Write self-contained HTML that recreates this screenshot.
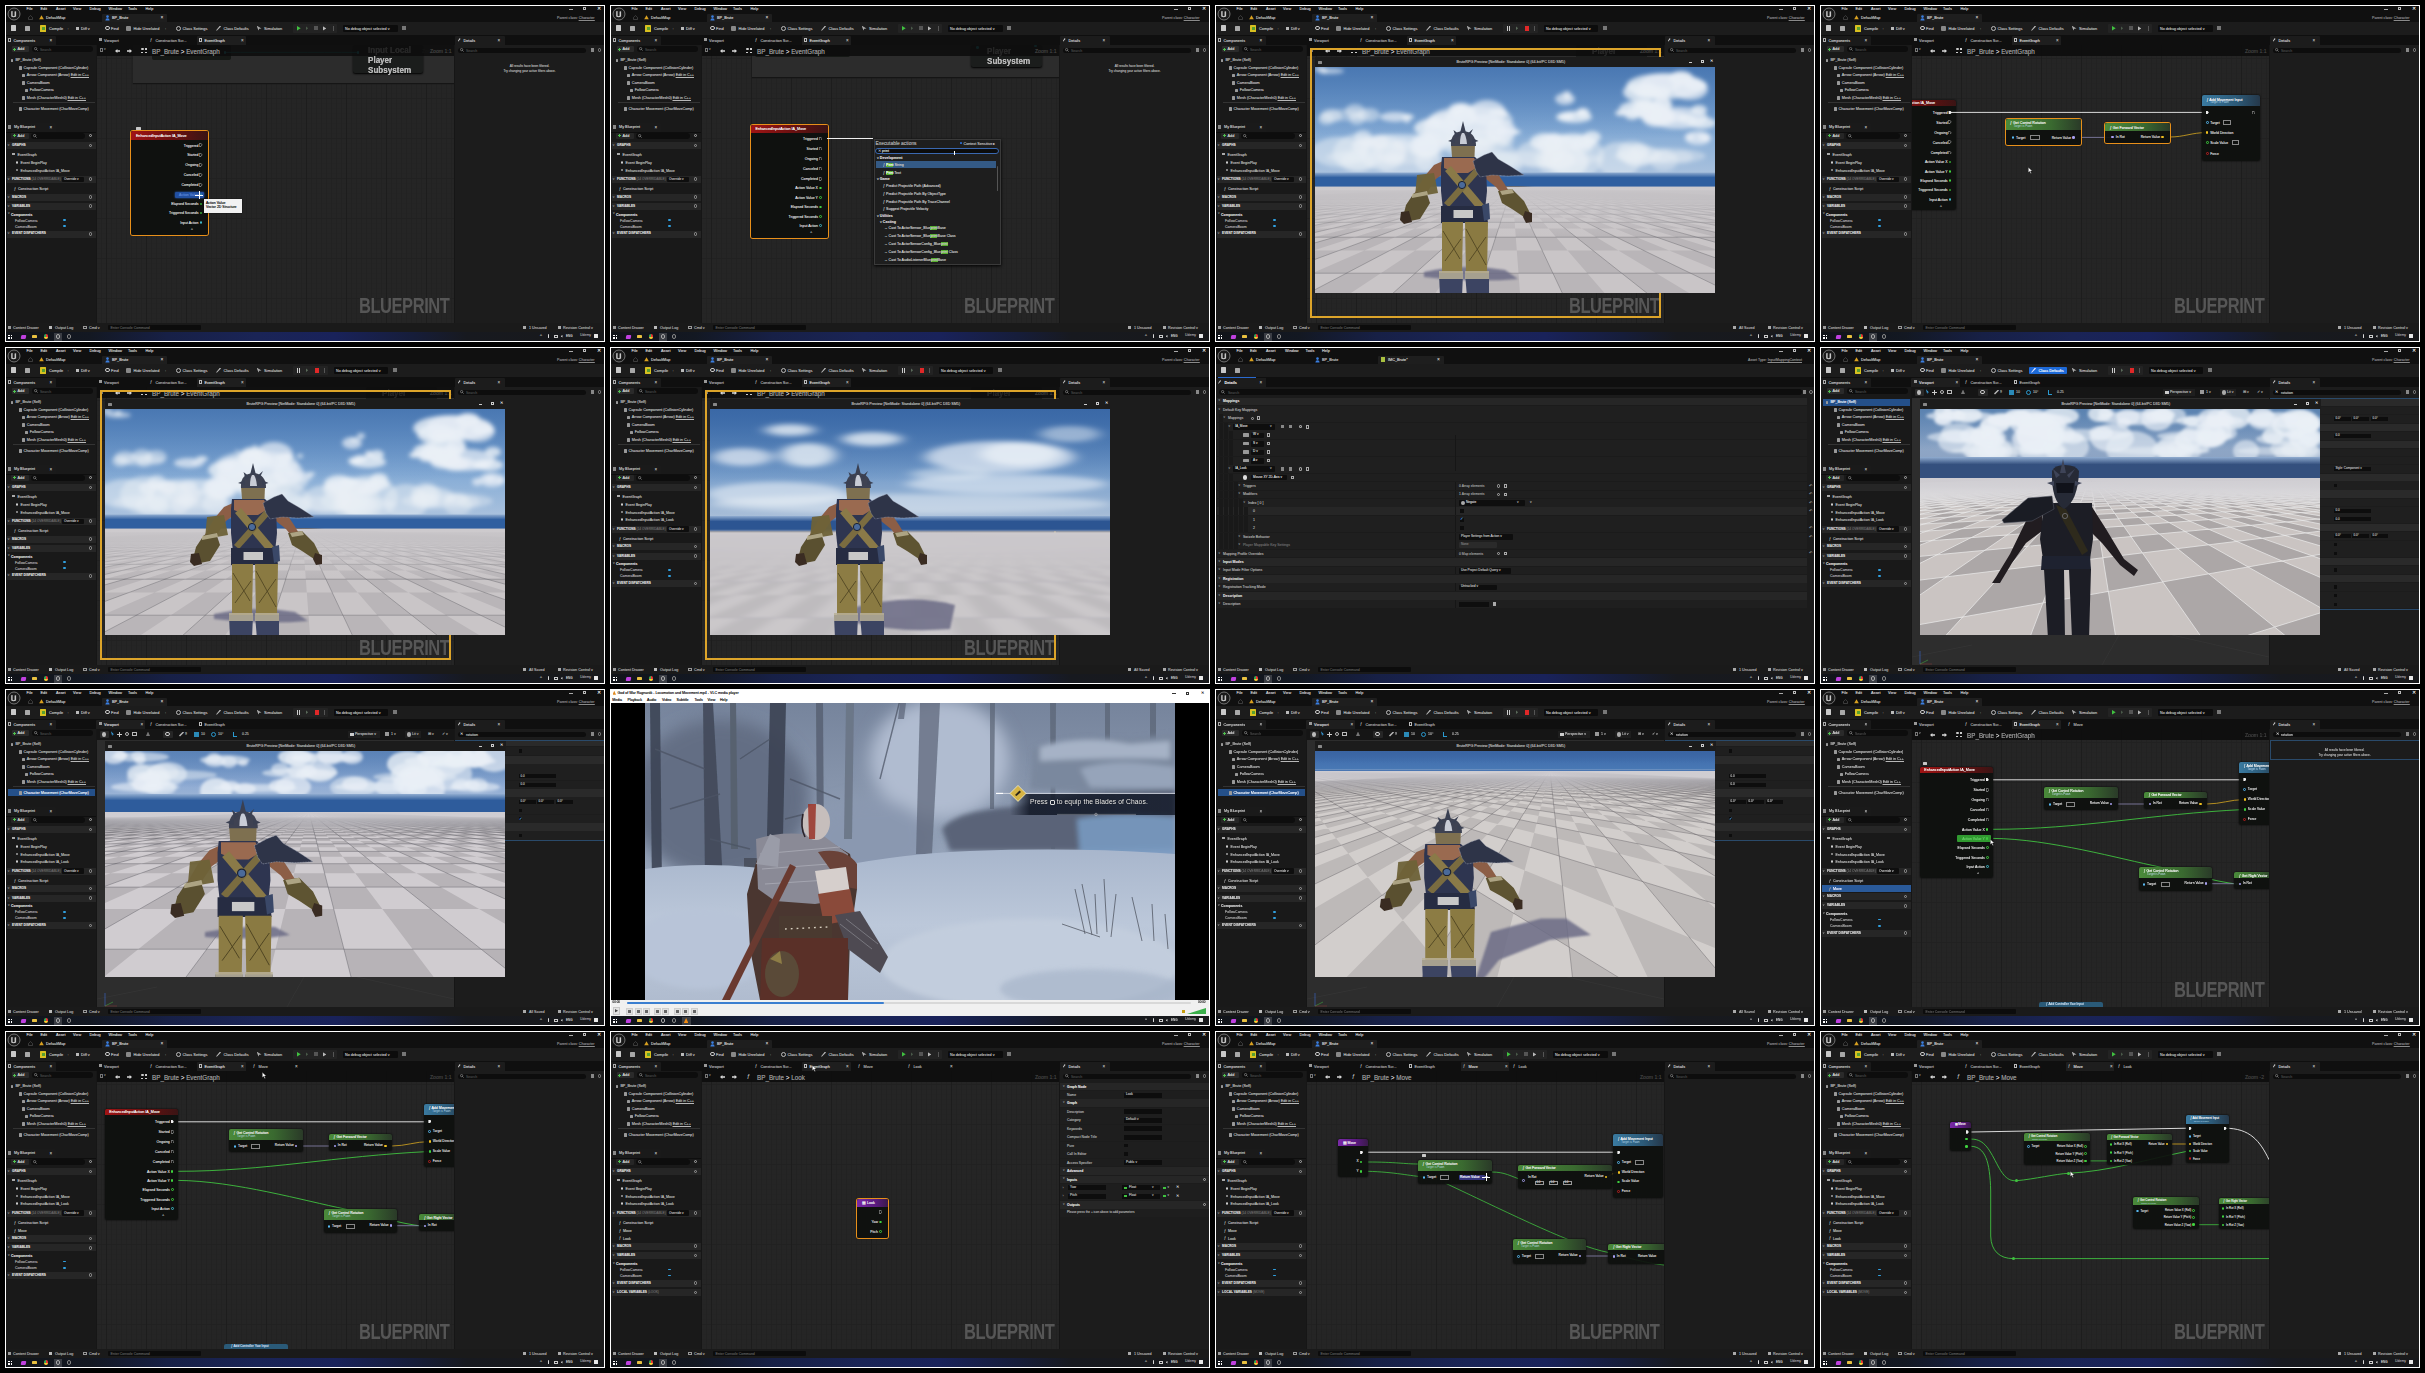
<!DOCTYPE html><html><head><meta charset="utf-8"><style>
*{margin:0;padding:0;box-sizing:border-box}
html,body{width:2425px;height:1373px;background:#000;overflow:hidden;font-family:"Liberation Sans",sans-serif}
.cell{position:absolute;width:600px;height:337px;overflow:hidden;background:#161616}
.bd{position:absolute;left:0;top:0;width:600px;height:337px;border:1px solid #fff;z-index:50}
.a{position:absolute}
.t{position:absolute;white-space:nowrap;color:#bdbdbd;font-size:3.4px;line-height:1.18;text-shadow:0 0 .35px currentColor;font-style:normal;font-weight:normal}
b{position:absolute;display:block;font-weight:normal}
i{position:absolute;white-space:nowrap;color:#bbb;line-height:1.18;text-shadow:0 0 .35px currentColor;font-style:normal;font-weight:normal}
.menu{left:1px;top:1px;width:598px;height:8px;background:#101010}
.tabs{left:1px;top:8px;width:598px;height:9px;background:#101010}
.tb{left:1px;top:17px;width:598px;height:13px;background:#1c1c1c}
.ptab{left:1px;top:30px;width:598px;height:10px;background:#0f0f0f}
.lp{left:1px;top:40px;width:90px;height:278px;background:#191919}
.dp{left:450px;top:40px;width:149px;height:278px;background:#1c1c1c}
.sb{left:1px;top:318px;width:598px;height:9px;background:#1a1a1a}
.task{left:1px;top:327px;width:598px;height:9px;background:linear-gradient(90deg,#111419 0%,#131822 14%,#172046 27%,#1a2456 42%,#19225a 55%,#161d3a 68%,#17191f 77%,#18191b 100%)}
.graph{left:92px;top:40px;width:357px;height:278px;background-color:#252525;
 background-image:linear-gradient(90deg,#1d1d1d 1px,transparent 1px),linear-gradient(0deg,#212121 1px,transparent 1px),linear-gradient(90deg,#222 1px,transparent 1px),linear-gradient(0deg,#242424 1px,transparent 1px);
 background-size:40px 40px,40px 40px,5px 5px,5px 5px;background-position:9px 0,0 14px,9px 0,0 14px}
.gbar{left:92px;top:40px;width:357px;height:11px;background:rgba(12,12,12,.85)}
.wm{position:absolute;left:354px;top:290px;font-weight:bold;font-size:22px;line-height:22px;color:#565656;transform-origin:0 0;transform:scale(.75,1.02);letter-spacing:-.6px}
.hdr{position:absolute;left:2px;width:89px;height:7px;background:#262626}
.srch{position:absolute;background:#0d0d0d;border-radius:3px}
.node{position:absolute;background:rgba(14,16,14,.93);border-radius:2px;box-shadow:0 0 2px #000}
.nh{position:absolute;left:0;top:0;right:0;border-radius:2px 2px 0 0}
.sel{outline:1px solid #f0a020;outline-offset:0px}
.pin{position:absolute;width:2.6px;height:2.6px;border-radius:50%;border:.6px solid #2fcf2f}
.ex{position:absolute;width:0;height:0;border-top:1.6px solid transparent;border-bottom:1.6px solid transparent;border-left:2.6px solid #ddd}
.ic{position:absolute;background:#9a9a9a}
</style></head><body><div class="cell" style="left:5px;top:5px"><div class="a menu"></div><div class="a tabs"></div><div class="a tb"></div><div class="a ptab"></div><svg class="a" style="left:2px;top:2px" width="14" height="14" viewBox="0 0 14 14"><circle cx="7" cy="7" r="6" fill="#1a1a1a" stroke="#9a9a9a" stroke-width=".7"/><path d="M4.2 4.3 L5.6 4 L5.6 8.8 Q6.6 9.6 7.6 8.8 L7.6 4.6 L9.1 4.2 L9.1 9.6 Q6.6 11 4.2 9.6Z" fill="#c8c8c8"/></svg><i style="left:21.5px;top:1.8px;font-size:3.8px;color:#c8c8c8;">File</i><i style="left:35.5px;top:1.8px;font-size:3.8px;color:#c8c8c8;">Edit</i><i style="left:51px;top:1.8px;font-size:3.8px;color:#c8c8c8;">Asset</i><i style="left:68px;top:1.8px;font-size:3.8px;color:#c8c8c8;">View</i><i style="left:84.5px;top:1.8px;font-size:3.8px;color:#c8c8c8;">Debug</i><i style="left:103.5px;top:1.8px;font-size:3.8px;color:#c8c8c8;">Window</i><i style="left:123px;top:1.8px;font-size:3.8px;color:#c8c8c8;">Tools</i><i style="left:140.5px;top:1.8px;font-size:3.8px;color:#c8c8c8;">Help</i><b style="left:564px;top:4px;width:4px;height:.6px;background:#aaa;"></b><div class="a" style="left:578px;top:2.2px;width:3.4px;height:3.2px;border:.6px solid #bbb"></div><i style="left:591.5px;top:1.3px;font-size:4.6px;color:#ddd;">✕</i><svg class="a" style="left:22.5px;top:10px" width="5" height="5" viewBox="0 0 5 5"><path d="M.5 2.5 L2.5 .6 L4.5 2.5 V4.5 H.5Z" fill="none" stroke="#666" stroke-width=".5"/></svg><svg class="a" style="left:33.5px;top:10.3px" width="5" height="4.5" viewBox="0 0 5 4.5"><path d="M2.5 .2 L4.8 4.3 H.2Z" fill="#d8a020"/></svg><i style="left:41px;top:10.8px;font-size:3.8px;color:#c0c0c0;">DefaultMap</i><b style="left:97px;top:8.5px;width:65px;height:8.5px;background:#1e1e1e;border-radius:1px 1px 0 0"></b><svg class="a" style="left:100px;top:9.5px" width="5" height="6" viewBox="0 0 5 6"><circle cx="2.5" cy="1.6" r="1.3" fill="#3a7ee0"/><path d="M.4 5.6 Q.4 3.2 2.5 3.2 Q4.6 3.2 4.6 5.6Z" fill="#3a7ee0"/></svg><i style="left:107px;top:10.8px;font-size:3.8px;color:#d0d0d0;">BP_Brute</i><i style="left:155.5px;top:10.3px;font-size:4.9px;">×</i><i style="left:552px;top:10.8px;font-size:3.6px;color:#8a8a8a;">Parent class: <u>Character</u></i><b style="left:5.5px;top:20px;width:5px;height:6px;background:#c8c8c8;border-radius:.5px"></b><b style="left:19.5px;top:20.5px;width:5px;height:5.5px;background:#a8a8a8;border-radius:.5px"></b><b style="left:35px;top:19.5px;width:6px;height:7px;background:#d8c020;border-radius:.5px"></b><b style="left:36.5px;top:21.5px;width:3px;height:3px;background:#58a030;"></b><i style="left:44px;top:22px;font-size:3.9px;">Compile</i><i style="left:62.5px;top:21.8px;font-size:4.2px;color:#888;">:</i><b style="left:71px;top:21.5px;width:3px;height:3.5px;background:#bbb;"></b><i style="left:76px;top:22px;font-size:3.9px;">Diff v</i><b style="left:100px;top:20.5px;width:4.5px;height:4.5px;border:.6px solid #ccc;border-radius:50%"></b><i style="left:106px;top:22px;font-size:3.9px;">Find</i><b style="left:121px;top:20.5px;width:5px;height:5px;background:#888;border-radius:1px"></b><i style="left:128.5px;top:22px;font-size:3.9px;">Hide Unrelated</i><i style="left:160px;top:21.8px;font-size:4.2px;color:#888;">:</i><b style="left:170.5px;top:20.5px;width:5px;height:5px;border:.7px solid #bbb;border-radius:50%"></b><i style="left:177.5px;top:22px;font-size:3.9px;">Class Settings</i><b style="left:211px;top:20.5px;width:5px;height:5px;background:#bbb;clip-path:polygon(0 100%,20% 100%,100% 20%,80% 0)"></b><i style="left:218.5px;top:22px;font-size:3.9px;">Class Defaults</i><b style="left:251.5px;top:20.5px;width:5px;height:5px;background:#aaa;clip-path:polygon(0 0,100% 60%,55% 65%,40% 100%)"></b><i style="left:259px;top:22px;font-size:3.9px;">Simulation</i><b style="left:288px;top:18.8px;width:44px;height:9.5px;background:#232323;border-radius:1px"></b><b style="left:291.7px;top:20.8px;width:4px;height:5px;background:#40c040;clip-path:polygon(0 0,100% 50%,0 100%)"></b><b style="left:300.5px;top:21px;width:2.6px;height:4.6px;background:#4a5a4a;clip-path:polygon(0 0,100% 50%,0 100%)"></b><b style="left:309px;top:21.2px;width:4px;height:4.2px;background:#555;"></b><b style="left:317.5px;top:21px;width:3.8px;height:4.8px;background:#bbb;clip-path:polygon(0 0,100% 50%,0 100%)"></b><b style="left:328px;top:21px;width:.6px;height:5px;background:#555;"></b><b style="left:338px;top:19.5px;width:55px;height:7px;background:#0c0c0c;border-radius:1px"></b><i style="left:340px;top:22px;font-size:3.7px;">No debug object selected v</i><b style="left:397px;top:21px;width:3.5px;height:4px;background:#777;"></b><div class="a sb"></div><b style="left:3px;top:320.5px;width:3px;height:3.5px;background:#999;"></b><i style="left:8px;top:320.7px;font-size:3.7px;color:#aaa;">Content Drawer</i><b style="left:44px;top:320.5px;width:3px;height:3.5px;background:#bbb;"></b><i style="left:50px;top:320.7px;font-size:3.7px;color:#aaa;">Output Log</i><b style="left:78px;top:320.7px;width:4px;height:3.2px;border:.5px solid #999"></b><i style="left:84px;top:320.7px;font-size:3.7px;color:#aaa;">Cmd v</i><b style="left:103px;top:319.5px;width:93px;height:5.5px;background:#0c0c0c;border-radius:1px"></b><i style="left:105.5px;top:320.6px;font-size:3.5px;color:#555;">Enter Console Command</i><b style="left:518px;top:320.5px;width:3px;height:3.6px;background:#aaa;"></b><i style="left:524px;top:320.7px;font-size:3.7px;color:#aaa;">1 Unsaved</i><b style="left:553px;top:320.5px;width:2.5px;height:3.8px;background:#aaa;"></b><i style="left:558px;top:320.7px;font-size:3.7px;color:#aaa;">Revision Control v</i><div class="a task"></div><b style="left:3.3px;top:329.5px;width:1.9px;height:1.9px;background:#fff;"></b><b style="left:5.6px;top:329.5px;width:1.9px;height:1.9px;background:#fff;"></b><b style="left:3.3px;top:331.8px;width:1.9px;height:1.9px;background:#fff;"></b><b style="left:5.6px;top:331.8px;width:1.9px;height:1.9px;background:#fff;"></b><b style="left:15.5px;top:329.5px;width:4.5px;height:4px;background:#c040e0;border-radius:1px;transform:skewX(-10deg)"></b><b style="left:27px;top:329.8px;width:4.8px;height:3.6px;background:#e8c040;border-radius:.4px"></b><div class="a" style="left:38.6px;top:329.2px;width:4.4px;height:4.4px;border-radius:50%;background:conic-gradient(#e33 0 33%,#fc3 0 66%,#3a5 0)"></div><b style="left:48.5px;top:327.5px;width:8.5px;height:8.5px;background:#3a3d44;"></b><b style="left:50.5px;top:329.3px;width:4.5px;height:4.5px;border:.6px solid #aaa;border-radius:50%"></b><b style="left:61.5px;top:329.4px;width:4.2px;height:4.2px;border:.6px solid #888;border-radius:50%"></b><i style="left:535px;top:329.4px;font-size:4.1px;">^</i><b style="left:542.5px;top:329.2px;width:1.6px;height:4.2px;background:#ddd;border-radius:1px"></b><b style="left:549px;top:329.6px;width:3.8px;height:3px;border:.5px solid #ccc"></b><b style="left:555.5px;top:330px;width:2px;height:2.5px;background:#ccc;clip-path:polygon(0 30%,40% 30%,100% 0,100% 100%,40% 70%,0 70%)"></b><i style="left:561px;top:329.9px;font-size:3px;color:#ccc;">ENG</i><i style="left:575px;top:328px;font-size:3.5px;color:rgba(230,230,230,.55);">Udemy</i><b style="left:588.5px;top:329.4px;width:4.5px;height:3.6px;background:#e8e8e8;border-radius:.3px"></b><div class="a lp"></div><b style="left:1px;top:31px;width:50px;height:9px;background:#1a1a1a;border-radius:1px 1px 0 0"></b><b style="left:3px;top:33px;width:3px;height:3.5px;border:.5px solid #aaa"></b><i style="left:8.5px;top:33.6px;font-size:3.8px;color:#c0c0c0;">Components</i><i style="left:44.5px;top:32.9px;font-size:4.6px;color:#aaa;">×</i><b style="left:7px;top:41px;width:17px;height:6px;background:#2a2a2a;border-radius:1px"></b><b style="left:9px;top:42.5px;width:1px;height:3px;background:#50c050;"></b><b style="left:8px;top:43.5px;width:3px;height:1px;background:#50c050;"></b><i style="left:12.5px;top:42.4px;font-size:3.8px;color:#ccc;">Add</i><div class="srch" style="left:27px;top:41px;width:61px;height:6px"></div><svg class="a" style="left:29px;top:42px" width="4" height="4" viewBox="0 0 4 4"><circle cx="1.6" cy="1.6" r="1.15" fill="none" stroke="#aaa" stroke-width=".55"/><path d="M2.4 2.4L3.6 3.6" stroke="#aaa" stroke-width=".6"/></svg><i style="left:35px;top:42.6px;font-size:3.5px;color:#444;">Search</i><b style="left:5.9px;top:53.6px;width:2.6px;height:3.6px;background:#999;border-radius:.6px"></b><i style="left:10.4px;top:53.2px;font-size:3.8px;color:#b8b8b8;letter-spacing:-.05px">BP_Brute (Self)</i><b style="left:14.1px;top:61.1px;width:2.6px;height:3.6px;background:#999;border-radius:.6px"></b><i style="left:18.6px;top:60.7px;font-size:3.8px;color:#b8b8b8;letter-spacing:-.05px">Capsule Component (CollisionCylinder)</i><b style="left:17.3px;top:68.7px;width:2.6px;height:3.6px;background:#999;border-radius:.6px"></b><i style="left:21.8px;top:68.3px;font-size:3.8px;color:#b8b8b8;letter-spacing:-.05px">Arrow Component (Arrow) <u>Edit in C++</u></i><b style="left:17.3px;top:76.2px;width:2.6px;height:3.6px;background:#999;border-radius:.6px"></b><i style="left:21.8px;top:75.8px;font-size:3.8px;color:#b8b8b8;letter-spacing:-.05px">CameraBoom</i><b style="left:20.3px;top:83.8px;width:2.6px;height:3.6px;background:#999;border-radius:.6px"></b><i style="left:24.8px;top:83.4px;font-size:3.8px;color:#b8b8b8;letter-spacing:-.05px">FollowCamera</i><b style="left:17.3px;top:91.3px;width:2.6px;height:3.6px;background:#999;border-radius:.6px"></b><i style="left:21.8px;top:90.9px;font-size:3.8px;color:#b8b8b8;letter-spacing:-.05px">Mesh (CharacterMesh0)  <u>Edit in C++</u></i><b style="left:14.1px;top:102.2px;width:2.6px;height:3.6px;background:#999;border-radius:.6px"></b><i style="left:18.6px;top:101.8px;font-size:3.8px;color:#b8b8b8;letter-spacing:-.05px">Character Movement (CharMoveComp)</i><b style="left:8px;top:97.3px;width:82px;height:.5px;background:#333;"></b><b style="left:1px;top:118px;width:50px;height:8.5px;background:#1a1a1a;border-radius:1px 1px 0 0"></b><b style="left:3px;top:120px;width:3px;height:3.5px;background:#888;"></b><i style="left:9px;top:120.4px;font-size:3.8px;color:#c0c0c0;">My Blueprint</i><i style="left:44.5px;top:119.6px;font-size:4.6px;color:#aaa;">×</i><b style="left:1px;top:126.5px;width:90px;height:.5px;background:#0e0e0e;"></b><b style="left:6px;top:128px;width:18px;height:5.5px;background:#262626;border-radius:1px"></b><b style="left:9px;top:129.3px;width:1px;height:3px;background:#50c050;"></b><b style="left:8px;top:130.3px;width:3px;height:1px;background:#50c050;"></b><i style="left:12.5px;top:129.4px;font-size:3.8px;color:#ccc;">Add</i><div class="srch" style="left:26px;top:128px;width:54px;height:5.5px"></div><svg class="a" style="left:28px;top:128.8px" width="4" height="4" viewBox="0 0 4 4"><circle cx="1.6" cy="1.6" r="1.15" fill="none" stroke="#aaa" stroke-width=".55"/><path d="M2.4 2.4L3.6 3.6" stroke="#aaa" stroke-width=".6"/></svg><b style="left:83.6px;top:128.6px;width:3.6px;height:3.6px;border:.6px solid #aaa;border-radius:50%"></b><div class="hdr" style="top:137.29999999999998px"></div><i style="left:7px;top:139.2px;font-size:3.2px;color:#c8c8c8;font-weight:bold;">GRAPHS</i><i style="left:2.8px;top:139.2px;font-size:3.2px;color:#888;">v</i><b style="left:83.6px;top:138.7px;width:3.8px;height:3.8px;border:.6px solid #999;border-radius:50%"></b><b style="left:7px;top:147.8px;width:3px;height:2.6px;background:#aaa;"></b><i style="left:12.5px;top:147.9px;font-size:3.6px;">EventGraph</i><b style="left:10.5px;top:155.8px;width:2.8px;height:2.8px;border:.6px solid #ccc;border-radius:50%"></b><i style="left:15.5px;top:156px;font-size:3.6px;color:#b8b8b8;">Event BeginPlay</i><b style="left:10.5px;top:163.5px;width:2.8px;height:2.8px;border:.6px solid #ccc;border-radius:50%"></b><i style="left:15.5px;top:163.7px;font-size:3.6px;color:#b8b8b8;">EnhancedInputAction IA_Move</i><div class="hdr" style="top:170.99999999999997px"></div><i style="left:7px;top:172.9px;font-size:3.2px;color:#c8c8c8;font-weight:bold;">FUNCTIONS <span style='color:#666;font-weight:normal'>(14 OVERRIDABLE)</span></i><i style="left:2.8px;top:172.9px;font-size:3.2px;color:#888;">v</i><b style="left:57px;top:171.7px;width:22px;height:5.2px;background:#0e0e0e;border-radius:1px"></b><i style="left:59px;top:173.1px;font-size:3.2px;">Override v</i><b style="left:83.6px;top:172.4px;width:3.8px;height:3.8px;border:.6px solid #999;border-radius:50%"></b><i style="left:9px;top:182px;font-size:3.7px;color:#aaa;">ƒ</i><i style="left:13px;top:182.2px;font-size:3.6px;">Construction Script</i><div class="hdr" style="top:188.6px"></div><i style="left:7px;top:190.5px;font-size:3.2px;color:#c8c8c8;font-weight:bold;">MACROS</i><i style="left:2.8px;top:190.5px;font-size:3.2px;color:#888;">v</i><b style="left:83.6px;top:190px;width:3.8px;height:3.8px;border:.6px solid #999;border-radius:50%"></b><div class="hdr" style="top:197.9px"></div><i style="left:7px;top:199.8px;font-size:3.2px;color:#c8c8c8;font-weight:bold;">VARIABLES</i><i style="left:2.8px;top:199.8px;font-size:3.2px;color:#888;">v</i><b style="left:83.6px;top:199.3px;width:3.8px;height:3.8px;border:.6px solid #999;border-radius:50%"></b><i style="left:3px;top:207.4px;font-size:3.2px;color:#888;">v</i><i style="left:6px;top:207.5px;font-size:3.5px;color:#c8c8c8;font-weight:bold;">Components</i><i style="left:10px;top:213.5px;font-size:3.5px;color:#a8a8a8;">FollowCamera</i><b style="left:58px;top:214.2px;width:3.4px;height:1.8px;background:#30a0e0;border-radius:1px"></b><i style="left:10px;top:219.7px;font-size:3.5px;color:#a8a8a8;">CameraBoom</i><b style="left:58px;top:220.4px;width:3.4px;height:1.8px;background:#30a0e0;border-radius:1px"></b><div class="hdr" style="top:225.49999999999997px"></div><i style="left:7px;top:227.4px;font-size:3.2px;color:#c8c8c8;font-weight:bold;">EVENT DISPATCHERS</i><i style="left:2.8px;top:227.4px;font-size:3.2px;color:#888;">v</i><b style="left:83.6px;top:226.9px;width:3.8px;height:3.8px;border:.6px solid #999;border-radius:50%"></b><b style="left:93.5px;top:33.2px;width:3.5px;height:3px;background:#999;"></b><i style="left:99px;top:33.6px;font-size:3.8px;color:#a8a8a8;">Viewport</i><i style="left:145px;top:33.2px;font-size:3.9px;color:#aaa;">ƒ</i><i style="left:150.5px;top:33.6px;font-size:3.8px;color:#a8a8a8;">Construction Scr...</i><b style="left:191.5px;top:31px;width:49px;height:9px;background:#1e1e1e;border-radius:1px 1px 0 0"></b><b style="left:194px;top:33.2px;width:3.4px;height:3.4px;border:.5px dashed #bbb"></b><i style="left:199.5px;top:33.6px;font-size:3.8px;color:#d0d0d0;">EventGraph</i><i style="left:236px;top:32.9px;font-size:4.6px;color:#aaa;">×</i><b style="left:450px;top:31px;width:50px;height:9px;background:#1c1c1c;border-radius:1px 1px 0 0"></b><b style="left:452.5px;top:33px;width:3px;height:3.6px;background:#ccc;clip-path:polygon(0 100%,25% 100%,100% 25%,75% 0)"></b><i style="left:458.5px;top:33.6px;font-size:3.8px;color:#c8c8c8;">Details</i><i style="left:492.5px;top:32.9px;font-size:4.6px;color:#aaa;">×</i><div class="a graph"></div><div class="a" style="left:92px;top:40px;width:357px;height:278px;overflow:hidden"><div class="a" style="left:-92px;top:-40px;width:600px;height:337px"><b style="left:128px;top:40px;width:321px;height:38px;background:#2c2c2c;box-shadow:0 1px 1px #151515"></b><b style="left:147px;top:40px;width:79px;height:15px;background:#151815;border-radius:2px"></b><i style="left:160px;top:46.2px;font-size:3.7px;color:#777;">Enhanced Input Local...</i><b style="left:348px;top:40px;width:70px;height:28px;background:#1b1d1c;border-radius:2px;box-shadow:0 1px 2px #000"></b><i style="left:363px;top:40.2px;font-size:9.5px;color:#b8b8b8;font-weight:bold;line-height:10px;transform:scaleX(.85);transform-origin:0 0">Input Local<br>Player<br>Subsystem</i><svg class="a" style="left:0;top:0" width="600" height="337" viewBox="0 0 600 337"><path d="M220 47.4 C260 47.4 310 47.4 353 47.4" fill="none" stroke="#1a6a70" stroke-width="0.9"/></svg><b style="left:218.5px;top:46px;width:2.8px;height:2.8px;background:#1f8f9a;border-radius:50%"></b><b style="left:351.5px;top:46px;width:2.8px;height:2.8px;background:#1f8f9a;border-radius:50%"></b><i style="left:417px;top:43.1px;font-size:5.1px;color:#3e3e3e;">Zoom 1:1</i><div class="node" style="left:126.4px;top:126px;width:77px;height:103.5px;box-shadow:0 0 0 1px #e8901a,0 0 2px #000;"><div class="nh" style="height:9px;background:linear-gradient(90deg,#a01414,#6a1010 55%,#3a1414)"></div></div><i style="left:130.9px;top:128.8px;font-size:3.7px;color:#f4f4f4;">EnhancedInputAction IA_Move</i><svg class="a" style="left:194.3px;top:138.4px" width="3.4" height="3.8" viewBox="0 0 3.4 3.8"><path d="M.3 .3H2L3.1 1.9L2 3.5H.3Z" fill="none" stroke="#d8d8d8" stroke-width=".5"/></svg><i style="left:193.5px;top:138.6px;font-size:3.5px;color:#d8d8d8;transform:translateX(-100%)">Triggered</i><svg class="a" style="left:194.3px;top:148.1px" width="3.4" height="3.8" viewBox="0 0 3.4 3.8"><path d="M.3 .3H2L3.1 1.9L2 3.5H.3Z" fill="none" stroke="#d8d8d8" stroke-width=".5"/></svg><i style="left:193.5px;top:148.3px;font-size:3.5px;color:#d8d8d8;transform:translateX(-100%)">Started</i><svg class="a" style="left:194.3px;top:158.1px" width="3.4" height="3.8" viewBox="0 0 3.4 3.8"><path d="M.3 .3H2L3.1 1.9L2 3.5H.3Z" fill="none" stroke="#d8d8d8" stroke-width=".5"/></svg><i style="left:193.5px;top:158.3px;font-size:3.5px;color:#d8d8d8;transform:translateX(-100%)">Ongoing</i><svg class="a" style="left:194.3px;top:168.1px" width="3.4" height="3.8" viewBox="0 0 3.4 3.8"><path d="M.3 .3H2L3.1 1.9L2 3.5H.3Z" fill="none" stroke="#d8d8d8" stroke-width=".5"/></svg><i style="left:193.5px;top:168.3px;font-size:3.5px;color:#d8d8d8;transform:translateX(-100%)">Canceled</i><svg class="a" style="left:194.3px;top:178.2px" width="3.4" height="3.8" viewBox="0 0 3.4 3.8"><path d="M.3 .3H2L3.1 1.9L2 3.5H.3Z" fill="none" stroke="#d8d8d8" stroke-width=".5"/></svg><i style="left:193.5px;top:178.4px;font-size:3.5px;color:#d8d8d8;transform:translateX(-100%)">Completed</i><div class="a" style="left:194.5px;top:188.29999999999998px;width:2.8px;height:2.8px;border-radius:50%;border:.55px solid #3fd23f"></div><i style="left:193.5px;top:188px;font-size:3.5px;color:#d8d8d8;transform:translateX(-100%)">Action Value</i><div class="a" style="left:194.5px;top:197.5px;width:2.8px;height:2.8px;border-radius:50%;border:.55px solid #3fd23f"></div><i style="left:193.5px;top:197.2px;font-size:3.5px;color:#d8d8d8;transform:translateX(-100%)">Elapsed Seconds</i><div class="a" style="left:194.5px;top:206.7px;width:2.8px;height:2.8px;border-radius:50%;border:.55px solid #3fd23f"></div><i style="left:193.5px;top:206.4px;font-size:3.5px;color:#d8d8d8;transform:translateX(-100%)">Triggered Seconds</i><div class="a" style="left:194.5px;top:216.29999999999998px;width:2.8px;height:2.8px;border-radius:50%;border:.55px solid #40b8c8"></div><i style="left:193.5px;top:216px;font-size:3.5px;color:#d8d8d8;transform:translateX(-100%)">Input Action</i><b style="left:169.6px;top:186.7px;width:29px;height:6.1px;background:rgba(40,100,210,.75);border-radius:1px;box-shadow:0 0 2px #2a6ad0"></b><i style="left:185.9px;top:223.4px;font-size:3.9px;">^</i><b style="left:130.7px;top:122px;width:5.3px;height:3.2px;background:#c8c8c8;border-radius:.5px"></b><b style="left:193.5px;top:186px;width:.7px;height:8px;background:#fff;"></b><b style="left:190px;top:189.5px;width:8px;height:.7px;background:#fff;"></b><b style="left:198.9px;top:193.7px;width:38.5px;height:14px;background:#f2f2f2;box-shadow:0 0 1px #000"></b><i style="left:201px;top:195.7px;font-size:3.5px;color:#222;line-height:4.2px">Action Value<br>Vector 2D Structure</i></div></div><div class="a gbar"></div><b style="left:95px;top:43px;width:2.6px;height:3.6px;border:.5px solid #777"></b><i style="left:99px;top:43.4px;font-size:3.2px;color:#888;">v</i><svg class="a" style="left:109.5px;top:43.5px" width="5" height="4" viewBox="0 0 5 4"><path d="M0 2L2.4 0V1.2H5V2.8H2.4V4Z" fill="#d8d8d8"/></svg><svg class="a" style="left:121.5px;top:43.5px" width="5" height="4" viewBox="0 0 5 4"><path d="M5 2L2.6 0V1.2H0V2.8H2.6V4Z" fill="#d8d8d8"/></svg><b style="left:136px;top:42.5px;width:2.6px;height:2.6px;background:#ccc;border-radius:50%"></b><b style="left:140px;top:43.2px;width:2px;height:1.8px;background:#ccc;"></b><b style="left:136px;top:46.5px;width:2px;height:1.8px;background:#ccc;"></b><b style="left:140px;top:46.5px;width:2px;height:1.8px;background:#ccc;"></b><i style="left:147px;top:42.5px;font-size:6.3px;color:#8e8e8e;">BP_Brute <span style='color:#ccc'>&gt;</span> EventGraph</i><i style="left:425px;top:42.9px;font-size:5.1px;color:#3e3e3e;">Zoom 1:1</i><div class="wm">BLUEPRINT</div><div class="a dp"></div><div class="srch" style="left:453px;top:42.5px;width:128px;height:5.5px"></div><svg class="a" style="left:455px;top:43.2px" width="4" height="4" viewBox="0 0 4 4"><circle cx="1.6" cy="1.6" r="1.15" fill="none" stroke="#aaa" stroke-width=".55"/><path d="M2.4 2.4L3.6 3.6" stroke="#aaa" stroke-width=".6"/></svg><i style="left:461px;top:43.6px;font-size:3.5px;color:#444;">Search</i><b style="left:585.5px;top:43px;width:3.4px;height:3.6px;background:#888;"></b><b style="left:592.5px;top:43px;width:3.8px;height:3.8px;border:.6px solid #888;border-radius:50%"></b><div class="t" style="left:450px;width:149px;top:59px;text-align:center;font-size:3.1px;line-height:5px;color:#b0b0b0">All results have been filtered.<br>Try changing your active filters above.</div><div class="bd"></div></div><div class="cell" style="left:610px;top:5px"><div class="a menu"></div><div class="a tabs"></div><div class="a tb"></div><div class="a ptab"></div><svg class="a" style="left:2px;top:2px" width="14" height="14" viewBox="0 0 14 14"><circle cx="7" cy="7" r="6" fill="#1a1a1a" stroke="#9a9a9a" stroke-width=".7"/><path d="M4.2 4.3 L5.6 4 L5.6 8.8 Q6.6 9.6 7.6 8.8 L7.6 4.6 L9.1 4.2 L9.1 9.6 Q6.6 11 4.2 9.6Z" fill="#c8c8c8"/></svg><i style="left:21.5px;top:1.8px;font-size:3.8px;color:#c8c8c8;">File</i><i style="left:35.5px;top:1.8px;font-size:3.8px;color:#c8c8c8;">Edit</i><i style="left:51px;top:1.8px;font-size:3.8px;color:#c8c8c8;">Asset</i><i style="left:68px;top:1.8px;font-size:3.8px;color:#c8c8c8;">View</i><i style="left:84.5px;top:1.8px;font-size:3.8px;color:#c8c8c8;">Debug</i><i style="left:103.5px;top:1.8px;font-size:3.8px;color:#c8c8c8;">Window</i><i style="left:123px;top:1.8px;font-size:3.8px;color:#c8c8c8;">Tools</i><i style="left:140.5px;top:1.8px;font-size:3.8px;color:#c8c8c8;">Help</i><b style="left:564px;top:4px;width:4px;height:.6px;background:#aaa;"></b><div class="a" style="left:578px;top:2.2px;width:3.4px;height:3.2px;border:.6px solid #bbb"></div><i style="left:591.5px;top:1.3px;font-size:4.6px;color:#ddd;">✕</i><svg class="a" style="left:22.5px;top:10px" width="5" height="5" viewBox="0 0 5 5"><path d="M.5 2.5 L2.5 .6 L4.5 2.5 V4.5 H.5Z" fill="none" stroke="#666" stroke-width=".5"/></svg><svg class="a" style="left:33.5px;top:10.3px" width="5" height="4.5" viewBox="0 0 5 4.5"><path d="M2.5 .2 L4.8 4.3 H.2Z" fill="#d8a020"/></svg><i style="left:41px;top:10.8px;font-size:3.8px;color:#c0c0c0;">DefaultMap</i><b style="left:97px;top:8.5px;width:65px;height:8.5px;background:#1e1e1e;border-radius:1px 1px 0 0"></b><svg class="a" style="left:100px;top:9.5px" width="5" height="6" viewBox="0 0 5 6"><circle cx="2.5" cy="1.6" r="1.3" fill="#3a7ee0"/><path d="M.4 5.6 Q.4 3.2 2.5 3.2 Q4.6 3.2 4.6 5.6Z" fill="#3a7ee0"/></svg><i style="left:107px;top:10.8px;font-size:3.8px;color:#d0d0d0;">BP_Brute</i><i style="left:155.5px;top:10.3px;font-size:4.9px;">×</i><i style="left:552px;top:10.8px;font-size:3.6px;color:#8a8a8a;">Parent class: <u>Character</u></i><b style="left:5.5px;top:20px;width:5px;height:6px;background:#c8c8c8;border-radius:.5px"></b><b style="left:19.5px;top:20.5px;width:5px;height:5.5px;background:#a8a8a8;border-radius:.5px"></b><b style="left:35px;top:19.5px;width:6px;height:7px;background:#d8c020;border-radius:.5px"></b><b style="left:36.5px;top:21.5px;width:3px;height:3px;background:#58a030;"></b><i style="left:44px;top:22px;font-size:3.9px;">Compile</i><i style="left:62.5px;top:21.8px;font-size:4.2px;color:#888;">:</i><b style="left:71px;top:21.5px;width:3px;height:3.5px;background:#bbb;"></b><i style="left:76px;top:22px;font-size:3.9px;">Diff v</i><b style="left:100px;top:20.5px;width:4.5px;height:4.5px;border:.6px solid #ccc;border-radius:50%"></b><i style="left:106px;top:22px;font-size:3.9px;">Find</i><b style="left:121px;top:20.5px;width:5px;height:5px;background:#888;border-radius:1px"></b><i style="left:128.5px;top:22px;font-size:3.9px;">Hide Unrelated</i><i style="left:160px;top:21.8px;font-size:4.2px;color:#888;">:</i><b style="left:170.5px;top:20.5px;width:5px;height:5px;border:.7px solid #bbb;border-radius:50%"></b><i style="left:177.5px;top:22px;font-size:3.9px;">Class Settings</i><b style="left:211px;top:20.5px;width:5px;height:5px;background:#bbb;clip-path:polygon(0 100%,20% 100%,100% 20%,80% 0)"></b><i style="left:218.5px;top:22px;font-size:3.9px;">Class Defaults</i><b style="left:251.5px;top:20.5px;width:5px;height:5px;background:#aaa;clip-path:polygon(0 0,100% 60%,55% 65%,40% 100%)"></b><i style="left:259px;top:22px;font-size:3.9px;">Simulation</i><b style="left:288px;top:18.8px;width:44px;height:9.5px;background:#232323;border-radius:1px"></b><b style="left:291.7px;top:20.8px;width:4px;height:5px;background:#40c040;clip-path:polygon(0 0,100% 50%,0 100%)"></b><b style="left:300.5px;top:21px;width:2.6px;height:4.6px;background:#4a5a4a;clip-path:polygon(0 0,100% 50%,0 100%)"></b><b style="left:309px;top:21.2px;width:4px;height:4.2px;background:#555;"></b><b style="left:317.5px;top:21px;width:3.8px;height:4.8px;background:#bbb;clip-path:polygon(0 0,100% 50%,0 100%)"></b><b style="left:328px;top:21px;width:.6px;height:5px;background:#555;"></b><b style="left:338px;top:19.5px;width:55px;height:7px;background:#0c0c0c;border-radius:1px"></b><i style="left:340px;top:22px;font-size:3.7px;">No debug object selected v</i><b style="left:397px;top:21px;width:3.5px;height:4px;background:#777;"></b><div class="a sb"></div><b style="left:3px;top:320.5px;width:3px;height:3.5px;background:#999;"></b><i style="left:8px;top:320.7px;font-size:3.7px;color:#aaa;">Content Drawer</i><b style="left:44px;top:320.5px;width:3px;height:3.5px;background:#bbb;"></b><i style="left:50px;top:320.7px;font-size:3.7px;color:#aaa;">Output Log</i><b style="left:78px;top:320.7px;width:4px;height:3.2px;border:.5px solid #999"></b><i style="left:84px;top:320.7px;font-size:3.7px;color:#aaa;">Cmd v</i><b style="left:103px;top:319.5px;width:93px;height:5.5px;background:#0c0c0c;border-radius:1px"></b><i style="left:105.5px;top:320.6px;font-size:3.5px;color:#555;">Enter Console Command</i><b style="left:518px;top:320.5px;width:3px;height:3.6px;background:#aaa;"></b><i style="left:524px;top:320.7px;font-size:3.7px;color:#aaa;">1 Unsaved</i><b style="left:553px;top:320.5px;width:2.5px;height:3.8px;background:#aaa;"></b><i style="left:558px;top:320.7px;font-size:3.7px;color:#aaa;">Revision Control v</i><div class="a task"></div><b style="left:3.3px;top:329.5px;width:1.9px;height:1.9px;background:#fff;"></b><b style="left:5.6px;top:329.5px;width:1.9px;height:1.9px;background:#fff;"></b><b style="left:3.3px;top:331.8px;width:1.9px;height:1.9px;background:#fff;"></b><b style="left:5.6px;top:331.8px;width:1.9px;height:1.9px;background:#fff;"></b><b style="left:15.5px;top:329.5px;width:4.5px;height:4px;background:#c040e0;border-radius:1px;transform:skewX(-10deg)"></b><b style="left:27px;top:329.8px;width:4.8px;height:3.6px;background:#e8c040;border-radius:.4px"></b><div class="a" style="left:38.6px;top:329.2px;width:4.4px;height:4.4px;border-radius:50%;background:conic-gradient(#e33 0 33%,#fc3 0 66%,#3a5 0)"></div><b style="left:48.5px;top:327.5px;width:8.5px;height:8.5px;background:#3a3d44;"></b><b style="left:50.5px;top:329.3px;width:4.5px;height:4.5px;border:.6px solid #aaa;border-radius:50%"></b><b style="left:61.5px;top:329.4px;width:4.2px;height:4.2px;border:.6px solid #888;border-radius:50%"></b><i style="left:535px;top:329.4px;font-size:4.1px;">^</i><b style="left:542.5px;top:329.2px;width:1.6px;height:4.2px;background:#ddd;border-radius:1px"></b><b style="left:549px;top:329.6px;width:3.8px;height:3px;border:.5px solid #ccc"></b><b style="left:555.5px;top:330px;width:2px;height:2.5px;background:#ccc;clip-path:polygon(0 30%,40% 30%,100% 0,100% 100%,40% 70%,0 70%)"></b><i style="left:561px;top:329.9px;font-size:3px;color:#ccc;">ENG</i><i style="left:575px;top:328px;font-size:3.5px;color:rgba(230,230,230,.55);">Udemy</i><b style="left:588.5px;top:329.4px;width:4.5px;height:3.6px;background:#e8e8e8;border-radius:.3px"></b><div class="a lp"></div><b style="left:1px;top:31px;width:50px;height:9px;background:#1a1a1a;border-radius:1px 1px 0 0"></b><b style="left:3px;top:33px;width:3px;height:3.5px;border:.5px solid #aaa"></b><i style="left:8.5px;top:33.6px;font-size:3.8px;color:#c0c0c0;">Components</i><i style="left:44.5px;top:32.9px;font-size:4.6px;color:#aaa;">×</i><b style="left:7px;top:41px;width:17px;height:6px;background:#2a2a2a;border-radius:1px"></b><b style="left:9px;top:42.5px;width:1px;height:3px;background:#50c050;"></b><b style="left:8px;top:43.5px;width:3px;height:1px;background:#50c050;"></b><i style="left:12.5px;top:42.4px;font-size:3.8px;color:#ccc;">Add</i><div class="srch" style="left:27px;top:41px;width:61px;height:6px"></div><svg class="a" style="left:29px;top:42px" width="4" height="4" viewBox="0 0 4 4"><circle cx="1.6" cy="1.6" r="1.15" fill="none" stroke="#aaa" stroke-width=".55"/><path d="M2.4 2.4L3.6 3.6" stroke="#aaa" stroke-width=".6"/></svg><i style="left:35px;top:42.6px;font-size:3.5px;color:#444;">Search</i><b style="left:5.9px;top:53.6px;width:2.6px;height:3.6px;background:#999;border-radius:.6px"></b><i style="left:10.4px;top:53.2px;font-size:3.8px;color:#b8b8b8;letter-spacing:-.05px">BP_Brute (Self)</i><b style="left:14.1px;top:61.1px;width:2.6px;height:3.6px;background:#999;border-radius:.6px"></b><i style="left:18.6px;top:60.7px;font-size:3.8px;color:#b8b8b8;letter-spacing:-.05px">Capsule Component (CollisionCylinder)</i><b style="left:17.3px;top:68.7px;width:2.6px;height:3.6px;background:#999;border-radius:.6px"></b><i style="left:21.8px;top:68.3px;font-size:3.8px;color:#b8b8b8;letter-spacing:-.05px">Arrow Component (Arrow) <u>Edit in C++</u></i><b style="left:17.3px;top:76.2px;width:2.6px;height:3.6px;background:#999;border-radius:.6px"></b><i style="left:21.8px;top:75.8px;font-size:3.8px;color:#b8b8b8;letter-spacing:-.05px">CameraBoom</i><b style="left:20.3px;top:83.8px;width:2.6px;height:3.6px;background:#999;border-radius:.6px"></b><i style="left:24.8px;top:83.4px;font-size:3.8px;color:#b8b8b8;letter-spacing:-.05px">FollowCamera</i><b style="left:17.3px;top:91.3px;width:2.6px;height:3.6px;background:#999;border-radius:.6px"></b><i style="left:21.8px;top:90.9px;font-size:3.8px;color:#b8b8b8;letter-spacing:-.05px">Mesh (CharacterMesh0)  <u>Edit in C++</u></i><b style="left:14.1px;top:102.2px;width:2.6px;height:3.6px;background:#999;border-radius:.6px"></b><i style="left:18.6px;top:101.8px;font-size:3.8px;color:#b8b8b8;letter-spacing:-.05px">Character Movement (CharMoveComp)</i><b style="left:8px;top:97.3px;width:82px;height:.5px;background:#333;"></b><b style="left:1px;top:118px;width:50px;height:8.5px;background:#1a1a1a;border-radius:1px 1px 0 0"></b><b style="left:3px;top:120px;width:3px;height:3.5px;background:#888;"></b><i style="left:9px;top:120.4px;font-size:3.8px;color:#c0c0c0;">My Blueprint</i><i style="left:44.5px;top:119.6px;font-size:4.6px;color:#aaa;">×</i><b style="left:1px;top:126.5px;width:90px;height:.5px;background:#0e0e0e;"></b><b style="left:6px;top:128px;width:18px;height:5.5px;background:#262626;border-radius:1px"></b><b style="left:9px;top:129.3px;width:1px;height:3px;background:#50c050;"></b><b style="left:8px;top:130.3px;width:3px;height:1px;background:#50c050;"></b><i style="left:12.5px;top:129.4px;font-size:3.8px;color:#ccc;">Add</i><div class="srch" style="left:26px;top:128px;width:54px;height:5.5px"></div><svg class="a" style="left:28px;top:128.8px" width="4" height="4" viewBox="0 0 4 4"><circle cx="1.6" cy="1.6" r="1.15" fill="none" stroke="#aaa" stroke-width=".55"/><path d="M2.4 2.4L3.6 3.6" stroke="#aaa" stroke-width=".6"/></svg><b style="left:83.6px;top:128.6px;width:3.6px;height:3.6px;border:.6px solid #aaa;border-radius:50%"></b><div class="hdr" style="top:137.29999999999998px"></div><i style="left:7px;top:139.2px;font-size:3.2px;color:#c8c8c8;font-weight:bold;">GRAPHS</i><i style="left:2.8px;top:139.2px;font-size:3.2px;color:#888;">v</i><b style="left:83.6px;top:138.7px;width:3.8px;height:3.8px;border:.6px solid #999;border-radius:50%"></b><b style="left:7px;top:147.8px;width:3px;height:2.6px;background:#aaa;"></b><i style="left:12.5px;top:147.9px;font-size:3.6px;">EventGraph</i><b style="left:10.5px;top:155.8px;width:2.8px;height:2.8px;border:.6px solid #ccc;border-radius:50%"></b><i style="left:15.5px;top:156px;font-size:3.6px;color:#b8b8b8;">Event BeginPlay</i><b style="left:10.5px;top:163.5px;width:2.8px;height:2.8px;border:.6px solid #ccc;border-radius:50%"></b><i style="left:15.5px;top:163.7px;font-size:3.6px;color:#b8b8b8;">EnhancedInputAction IA_Move</i><div class="hdr" style="top:170.99999999999997px"></div><i style="left:7px;top:172.9px;font-size:3.2px;color:#c8c8c8;font-weight:bold;">FUNCTIONS <span style='color:#666;font-weight:normal'>(14 OVERRIDABLE)</span></i><i style="left:2.8px;top:172.9px;font-size:3.2px;color:#888;">v</i><b style="left:57px;top:171.7px;width:22px;height:5.2px;background:#0e0e0e;border-radius:1px"></b><i style="left:59px;top:173.1px;font-size:3.2px;">Override v</i><b style="left:83.6px;top:172.4px;width:3.8px;height:3.8px;border:.6px solid #999;border-radius:50%"></b><i style="left:9px;top:182px;font-size:3.7px;color:#aaa;">ƒ</i><i style="left:13px;top:182.2px;font-size:3.6px;">Construction Script</i><div class="hdr" style="top:188.6px"></div><i style="left:7px;top:190.5px;font-size:3.2px;color:#c8c8c8;font-weight:bold;">MACROS</i><i style="left:2.8px;top:190.5px;font-size:3.2px;color:#888;">v</i><b style="left:83.6px;top:190px;width:3.8px;height:3.8px;border:.6px solid #999;border-radius:50%"></b><div class="hdr" style="top:197.9px"></div><i style="left:7px;top:199.8px;font-size:3.2px;color:#c8c8c8;font-weight:bold;">VARIABLES</i><i style="left:2.8px;top:199.8px;font-size:3.2px;color:#888;">v</i><b style="left:83.6px;top:199.3px;width:3.8px;height:3.8px;border:.6px solid #999;border-radius:50%"></b><i style="left:3px;top:207.4px;font-size:3.2px;color:#888;">v</i><i style="left:6px;top:207.5px;font-size:3.5px;color:#c8c8c8;font-weight:bold;">Components</i><i style="left:10px;top:213.5px;font-size:3.5px;color:#a8a8a8;">FollowCamera</i><b style="left:58px;top:214.2px;width:3.4px;height:1.8px;background:#30a0e0;border-radius:1px"></b><i style="left:10px;top:219.7px;font-size:3.5px;color:#a8a8a8;">CameraBoom</i><b style="left:58px;top:220.4px;width:3.4px;height:1.8px;background:#30a0e0;border-radius:1px"></b><div class="hdr" style="top:225.49999999999997px"></div><i style="left:7px;top:227.4px;font-size:3.2px;color:#c8c8c8;font-weight:bold;">EVENT DISPATCHERS</i><i style="left:2.8px;top:227.4px;font-size:3.2px;color:#888;">v</i><b style="left:83.6px;top:226.9px;width:3.8px;height:3.8px;border:.6px solid #999;border-radius:50%"></b><b style="left:93.5px;top:33.2px;width:3.5px;height:3px;background:#999;"></b><i style="left:99px;top:33.6px;font-size:3.8px;color:#a8a8a8;">Viewport</i><i style="left:145px;top:33.2px;font-size:3.9px;color:#aaa;">ƒ</i><i style="left:150.5px;top:33.6px;font-size:3.8px;color:#a8a8a8;">Construction Scr...</i><b style="left:191.5px;top:31px;width:49px;height:9px;background:#1e1e1e;border-radius:1px 1px 0 0"></b><b style="left:194px;top:33.2px;width:3.4px;height:3.4px;border:.5px dashed #bbb"></b><i style="left:199.5px;top:33.6px;font-size:3.8px;color:#d0d0d0;">EventGraph</i><i style="left:236px;top:32.9px;font-size:4.6px;color:#aaa;">×</i><b style="left:450px;top:31px;width:50px;height:9px;background:#1c1c1c;border-radius:1px 1px 0 0"></b><b style="left:452.5px;top:33px;width:3px;height:3.6px;background:#ccc;clip-path:polygon(0 100%,25% 100%,100% 25%,75% 0)"></b><i style="left:458.5px;top:33.6px;font-size:3.8px;color:#c8c8c8;">Details</i><i style="left:492.5px;top:32.9px;font-size:4.6px;color:#aaa;">×</i><div class="a graph"></div><div class="a" style="left:92px;top:40px;width:357px;height:278px;overflow:hidden"><div class="a" style="left:-92px;top:-40px;width:600px;height:337px"><b style="left:142px;top:40px;width:307px;height:32px;background:#2c2c2c;box-shadow:0 1px 1px #151515"></b><b style="left:145px;top:40px;width:95px;height:12px;background:#151815;border-radius:2px"></b><b style="left:361px;top:40px;width:71px;height:22px;background:#1b1d1c;border-radius:2px;box-shadow:0 1px 2px #000"></b><i style="left:377px;top:40.7px;font-size:9.5px;color:#b8b8b8;font-weight:bold;line-height:10px;transform:scaleX(.85);transform-origin:0 0">Player<br>Subsystem</i><b style="left:366px;top:41px;width:2.6px;height:2.6px;background:#1f8f9a;border-radius:50%"></b><b style="left:424px;top:39.5px;width:2.6px;height:2.6px;background:#1f8f9a;border-radius:50%"></b><div class="node" style="left:141px;top:120px;width:76.7px;height:113px;box-shadow:0 0 0 1px #e8901a,0 0 2px #000;"><div class="nh" style="height:7.5px;background:linear-gradient(90deg,#a01414,#6a1010 55%,#3a1414)"></div></div><i style="left:145.5px;top:122px;font-size:3.7px;color:#f4f4f4;">EnhancedInputAction IA_Move</i><svg class="a" style="left:208.70000000000002px;top:131.7px" width="3.4" height="3.8" viewBox="0 0 3.4 3.8"><path d="M.3 .3H2L3.1 1.9L2 3.5H.3Z" fill="none" stroke="#d8d8d8" stroke-width=".5"/></svg><i style="left:207.9px;top:131.9px;font-size:3.5px;color:#d8d8d8;transform:translateX(-100%)">Triggered</i><svg class="a" style="left:208.70000000000002px;top:141.6px" width="3.4" height="3.8" viewBox="0 0 3.4 3.8"><path d="M.3 .3H2L3.1 1.9L2 3.5H.3Z" fill="none" stroke="#d8d8d8" stroke-width=".5"/></svg><i style="left:207.9px;top:141.8px;font-size:3.5px;color:#d8d8d8;transform:translateX(-100%)">Started</i><svg class="a" style="left:208.70000000000002px;top:151.7px" width="3.4" height="3.8" viewBox="0 0 3.4 3.8"><path d="M.3 .3H2L3.1 1.9L2 3.5H.3Z" fill="none" stroke="#d8d8d8" stroke-width=".5"/></svg><i style="left:207.9px;top:151.9px;font-size:3.5px;color:#d8d8d8;transform:translateX(-100%)">Ongoing</i><svg class="a" style="left:208.70000000000002px;top:161.6px" width="3.4" height="3.8" viewBox="0 0 3.4 3.8"><path d="M.3 .3H2L3.1 1.9L2 3.5H.3Z" fill="none" stroke="#d8d8d8" stroke-width=".5"/></svg><i style="left:207.9px;top:161.8px;font-size:3.5px;color:#d8d8d8;transform:translateX(-100%)">Canceled</i><svg class="a" style="left:208.70000000000002px;top:171.79999999999998px" width="3.4" height="3.8" viewBox="0 0 3.4 3.8"><path d="M.3 .3H2L3.1 1.9L2 3.5H.3Z" fill="none" stroke="#d8d8d8" stroke-width=".5"/></svg><i style="left:207.9px;top:172px;font-size:3.5px;color:#d8d8d8;transform:translateX(-100%)">Completed</i><div class="a" style="left:208.9px;top:181.6px;width:2.8px;height:2.8px;border-radius:50%;border:.55px solid #3fd23f"></div><i style="left:207.9px;top:181.3px;font-size:3.5px;color:#d8d8d8;transform:translateX(-100%)">Action Value X</i><div class="a" style="left:208.9px;top:191.1px;width:2.8px;height:2.8px;border-radius:50%;border:.55px solid #3fd23f"></div><i style="left:207.9px;top:190.8px;font-size:3.5px;color:#d8d8d8;transform:translateX(-100%)">Action Value Y</i><div class="a" style="left:208.9px;top:200.5px;width:2.8px;height:2.8px;border-radius:50%;border:.55px solid #3fd23f"></div><i style="left:207.9px;top:200.2px;font-size:3.5px;color:#d8d8d8;transform:translateX(-100%)">Elapsed Seconds</i><div class="a" style="left:208.9px;top:209.9px;width:2.8px;height:2.8px;border-radius:50%;border:.55px solid #3fd23f"></div><i style="left:207.9px;top:209.6px;font-size:3.5px;color:#d8d8d8;transform:translateX(-100%)">Triggered Seconds</i><div class="a" style="left:208.9px;top:219.0px;width:2.8px;height:2.8px;border-radius:50%;border:.55px solid #40b8c8"></div><i style="left:207.9px;top:218.7px;font-size:3.5px;color:#d8d8d8;transform:translateX(-100%)">Input Action</i><i style="left:200.3px;top:226.1px;font-size:3.9px;">^</i><b style="left:217px;top:132.6px;width:46px;height:.9px;background:#f0f0f0;"></b><b style="left:263.5px;top:133.6px;width:127px;height:126.2px;background:#1e1e1e;border:.6px solid #3a3a3a;box-shadow:0 1px 3px #000"></b><i style="left:265.5px;top:135.8px;font-size:4.9px;color:#a8a8a8;">Executable actions</i><b style="left:349.5px;top:136.5px;width:2.8px;height:2.8px;background:#2a6ad0;border-radius:.4px"></b><i style="left:353.5px;top:136.5px;font-size:3.7px;">Context Sensitive ▸</i><b style="left:265.2px;top:143px;width:124px;height:6px;background:#0c0c0c;border:.5px solid #3a68b0;border-radius:3px"></b><i style="left:267.5px;top:144px;font-size:3.5px;color:#aaa;">✕</i><i style="left:272px;top:144.2px;font-size:3.6px;color:#ddd;">print</i><b style="left:265.5px;top:155.9px;width:120.5px;height:7.4px;background:#345a85;"></b><i style="left:267px;top:151px;font-size:3.6px;color:#c8c8c8;">v <strong>Development</strong></i><i style="left:273px;top:158px;font-size:3.6px;color:#c8c8c8;">ƒ <span style='background:#58b030;color:#fff'>Print</span> String</i><i style="left:273px;top:165.9px;font-size:3.6px;color:#c8c8c8;">ƒ <span style='background:#58b030;color:#fff'>Print</span> Text</i><i style="left:267px;top:172.4px;font-size:3.6px;color:#c8c8c8;">v <strong>Game</strong></i><i style="left:273px;top:179px;font-size:3.6px;color:#c8c8c8;">ƒ Predict Projectile Path (Advanced)</i><i style="left:273px;top:186.9px;font-size:3.6px;color:#c8c8c8;">ƒ Predict Projectile Path By ObjectType</i><i style="left:273px;top:194.8px;font-size:3.6px;color:#c8c8c8;">ƒ Predict Projectile Path By TraceChannel</i><i style="left:273px;top:202.4px;font-size:3.6px;color:#c8c8c8;">ƒ Suggest Projectile Velocity</i><i style="left:267px;top:208.9px;font-size:3.6px;color:#c8c8c8;">v <strong>Utilities</strong></i><i style="left:270px;top:214.9px;font-size:3.6px;color:#c8c8c8;">v <strong>Casting</strong></i><i style="left:274px;top:221.4px;font-size:3.6px;color:#c8c8c8;">→ Cast To ActorSensor_Blue<span style='background:#58b030'>print</span>Base</i><i style="left:274px;top:229.4px;font-size:3.6px;color:#c8c8c8;">→ Cast To ActorSensor_Blue<span style='background:#58b030'>print</span>Base Class</i><i style="left:274px;top:237.1px;font-size:3.6px;color:#c8c8c8;">→ Cast To ActorSensorConfig_Blue<span style='background:#58b030'>print</span></i><i style="left:274px;top:245px;font-size:3.6px;color:#c8c8c8;">→ Cast To ActorSensorConfig_Blue<span style='background:#58b030'>print</span> Class</i><i style="left:274px;top:252.7px;font-size:3.6px;color:#c8c8c8;">→ Cast To AudioListenerBlue<span style='background:#58b030'>print</span>Base</i><b style="left:386.5px;top:161px;width:1.4px;height:25px;background:#555;border-radius:1px"></b><b style="left:343.8px;top:145.5px;width:.6px;height:4px;background:#fff;"></b></div></div><div class="a gbar"></div><b style="left:95px;top:43px;width:2.6px;height:3.6px;border:.5px solid #777"></b><i style="left:99px;top:43.4px;font-size:3.2px;color:#888;">v</i><svg class="a" style="left:109.5px;top:43.5px" width="5" height="4" viewBox="0 0 5 4"><path d="M0 2L2.4 0V1.2H5V2.8H2.4V4Z" fill="#d8d8d8"/></svg><svg class="a" style="left:121.5px;top:43.5px" width="5" height="4" viewBox="0 0 5 4"><path d="M5 2L2.6 0V1.2H0V2.8H2.6V4Z" fill="#d8d8d8"/></svg><b style="left:136px;top:42.5px;width:2.6px;height:2.6px;background:#ccc;border-radius:50%"></b><b style="left:140px;top:43.2px;width:2px;height:1.8px;background:#ccc;"></b><b style="left:136px;top:46.5px;width:2px;height:1.8px;background:#ccc;"></b><b style="left:140px;top:46.5px;width:2px;height:1.8px;background:#ccc;"></b><i style="left:147px;top:42.5px;font-size:6.3px;color:#8e8e8e;">BP_Brute <span style='color:#ccc'>&gt;</span> EventGraph</i><i style="left:425px;top:42.9px;font-size:5.1px;color:#3e3e3e;">Zoom 1:1</i><div class="wm">BLUEPRINT</div><div class="a dp"></div><div class="srch" style="left:453px;top:42.5px;width:128px;height:5.5px"></div><svg class="a" style="left:455px;top:43.2px" width="4" height="4" viewBox="0 0 4 4"><circle cx="1.6" cy="1.6" r="1.15" fill="none" stroke="#aaa" stroke-width=".55"/><path d="M2.4 2.4L3.6 3.6" stroke="#aaa" stroke-width=".6"/></svg><i style="left:461px;top:43.6px;font-size:3.5px;color:#444;">Search</i><b style="left:585.5px;top:43px;width:3.4px;height:3.6px;background:#888;"></b><b style="left:592.5px;top:43px;width:3.8px;height:3.8px;border:.6px solid #888;border-radius:50%"></b><div class="t" style="left:450px;width:149px;top:59px;text-align:center;font-size:3.1px;line-height:5px;color:#b0b0b0">All results have been filtered.<br>Try changing your active filters above.</div><div class="bd"></div></div><div class="cell" style="left:1215px;top:5px"><div class="a menu"></div><div class="a tabs"></div><div class="a tb"></div><div class="a ptab"></div><svg class="a" style="left:2px;top:2px" width="14" height="14" viewBox="0 0 14 14"><circle cx="7" cy="7" r="6" fill="#1a1a1a" stroke="#9a9a9a" stroke-width=".7"/><path d="M4.2 4.3 L5.6 4 L5.6 8.8 Q6.6 9.6 7.6 8.8 L7.6 4.6 L9.1 4.2 L9.1 9.6 Q6.6 11 4.2 9.6Z" fill="#c8c8c8"/></svg><i style="left:21.5px;top:1.8px;font-size:3.8px;color:#c8c8c8;">File</i><i style="left:35.5px;top:1.8px;font-size:3.8px;color:#c8c8c8;">Edit</i><i style="left:51px;top:1.8px;font-size:3.8px;color:#c8c8c8;">Asset</i><i style="left:68px;top:1.8px;font-size:3.8px;color:#c8c8c8;">View</i><i style="left:84.5px;top:1.8px;font-size:3.8px;color:#c8c8c8;">Debug</i><i style="left:103.5px;top:1.8px;font-size:3.8px;color:#c8c8c8;">Window</i><i style="left:123px;top:1.8px;font-size:3.8px;color:#c8c8c8;">Tools</i><i style="left:140.5px;top:1.8px;font-size:3.8px;color:#c8c8c8;">Help</i><b style="left:564px;top:4px;width:4px;height:.6px;background:#aaa;"></b><div class="a" style="left:578px;top:2.2px;width:3.4px;height:3.2px;border:.6px solid #bbb"></div><i style="left:591.5px;top:1.3px;font-size:4.6px;color:#ddd;">✕</i><svg class="a" style="left:22.5px;top:10px" width="5" height="5" viewBox="0 0 5 5"><path d="M.5 2.5 L2.5 .6 L4.5 2.5 V4.5 H.5Z" fill="none" stroke="#666" stroke-width=".5"/></svg><svg class="a" style="left:33.5px;top:10.3px" width="5" height="4.5" viewBox="0 0 5 4.5"><path d="M2.5 .2 L4.8 4.3 H.2Z" fill="#d8a020"/></svg><i style="left:41px;top:10.8px;font-size:3.8px;color:#c0c0c0;">DefaultMap</i><b style="left:97px;top:8.5px;width:65px;height:8.5px;background:#1e1e1e;border-radius:1px 1px 0 0"></b><svg class="a" style="left:100px;top:9.5px" width="5" height="6" viewBox="0 0 5 6"><circle cx="2.5" cy="1.6" r="1.3" fill="#3a7ee0"/><path d="M.4 5.6 Q.4 3.2 2.5 3.2 Q4.6 3.2 4.6 5.6Z" fill="#3a7ee0"/></svg><i style="left:107px;top:10.8px;font-size:3.8px;color:#d0d0d0;">BP_Brute</i><i style="left:155.5px;top:10.3px;font-size:4.9px;">×</i><i style="left:552px;top:10.8px;font-size:3.6px;color:#8a8a8a;">Parent class: <u>Character</u></i><b style="left:5.5px;top:20px;width:5px;height:6px;background:#c8c8c8;border-radius:.5px"></b><b style="left:19.5px;top:20.5px;width:5px;height:5.5px;background:#a8a8a8;border-radius:.5px"></b><b style="left:35px;top:19.5px;width:6px;height:7px;background:#d8c020;border-radius:.5px"></b><b style="left:36.5px;top:21.5px;width:3px;height:3px;background:#58a030;"></b><i style="left:44px;top:22px;font-size:3.9px;">Compile</i><i style="left:62.5px;top:21.8px;font-size:4.2px;color:#888;">:</i><b style="left:71px;top:21.5px;width:3px;height:3.5px;background:#bbb;"></b><i style="left:76px;top:22px;font-size:3.9px;">Diff v</i><b style="left:100px;top:20.5px;width:4.5px;height:4.5px;border:.6px solid #ccc;border-radius:50%"></b><i style="left:106px;top:22px;font-size:3.9px;">Find</i><b style="left:121px;top:20.5px;width:5px;height:5px;background:#888;border-radius:1px"></b><i style="left:128.5px;top:22px;font-size:3.9px;">Hide Unrelated</i><i style="left:160px;top:21.8px;font-size:4.2px;color:#888;">:</i><b style="left:170.5px;top:20.5px;width:5px;height:5px;border:.7px solid #bbb;border-radius:50%"></b><i style="left:177.5px;top:22px;font-size:3.9px;">Class Settings</i><b style="left:211px;top:20.5px;width:5px;height:5px;background:#bbb;clip-path:polygon(0 100%,20% 100%,100% 20%,80% 0)"></b><i style="left:218.5px;top:22px;font-size:3.9px;">Class Defaults</i><b style="left:251.5px;top:20.5px;width:5px;height:5px;background:#aaa;clip-path:polygon(0 0,100% 60%,55% 65%,40% 100%)"></b><i style="left:259px;top:22px;font-size:3.9px;">Simulation</i><b style="left:288px;top:18.8px;width:35px;height:9.5px;background:#232323;border-radius:1px"></b><b style="left:292.3px;top:21px;width:.9px;height:5px;background:#ccc;"></b><b style="left:294.3px;top:21px;width:.9px;height:5px;background:#ccc;"></b><b style="left:300.5px;top:21px;width:2.6px;height:4.6px;background:#5a6a5a;clip-path:polygon(0 0,100% 50%,0 100%)"></b><b style="left:309.5px;top:21px;width:4.4px;height:4.6px;background:#e02828;"></b><b style="left:318.5px;top:21px;width:.6px;height:5px;background:#555;"></b><b style="left:329px;top:19.5px;width:54px;height:7px;background:#0c0c0c;border-radius:1px"></b><i style="left:331px;top:22px;font-size:3.7px;">No debug object selected v</i><b style="left:388px;top:21px;width:3.5px;height:4px;background:#777;"></b><div class="a sb"></div><b style="left:3px;top:320.5px;width:3px;height:3.5px;background:#999;"></b><i style="left:8px;top:320.7px;font-size:3.7px;color:#aaa;">Content Drawer</i><b style="left:44px;top:320.5px;width:3px;height:3.5px;background:#bbb;"></b><i style="left:50px;top:320.7px;font-size:3.7px;color:#aaa;">Output Log</i><b style="left:78px;top:320.7px;width:4px;height:3.2px;border:.5px solid #999"></b><i style="left:84px;top:320.7px;font-size:3.7px;color:#aaa;">Cmd v</i><b style="left:103px;top:319.5px;width:93px;height:5.5px;background:#0c0c0c;border-radius:1px"></b><i style="left:105.5px;top:320.6px;font-size:3.5px;color:#555;">Enter Console Command</i><b style="left:518px;top:320.5px;width:3px;height:3.6px;background:#aaa;"></b><i style="left:524px;top:320.7px;font-size:3.7px;color:#aaa;">All Saved</i><b style="left:553px;top:320.5px;width:2.5px;height:3.8px;background:#aaa;"></b><i style="left:558px;top:320.7px;font-size:3.7px;color:#aaa;">Revision Control v</i><div class="a task"></div><b style="left:3.3px;top:329.5px;width:1.9px;height:1.9px;background:#fff;"></b><b style="left:5.6px;top:329.5px;width:1.9px;height:1.9px;background:#fff;"></b><b style="left:3.3px;top:331.8px;width:1.9px;height:1.9px;background:#fff;"></b><b style="left:5.6px;top:331.8px;width:1.9px;height:1.9px;background:#fff;"></b><b style="left:15.5px;top:329.5px;width:4.5px;height:4px;background:#c040e0;border-radius:1px;transform:skewX(-10deg)"></b><b style="left:27px;top:329.8px;width:4.8px;height:3.6px;background:#e8c040;border-radius:.4px"></b><div class="a" style="left:38.6px;top:329.2px;width:4.4px;height:4.4px;border-radius:50%;background:conic-gradient(#e33 0 33%,#fc3 0 66%,#3a5 0)"></div><b style="left:48.5px;top:327.5px;width:8.5px;height:8.5px;background:#3a3d44;"></b><b style="left:50.5px;top:329.3px;width:4.5px;height:4.5px;border:.6px solid #aaa;border-radius:50%"></b><b style="left:61.5px;top:329.4px;width:4.2px;height:4.2px;border:.6px solid #888;border-radius:50%"></b><i style="left:535px;top:329.4px;font-size:4.1px;">^</i><b style="left:542.5px;top:329.2px;width:1.6px;height:4.2px;background:#ddd;border-radius:1px"></b><b style="left:549px;top:329.6px;width:3.8px;height:3px;border:.5px solid #ccc"></b><b style="left:555.5px;top:330px;width:2px;height:2.5px;background:#ccc;clip-path:polygon(0 30%,40% 30%,100% 0,100% 100%,40% 70%,0 70%)"></b><i style="left:561px;top:329.9px;font-size:3px;color:#ccc;">ENG</i><i style="left:575px;top:328px;font-size:3.5px;color:rgba(230,230,230,.55);">Udemy</i><b style="left:588.5px;top:329.4px;width:4.5px;height:3.6px;background:#e8e8e8;border-radius:.3px"></b><div class="a lp"></div><b style="left:1px;top:31px;width:50px;height:9px;background:#1a1a1a;border-radius:1px 1px 0 0"></b><b style="left:3px;top:33px;width:3px;height:3.5px;border:.5px solid #aaa"></b><i style="left:8.5px;top:33.6px;font-size:3.8px;color:#c0c0c0;">Components</i><i style="left:44.5px;top:32.9px;font-size:4.6px;color:#aaa;">×</i><b style="left:7px;top:41px;width:17px;height:6px;background:#2a2a2a;border-radius:1px"></b><b style="left:9px;top:42.5px;width:1px;height:3px;background:#50c050;"></b><b style="left:8px;top:43.5px;width:3px;height:1px;background:#50c050;"></b><i style="left:12.5px;top:42.4px;font-size:3.8px;color:#ccc;">Add</i><div class="srch" style="left:27px;top:41px;width:61px;height:6px"></div><svg class="a" style="left:29px;top:42px" width="4" height="4" viewBox="0 0 4 4"><circle cx="1.6" cy="1.6" r="1.15" fill="none" stroke="#aaa" stroke-width=".55"/><path d="M2.4 2.4L3.6 3.6" stroke="#aaa" stroke-width=".6"/></svg><i style="left:35px;top:42.6px;font-size:3.5px;color:#444;">Search</i><b style="left:5.9px;top:53.6px;width:2.6px;height:3.6px;background:#999;border-radius:.6px"></b><i style="left:10.4px;top:53.2px;font-size:3.8px;color:#b8b8b8;letter-spacing:-.05px">BP_Brute (Self)</i><b style="left:14.1px;top:61.1px;width:2.6px;height:3.6px;background:#999;border-radius:.6px"></b><i style="left:18.6px;top:60.7px;font-size:3.8px;color:#b8b8b8;letter-spacing:-.05px">Capsule Component (CollisionCylinder)</i><b style="left:17.3px;top:68.7px;width:2.6px;height:3.6px;background:#999;border-radius:.6px"></b><i style="left:21.8px;top:68.3px;font-size:3.8px;color:#b8b8b8;letter-spacing:-.05px">Arrow Component (Arrow) <u>Edit in C++</u></i><b style="left:17.3px;top:76.2px;width:2.6px;height:3.6px;background:#999;border-radius:.6px"></b><i style="left:21.8px;top:75.8px;font-size:3.8px;color:#b8b8b8;letter-spacing:-.05px">CameraBoom</i><b style="left:20.3px;top:83.8px;width:2.6px;height:3.6px;background:#999;border-radius:.6px"></b><i style="left:24.8px;top:83.4px;font-size:3.8px;color:#b8b8b8;letter-spacing:-.05px">FollowCamera</i><b style="left:17.3px;top:91.3px;width:2.6px;height:3.6px;background:#999;border-radius:.6px"></b><i style="left:21.8px;top:90.9px;font-size:3.8px;color:#b8b8b8;letter-spacing:-.05px">Mesh (CharacterMesh0)  <u>Edit in C++</u></i><b style="left:14.1px;top:102.2px;width:2.6px;height:3.6px;background:#999;border-radius:.6px"></b><i style="left:18.6px;top:101.8px;font-size:3.8px;color:#b8b8b8;letter-spacing:-.05px">Character Movement (CharMoveComp)</i><b style="left:8px;top:97.3px;width:82px;height:.5px;background:#333;"></b><b style="left:1px;top:118px;width:50px;height:8.5px;background:#1a1a1a;border-radius:1px 1px 0 0"></b><b style="left:3px;top:120px;width:3px;height:3.5px;background:#888;"></b><i style="left:9px;top:120.4px;font-size:3.8px;color:#c0c0c0;">My Blueprint</i><i style="left:44.5px;top:119.6px;font-size:4.6px;color:#aaa;">×</i><b style="left:1px;top:126.5px;width:90px;height:.5px;background:#0e0e0e;"></b><b style="left:6px;top:128px;width:18px;height:5.5px;background:#262626;border-radius:1px"></b><b style="left:9px;top:129.3px;width:1px;height:3px;background:#50c050;"></b><b style="left:8px;top:130.3px;width:3px;height:1px;background:#50c050;"></b><i style="left:12.5px;top:129.4px;font-size:3.8px;color:#ccc;">Add</i><div class="srch" style="left:26px;top:128px;width:54px;height:5.5px"></div><svg class="a" style="left:28px;top:128.8px" width="4" height="4" viewBox="0 0 4 4"><circle cx="1.6" cy="1.6" r="1.15" fill="none" stroke="#aaa" stroke-width=".55"/><path d="M2.4 2.4L3.6 3.6" stroke="#aaa" stroke-width=".6"/></svg><b style="left:83.6px;top:128.6px;width:3.6px;height:3.6px;border:.6px solid #aaa;border-radius:50%"></b><div class="hdr" style="top:137.29999999999998px"></div><i style="left:7px;top:139.2px;font-size:3.2px;color:#c8c8c8;font-weight:bold;">GRAPHS</i><i style="left:2.8px;top:139.2px;font-size:3.2px;color:#888;">v</i><b style="left:83.6px;top:138.7px;width:3.8px;height:3.8px;border:.6px solid #999;border-radius:50%"></b><b style="left:7px;top:147.8px;width:3px;height:2.6px;background:#aaa;"></b><i style="left:12.5px;top:147.9px;font-size:3.6px;">EventGraph</i><b style="left:10.5px;top:155.8px;width:2.8px;height:2.8px;border:.6px solid #ccc;border-radius:50%"></b><i style="left:15.5px;top:156px;font-size:3.6px;color:#b8b8b8;">Event BeginPlay</i><b style="left:10.5px;top:163.5px;width:2.8px;height:2.8px;border:.6px solid #ccc;border-radius:50%"></b><i style="left:15.5px;top:163.7px;font-size:3.6px;color:#b8b8b8;">EnhancedInputAction IA_Move</i><div class="hdr" style="top:170.99999999999997px"></div><i style="left:7px;top:172.9px;font-size:3.2px;color:#c8c8c8;font-weight:bold;">FUNCTIONS <span style='color:#666;font-weight:normal'>(14 OVERRIDABLE)</span></i><i style="left:2.8px;top:172.9px;font-size:3.2px;color:#888;">v</i><b style="left:57px;top:171.7px;width:22px;height:5.2px;background:#0e0e0e;border-radius:1px"></b><i style="left:59px;top:173.1px;font-size:3.2px;">Override v</i><b style="left:83.6px;top:172.4px;width:3.8px;height:3.8px;border:.6px solid #999;border-radius:50%"></b><i style="left:9px;top:182px;font-size:3.7px;color:#aaa;">ƒ</i><i style="left:13px;top:182.2px;font-size:3.6px;">Construction Script</i><div class="hdr" style="top:188.6px"></div><i style="left:7px;top:190.5px;font-size:3.2px;color:#c8c8c8;font-weight:bold;">MACROS</i><i style="left:2.8px;top:190.5px;font-size:3.2px;color:#888;">v</i><b style="left:83.6px;top:190px;width:3.8px;height:3.8px;border:.6px solid #999;border-radius:50%"></b><div class="hdr" style="top:197.9px"></div><i style="left:7px;top:199.8px;font-size:3.2px;color:#c8c8c8;font-weight:bold;">VARIABLES</i><i style="left:2.8px;top:199.8px;font-size:3.2px;color:#888;">v</i><b style="left:83.6px;top:199.3px;width:3.8px;height:3.8px;border:.6px solid #999;border-radius:50%"></b><i style="left:3px;top:207.4px;font-size:3.2px;color:#888;">v</i><i style="left:6px;top:207.5px;font-size:3.5px;color:#c8c8c8;font-weight:bold;">Components</i><i style="left:10px;top:213.5px;font-size:3.5px;color:#a8a8a8;">FollowCamera</i><b style="left:58px;top:214.2px;width:3.4px;height:1.8px;background:#30a0e0;border-radius:1px"></b><i style="left:10px;top:219.7px;font-size:3.5px;color:#a8a8a8;">CameraBoom</i><b style="left:58px;top:220.4px;width:3.4px;height:1.8px;background:#30a0e0;border-radius:1px"></b><div class="hdr" style="top:225.49999999999997px"></div><i style="left:7px;top:227.4px;font-size:3.2px;color:#c8c8c8;font-weight:bold;">EVENT DISPATCHERS</i><i style="left:2.8px;top:227.4px;font-size:3.2px;color:#888;">v</i><b style="left:83.6px;top:226.9px;width:3.8px;height:3.8px;border:.6px solid #999;border-radius:50%"></b><b style="left:93.5px;top:33.2px;width:3.5px;height:3px;background:#999;"></b><i style="left:99px;top:33.6px;font-size:3.8px;color:#a8a8a8;">Viewport</i><i style="left:145px;top:33.2px;font-size:3.9px;color:#aaa;">ƒ</i><i style="left:150.5px;top:33.6px;font-size:3.8px;color:#a8a8a8;">Construction Scr...</i><b style="left:191.5px;top:31px;width:49px;height:9px;background:#1e1e1e;border-radius:1px 1px 0 0"></b><b style="left:194px;top:33.2px;width:3.4px;height:3.4px;border:.5px dashed #bbb"></b><i style="left:199.5px;top:33.6px;font-size:3.8px;color:#d0d0d0;">EventGraph</i><i style="left:236px;top:32.9px;font-size:4.6px;color:#aaa;">×</i><b style="left:450px;top:31px;width:50px;height:9px;background:#1c1c1c;border-radius:1px 1px 0 0"></b><b style="left:452.5px;top:33px;width:3px;height:3.6px;background:#ccc;clip-path:polygon(0 100%,25% 100%,100% 25%,75% 0)"></b><i style="left:458.5px;top:33.6px;font-size:3.8px;color:#c8c8c8;">Details</i><i style="left:492.5px;top:32.9px;font-size:4.6px;color:#aaa;">×</i><div class="a graph"></div><div class="a" style="left:92px;top:40px;width:357px;height:278px;overflow:hidden"><div class="a" style="left:-92px;top:-40px;width:600px;height:337px"><b style="left:142px;top:40px;width:307px;height:32px;background:#2c2c2c;"></b><b style="left:361px;top:40px;width:71px;height:22px;background:#1b1d1c;border-radius:2px"></b><i style="left:377px;top:40.7px;font-size:9.5px;color:#b8b8b8;font-weight:bold;line-height:10px;transform:scaleX(.85);transform-origin:0 0">Player<br>Subsystem</i><b style="left:94.5px;top:42.8px;width:351.5px;height:270.5px;border:2px solid #dca42a;z-index:3"></b></div></div><div class="a gbar"></div><b style="left:95px;top:43px;width:2.6px;height:3.6px;border:.5px solid #777"></b><i style="left:99px;top:43.4px;font-size:3.2px;color:#888;">v</i><svg class="a" style="left:109.5px;top:43.5px" width="5" height="4" viewBox="0 0 5 4"><path d="M0 2L2.4 0V1.2H5V2.8H2.4V4Z" fill="#d8d8d8"/></svg><svg class="a" style="left:121.5px;top:43.5px" width="5" height="4" viewBox="0 0 5 4"><path d="M5 2L2.6 0V1.2H0V2.8H2.6V4Z" fill="#d8d8d8"/></svg><b style="left:136px;top:42.5px;width:2.6px;height:2.6px;background:#ccc;border-radius:50%"></b><b style="left:140px;top:43.2px;width:2px;height:1.8px;background:#ccc;"></b><b style="left:136px;top:46.5px;width:2px;height:1.8px;background:#ccc;"></b><b style="left:140px;top:46.5px;width:2px;height:1.8px;background:#ccc;"></b><i style="left:147px;top:42.5px;font-size:6.3px;color:#8e8e8e;">BP_Brute <span style='color:#ccc'>&gt;</span> EventGraph</i><i style="left:425px;top:42.9px;font-size:5.1px;color:#3e3e3e;">Zoom 1:1</i><div class="wm">BLUEPRINT</div><div class="a dp"></div><div class="srch" style="left:453px;top:42.5px;width:128px;height:5.5px"></div><svg class="a" style="left:455px;top:43.2px" width="4" height="4" viewBox="0 0 4 4"><circle cx="1.6" cy="1.6" r="1.15" fill="none" stroke="#aaa" stroke-width=".55"/><path d="M2.4 2.4L3.6 3.6" stroke="#aaa" stroke-width=".6"/></svg><i style="left:461px;top:43.6px;font-size:3.5px;color:#444;">Search</i><b style="left:585.5px;top:43px;width:3.4px;height:3.6px;background:#888;"></b><b style="left:592.5px;top:43px;width:3.8px;height:3.8px;border:.6px solid #888;border-radius:50%"></b><div class="a" style="left:0;top:0;width:600px;height:337px;z-index:4"><b style="left:100px;top:52px;width:401px;height:10px;background:#1c1c1c;"></b><i style="left:241.5px;top:54.6px;font-size:3.7px;color:#b8b8b8;">BruteRPG Preview [NetMode: Standalone 0]  (64-bit/PC D3D SM5)</i><b style="left:103px;top:55.5px;width:3.5px;height:3.5px;background:#888;border-radius:.5px"></b><b style="left:473.5px;top:57px;width:3px;height:.5px;background:#ccc;"></b><b style="left:486px;top:55.3px;width:2.8px;height:2.8px;border:.5px solid #ccc"></b><i style="left:494.5px;top:54.4px;font-size:3.9px;color:#ddd;">✕</i><div class="a" style="left:100px;top:62px;width:401px;height:226px;overflow:hidden"><svg class="a" width="400" height="226" viewBox="0 0 400 226" style="left:0;top:0;overflow:hidden"><defs><filter id="cbc3" x="-50%" y="-50%" width="200%" height="200%"><feGaussianBlur stdDeviation="2.2"/></filter>
<linearGradient id="skc3" x1="0" y1="0" x2="0" y2="1"><stop offset="0" stop-color="#4a78b2"/><stop offset=".6" stop-color="#4a78b2" stop-opacity=".0"/></linearGradient>
<linearGradient id="sbc3" x1="0" y1="0" x2="0" y2="1"><stop offset="0" stop-color="#6c9ace"/><stop offset=".55" stop-color="#86acd6"/><stop offset="1" stop-color="#b4c8e0"/></linearGradient>
<linearGradient id="sec3" x1="0" y1="0" x2="0" y2="1"><stop offset="0" stop-color="#90acd0"/><stop offset=".35" stop-color="#2f5fa0"/><stop offset="1" stop-color="#2f5fa0"/></linearGradient>
<filter id="shc3"><feGaussianBlur stdDeviation=".8"/></filter></defs><rect width="400" height="119.5" fill="url(#sbc3)"/><rect width="400" height="119.5" fill="url(#skc3)"/><g filter="url(#cbc3)" fill="#eaf0f6"><ellipse cx="16" cy="4" rx="13" ry="3" opacity=".6"/><ellipse cx="9" cy="4" rx="4" ry="3" opacity=".6"/><ellipse cx="5" cy="2" rx="6" ry="3" opacity=".6"/><ellipse cx="32" cy="48" rx="24" ry="6" opacity=".4"/><ellipse cx="54" cy="48" rx="11" ry="7" opacity=".5"/><ellipse cx="16" cy="49" rx="11" ry="7" opacity=".5"/><ellipse cx="40" cy="44" rx="10" ry="7" opacity=".5"/><ellipse cx="11" cy="52" rx="8" ry="6" opacity=".5"/><ellipse cx="42" cy="52" rx="8" ry="6" opacity=".5"/><ellipse cx="80" cy="50" rx="15" ry="5" opacity=".7"/><ellipse cx="92" cy="54" rx="3" ry="2" opacity=".7"/><ellipse cx="93" cy="50" rx="6" ry="3" opacity=".8"/><ellipse cx="156" cy="53" rx="42" ry="14" opacity=".6"/><ellipse cx="146" cy="50" rx="16" ry="10" opacity=".8"/><ellipse cx="170" cy="63" rx="20" ry="16" opacity=".7"/><ellipse cx="129" cy="61" rx="21" ry="16" opacity=".7"/><ellipse cx="172" cy="46" rx="19" ry="13" opacity=".7"/><ellipse cx="121" cy="61" rx="22" ry="10" opacity=".8"/><ellipse cx="148" cy="45" rx="12" ry="9" opacity=".8"/><ellipse cx="119" cy="56" rx="8" ry="6" opacity=".7"/><ellipse cx="186" cy="64" rx="15" ry="12" opacity=".7"/><ellipse cx="144" cy="42" rx="10" ry="6" opacity=".8"/><ellipse cx="135" cy="42" rx="2" ry="1" opacity=".8"/><ellipse cx="146" cy="38" rx="2" ry="2" opacity=".8"/><ellipse cx="183" cy="45" rx="9" ry="4" opacity=".8"/><ellipse cx="191" cy="47" rx="3" ry="2" opacity=".8"/><ellipse cx="186" cy="46" rx="4" ry="2" opacity=".9"/><ellipse cx="191" cy="65" rx="12" ry="5" opacity=".7"/><ellipse cx="191" cy="64" rx="5" ry="3" opacity=".7"/><ellipse cx="202" cy="65" rx="4" ry="2" opacity=".8"/><ellipse cx="250" cy="32" rx="10" ry="6" opacity=".7"/><ellipse cx="252" cy="27" rx="4" ry="3" opacity=".7"/><ellipse cx="252" cy="31" rx="4" ry="2" opacity=".8"/><ellipse cx="259" cy="50" rx="18" ry="6" opacity=".8"/><ellipse cx="267" cy="45" rx="4" ry="3" opacity=".9"/><ellipse cx="251" cy="50" rx="7" ry="4" opacity=".8"/><ellipse cx="253" cy="49" rx="7" ry="4" opacity=".8"/><ellipse cx="268" cy="46" rx="7" ry="5" opacity=".8"/><ellipse cx="351" cy="19" rx="40" ry="13" opacity=".8"/><ellipse cx="330" cy="25" rx="11" ry="6" opacity=".8"/><ellipse cx="366" cy="11" rx="12" ry="7" opacity=".9"/><ellipse cx="346" cy="26" rx="10" ry="6" opacity=".9"/><ellipse cx="381" cy="18" rx="11" ry="5" opacity=".8"/><ellipse cx="327" cy="25" rx="19" ry="10" opacity=".8"/><ellipse cx="375" cy="22" rx="18" ry="11" opacity=".7"/><ellipse cx="335" cy="25" rx="11" ry="6" opacity=".8"/><ellipse cx="345" cy="17" rx="20" ry="10" opacity=".7"/><ellipse cx="328" cy="42" rx="24" ry="9" opacity=".8"/><ellipse cx="348" cy="48" rx="12" ry="7" opacity=".9"/><ellipse cx="347" cy="38" rx="10" ry="8" opacity=".9"/><ellipse cx="329" cy="39" rx="7" ry="4" opacity=".7"/><ellipse cx="332" cy="39" rx="11" ry="5" opacity=".9"/><ellipse cx="337" cy="48" rx="12" ry="9" opacity=".8"/><ellipse cx="306" cy="46" rx="6" ry="3" opacity=".9"/><ellipse cx="329" cy="41" rx="12" ry="8" opacity=".8"/><ellipse cx="317" cy="47" rx="8" ry="6" opacity=".8"/><ellipse cx="363" cy="51" rx="30" ry="11" opacity=".7"/><ellipse cx="346" cy="52" rx="14" ry="7" opacity=".8"/><ellipse cx="387" cy="56" rx="14" ry="6" opacity=".8"/><ellipse cx="384" cy="43" rx="8" ry="5" opacity=".8"/><ellipse cx="359" cy="50" rx="14" ry="6" opacity=".7"/><ellipse cx="342" cy="45" rx="6" ry="5" opacity=".9"/><ellipse cx="339" cy="51" rx="9" ry="5" opacity=".8"/><ellipse cx="372" cy="52" rx="9" ry="5" opacity=".8"/><ellipse cx="341" cy="52" rx="13" ry="8" opacity=".7"/><ellipse cx="383" cy="71" rx="13" ry="7" opacity=".7"/><ellipse cx="375" cy="70" rx="5" ry="4" opacity=".7"/><ellipse cx="391" cy="72" rx="4" ry="3" opacity=".7"/><ellipse cx="388" cy="70" rx="6" ry="4" opacity=".7"/><ellipse cx="83" cy="75" rx="40" ry="8" opacity=".6"/><ellipse cx="86" cy="77" rx="9" ry="5" opacity=".6"/><ellipse cx="112" cy="80" rx="13" ry="10" opacity=".7"/><ellipse cx="65" cy="75" rx="9" ry="7" opacity=".7"/><ellipse cx="113" cy="78" rx="17" ry="12" opacity=".7"/><ellipse cx="52" cy="76" rx="8" ry="4" opacity=".7"/><ellipse cx="48" cy="70" rx="9" ry="7" opacity=".6"/><ellipse cx="46" cy="79" rx="9" ry="7" opacity=".7"/><ellipse cx="109" cy="80" rx="16" ry="11" opacity=".6"/><ellipse cx="253" cy="75" rx="29" ry="8" opacity=".6"/><ellipse cx="268" cy="75" rx="13" ry="6" opacity=".8"/><ellipse cx="277" cy="70" rx="9" ry="6" opacity=".8"/><ellipse cx="239" cy="71" rx="8" ry="5" opacity=".8"/><ellipse cx="247" cy="73" rx="10" ry="5" opacity=".7"/><ellipse cx="230" cy="75" rx="15" ry="9" opacity=".8"/><ellipse cx="234" cy="77" rx="13" ry="9" opacity=".7"/><ellipse cx="252" cy="77" rx="14" ry="7" opacity=".6"/><ellipse cx="267" cy="80" rx="11" ry="6" opacity=".7"/><ellipse cx="160" cy="75" rx="34" ry="11" opacity=".4"/><ellipse cx="140" cy="71" rx="9" ry="6" opacity=".4"/><ellipse cx="143" cy="78" rx="17" ry="10" opacity=".5"/><ellipse cx="154" cy="81" rx="13" ry="7" opacity=".4"/><ellipse cx="130" cy="75" rx="11" ry="6" opacity=".4"/><ellipse cx="149" cy="80" rx="8" ry="6" opacity=".4"/><ellipse cx="166" cy="74" rx="16" ry="12" opacity=".4"/><ellipse cx="159" cy="79" rx="16" ry="9" opacity=".5"/><ellipse cx="190" cy="74" rx="9" ry="5" opacity=".5"/><ellipse cx="70" cy="90" rx="59" ry="8" opacity=".4"/><ellipse cx="90" cy="96" rx="28" ry="15" opacity=".4"/><ellipse cx="43" cy="86" rx="25" ry="19" opacity=".5"/><ellipse cx="43" cy="94" rx="17" ry="10" opacity=".5"/><ellipse cx="24" cy="85" rx="28" ry="15" opacity=".5"/><ellipse cx="79" cy="92" rx="11" ry="6" opacity=".5"/><ellipse cx="68" cy="86" rx="23" ry="18" opacity=".5"/><ellipse cx="75" cy="85" rx="17" ry="11" opacity=".4"/><ellipse cx="113" cy="95" rx="13" ry="10" opacity=".5"/><ellipse cx="220" cy="92" rx="67" ry="8" opacity=".4"/><ellipse cx="255" cy="95" rx="19" ry="13" opacity=".5"/><ellipse cx="259" cy="89" rx="30" ry="23" opacity=".5"/><ellipse cx="225" cy="87" rx="24" ry="14" opacity=".5"/><ellipse cx="243" cy="93" rx="17" ry="11" opacity=".5"/><ellipse cx="179" cy="97" rx="28" ry="14" opacity=".5"/><ellipse cx="174" cy="90" rx="29" ry="19" opacity=".4"/><ellipse cx="239" cy="92" rx="20" ry="10" opacity=".4"/><ellipse cx="248" cy="95" rx="25" ry="18" opacity=".4"/><ellipse cx="345" cy="89" rx="46" ry="8" opacity=".4"/><ellipse cx="324" cy="88" rx="22" ry="10" opacity=".5"/><ellipse cx="323" cy="92" rx="14" ry="8" opacity=".5"/><ellipse cx="349" cy="93" rx="14" ry="11" opacity=".4"/><ellipse cx="325" cy="84" rx="10" ry="8" opacity=".5"/><ellipse cx="317" cy="85" rx="15" ry="11" opacity=".5"/><ellipse cx="367" cy="90" rx="11" ry="6" opacity=".4"/><ellipse cx="347" cy="90" rx="12" ry="6" opacity=".5"/><ellipse cx="304" cy="93" rx="22" ry="18" opacity=".5"/></g><rect y="105.5" width="400" height="14.5" fill="url(#sec3)"/><clipPath id="fc1195197"><rect x="-60" y="119.5" width="520" height="166.5"/></clipPath><g clip-path="url(#fc1195197)"><rect x="-60" y="119.5" width="520" height="166.5" fill="#c9c5c7"/><path d="M197 119.5L-3000 256.5L-3000 258.9L197 119.5ZM197 119.5L-3000 261.3L-3000 263.9L197 119.5ZM197 119.5L-3000 266.5L-3000 269.2L197 119.5ZM197 119.5L-3000 272.1L-3000 275.0L197 119.5ZM197 119.5L-3000 278.1L-3000 281.2L197 119.5ZM197 119.5L-3000 284.6L-3000 288.0L197 119.5ZM197 119.5L-3000 291.6L-3000 295.4L197 119.5ZM197 119.5L-3000 299.3L-3000 303.4L197 119.5ZM197 119.5L-3000 307.7L-3000 312.2L197 119.5ZM197 119.5L-3000 316.9L-3000 321.9L197 119.5ZM197 119.5L-3000 327.1L-3000 332.6L197 119.5ZM197 119.5L-3000 338.4L-3000 344.5L197 119.5ZM197 119.5L-3000 350.9L-3000 357.8L197 119.5ZM197 119.5L-3000 365.0L-3000 372.8L197 119.5ZM197 119.5L-3000 381.0L-3000 389.8L197 119.5ZM197 119.5L-3000 399.1L-3000 409.2L197 119.5ZM197 119.5L-3000 420.0L-3000 431.6L197 119.5ZM197 119.5L-3000 444.2L-3000 457.9L197 119.5ZM197 119.5L-3000 472.7L-3000 488.9L197 119.5ZM197 119.5L-3000 506.6L-3000 526.2L197 119.5ZM197 119.5L-3000 547.8L-3000 571.9L197 119.5ZM197 119.5L-3000 598.8L-2981 626.0L197 119.5ZM197 119.5L-2780 626.0L-2579 626.0L197 119.5ZM197 119.5L-2378 626.0L-2177 626.0L197 119.5ZM197 119.5L-1976 626.0L-1775 626.0L197 119.5ZM197 119.5L-1574 626.0L-1373 626.0L197 119.5ZM197 119.5L-1172 626.0L-971 626.0L197 119.5ZM197 119.5L-770 626.0L-569 626.0L197 119.5ZM197 119.5L-368 626.0L-167 626.0L197 119.5ZM197 119.5L34 626.0L235 626.0L197 119.5ZM197 119.5L436 626.0L637 626.0L197 119.5ZM197 119.5L838 626.0L1039 626.0L197 119.5ZM197 119.5L1240 626.0L1441 626.0L197 119.5ZM197 119.5L1642 626.0L1843 626.0L197 119.5ZM197 119.5L2044 626.0L2245 626.0L197 119.5ZM197 119.5L2446 626.0L2647 626.0L197 119.5ZM197 119.5L2848 626.0L3000 617.3L197 119.5ZM197 119.5L3000 584.5L3000 555.8L197 119.5ZM197 119.5L3000 530.4L3000 507.8L197 119.5ZM197 119.5L3000 487.6L3000 469.4L197 119.5ZM197 119.5L3000 452.8L3000 437.8L197 119.5ZM197 119.5L3000 424.1L3000 411.5L197 119.5ZM197 119.5L3000 399.9L3000 389.2L197 119.5ZM197 119.5L3000 379.3L3000 370.1L197 119.5ZM197 119.5L3000 361.5L3000 353.5L197 119.5ZM197 119.5L3000 346.0L3000 338.9L197 119.5ZM197 119.5L3000 332.3L3000 326.1L197 119.5ZM197 119.5L3000 320.2L3000 314.7L197 119.5ZM197 119.5L3000 309.4L3000 304.5L197 119.5ZM197 119.5L3000 299.7L3000 295.3L197 119.5ZM197 119.5L3000 291.0L3000 286.9L197 119.5ZM197 119.5L3000 283.0L3000 279.3L197 119.5ZM197 119.5L3000 275.8L3000 272.4L197 119.5ZM197 119.5L3000 269.2L3000 266.1L197 119.5ZM197 119.5L3000 263.1L3000 260.2L197 119.5ZM197 119.5L3000 257.5L3000 254.8L197 119.5ZM197 119.5L3000 252.3L3000 249.8L197 119.5ZM197 119.5L3000 247.5L3000 245.2L197 119.5ZM197 119.5L3000 243.0L3000 240.9L197 119.5ZM197 119.5L3000 238.8L3000 236.9L197 119.5ZM-3000 206.2L3000 206.2L3000 183.5L-3000 183.5ZM-3000 170.2L3000 170.2L3000 161.5L-3000 161.5ZM-3000 155.3L3000 155.3L3000 150.8L-3000 150.8ZM-3000 147.2L3000 147.2L3000 144.4L-3000 144.4ZM-3000 142.1L3000 142.1L3000 140.2L-3000 140.2ZM-3000 138.6L3000 138.6L3000 137.2L-3000 137.2ZM-3000 136.0L3000 136.0L3000 135.0L-3000 135.0ZM-3000 134.0L3000 134.0L3000 133.2L-3000 133.2ZM-3000 132.5L3000 132.5L3000 131.8L-3000 131.8ZM-3000 131.2L3000 131.2L3000 130.7L-3000 130.7ZM-3000 130.2L3000 130.2L3000 129.8L-3000 129.8ZM-3000 129.3L3000 129.3L3000 129.0L-3000 129.0ZM-3000 128.6L3000 128.6L3000 128.3L-3000 128.3ZM-3000 128.0L3000 128.0L3000 127.7L-3000 127.7ZM-3000 127.4L3000 127.4L3000 127.2L-3000 127.2ZM-3000 126.9L3000 126.9L3000 126.7L-3000 126.7ZM-3000 126.5L3000 126.5L3000 126.3L-3000 126.3ZM-3000 126.1L3000 126.1L3000 126.0L-3000 126.0ZM-3000 125.8L3000 125.8L3000 125.6L-3000 125.6ZM-3000 125.5L3000 125.5L3000 125.3L-3000 125.3ZM-3000 125.2L3000 125.2L3000 125.1L-3000 125.1ZM-3000 125.0L3000 125.0L3000 124.8L-3000 124.8ZM-3000 124.7L3000 124.7L3000 124.6L-3000 124.6ZM-3000 124.5L3000 124.5L3000 124.4L-3000 124.4ZM-3000 124.3L3000 124.3L3000 124.2L-3000 124.2ZM-3000 124.1L3000 124.1L3000 124.0L-3000 124.0ZM-3000 124.0L3000 124.0L3000 123.9L-3000 123.9ZM-3000 123.8L3000 123.8L3000 123.7L-3000 123.7ZM-3000 123.7L3000 123.7L3000 123.6L-3000 123.6ZM-3000 123.5L3000 123.5L3000 123.5L-3000 123.5Z" fill="#b9b5b8" fill-rule="evenodd"/><path d="M197 119.5L-3000 256.5M197 119.5L-3000 261.3M197 119.5L-3000 266.5M197 119.5L-3000 272.1M197 119.5L-3000 278.1M197 119.5L-3000 284.6M197 119.5L-3000 291.6M197 119.5L-3000 299.3M197 119.5L-3000 307.7M197 119.5L-3000 316.9M197 119.5L-3000 327.1M197 119.5L-3000 338.4M197 119.5L-3000 350.9M197 119.5L-3000 365.0M197 119.5L-3000 381.0M197 119.5L-3000 399.1M197 119.5L-3000 420.0M197 119.5L-3000 444.2M197 119.5L-3000 472.7M197 119.5L-3000 506.6M197 119.5L-3000 547.8M197 119.5L-3000 598.8M197 119.5L-2780 626.0M197 119.5L-2378 626.0M197 119.5L-1976 626.0M197 119.5L-1574 626.0M197 119.5L-1172 626.0M197 119.5L-770 626.0M197 119.5L-368 626.0M197 119.5L34 626.0M197 119.5L436 626.0M197 119.5L838 626.0M197 119.5L1240 626.0M197 119.5L1642 626.0M197 119.5L2044 626.0M197 119.5L2446 626.0M197 119.5L2848 626.0M197 119.5L3000 584.5M197 119.5L3000 530.4M197 119.5L3000 487.6M197 119.5L3000 452.8M197 119.5L3000 424.1M197 119.5L3000 399.9M197 119.5L3000 379.3M197 119.5L3000 361.5M197 119.5L3000 346.0M197 119.5L3000 332.3M197 119.5L3000 320.2M197 119.5L3000 309.4M197 119.5L3000 299.7M197 119.5L3000 291.0M197 119.5L3000 283.0M197 119.5L3000 275.8M197 119.5L3000 269.2M197 119.5L3000 263.1M197 119.5L3000 257.5M197 119.5L3000 252.3M197 119.5L3000 247.5M197 119.5L3000 243.0M197 119.5L3000 238.8M-3000 206.2L3000 206.2M-3000 170.2L3000 170.2M-3000 155.3L3000 155.3M-3000 147.2L3000 147.2M-3000 142.1L3000 142.1M-3000 138.6L3000 138.6M-3000 136.0L3000 136.0M-3000 134.0L3000 134.0M-3000 132.5L3000 132.5M-3000 131.2L3000 131.2M-3000 130.2L3000 130.2M-3000 129.3L3000 129.3M-3000 128.6L3000 128.6M-3000 128.0L3000 128.0M-3000 127.4L3000 127.4M-3000 126.9L3000 126.9M-3000 126.5L3000 126.5M-3000 126.1L3000 126.1M-3000 125.8L3000 125.8M-3000 125.5L3000 125.5M-3000 125.2L3000 125.2M-3000 125.0L3000 125.0M-3000 124.7L3000 124.7M-3000 124.5L3000 124.5M-3000 124.3L3000 124.3M-3000 124.1L3000 124.1M-3000 124.0L3000 124.0M-3000 123.8L3000 123.8M-3000 123.7L3000 123.7M-3000 123.5L3000 123.5" stroke="#55535a" stroke-width="0.45" fill="none" opacity="0.8"/><linearGradient id="hzfc1195197" x1="0" y1="0" x2="0" y2="1"><stop offset="0" stop-color="#cdcacd"/><stop offset=".3" stop-color="#cdcacd" stop-opacity=".85"/><stop offset=".65" stop-color="#cdcacd" stop-opacity=".45"/><stop offset="1" stop-color="#cdcacd" stop-opacity="0"/></linearGradient><rect x="-60" y="119.5" width="520" height="50" fill="url(#hzfc1195197)"/></g><path d="M109 205 Q150 196 190 203 L203 212 Q160 216 109 210Z" fill="#6c6c86" opacity=".85" filter="url(#shc3)"/><g transform="translate(149 54) scale(1.0)">
<path d="M-21 40 L-30 44 L-40 56 L-48 70 L-52 77 L-44 82 L-36 70 L-28 58 L-20 52Z" fill="#8c5e46"/>
<path d="M-47 54 L-30 52 L-26 72 L-49 76Z" fill="#6e6238" opacity=".95"/>
<path d="M-50 72 L-38 70 L-34 82 L-44 98 L-54 100 L-60 92 L-58 84Z" fill="#5a5030"/>
<path d="M-52 73 L-37 70 L-36 74 L-52 77Z" fill="#c0b898" opacity=".8"/>
<path d="M-63 91 L-55 90 L-52 101 L-60 103 L-64 99Z" fill="#3a2c22"/>
<path d="M20 44 L32 50 L40 62 L46 72 L40 76 L32 66 L22 58Z" fill="#8c5e46"/>
<path d="M34 70 L48 68 L60 80 L66 92 L60 96 L48 88 L38 82Z" fill="#5e5432"/>
<path d="M36 70 L48 68 L50 72 L38 74Z" fill="#c0b898" opacity=".8"/>
<path d="M61 90 L68 92 L68 101 L62 102 L59 96Z" fill="#3a2c22"/>
<path d="M-22 36 L11 36 L22 47 L23 70 L21 89 L-21 89 L-23 70 L-23 46Z" fill="#2e3550"/>
<path d="M-20 37 L10 37 L14 46 L4 52 L-8 52 L-20 47Z" fill="#9a6a50"/>
<path d="M-19 50 L-13 45 L20 84 L14 89Z" fill="#8a7a48"/>
<path d="M12 46 L17 50 L-15 86 L-20 82Z" fill="#7a6c40"/>
<circle cx="-2" cy="64" r="3.6" fill="#4a6a9a" stroke="#1a2030" stroke-width="1"/>
<path d="M9 40 L20 34 L28 31 L34 38 L46 45 L60 54 L44 55 L28 54 L16 56 L12 50Z" fill="#2e3448" stroke="#9aa0b0" stroke-width=".6" stroke-dasharray=".8 .6"/>
<path d="M-23 85 L22 85 L24 102 L-23 102Z" fill="#262c42"/>
<path d="M18 84 L25 82 L26 98 L20 100Z" fill="#3a4868"/>
<rect x="-10.5" y="89" width="19.5" height="8" fill="#c8c8c8"/>
<path d="M-22 101 L-1 101 L-2 153 L-22 153Z" fill="#8c7c44"/>
<path d="M1 101 L24 101 L23 153 L2 153Z" fill="#8a7a42"/>
<path d="M-21 110 L-4 138 M2 108 L22 144 M-19 140 L-3 118 M5 140 L22 116" stroke="#4a4020" stroke-width=".8"/>
<path d="M-25 152 L-1 152 L-2 176 L-24 176Z M1 152 L25 152 L25 176 L3 176Z" fill="#3c4462"/>
<path d="M-25 150 L-1 150 L-1 158 L-25 158Z M1 150 L25 150 L25 158 L1 158Z" fill="#b8b098" opacity=".85"/>
<path d="M-13 23 L11 23 L10.5 36 L-12 36Z" fill="#7e7050"/>
<path d="M-13 25 Q-14 11 -1 10 Q12 11 12 25Z" fill="#3e4252"/>
<path d="M-4 23 Q-4 13 -1 11 Q2 13 3 23Z" fill="#c8ccd6"/>
<path d="M-1 0 L2 12 L-4 12Z M-10.5 9 L-4 14 L-8 17Z M9 8 L5 16 L2 14Z M-16 20 L-9 17 L-9 22Z M14.5 20 L8 22 L8 17Z" fill="#3a4052"/>
</g></svg></div></div><div class="bd"></div></div><div class="cell" style="left:1820px;top:5px"><div class="a menu"></div><div class="a tabs"></div><div class="a tb"></div><div class="a ptab"></div><svg class="a" style="left:2px;top:2px" width="14" height="14" viewBox="0 0 14 14"><circle cx="7" cy="7" r="6" fill="#1a1a1a" stroke="#9a9a9a" stroke-width=".7"/><path d="M4.2 4.3 L5.6 4 L5.6 8.8 Q6.6 9.6 7.6 8.8 L7.6 4.6 L9.1 4.2 L9.1 9.6 Q6.6 11 4.2 9.6Z" fill="#c8c8c8"/></svg><i style="left:21.5px;top:1.8px;font-size:3.8px;color:#c8c8c8;">File</i><i style="left:35.5px;top:1.8px;font-size:3.8px;color:#c8c8c8;">Edit</i><i style="left:51px;top:1.8px;font-size:3.8px;color:#c8c8c8;">Asset</i><i style="left:68px;top:1.8px;font-size:3.8px;color:#c8c8c8;">View</i><i style="left:84.5px;top:1.8px;font-size:3.8px;color:#c8c8c8;">Debug</i><i style="left:103.5px;top:1.8px;font-size:3.8px;color:#c8c8c8;">Window</i><i style="left:123px;top:1.8px;font-size:3.8px;color:#c8c8c8;">Tools</i><i style="left:140.5px;top:1.8px;font-size:3.8px;color:#c8c8c8;">Help</i><b style="left:564px;top:4px;width:4px;height:.6px;background:#aaa;"></b><div class="a" style="left:578px;top:2.2px;width:3.4px;height:3.2px;border:.6px solid #bbb"></div><i style="left:591.5px;top:1.3px;font-size:4.6px;color:#ddd;">✕</i><svg class="a" style="left:22.5px;top:10px" width="5" height="5" viewBox="0 0 5 5"><path d="M.5 2.5 L2.5 .6 L4.5 2.5 V4.5 H.5Z" fill="none" stroke="#666" stroke-width=".5"/></svg><svg class="a" style="left:33.5px;top:10.3px" width="5" height="4.5" viewBox="0 0 5 4.5"><path d="M2.5 .2 L4.8 4.3 H.2Z" fill="#d8a020"/></svg><i style="left:41px;top:10.8px;font-size:3.8px;color:#c0c0c0;">DefaultMap</i><b style="left:97px;top:8.5px;width:65px;height:8.5px;background:#1e1e1e;border-radius:1px 1px 0 0"></b><svg class="a" style="left:100px;top:9.5px" width="5" height="6" viewBox="0 0 5 6"><circle cx="2.5" cy="1.6" r="1.3" fill="#3a7ee0"/><path d="M.4 5.6 Q.4 3.2 2.5 3.2 Q4.6 3.2 4.6 5.6Z" fill="#3a7ee0"/></svg><i style="left:107px;top:10.8px;font-size:3.8px;color:#d0d0d0;">BP_Brute</i><i style="left:155.5px;top:10.3px;font-size:4.9px;">×</i><i style="left:552px;top:10.8px;font-size:3.6px;color:#8a8a8a;">Parent class: <u>Character</u></i><b style="left:5.5px;top:20px;width:5px;height:6px;background:#c8c8c8;border-radius:.5px"></b><b style="left:19.5px;top:20.5px;width:5px;height:5.5px;background:#a8a8a8;border-radius:.5px"></b><b style="left:35px;top:19.5px;width:6px;height:7px;background:#d8c020;border-radius:.5px"></b><b style="left:36.5px;top:21.5px;width:3px;height:3px;background:#58a030;"></b><i style="left:44px;top:22px;font-size:3.9px;">Compile</i><i style="left:62.5px;top:21.8px;font-size:4.2px;color:#888;">:</i><b style="left:71px;top:21.5px;width:3px;height:3.5px;background:#bbb;"></b><i style="left:76px;top:22px;font-size:3.9px;">Diff v</i><b style="left:100px;top:20.5px;width:4.5px;height:4.5px;border:.6px solid #ccc;border-radius:50%"></b><i style="left:106px;top:22px;font-size:3.9px;">Find</i><b style="left:121px;top:20.5px;width:5px;height:5px;background:#888;border-radius:1px"></b><i style="left:128.5px;top:22px;font-size:3.9px;">Hide Unrelated</i><i style="left:160px;top:21.8px;font-size:4.2px;color:#888;">:</i><b style="left:170.5px;top:20.5px;width:5px;height:5px;border:.7px solid #bbb;border-radius:50%"></b><i style="left:177.5px;top:22px;font-size:3.9px;">Class Settings</i><b style="left:211px;top:20.5px;width:5px;height:5px;background:#bbb;clip-path:polygon(0 100%,20% 100%,100% 20%,80% 0)"></b><i style="left:218.5px;top:22px;font-size:3.9px;">Class Defaults</i><b style="left:251.5px;top:20.5px;width:5px;height:5px;background:#aaa;clip-path:polygon(0 0,100% 60%,55% 65%,40% 100%)"></b><i style="left:259px;top:22px;font-size:3.9px;">Simulation</i><b style="left:288px;top:18.8px;width:44px;height:9.5px;background:#232323;border-radius:1px"></b><b style="left:291.7px;top:20.8px;width:4px;height:5px;background:#40c040;clip-path:polygon(0 0,100% 50%,0 100%)"></b><b style="left:300.5px;top:21px;width:2.6px;height:4.6px;background:#4a5a4a;clip-path:polygon(0 0,100% 50%,0 100%)"></b><b style="left:309px;top:21.2px;width:4px;height:4.2px;background:#555;"></b><b style="left:317.5px;top:21px;width:3.8px;height:4.8px;background:#bbb;clip-path:polygon(0 0,100% 50%,0 100%)"></b><b style="left:328px;top:21px;width:.6px;height:5px;background:#555;"></b><b style="left:338px;top:19.5px;width:55px;height:7px;background:#0c0c0c;border-radius:1px"></b><i style="left:340px;top:22px;font-size:3.7px;">No debug object selected v</i><b style="left:397px;top:21px;width:3.5px;height:4px;background:#777;"></b><div class="a sb"></div><b style="left:3px;top:320.5px;width:3px;height:3.5px;background:#999;"></b><i style="left:8px;top:320.7px;font-size:3.7px;color:#aaa;">Content Drawer</i><b style="left:44px;top:320.5px;width:3px;height:3.5px;background:#bbb;"></b><i style="left:50px;top:320.7px;font-size:3.7px;color:#aaa;">Output Log</i><b style="left:78px;top:320.7px;width:4px;height:3.2px;border:.5px solid #999"></b><i style="left:84px;top:320.7px;font-size:3.7px;color:#aaa;">Cmd v</i><b style="left:103px;top:319.5px;width:93px;height:5.5px;background:#0c0c0c;border-radius:1px"></b><i style="left:105.5px;top:320.6px;font-size:3.5px;color:#555;">Enter Console Command</i><b style="left:518px;top:320.5px;width:3px;height:3.6px;background:#aaa;"></b><i style="left:524px;top:320.7px;font-size:3.7px;color:#aaa;">1 Unsaved</i><b style="left:553px;top:320.5px;width:2.5px;height:3.8px;background:#aaa;"></b><i style="left:558px;top:320.7px;font-size:3.7px;color:#aaa;">Revision Control v</i><div class="a task"></div><b style="left:3.3px;top:329.5px;width:1.9px;height:1.9px;background:#fff;"></b><b style="left:5.6px;top:329.5px;width:1.9px;height:1.9px;background:#fff;"></b><b style="left:3.3px;top:331.8px;width:1.9px;height:1.9px;background:#fff;"></b><b style="left:5.6px;top:331.8px;width:1.9px;height:1.9px;background:#fff;"></b><b style="left:15.5px;top:329.5px;width:4.5px;height:4px;background:#c040e0;border-radius:1px;transform:skewX(-10deg)"></b><b style="left:27px;top:329.8px;width:4.8px;height:3.6px;background:#e8c040;border-radius:.4px"></b><div class="a" style="left:38.6px;top:329.2px;width:4.4px;height:4.4px;border-radius:50%;background:conic-gradient(#e33 0 33%,#fc3 0 66%,#3a5 0)"></div><b style="left:48.5px;top:327.5px;width:8.5px;height:8.5px;background:#3a3d44;"></b><b style="left:50.5px;top:329.3px;width:4.5px;height:4.5px;border:.6px solid #aaa;border-radius:50%"></b><b style="left:61.5px;top:329.4px;width:4.2px;height:4.2px;border:.6px solid #888;border-radius:50%"></b><i style="left:535px;top:329.4px;font-size:4.1px;">^</i><b style="left:542.5px;top:329.2px;width:1.6px;height:4.2px;background:#ddd;border-radius:1px"></b><b style="left:549px;top:329.6px;width:3.8px;height:3px;border:.5px solid #ccc"></b><b style="left:555.5px;top:330px;width:2px;height:2.5px;background:#ccc;clip-path:polygon(0 30%,40% 30%,100% 0,100% 100%,40% 70%,0 70%)"></b><i style="left:561px;top:329.9px;font-size:3px;color:#ccc;">ENG</i><i style="left:575px;top:328px;font-size:3.5px;color:rgba(230,230,230,.55);">Udemy</i><b style="left:588.5px;top:329.4px;width:4.5px;height:3.6px;background:#e8e8e8;border-radius:.3px"></b><div class="a lp"></div><b style="left:1px;top:31px;width:50px;height:9px;background:#1a1a1a;border-radius:1px 1px 0 0"></b><b style="left:3px;top:33px;width:3px;height:3.5px;border:.5px solid #aaa"></b><i style="left:8.5px;top:33.6px;font-size:3.8px;color:#c0c0c0;">Components</i><i style="left:44.5px;top:32.9px;font-size:4.6px;color:#aaa;">×</i><b style="left:7px;top:41px;width:17px;height:6px;background:#2a2a2a;border-radius:1px"></b><b style="left:9px;top:42.5px;width:1px;height:3px;background:#50c050;"></b><b style="left:8px;top:43.5px;width:3px;height:1px;background:#50c050;"></b><i style="left:12.5px;top:42.4px;font-size:3.8px;color:#ccc;">Add</i><div class="srch" style="left:27px;top:41px;width:61px;height:6px"></div><svg class="a" style="left:29px;top:42px" width="4" height="4" viewBox="0 0 4 4"><circle cx="1.6" cy="1.6" r="1.15" fill="none" stroke="#aaa" stroke-width=".55"/><path d="M2.4 2.4L3.6 3.6" stroke="#aaa" stroke-width=".6"/></svg><i style="left:35px;top:42.6px;font-size:3.5px;color:#444;">Search</i><b style="left:5.9px;top:53.6px;width:2.6px;height:3.6px;background:#999;border-radius:.6px"></b><i style="left:10.4px;top:53.2px;font-size:3.8px;color:#b8b8b8;letter-spacing:-.05px">BP_Brute (Self)</i><b style="left:14.1px;top:61.1px;width:2.6px;height:3.6px;background:#999;border-radius:.6px"></b><i style="left:18.6px;top:60.7px;font-size:3.8px;color:#b8b8b8;letter-spacing:-.05px">Capsule Component (CollisionCylinder)</i><b style="left:17.3px;top:68.7px;width:2.6px;height:3.6px;background:#999;border-radius:.6px"></b><i style="left:21.8px;top:68.3px;font-size:3.8px;color:#b8b8b8;letter-spacing:-.05px">Arrow Component (Arrow) <u>Edit in C++</u></i><b style="left:17.3px;top:76.2px;width:2.6px;height:3.6px;background:#999;border-radius:.6px"></b><i style="left:21.8px;top:75.8px;font-size:3.8px;color:#b8b8b8;letter-spacing:-.05px">CameraBoom</i><b style="left:20.3px;top:83.8px;width:2.6px;height:3.6px;background:#999;border-radius:.6px"></b><i style="left:24.8px;top:83.4px;font-size:3.8px;color:#b8b8b8;letter-spacing:-.05px">FollowCamera</i><b style="left:17.3px;top:91.3px;width:2.6px;height:3.6px;background:#999;border-radius:.6px"></b><i style="left:21.8px;top:90.9px;font-size:3.8px;color:#b8b8b8;letter-spacing:-.05px">Mesh (CharacterMesh0)  <u>Edit in C++</u></i><b style="left:14.1px;top:102.2px;width:2.6px;height:3.6px;background:#999;border-radius:.6px"></b><i style="left:18.6px;top:101.8px;font-size:3.8px;color:#b8b8b8;letter-spacing:-.05px">Character Movement (CharMoveComp)</i><b style="left:8px;top:97.3px;width:82px;height:.5px;background:#333;"></b><b style="left:1px;top:118px;width:50px;height:8.5px;background:#1a1a1a;border-radius:1px 1px 0 0"></b><b style="left:3px;top:120px;width:3px;height:3.5px;background:#888;"></b><i style="left:9px;top:120.4px;font-size:3.8px;color:#c0c0c0;">My Blueprint</i><i style="left:44.5px;top:119.6px;font-size:4.6px;color:#aaa;">×</i><b style="left:1px;top:126.5px;width:90px;height:.5px;background:#0e0e0e;"></b><b style="left:6px;top:128px;width:18px;height:5.5px;background:#262626;border-radius:1px"></b><b style="left:9px;top:129.3px;width:1px;height:3px;background:#50c050;"></b><b style="left:8px;top:130.3px;width:3px;height:1px;background:#50c050;"></b><i style="left:12.5px;top:129.4px;font-size:3.8px;color:#ccc;">Add</i><div class="srch" style="left:26px;top:128px;width:54px;height:5.5px"></div><svg class="a" style="left:28px;top:128.8px" width="4" height="4" viewBox="0 0 4 4"><circle cx="1.6" cy="1.6" r="1.15" fill="none" stroke="#aaa" stroke-width=".55"/><path d="M2.4 2.4L3.6 3.6" stroke="#aaa" stroke-width=".6"/></svg><b style="left:83.6px;top:128.6px;width:3.6px;height:3.6px;border:.6px solid #aaa;border-radius:50%"></b><div class="hdr" style="top:137.29999999999998px"></div><i style="left:7px;top:139.2px;font-size:3.2px;color:#c8c8c8;font-weight:bold;">GRAPHS</i><i style="left:2.8px;top:139.2px;font-size:3.2px;color:#888;">v</i><b style="left:83.6px;top:138.7px;width:3.8px;height:3.8px;border:.6px solid #999;border-radius:50%"></b><b style="left:7px;top:147.8px;width:3px;height:2.6px;background:#aaa;"></b><i style="left:12.5px;top:147.9px;font-size:3.6px;">EventGraph</i><b style="left:10.5px;top:155.8px;width:2.8px;height:2.8px;border:.6px solid #ccc;border-radius:50%"></b><i style="left:15.5px;top:156px;font-size:3.6px;color:#b8b8b8;">Event BeginPlay</i><b style="left:10.5px;top:163.5px;width:2.8px;height:2.8px;border:.6px solid #ccc;border-radius:50%"></b><i style="left:15.5px;top:163.7px;font-size:3.6px;color:#b8b8b8;">EnhancedInputAction IA_Move</i><div class="hdr" style="top:170.99999999999997px"></div><i style="left:7px;top:172.9px;font-size:3.2px;color:#c8c8c8;font-weight:bold;">FUNCTIONS <span style='color:#666;font-weight:normal'>(14 OVERRIDABLE)</span></i><i style="left:2.8px;top:172.9px;font-size:3.2px;color:#888;">v</i><b style="left:57px;top:171.7px;width:22px;height:5.2px;background:#0e0e0e;border-radius:1px"></b><i style="left:59px;top:173.1px;font-size:3.2px;">Override v</i><b style="left:83.6px;top:172.4px;width:3.8px;height:3.8px;border:.6px solid #999;border-radius:50%"></b><i style="left:9px;top:182px;font-size:3.7px;color:#aaa;">ƒ</i><i style="left:13px;top:182.2px;font-size:3.6px;">Construction Script</i><div class="hdr" style="top:188.6px"></div><i style="left:7px;top:190.5px;font-size:3.2px;color:#c8c8c8;font-weight:bold;">MACROS</i><i style="left:2.8px;top:190.5px;font-size:3.2px;color:#888;">v</i><b style="left:83.6px;top:190px;width:3.8px;height:3.8px;border:.6px solid #999;border-radius:50%"></b><div class="hdr" style="top:197.9px"></div><i style="left:7px;top:199.8px;font-size:3.2px;color:#c8c8c8;font-weight:bold;">VARIABLES</i><i style="left:2.8px;top:199.8px;font-size:3.2px;color:#888;">v</i><b style="left:83.6px;top:199.3px;width:3.8px;height:3.8px;border:.6px solid #999;border-radius:50%"></b><i style="left:3px;top:207.4px;font-size:3.2px;color:#888;">v</i><i style="left:6px;top:207.5px;font-size:3.5px;color:#c8c8c8;font-weight:bold;">Components</i><i style="left:10px;top:213.5px;font-size:3.5px;color:#a8a8a8;">FollowCamera</i><b style="left:58px;top:214.2px;width:3.4px;height:1.8px;background:#30a0e0;border-radius:1px"></b><i style="left:10px;top:219.7px;font-size:3.5px;color:#a8a8a8;">CameraBoom</i><b style="left:58px;top:220.4px;width:3.4px;height:1.8px;background:#30a0e0;border-radius:1px"></b><div class="hdr" style="top:225.49999999999997px"></div><i style="left:7px;top:227.4px;font-size:3.2px;color:#c8c8c8;font-weight:bold;">EVENT DISPATCHERS</i><i style="left:2.8px;top:227.4px;font-size:3.2px;color:#888;">v</i><b style="left:83.6px;top:226.9px;width:3.8px;height:3.8px;border:.6px solid #999;border-radius:50%"></b><b style="left:93.5px;top:33.2px;width:3.5px;height:3px;background:#999;"></b><i style="left:99px;top:33.6px;font-size:3.8px;color:#a8a8a8;">Viewport</i><i style="left:145px;top:33.2px;font-size:3.9px;color:#aaa;">ƒ</i><i style="left:150.5px;top:33.6px;font-size:3.8px;color:#a8a8a8;">Construction Scr...</i><b style="left:191.5px;top:31px;width:49px;height:9px;background:#1e1e1e;border-radius:1px 1px 0 0"></b><b style="left:194px;top:33.2px;width:3.4px;height:3.4px;border:.5px dashed #bbb"></b><i style="left:199.5px;top:33.6px;font-size:3.8px;color:#d0d0d0;">EventGraph</i><i style="left:236px;top:32.9px;font-size:4.6px;color:#aaa;">×</i><b style="left:450px;top:31px;width:50px;height:9px;background:#1c1c1c;border-radius:1px 1px 0 0"></b><b style="left:452.5px;top:33px;width:3px;height:3.6px;background:#ccc;clip-path:polygon(0 100%,25% 100%,100% 25%,75% 0)"></b><i style="left:458.5px;top:33.6px;font-size:3.8px;color:#c8c8c8;">Details</i><i style="left:492.5px;top:32.9px;font-size:4.6px;color:#aaa;">×</i><div class="a graph"></div><div class="a" style="left:92px;top:40px;width:357px;height:278px;overflow:hidden"><div class="a" style="left:-92px;top:-40px;width:600px;height:337px"><div class="node" style="left:60px;top:94.8px;width:75.6px;height:110.5px;"><div class="nh" style="height:6.6px;background:linear-gradient(90deg,#a01414,#6a1010 55%,#3a1414)"></div></div><i style="left:64.5px;top:96.4px;font-size:3.7px;color:#f4f4f4;">EnhancedInputAction IA_Move</i><svg class="a" style="left:128.4px;top:105.5px" width="3.4" height="3.8" viewBox="0 0 3.4 3.8"><path d="M.3 .3H2L3.1 1.9L2 3.5H.3Z" fill="none" stroke="#d8d8d8" stroke-width=".5"/></svg><i style="left:127.6px;top:105.7px;font-size:3.5px;color:#d8d8d8;transform:translateX(-100%)">Triggered</i><svg class="a" style="left:128.4px;top:115.39999999999999px" width="3.4" height="3.8" viewBox="0 0 3.4 3.8"><path d="M.3 .3H2L3.1 1.9L2 3.5H.3Z" fill="none" stroke="#d8d8d8" stroke-width=".5"/></svg><i style="left:127.6px;top:115.6px;font-size:3.5px;color:#d8d8d8;transform:translateX(-100%)">Started</i><svg class="a" style="left:128.4px;top:125.5px" width="3.4" height="3.8" viewBox="0 0 3.4 3.8"><path d="M.3 .3H2L3.1 1.9L2 3.5H.3Z" fill="none" stroke="#d8d8d8" stroke-width=".5"/></svg><i style="left:127.6px;top:125.7px;font-size:3.5px;color:#d8d8d8;transform:translateX(-100%)">Ongoing</i><svg class="a" style="left:128.4px;top:135.4px" width="3.4" height="3.8" viewBox="0 0 3.4 3.8"><path d="M.3 .3H2L3.1 1.9L2 3.5H.3Z" fill="none" stroke="#d8d8d8" stroke-width=".5"/></svg><i style="left:127.6px;top:135.6px;font-size:3.5px;color:#d8d8d8;transform:translateX(-100%)">Canceled</i><svg class="a" style="left:128.4px;top:145.6px" width="3.4" height="3.8" viewBox="0 0 3.4 3.8"><path d="M.3 .3H2L3.1 1.9L2 3.5H.3Z" fill="none" stroke="#d8d8d8" stroke-width=".5"/></svg><i style="left:127.6px;top:145.8px;font-size:3.5px;color:#d8d8d8;transform:translateX(-100%)">Completed</i><div class="a" style="left:128.6px;top:155.5px;width:2.8px;height:2.8px;border-radius:50%;border:.55px solid #3fd23f"></div><i style="left:127.6px;top:155.2px;font-size:3.5px;color:#d8d8d8;transform:translateX(-100%)">Action Value X</i><div class="a" style="left:128.6px;top:164.9px;width:2.8px;height:2.8px;border-radius:50%;border:.55px solid #3fd23f"></div><i style="left:127.6px;top:164.6px;font-size:3.5px;color:#d8d8d8;transform:translateX(-100%)">Action Value Y</i><div class="a" style="left:128.6px;top:174.29999999999998px;width:2.8px;height:2.8px;border-radius:50%;border:.55px solid #3fd23f"></div><i style="left:127.6px;top:174px;font-size:3.5px;color:#d8d8d8;transform:translateX(-100%)">Elapsed Seconds</i><div class="a" style="left:128.6px;top:183.7px;width:2.8px;height:2.8px;border-radius:50%;border:.55px solid #3fd23f"></div><i style="left:127.6px;top:183.4px;font-size:3.5px;color:#d8d8d8;transform:translateX(-100%)">Triggered Seconds</i><div class="a" style="left:128.6px;top:193.1px;width:2.8px;height:2.8px;border-radius:50%;border:.55px solid #40b8c8"></div><i style="left:127.6px;top:192.8px;font-size:3.5px;color:#d8d8d8;transform:translateX(-100%)">Input Action</i><i style="left:120px;top:200.2px;font-size:3.9px;">^</i><svg class="a" style="left:0;top:0" width="600" height="337" viewBox="0 0 600 337"><path d="M131 107.4 H385" fill="none" stroke="#eeeeee" stroke-width="0.9"/><path d="M261 132.4 H292" fill="none" stroke="#8a86b0" stroke-width="0.8"/><path d="M350 132 C364 132 372 127.6 386 127.6" fill="none" stroke="#d8a820" stroke-width="0.8"/></svg><div class="a" style="left:128.6px;top:105.7px;width:3px;height:3.4px;background:#f0f0f0;clip-path:polygon(0 0,60% 0,100% 50%,60% 100%,0 100%)"></div><div class="node" style="left:185.5px;top:113.8px;width:75.5px;height:26px;box-shadow:0 0 0 1px #e8901a,0 0 2px #000;"><div class="nh" style="height:11.2px;background:linear-gradient(90deg,#4a8a3a,#3a6a30 60%,#2a3a28)"></div></div><i style="left:190px;top:116px;font-size:3.6px;color:#f4f4f4;">ƒ Get Control Rotation</i><i style="left:193.5px;top:120px;font-size:2.9px;color:rgba(200,230,255,.55);">Target is Pawn</i><div class="a" style="left:191.6px;top:131.0px;width:2.8px;height:2.8px;border-radius:50%;border:.55px solid #58b8f0"></div><i style="left:196px;top:130.8px;font-size:3.4px;color:#d8d8d8;">Target</i><div class="a" style="left:252.29999999999998px;top:131.1px;width:2.6px;height:2.6px;border-radius:50%;background:#a8a0f0"></div><i style="left:251.2px;top:130.8px;font-size:3.4px;color:#d8d8d8;transform:translateX(-100%)">Return Value</i><b style="left:210px;top:129.8px;width:10px;height:4.8px;border:.5px solid #888"></b><div class="node" style="left:285.3px;top:118.3px;width:64.7px;height:20.2px;box-shadow:0 0 0 1px #e8901a,0 0 2px #000;"><div class="nh" style="height:7.7px;background:linear-gradient(90deg,#4a8a3a,#3a6a30 60%,#2a3a28)"></div></div><i style="left:289.8px;top:120.5px;font-size:3.6px;color:#f4f4f4;">ƒ Get Forward Vector</i><div class="a" style="left:291.4px;top:130.6px;width:2.6px;height:2.6px;border-radius:50%;background:#a8a0f0"></div><i style="left:295.7px;top:130.3px;font-size:3.4px;color:#d8d8d8;">In Rot</i><div class="a" style="left:341.3px;top:130.6px;width:2.6px;height:2.6px;border-radius:50%;background:#f0c020"></div><i style="left:340.2px;top:130.3px;font-size:3.4px;color:#d8d8d8;transform:translateX(-100%)">Return Value</i><div class="node" style="left:382px;top:90.3px;width:58px;height:65.6px;"><div class="nh" style="height:11px;background:linear-gradient(90deg,#3a7aa0,#2c5a78 60%,#25384a)"></div></div><i style="left:386.5px;top:92.5px;font-size:3.6px;color:#f4f4f4;">ƒ Add Movement Input</i><i style="left:390px;top:96.4px;font-size:2.9px;color:rgba(200,230,255,.55);">Target is Pawn</i><div class="a" style="left:385.8px;top:105.7px;width:3px;height:3.4px;background:#f0f0f0;clip-path:polygon(0 0,60% 0,100% 50%,60% 100%,0 100%)"></div><svg class="a" style="left:431.9px;top:105.5px" width="3.4" height="3.8" viewBox="0 0 3.4 3.8"><path d="M.3 .3H2L3.1 1.9L2 3.5H.3Z" fill="none" stroke="#d8d8d8" stroke-width=".5"/></svg><div class="a" style="left:385.8px;top:116.1px;width:2.8px;height:2.8px;border-radius:50%;border:.55px solid #58b8f0"></div><i style="left:390.2px;top:115.9px;font-size:3.4px;color:#d8d8d8;">Target</i><div class="a" style="left:385.9px;top:126.10000000000001px;width:2.6px;height:2.6px;border-radius:50%;background:#f0c020"></div><i style="left:390.2px;top:125.8px;font-size:3.4px;color:#d8d8d8;">World Direction</i><div class="a" style="left:385.8px;top:136.2px;width:2.8px;height:2.8px;border-radius:50%;border:.55px solid #3fd23f"></div><i style="left:390.2px;top:136px;font-size:3.4px;color:#d8d8d8;">Scale Value</i><div class="a" style="left:385.8px;top:147.0px;width:2.8px;height:2.8px;border-radius:50%;border:.55px solid #c02020"></div><i style="left:390.2px;top:146.8px;font-size:3.4px;color:#d8d8d8;">Force</i><b style="left:403px;top:115px;width:8px;height:4.8px;border:.5px solid #888"></b><b style="left:412px;top:135.2px;width:7px;height:4.8px;border:.5px solid #888"></b><svg class="a" style="left:208px;top:161.5px;z-index:9" width="5" height="7" viewBox="0 0 5 7"><path d="M.3 .3L.3 5.6L1.6 4.4L2.6 6.6L3.5 6.2L2.5 4.1L4.3 4.1Z" fill="#fff" stroke="#000" stroke-width=".35"/></svg></div></div><div class="a gbar"></div><b style="left:95px;top:43px;width:2.6px;height:3.6px;border:.5px solid #777"></b><i style="left:99px;top:43.4px;font-size:3.2px;color:#888;">v</i><svg class="a" style="left:109.5px;top:43.5px" width="5" height="4" viewBox="0 0 5 4"><path d="M0 2L2.4 0V1.2H5V2.8H2.4V4Z" fill="#d8d8d8"/></svg><svg class="a" style="left:121.5px;top:43.5px" width="5" height="4" viewBox="0 0 5 4"><path d="M5 2L2.6 0V1.2H0V2.8H2.6V4Z" fill="#d8d8d8"/></svg><b style="left:136px;top:42.5px;width:2.6px;height:2.6px;background:#ccc;border-radius:50%"></b><b style="left:140px;top:43.2px;width:2px;height:1.8px;background:#ccc;"></b><b style="left:136px;top:46.5px;width:2px;height:1.8px;background:#ccc;"></b><b style="left:140px;top:46.5px;width:2px;height:1.8px;background:#ccc;"></b><i style="left:147px;top:42.5px;font-size:6.3px;color:#8e8e8e;">BP_Brute <span style='color:#ccc'>&gt;</span> EventGraph</i><i style="left:425px;top:42.9px;font-size:5.1px;color:#3e3e3e;">Zoom 1:1</i><div class="wm">BLUEPRINT</div><div class="a dp"></div><div class="srch" style="left:453px;top:42.5px;width:128px;height:5.5px"></div><svg class="a" style="left:455px;top:43.2px" width="4" height="4" viewBox="0 0 4 4"><circle cx="1.6" cy="1.6" r="1.15" fill="none" stroke="#aaa" stroke-width=".55"/><path d="M2.4 2.4L3.6 3.6" stroke="#aaa" stroke-width=".6"/></svg><i style="left:461px;top:43.6px;font-size:3.5px;color:#444;">Search</i><b style="left:585.5px;top:43px;width:3.4px;height:3.6px;background:#888;"></b><b style="left:592.5px;top:43px;width:3.8px;height:3.8px;border:.6px solid #888;border-radius:50%"></b><div class="bd"></div></div><div class="cell" style="left:5px;top:347px"><div class="a menu"></div><div class="a tabs"></div><div class="a tb"></div><div class="a ptab"></div><svg class="a" style="left:2px;top:2px" width="14" height="14" viewBox="0 0 14 14"><circle cx="7" cy="7" r="6" fill="#1a1a1a" stroke="#9a9a9a" stroke-width=".7"/><path d="M4.2 4.3 L5.6 4 L5.6 8.8 Q6.6 9.6 7.6 8.8 L7.6 4.6 L9.1 4.2 L9.1 9.6 Q6.6 11 4.2 9.6Z" fill="#c8c8c8"/></svg><i style="left:21.5px;top:1.8px;font-size:3.8px;color:#c8c8c8;">File</i><i style="left:35.5px;top:1.8px;font-size:3.8px;color:#c8c8c8;">Edit</i><i style="left:51px;top:1.8px;font-size:3.8px;color:#c8c8c8;">Asset</i><i style="left:68px;top:1.8px;font-size:3.8px;color:#c8c8c8;">View</i><i style="left:84.5px;top:1.8px;font-size:3.8px;color:#c8c8c8;">Debug</i><i style="left:103.5px;top:1.8px;font-size:3.8px;color:#c8c8c8;">Window</i><i style="left:123px;top:1.8px;font-size:3.8px;color:#c8c8c8;">Tools</i><i style="left:140.5px;top:1.8px;font-size:3.8px;color:#c8c8c8;">Help</i><b style="left:564px;top:4px;width:4px;height:.6px;background:#aaa;"></b><div class="a" style="left:578px;top:2.2px;width:3.4px;height:3.2px;border:.6px solid #bbb"></div><i style="left:591.5px;top:1.3px;font-size:4.6px;color:#ddd;">✕</i><svg class="a" style="left:22.5px;top:10px" width="5" height="5" viewBox="0 0 5 5"><path d="M.5 2.5 L2.5 .6 L4.5 2.5 V4.5 H.5Z" fill="none" stroke="#666" stroke-width=".5"/></svg><svg class="a" style="left:33.5px;top:10.3px" width="5" height="4.5" viewBox="0 0 5 4.5"><path d="M2.5 .2 L4.8 4.3 H.2Z" fill="#d8a020"/></svg><i style="left:41px;top:10.8px;font-size:3.8px;color:#c0c0c0;">DefaultMap</i><b style="left:97px;top:8.5px;width:65px;height:8.5px;background:#1e1e1e;border-radius:1px 1px 0 0"></b><svg class="a" style="left:100px;top:9.5px" width="5" height="6" viewBox="0 0 5 6"><circle cx="2.5" cy="1.6" r="1.3" fill="#3a7ee0"/><path d="M.4 5.6 Q.4 3.2 2.5 3.2 Q4.6 3.2 4.6 5.6Z" fill="#3a7ee0"/></svg><i style="left:107px;top:10.8px;font-size:3.8px;color:#d0d0d0;">BP_Brute</i><i style="left:155.5px;top:10.3px;font-size:4.9px;">×</i><i style="left:552px;top:10.8px;font-size:3.6px;color:#8a8a8a;">Parent class: <u>Character</u></i><b style="left:5.5px;top:20px;width:5px;height:6px;background:#c8c8c8;border-radius:.5px"></b><b style="left:19.5px;top:20.5px;width:5px;height:5.5px;background:#a8a8a8;border-radius:.5px"></b><b style="left:35px;top:19.5px;width:6px;height:7px;background:#d8c020;border-radius:.5px"></b><b style="left:36.5px;top:21.5px;width:3px;height:3px;background:#58a030;"></b><i style="left:44px;top:22px;font-size:3.9px;">Compile</i><i style="left:62.5px;top:21.8px;font-size:4.2px;color:#888;">:</i><b style="left:71px;top:21.5px;width:3px;height:3.5px;background:#bbb;"></b><i style="left:76px;top:22px;font-size:3.9px;">Diff v</i><b style="left:100px;top:20.5px;width:4.5px;height:4.5px;border:.6px solid #ccc;border-radius:50%"></b><i style="left:106px;top:22px;font-size:3.9px;">Find</i><b style="left:121px;top:20.5px;width:5px;height:5px;background:#888;border-radius:1px"></b><i style="left:128.5px;top:22px;font-size:3.9px;">Hide Unrelated</i><i style="left:160px;top:21.8px;font-size:4.2px;color:#888;">:</i><b style="left:170.5px;top:20.5px;width:5px;height:5px;border:.7px solid #bbb;border-radius:50%"></b><i style="left:177.5px;top:22px;font-size:3.9px;">Class Settings</i><b style="left:211px;top:20.5px;width:5px;height:5px;background:#bbb;clip-path:polygon(0 100%,20% 100%,100% 20%,80% 0)"></b><i style="left:218.5px;top:22px;font-size:3.9px;">Class Defaults</i><b style="left:251.5px;top:20.5px;width:5px;height:5px;background:#aaa;clip-path:polygon(0 0,100% 60%,55% 65%,40% 100%)"></b><i style="left:259px;top:22px;font-size:3.9px;">Simulation</i><b style="left:288px;top:18.8px;width:35px;height:9.5px;background:#232323;border-radius:1px"></b><b style="left:292.3px;top:21px;width:.9px;height:5px;background:#ccc;"></b><b style="left:294.3px;top:21px;width:.9px;height:5px;background:#ccc;"></b><b style="left:300.5px;top:21px;width:2.6px;height:4.6px;background:#5a6a5a;clip-path:polygon(0 0,100% 50%,0 100%)"></b><b style="left:309.5px;top:21px;width:4.4px;height:4.6px;background:#e02828;"></b><b style="left:318.5px;top:21px;width:.6px;height:5px;background:#555;"></b><b style="left:329px;top:19.5px;width:54px;height:7px;background:#0c0c0c;border-radius:1px"></b><i style="left:331px;top:22px;font-size:3.7px;">No debug object selected v</i><b style="left:388px;top:21px;width:3.5px;height:4px;background:#777;"></b><div class="a sb"></div><b style="left:3px;top:320.5px;width:3px;height:3.5px;background:#999;"></b><i style="left:8px;top:320.7px;font-size:3.7px;color:#aaa;">Content Drawer</i><b style="left:44px;top:320.5px;width:3px;height:3.5px;background:#bbb;"></b><i style="left:50px;top:320.7px;font-size:3.7px;color:#aaa;">Output Log</i><b style="left:78px;top:320.7px;width:4px;height:3.2px;border:.5px solid #999"></b><i style="left:84px;top:320.7px;font-size:3.7px;color:#aaa;">Cmd v</i><b style="left:103px;top:319.5px;width:93px;height:5.5px;background:#0c0c0c;border-radius:1px"></b><i style="left:105.5px;top:320.6px;font-size:3.5px;color:#555;">Enter Console Command</i><b style="left:518px;top:320.5px;width:3px;height:3.6px;background:#aaa;"></b><i style="left:524px;top:320.7px;font-size:3.7px;color:#aaa;">All Saved</i><b style="left:553px;top:320.5px;width:2.5px;height:3.8px;background:#aaa;"></b><i style="left:558px;top:320.7px;font-size:3.7px;color:#aaa;">Revision Control v</i><div class="a task"></div><b style="left:3.3px;top:329.5px;width:1.9px;height:1.9px;background:#fff;"></b><b style="left:5.6px;top:329.5px;width:1.9px;height:1.9px;background:#fff;"></b><b style="left:3.3px;top:331.8px;width:1.9px;height:1.9px;background:#fff;"></b><b style="left:5.6px;top:331.8px;width:1.9px;height:1.9px;background:#fff;"></b><b style="left:15.5px;top:329.5px;width:4.5px;height:4px;background:#c040e0;border-radius:1px;transform:skewX(-10deg)"></b><b style="left:27px;top:329.8px;width:4.8px;height:3.6px;background:#e8c040;border-radius:.4px"></b><div class="a" style="left:38.6px;top:329.2px;width:4.4px;height:4.4px;border-radius:50%;background:conic-gradient(#e33 0 33%,#fc3 0 66%,#3a5 0)"></div><b style="left:48.5px;top:327.5px;width:8.5px;height:8.5px;background:#3a3d44;"></b><b style="left:50.5px;top:329.3px;width:4.5px;height:4.5px;border:.6px solid #aaa;border-radius:50%"></b><b style="left:61.5px;top:329.4px;width:4.2px;height:4.2px;border:.6px solid #888;border-radius:50%"></b><i style="left:535px;top:329.4px;font-size:4.1px;">^</i><b style="left:542.5px;top:329.2px;width:1.6px;height:4.2px;background:#ddd;border-radius:1px"></b><b style="left:549px;top:329.6px;width:3.8px;height:3px;border:.5px solid #ccc"></b><b style="left:555.5px;top:330px;width:2px;height:2.5px;background:#ccc;clip-path:polygon(0 30%,40% 30%,100% 0,100% 100%,40% 70%,0 70%)"></b><i style="left:561px;top:329.9px;font-size:3px;color:#ccc;">ENG</i><i style="left:575px;top:328px;font-size:3.5px;color:rgba(230,230,230,.55);">Udemy</i><b style="left:588.5px;top:329.4px;width:4.5px;height:3.6px;background:#e8e8e8;border-radius:.3px"></b><div class="a lp"></div><b style="left:1px;top:31px;width:50px;height:9px;background:#1a1a1a;border-radius:1px 1px 0 0"></b><b style="left:3px;top:33px;width:3px;height:3.5px;border:.5px solid #aaa"></b><i style="left:8.5px;top:33.6px;font-size:3.8px;color:#c0c0c0;">Components</i><i style="left:44.5px;top:32.9px;font-size:4.6px;color:#aaa;">×</i><b style="left:7px;top:41px;width:17px;height:6px;background:#2a2a2a;border-radius:1px"></b><b style="left:9px;top:42.5px;width:1px;height:3px;background:#50c050;"></b><b style="left:8px;top:43.5px;width:3px;height:1px;background:#50c050;"></b><i style="left:12.5px;top:42.4px;font-size:3.8px;color:#ccc;">Add</i><div class="srch" style="left:27px;top:41px;width:61px;height:6px"></div><svg class="a" style="left:29px;top:42px" width="4" height="4" viewBox="0 0 4 4"><circle cx="1.6" cy="1.6" r="1.15" fill="none" stroke="#aaa" stroke-width=".55"/><path d="M2.4 2.4L3.6 3.6" stroke="#aaa" stroke-width=".6"/></svg><i style="left:35px;top:42.6px;font-size:3.5px;color:#444;">Search</i><b style="left:5.9px;top:53.6px;width:2.6px;height:3.6px;background:#999;border-radius:.6px"></b><i style="left:10.4px;top:53.2px;font-size:3.8px;color:#b8b8b8;letter-spacing:-.05px">BP_Brute (Self)</i><b style="left:14.1px;top:61.1px;width:2.6px;height:3.6px;background:#999;border-radius:.6px"></b><i style="left:18.6px;top:60.7px;font-size:3.8px;color:#b8b8b8;letter-spacing:-.05px">Capsule Component (CollisionCylinder)</i><b style="left:17.3px;top:68.7px;width:2.6px;height:3.6px;background:#999;border-radius:.6px"></b><i style="left:21.8px;top:68.3px;font-size:3.8px;color:#b8b8b8;letter-spacing:-.05px">Arrow Component (Arrow) <u>Edit in C++</u></i><b style="left:17.3px;top:76.2px;width:2.6px;height:3.6px;background:#999;border-radius:.6px"></b><i style="left:21.8px;top:75.8px;font-size:3.8px;color:#b8b8b8;letter-spacing:-.05px">CameraBoom</i><b style="left:20.3px;top:83.8px;width:2.6px;height:3.6px;background:#999;border-radius:.6px"></b><i style="left:24.8px;top:83.4px;font-size:3.8px;color:#b8b8b8;letter-spacing:-.05px">FollowCamera</i><b style="left:17.3px;top:91.3px;width:2.6px;height:3.6px;background:#999;border-radius:.6px"></b><i style="left:21.8px;top:90.9px;font-size:3.8px;color:#b8b8b8;letter-spacing:-.05px">Mesh (CharacterMesh0)  <u>Edit in C++</u></i><b style="left:14.1px;top:102.2px;width:2.6px;height:3.6px;background:#999;border-radius:.6px"></b><i style="left:18.6px;top:101.8px;font-size:3.8px;color:#b8b8b8;letter-spacing:-.05px">Character Movement (CharMoveComp)</i><b style="left:8px;top:97.3px;width:82px;height:.5px;background:#333;"></b><b style="left:1px;top:118px;width:50px;height:8.5px;background:#1a1a1a;border-radius:1px 1px 0 0"></b><b style="left:3px;top:120px;width:3px;height:3.5px;background:#888;"></b><i style="left:9px;top:120.4px;font-size:3.8px;color:#c0c0c0;">My Blueprint</i><i style="left:44.5px;top:119.6px;font-size:4.6px;color:#aaa;">×</i><b style="left:1px;top:126.5px;width:90px;height:.5px;background:#0e0e0e;"></b><b style="left:6px;top:128px;width:18px;height:5.5px;background:#262626;border-radius:1px"></b><b style="left:9px;top:129.3px;width:1px;height:3px;background:#50c050;"></b><b style="left:8px;top:130.3px;width:3px;height:1px;background:#50c050;"></b><i style="left:12.5px;top:129.4px;font-size:3.8px;color:#ccc;">Add</i><div class="srch" style="left:26px;top:128px;width:54px;height:5.5px"></div><svg class="a" style="left:28px;top:128.8px" width="4" height="4" viewBox="0 0 4 4"><circle cx="1.6" cy="1.6" r="1.15" fill="none" stroke="#aaa" stroke-width=".55"/><path d="M2.4 2.4L3.6 3.6" stroke="#aaa" stroke-width=".6"/></svg><b style="left:83.6px;top:128.6px;width:3.6px;height:3.6px;border:.6px solid #aaa;border-radius:50%"></b><div class="hdr" style="top:137.29999999999998px"></div><i style="left:7px;top:139.2px;font-size:3.2px;color:#c8c8c8;font-weight:bold;">GRAPHS</i><i style="left:2.8px;top:139.2px;font-size:3.2px;color:#888;">v</i><b style="left:83.6px;top:138.7px;width:3.8px;height:3.8px;border:.6px solid #999;border-radius:50%"></b><b style="left:7px;top:147.8px;width:3px;height:2.6px;background:#aaa;"></b><i style="left:12.5px;top:147.9px;font-size:3.6px;">EventGraph</i><b style="left:10.5px;top:155.8px;width:2.8px;height:2.8px;border:.6px solid #ccc;border-radius:50%"></b><i style="left:15.5px;top:156px;font-size:3.6px;color:#b8b8b8;">Event BeginPlay</i><b style="left:10.5px;top:163.5px;width:2.8px;height:2.8px;border:.6px solid #ccc;border-radius:50%"></b><i style="left:15.5px;top:163.7px;font-size:3.6px;color:#b8b8b8;">EnhancedInputAction IA_Move</i><div class="hdr" style="top:170.99999999999997px"></div><i style="left:7px;top:172.9px;font-size:3.2px;color:#c8c8c8;font-weight:bold;">FUNCTIONS <span style='color:#666;font-weight:normal'>(14 OVERRIDABLE)</span></i><i style="left:2.8px;top:172.9px;font-size:3.2px;color:#888;">v</i><b style="left:57px;top:171.7px;width:22px;height:5.2px;background:#0e0e0e;border-radius:1px"></b><i style="left:59px;top:173.1px;font-size:3.2px;">Override v</i><b style="left:83.6px;top:172.4px;width:3.8px;height:3.8px;border:.6px solid #999;border-radius:50%"></b><i style="left:9px;top:182px;font-size:3.7px;color:#aaa;">ƒ</i><i style="left:13px;top:182.2px;font-size:3.6px;">Construction Script</i><div class="hdr" style="top:188.6px"></div><i style="left:7px;top:190.5px;font-size:3.2px;color:#c8c8c8;font-weight:bold;">MACROS</i><i style="left:2.8px;top:190.5px;font-size:3.2px;color:#888;">v</i><b style="left:83.6px;top:190px;width:3.8px;height:3.8px;border:.6px solid #999;border-radius:50%"></b><div class="hdr" style="top:197.9px"></div><i style="left:7px;top:199.8px;font-size:3.2px;color:#c8c8c8;font-weight:bold;">VARIABLES</i><i style="left:2.8px;top:199.8px;font-size:3.2px;color:#888;">v</i><b style="left:83.6px;top:199.3px;width:3.8px;height:3.8px;border:.6px solid #999;border-radius:50%"></b><i style="left:3px;top:207.4px;font-size:3.2px;color:#888;">v</i><i style="left:6px;top:207.5px;font-size:3.5px;color:#c8c8c8;font-weight:bold;">Components</i><i style="left:10px;top:213.5px;font-size:3.5px;color:#a8a8a8;">FollowCamera</i><b style="left:58px;top:214.2px;width:3.4px;height:1.8px;background:#30a0e0;border-radius:1px"></b><i style="left:10px;top:219.7px;font-size:3.5px;color:#a8a8a8;">CameraBoom</i><b style="left:58px;top:220.4px;width:3.4px;height:1.8px;background:#30a0e0;border-radius:1px"></b><div class="hdr" style="top:225.49999999999997px"></div><i style="left:7px;top:227.4px;font-size:3.2px;color:#c8c8c8;font-weight:bold;">EVENT DISPATCHERS</i><i style="left:2.8px;top:227.4px;font-size:3.2px;color:#888;">v</i><b style="left:83.6px;top:226.9px;width:3.8px;height:3.8px;border:.6px solid #999;border-radius:50%"></b><b style="left:93.5px;top:33.2px;width:3.5px;height:3px;background:#999;"></b><i style="left:99px;top:33.6px;font-size:3.8px;color:#a8a8a8;">Viewport</i><i style="left:145px;top:33.2px;font-size:3.9px;color:#aaa;">ƒ</i><i style="left:150.5px;top:33.6px;font-size:3.8px;color:#a8a8a8;">Construction Scr...</i><b style="left:191.5px;top:31px;width:49px;height:9px;background:#1e1e1e;border-radius:1px 1px 0 0"></b><b style="left:194px;top:33.2px;width:3.4px;height:3.4px;border:.5px dashed #bbb"></b><i style="left:199.5px;top:33.6px;font-size:3.8px;color:#d0d0d0;">EventGraph</i><i style="left:236px;top:32.9px;font-size:4.6px;color:#aaa;">×</i><b style="left:450px;top:31px;width:50px;height:9px;background:#1c1c1c;border-radius:1px 1px 0 0"></b><b style="left:452.5px;top:33px;width:3px;height:3.6px;background:#ccc;clip-path:polygon(0 100%,25% 100%,100% 25%,75% 0)"></b><i style="left:458.5px;top:33.6px;font-size:3.8px;color:#c8c8c8;">Details</i><i style="left:492.5px;top:32.9px;font-size:4.6px;color:#aaa;">×</i><div class="a graph"></div><div class="a" style="left:92px;top:40px;width:357px;height:278px;overflow:hidden"><div class="a" style="left:-92px;top:-40px;width:600px;height:337px"><b style="left:142px;top:40px;width:307px;height:32px;background:#2c2c2c;"></b><b style="left:361px;top:40px;width:71px;height:22px;background:#1b1d1c;border-radius:2px"></b><i style="left:377px;top:40.7px;font-size:9.5px;color:#b8b8b8;font-weight:bold;line-height:10px;transform:scaleX(.85);transform-origin:0 0">Player<br>Subsystem</i><b style="left:94.5px;top:42.8px;width:351.5px;height:270.5px;border:2px solid #dca42a;z-index:3"></b></div></div><div class="a gbar"></div><b style="left:95px;top:43px;width:2.6px;height:3.6px;border:.5px solid #777"></b><i style="left:99px;top:43.4px;font-size:3.2px;color:#888;">v</i><svg class="a" style="left:109.5px;top:43.5px" width="5" height="4" viewBox="0 0 5 4"><path d="M0 2L2.4 0V1.2H5V2.8H2.4V4Z" fill="#d8d8d8"/></svg><svg class="a" style="left:121.5px;top:43.5px" width="5" height="4" viewBox="0 0 5 4"><path d="M5 2L2.6 0V1.2H0V2.8H2.6V4Z" fill="#d8d8d8"/></svg><b style="left:136px;top:42.5px;width:2.6px;height:2.6px;background:#ccc;border-radius:50%"></b><b style="left:140px;top:43.2px;width:2px;height:1.8px;background:#ccc;"></b><b style="left:136px;top:46.5px;width:2px;height:1.8px;background:#ccc;"></b><b style="left:140px;top:46.5px;width:2px;height:1.8px;background:#ccc;"></b><i style="left:147px;top:42.5px;font-size:6.3px;color:#8e8e8e;">BP_Brute <span style='color:#ccc'>&gt;</span> EventGraph</i><i style="left:425px;top:42.9px;font-size:5.1px;color:#3e3e3e;">Zoom 1:1</i><div class="wm">BLUEPRINT</div><div class="a dp"></div><div class="srch" style="left:453px;top:42.5px;width:128px;height:5.5px"></div><svg class="a" style="left:455px;top:43.2px" width="4" height="4" viewBox="0 0 4 4"><circle cx="1.6" cy="1.6" r="1.15" fill="none" stroke="#aaa" stroke-width=".55"/><path d="M2.4 2.4L3.6 3.6" stroke="#aaa" stroke-width=".6"/></svg><i style="left:461px;top:43.6px;font-size:3.5px;color:#444;">Search</i><b style="left:585.5px;top:43px;width:3.4px;height:3.6px;background:#888;"></b><b style="left:592.5px;top:43px;width:3.8px;height:3.8px;border:.6px solid #888;border-radius:50%"></b><div class="a" style="left:0;top:0;width:600px;height:337px;z-index:4"><b style="left:100px;top:52px;width:401px;height:10px;background:#1c1c1c;"></b><i style="left:241.5px;top:54.6px;font-size:3.7px;color:#b8b8b8;">BruteRPG Preview [NetMode: Standalone 0]  (64-bit/PC D3D SM5)</i><b style="left:103px;top:55.5px;width:3.5px;height:3.5px;background:#888;border-radius:.5px"></b><b style="left:473.5px;top:57px;width:3px;height:.5px;background:#ccc;"></b><b style="left:486px;top:55.3px;width:2.8px;height:2.8px;border:.5px solid #ccc"></b><i style="left:494.5px;top:54.4px;font-size:3.9px;color:#ddd;">✕</i><div class="a" style="left:100px;top:62px;width:401px;height:226px;overflow:hidden"><svg class="a" width="400" height="226" viewBox="0 0 400 226" style="left:0;top:0;overflow:hidden"><defs><filter id="cbc5" x="-50%" y="-50%" width="200%" height="200%"><feGaussianBlur stdDeviation="2.2"/></filter>
<linearGradient id="skc5" x1="0" y1="0" x2="0" y2="1"><stop offset="0" stop-color="#4a78b2"/><stop offset=".6" stop-color="#4a78b2" stop-opacity=".0"/></linearGradient>
<linearGradient id="sbc5" x1="0" y1="0" x2="0" y2="1"><stop offset="0" stop-color="#6c9ace"/><stop offset=".55" stop-color="#86acd6"/><stop offset="1" stop-color="#b4c8e0"/></linearGradient>
<linearGradient id="sec5" x1="0" y1="0" x2="0" y2="1"><stop offset="0" stop-color="#90acd0"/><stop offset=".35" stop-color="#2f5fa0"/><stop offset="1" stop-color="#2f5fa0"/></linearGradient>
<filter id="shc5"><feGaussianBlur stdDeviation=".8"/></filter></defs><rect width="400" height="119.5" fill="url(#sbc5)"/><rect width="400" height="119.5" fill="url(#skc5)"/><g filter="url(#cbc5)" fill="#eaf0f6"><ellipse cx="13" cy="6" rx="13" ry="3" opacity=".6"/><ellipse cx="13" cy="4" rx="4" ry="3" opacity=".6"/><ellipse cx="2" cy="2" rx="6" ry="3" opacity=".6"/><ellipse cx="36" cy="51" rx="24" ry="6" opacity=".4"/><ellipse cx="51" cy="48" rx="11" ry="7" opacity=".5"/><ellipse cx="20" cy="49" rx="11" ry="7" opacity=".5"/><ellipse cx="37" cy="47" rx="10" ry="7" opacity=".5"/><ellipse cx="15" cy="52" rx="8" ry="6" opacity=".5"/><ellipse cx="39" cy="52" rx="8" ry="6" opacity=".5"/><ellipse cx="84" cy="54" rx="15" ry="5" opacity=".7"/><ellipse cx="90" cy="54" rx="3" ry="2" opacity=".7"/><ellipse cx="97" cy="50" rx="6" ry="3" opacity=".8"/><ellipse cx="152" cy="56" rx="42" ry="14" opacity=".6"/><ellipse cx="150" cy="50" rx="16" ry="10" opacity=".8"/><ellipse cx="167" cy="63" rx="20" ry="16" opacity=".7"/><ellipse cx="133" cy="64" rx="21" ry="16" opacity=".7"/><ellipse cx="169" cy="46" rx="19" ry="13" opacity=".7"/><ellipse cx="125" cy="61" rx="22" ry="10" opacity=".8"/><ellipse cx="145" cy="48" rx="12" ry="9" opacity=".8"/><ellipse cx="123" cy="56" rx="8" ry="6" opacity=".7"/><ellipse cx="183" cy="64" rx="15" ry="12" opacity=".7"/><ellipse cx="148" cy="44" rx="10" ry="6" opacity=".8"/><ellipse cx="132" cy="42" rx="2" ry="1" opacity=".8"/><ellipse cx="150" cy="38" rx="2" ry="2" opacity=".8"/><ellipse cx="180" cy="48" rx="9" ry="4" opacity=".8"/><ellipse cx="195" cy="47" rx="3" ry="2" opacity=".8"/><ellipse cx="182" cy="46" rx="4" ry="2" opacity=".9"/><ellipse cx="195" cy="68" rx="12" ry="5" opacity=".7"/><ellipse cx="188" cy="64" rx="5" ry="3" opacity=".7"/><ellipse cx="206" cy="65" rx="4" ry="2" opacity=".8"/><ellipse cx="247" cy="34" rx="10" ry="6" opacity=".7"/><ellipse cx="256" cy="27" rx="4" ry="3" opacity=".7"/><ellipse cx="249" cy="31" rx="4" ry="2" opacity=".8"/><ellipse cx="263" cy="53" rx="18" ry="6" opacity=".8"/><ellipse cx="264" cy="45" rx="4" ry="3" opacity=".9"/><ellipse cx="255" cy="50" rx="7" ry="4" opacity=".8"/><ellipse cx="250" cy="52" rx="7" ry="4" opacity=".8"/><ellipse cx="272" cy="46" rx="7" ry="5" opacity=".8"/><ellipse cx="348" cy="19" rx="40" ry="13" opacity=".8"/><ellipse cx="334" cy="28" rx="11" ry="6" opacity=".8"/><ellipse cx="363" cy="11" rx="12" ry="7" opacity=".9"/><ellipse cx="350" cy="26" rx="10" ry="6" opacity=".9"/><ellipse cx="378" cy="21" rx="11" ry="5" opacity=".8"/><ellipse cx="331" cy="25" rx="19" ry="10" opacity=".8"/><ellipse cx="372" cy="22" rx="18" ry="11" opacity=".7"/><ellipse cx="339" cy="28" rx="11" ry="6" opacity=".8"/><ellipse cx="342" cy="17" rx="20" ry="10" opacity=".7"/><ellipse cx="332" cy="42" rx="24" ry="9" opacity=".8"/><ellipse cx="345" cy="50" rx="12" ry="7" opacity=".9"/><ellipse cx="351" cy="38" rx="10" ry="8" opacity=".9"/><ellipse cx="326" cy="39" rx="7" ry="4" opacity=".7"/><ellipse cx="336" cy="42" rx="11" ry="5" opacity=".9"/><ellipse cx="334" cy="48" rx="12" ry="9" opacity=".8"/><ellipse cx="310" cy="46" rx="6" ry="3" opacity=".9"/><ellipse cx="326" cy="44" rx="12" ry="8" opacity=".8"/><ellipse cx="321" cy="47" rx="8" ry="6" opacity=".8"/><ellipse cx="360" cy="51" rx="30" ry="11" opacity=".7"/><ellipse cx="350" cy="55" rx="14" ry="7" opacity=".8"/><ellipse cx="384" cy="56" rx="14" ry="6" opacity=".8"/><ellipse cx="388" cy="43" rx="8" ry="5" opacity=".8"/><ellipse cx="356" cy="54" rx="14" ry="6" opacity=".7"/><ellipse cx="346" cy="45" rx="6" ry="5" opacity=".9"/><ellipse cx="336" cy="51" rx="9" ry="5" opacity=".8"/><ellipse cx="376" cy="56" rx="9" ry="5" opacity=".8"/><ellipse cx="338" cy="52" rx="13" ry="8" opacity=".7"/><ellipse cx="387" cy="71" rx="13" ry="7" opacity=".7"/><ellipse cx="372" cy="73" rx="5" ry="4" opacity=".7"/><ellipse cx="395" cy="72" rx="4" ry="3" opacity=".7"/><ellipse cx="385" cy="70" rx="6" ry="4" opacity=".7"/><ellipse cx="87" cy="78" rx="40" ry="8" opacity=".6"/><ellipse cx="83" cy="77" rx="9" ry="5" opacity=".6"/><ellipse cx="116" cy="80" rx="13" ry="10" opacity=".7"/><ellipse cx="62" cy="78" rx="9" ry="7" opacity=".7"/><ellipse cx="117" cy="78" rx="17" ry="12" opacity=".7"/><ellipse cx="50" cy="76" rx="8" ry="4" opacity=".7"/><ellipse cx="52" cy="73" rx="9" ry="7" opacity=".6"/><ellipse cx="43" cy="79" rx="9" ry="7" opacity=".7"/><ellipse cx="113" cy="80" rx="16" ry="11" opacity=".6"/><ellipse cx="250" cy="78" rx="29" ry="8" opacity=".6"/><ellipse cx="272" cy="75" rx="13" ry="6" opacity=".8"/><ellipse cx="274" cy="70" rx="9" ry="6" opacity=".8"/><ellipse cx="243" cy="74" rx="8" ry="5" opacity=".8"/><ellipse cx="244" cy="73" rx="10" ry="5" opacity=".7"/><ellipse cx="234" cy="75" rx="15" ry="9" opacity=".8"/><ellipse cx="231" cy="80" rx="13" ry="9" opacity=".7"/><ellipse cx="256" cy="77" rx="14" ry="7" opacity=".6"/><ellipse cx="264" cy="80" rx="11" ry="6" opacity=".7"/><ellipse cx="164" cy="78" rx="34" ry="11" opacity=".4"/><ellipse cx="137" cy="71" rx="9" ry="6" opacity=".4"/><ellipse cx="147" cy="78" rx="17" ry="10" opacity=".5"/><ellipse cx="151" cy="84" rx="13" ry="7" opacity=".4"/><ellipse cx="134" cy="75" rx="11" ry="6" opacity=".4"/><ellipse cx="146" cy="80" rx="8" ry="6" opacity=".4"/><ellipse cx="170" cy="77" rx="16" ry="12" opacity=".4"/><ellipse cx="156" cy="79" rx="16" ry="9" opacity=".5"/><ellipse cx="194" cy="74" rx="9" ry="5" opacity=".5"/><ellipse cx="67" cy="93" rx="59" ry="8" opacity=".4"/><ellipse cx="94" cy="96" rx="28" ry="15" opacity=".4"/><ellipse cx="40" cy="86" rx="25" ry="19" opacity=".5"/><ellipse cx="47" cy="97" rx="17" ry="10" opacity=".5"/><ellipse cx="21" cy="85" rx="28" ry="15" opacity=".5"/><ellipse cx="83" cy="92" rx="11" ry="6" opacity=".5"/><ellipse cx="65" cy="90" rx="23" ry="18" opacity=".5"/><ellipse cx="79" cy="85" rx="17" ry="11" opacity=".4"/><ellipse cx="110" cy="95" rx="13" ry="10" opacity=".5"/><ellipse cx="224" cy="95" rx="67" ry="8" opacity=".4"/><ellipse cx="252" cy="95" rx="19" ry="13" opacity=".5"/><ellipse cx="263" cy="89" rx="30" ry="23" opacity=".5"/><ellipse cx="222" cy="90" rx="24" ry="14" opacity=".5"/><ellipse cx="247" cy="93" rx="17" ry="11" opacity=".5"/><ellipse cx="176" cy="97" rx="28" ry="14" opacity=".5"/><ellipse cx="178" cy="93" rx="29" ry="19" opacity=".4"/><ellipse cx="236" cy="92" rx="20" ry="10" opacity=".4"/><ellipse cx="252" cy="95" rx="25" ry="18" opacity=".4"/><ellipse cx="342" cy="92" rx="46" ry="8" opacity=".4"/><ellipse cx="328" cy="88" rx="22" ry="10" opacity=".5"/><ellipse cx="320" cy="92" rx="14" ry="8" opacity=".5"/><ellipse cx="353" cy="96" rx="14" ry="11" opacity=".4"/><ellipse cx="322" cy="84" rx="10" ry="8" opacity=".5"/><ellipse cx="321" cy="85" rx="15" ry="11" opacity=".5"/><ellipse cx="364" cy="93" rx="11" ry="6" opacity=".4"/><ellipse cx="351" cy="90" rx="12" ry="6" opacity=".5"/><ellipse cx="301" cy="93" rx="22" ry="18" opacity=".5"/></g><rect y="105.5" width="400" height="14.5" fill="url(#sec5)"/><clipPath id="fc1195197"><rect x="-60" y="119.5" width="520" height="166.5"/></clipPath><g clip-path="url(#fc1195197)"><rect x="-60" y="119.5" width="520" height="166.5" fill="#c9c5c7"/><path d="M197 119.5L-3000 256.5L-3000 258.9L197 119.5ZM197 119.5L-3000 261.3L-3000 263.9L197 119.5ZM197 119.5L-3000 266.5L-3000 269.2L197 119.5ZM197 119.5L-3000 272.1L-3000 275.0L197 119.5ZM197 119.5L-3000 278.1L-3000 281.2L197 119.5ZM197 119.5L-3000 284.6L-3000 288.0L197 119.5ZM197 119.5L-3000 291.6L-3000 295.4L197 119.5ZM197 119.5L-3000 299.3L-3000 303.4L197 119.5ZM197 119.5L-3000 307.7L-3000 312.2L197 119.5ZM197 119.5L-3000 316.9L-3000 321.9L197 119.5ZM197 119.5L-3000 327.1L-3000 332.6L197 119.5ZM197 119.5L-3000 338.4L-3000 344.5L197 119.5ZM197 119.5L-3000 350.9L-3000 357.8L197 119.5ZM197 119.5L-3000 365.0L-3000 372.8L197 119.5ZM197 119.5L-3000 381.0L-3000 389.8L197 119.5ZM197 119.5L-3000 399.1L-3000 409.2L197 119.5ZM197 119.5L-3000 420.0L-3000 431.6L197 119.5ZM197 119.5L-3000 444.2L-3000 457.9L197 119.5ZM197 119.5L-3000 472.7L-3000 488.9L197 119.5ZM197 119.5L-3000 506.6L-3000 526.2L197 119.5ZM197 119.5L-3000 547.8L-3000 571.9L197 119.5ZM197 119.5L-3000 598.8L-2981 626.0L197 119.5ZM197 119.5L-2780 626.0L-2579 626.0L197 119.5ZM197 119.5L-2378 626.0L-2177 626.0L197 119.5ZM197 119.5L-1976 626.0L-1775 626.0L197 119.5ZM197 119.5L-1574 626.0L-1373 626.0L197 119.5ZM197 119.5L-1172 626.0L-971 626.0L197 119.5ZM197 119.5L-770 626.0L-569 626.0L197 119.5ZM197 119.5L-368 626.0L-167 626.0L197 119.5ZM197 119.5L34 626.0L235 626.0L197 119.5ZM197 119.5L436 626.0L637 626.0L197 119.5ZM197 119.5L838 626.0L1039 626.0L197 119.5ZM197 119.5L1240 626.0L1441 626.0L197 119.5ZM197 119.5L1642 626.0L1843 626.0L197 119.5ZM197 119.5L2044 626.0L2245 626.0L197 119.5ZM197 119.5L2446 626.0L2647 626.0L197 119.5ZM197 119.5L2848 626.0L3000 617.3L197 119.5ZM197 119.5L3000 584.5L3000 555.8L197 119.5ZM197 119.5L3000 530.4L3000 507.8L197 119.5ZM197 119.5L3000 487.6L3000 469.4L197 119.5ZM197 119.5L3000 452.8L3000 437.8L197 119.5ZM197 119.5L3000 424.1L3000 411.5L197 119.5ZM197 119.5L3000 399.9L3000 389.2L197 119.5ZM197 119.5L3000 379.3L3000 370.1L197 119.5ZM197 119.5L3000 361.5L3000 353.5L197 119.5ZM197 119.5L3000 346.0L3000 338.9L197 119.5ZM197 119.5L3000 332.3L3000 326.1L197 119.5ZM197 119.5L3000 320.2L3000 314.7L197 119.5ZM197 119.5L3000 309.4L3000 304.5L197 119.5ZM197 119.5L3000 299.7L3000 295.3L197 119.5ZM197 119.5L3000 291.0L3000 286.9L197 119.5ZM197 119.5L3000 283.0L3000 279.3L197 119.5ZM197 119.5L3000 275.8L3000 272.4L197 119.5ZM197 119.5L3000 269.2L3000 266.1L197 119.5ZM197 119.5L3000 263.1L3000 260.2L197 119.5ZM197 119.5L3000 257.5L3000 254.8L197 119.5ZM197 119.5L3000 252.3L3000 249.8L197 119.5ZM197 119.5L3000 247.5L3000 245.2L197 119.5ZM197 119.5L3000 243.0L3000 240.9L197 119.5ZM197 119.5L3000 238.8L3000 236.9L197 119.5ZM-3000 206.2L3000 206.2L3000 183.5L-3000 183.5ZM-3000 170.2L3000 170.2L3000 161.5L-3000 161.5ZM-3000 155.3L3000 155.3L3000 150.8L-3000 150.8ZM-3000 147.2L3000 147.2L3000 144.4L-3000 144.4ZM-3000 142.1L3000 142.1L3000 140.2L-3000 140.2ZM-3000 138.6L3000 138.6L3000 137.2L-3000 137.2ZM-3000 136.0L3000 136.0L3000 135.0L-3000 135.0ZM-3000 134.0L3000 134.0L3000 133.2L-3000 133.2ZM-3000 132.5L3000 132.5L3000 131.8L-3000 131.8ZM-3000 131.2L3000 131.2L3000 130.7L-3000 130.7ZM-3000 130.2L3000 130.2L3000 129.8L-3000 129.8ZM-3000 129.3L3000 129.3L3000 129.0L-3000 129.0ZM-3000 128.6L3000 128.6L3000 128.3L-3000 128.3ZM-3000 128.0L3000 128.0L3000 127.7L-3000 127.7ZM-3000 127.4L3000 127.4L3000 127.2L-3000 127.2ZM-3000 126.9L3000 126.9L3000 126.7L-3000 126.7ZM-3000 126.5L3000 126.5L3000 126.3L-3000 126.3ZM-3000 126.1L3000 126.1L3000 126.0L-3000 126.0ZM-3000 125.8L3000 125.8L3000 125.6L-3000 125.6ZM-3000 125.5L3000 125.5L3000 125.3L-3000 125.3ZM-3000 125.2L3000 125.2L3000 125.1L-3000 125.1ZM-3000 125.0L3000 125.0L3000 124.8L-3000 124.8ZM-3000 124.7L3000 124.7L3000 124.6L-3000 124.6ZM-3000 124.5L3000 124.5L3000 124.4L-3000 124.4ZM-3000 124.3L3000 124.3L3000 124.2L-3000 124.2ZM-3000 124.1L3000 124.1L3000 124.0L-3000 124.0ZM-3000 124.0L3000 124.0L3000 123.9L-3000 123.9ZM-3000 123.8L3000 123.8L3000 123.7L-3000 123.7ZM-3000 123.7L3000 123.7L3000 123.6L-3000 123.6ZM-3000 123.5L3000 123.5L3000 123.5L-3000 123.5Z" fill="#b9b5b8" fill-rule="evenodd"/><path d="M197 119.5L-3000 256.5M197 119.5L-3000 261.3M197 119.5L-3000 266.5M197 119.5L-3000 272.1M197 119.5L-3000 278.1M197 119.5L-3000 284.6M197 119.5L-3000 291.6M197 119.5L-3000 299.3M197 119.5L-3000 307.7M197 119.5L-3000 316.9M197 119.5L-3000 327.1M197 119.5L-3000 338.4M197 119.5L-3000 350.9M197 119.5L-3000 365.0M197 119.5L-3000 381.0M197 119.5L-3000 399.1M197 119.5L-3000 420.0M197 119.5L-3000 444.2M197 119.5L-3000 472.7M197 119.5L-3000 506.6M197 119.5L-3000 547.8M197 119.5L-3000 598.8M197 119.5L-2780 626.0M197 119.5L-2378 626.0M197 119.5L-1976 626.0M197 119.5L-1574 626.0M197 119.5L-1172 626.0M197 119.5L-770 626.0M197 119.5L-368 626.0M197 119.5L34 626.0M197 119.5L436 626.0M197 119.5L838 626.0M197 119.5L1240 626.0M197 119.5L1642 626.0M197 119.5L2044 626.0M197 119.5L2446 626.0M197 119.5L2848 626.0M197 119.5L3000 584.5M197 119.5L3000 530.4M197 119.5L3000 487.6M197 119.5L3000 452.8M197 119.5L3000 424.1M197 119.5L3000 399.9M197 119.5L3000 379.3M197 119.5L3000 361.5M197 119.5L3000 346.0M197 119.5L3000 332.3M197 119.5L3000 320.2M197 119.5L3000 309.4M197 119.5L3000 299.7M197 119.5L3000 291.0M197 119.5L3000 283.0M197 119.5L3000 275.8M197 119.5L3000 269.2M197 119.5L3000 263.1M197 119.5L3000 257.5M197 119.5L3000 252.3M197 119.5L3000 247.5M197 119.5L3000 243.0M197 119.5L3000 238.8M-3000 206.2L3000 206.2M-3000 170.2L3000 170.2M-3000 155.3L3000 155.3M-3000 147.2L3000 147.2M-3000 142.1L3000 142.1M-3000 138.6L3000 138.6M-3000 136.0L3000 136.0M-3000 134.0L3000 134.0M-3000 132.5L3000 132.5M-3000 131.2L3000 131.2M-3000 130.2L3000 130.2M-3000 129.3L3000 129.3M-3000 128.6L3000 128.6M-3000 128.0L3000 128.0M-3000 127.4L3000 127.4M-3000 126.9L3000 126.9M-3000 126.5L3000 126.5M-3000 126.1L3000 126.1M-3000 125.8L3000 125.8M-3000 125.5L3000 125.5M-3000 125.2L3000 125.2M-3000 125.0L3000 125.0M-3000 124.7L3000 124.7M-3000 124.5L3000 124.5M-3000 124.3L3000 124.3M-3000 124.1L3000 124.1M-3000 124.0L3000 124.0M-3000 123.8L3000 123.8M-3000 123.7L3000 123.7M-3000 123.5L3000 123.5" stroke="#55535a" stroke-width="0.45" fill="none" opacity="0.8"/><linearGradient id="hzfc1195197" x1="0" y1="0" x2="0" y2="1"><stop offset="0" stop-color="#cdcacd"/><stop offset=".3" stop-color="#cdcacd" stop-opacity=".85"/><stop offset=".65" stop-color="#cdcacd" stop-opacity=".45"/><stop offset="1" stop-color="#cdcacd" stop-opacity="0"/></linearGradient><rect x="-60" y="119.5" width="520" height="50" fill="url(#hzfc1195197)"/></g><path d="M109 205 Q150 196 190 203 L203 212 Q160 216 109 210Z" fill="#6c6c86" opacity=".85" filter="url(#shc5)"/><g transform="translate(149 54) scale(1.0)">
<path d="M-21 40 L-30 44 L-40 56 L-48 70 L-52 77 L-44 82 L-36 70 L-28 58 L-20 52Z" fill="#8c5e46"/>
<path d="M-47 54 L-30 52 L-26 72 L-49 76Z" fill="#6e6238" opacity=".95"/>
<path d="M-50 72 L-38 70 L-34 82 L-44 98 L-54 100 L-60 92 L-58 84Z" fill="#5a5030"/>
<path d="M-52 73 L-37 70 L-36 74 L-52 77Z" fill="#c0b898" opacity=".8"/>
<path d="M-63 91 L-55 90 L-52 101 L-60 103 L-64 99Z" fill="#3a2c22"/>
<path d="M20 44 L32 50 L40 62 L46 72 L40 76 L32 66 L22 58Z" fill="#8c5e46"/>
<path d="M34 70 L48 68 L60 80 L66 92 L60 96 L48 88 L38 82Z" fill="#5e5432"/>
<path d="M36 70 L48 68 L50 72 L38 74Z" fill="#c0b898" opacity=".8"/>
<path d="M61 90 L68 92 L68 101 L62 102 L59 96Z" fill="#3a2c22"/>
<path d="M-22 36 L11 36 L22 47 L23 70 L21 89 L-21 89 L-23 70 L-23 46Z" fill="#2e3550"/>
<path d="M-20 37 L10 37 L14 46 L4 52 L-8 52 L-20 47Z" fill="#9a6a50"/>
<path d="M-19 50 L-13 45 L20 84 L14 89Z" fill="#8a7a48"/>
<path d="M12 46 L17 50 L-15 86 L-20 82Z" fill="#7a6c40"/>
<circle cx="-2" cy="64" r="3.6" fill="#4a6a9a" stroke="#1a2030" stroke-width="1"/>
<path d="M9 40 L20 34 L28 31 L34 38 L46 45 L60 54 L44 55 L28 54 L16 56 L12 50Z" fill="#2e3448" stroke="#9aa0b0" stroke-width=".6" stroke-dasharray=".8 .6"/>
<path d="M-23 85 L22 85 L24 102 L-23 102Z" fill="#262c42"/>
<path d="M18 84 L25 82 L26 98 L20 100Z" fill="#3a4868"/>
<rect x="-10.5" y="89" width="19.5" height="8" fill="#c8c8c8"/>
<path d="M-22 101 L-1 101 L-2 153 L-22 153Z" fill="#8c7c44"/>
<path d="M1 101 L24 101 L23 153 L2 153Z" fill="#8a7a42"/>
<path d="M-21 110 L-4 138 M2 108 L22 144 M-19 140 L-3 118 M5 140 L22 116" stroke="#4a4020" stroke-width=".8"/>
<path d="M-25 152 L-1 152 L-2 176 L-24 176Z M1 152 L25 152 L25 176 L3 176Z" fill="#3c4462"/>
<path d="M-25 150 L-1 150 L-1 158 L-25 158Z M1 150 L25 150 L25 158 L1 158Z" fill="#b8b098" opacity=".85"/>
<path d="M-13 23 L11 23 L10.5 36 L-12 36Z" fill="#7e7050"/>
<path d="M-13 25 Q-14 11 -1 10 Q12 11 12 25Z" fill="#3e4252"/>
<path d="M-4 23 Q-4 13 -1 11 Q2 13 3 23Z" fill="#c8ccd6"/>
<path d="M-1 0 L2 12 L-4 12Z M-10.5 9 L-4 14 L-8 17Z M9 8 L5 16 L2 14Z M-16 20 L-9 17 L-9 22Z M14.5 20 L8 22 L8 17Z" fill="#3a4052"/>
</g></svg></div></div><div class="bd"></div></div><div class="cell" style="left:610px;top:347px"><div class="a menu"></div><div class="a tabs"></div><div class="a tb"></div><div class="a ptab"></div><svg class="a" style="left:2px;top:2px" width="14" height="14" viewBox="0 0 14 14"><circle cx="7" cy="7" r="6" fill="#1a1a1a" stroke="#9a9a9a" stroke-width=".7"/><path d="M4.2 4.3 L5.6 4 L5.6 8.8 Q6.6 9.6 7.6 8.8 L7.6 4.6 L9.1 4.2 L9.1 9.6 Q6.6 11 4.2 9.6Z" fill="#c8c8c8"/></svg><i style="left:21.5px;top:1.8px;font-size:3.8px;color:#c8c8c8;">File</i><i style="left:35.5px;top:1.8px;font-size:3.8px;color:#c8c8c8;">Edit</i><i style="left:51px;top:1.8px;font-size:3.8px;color:#c8c8c8;">Asset</i><i style="left:68px;top:1.8px;font-size:3.8px;color:#c8c8c8;">View</i><i style="left:84.5px;top:1.8px;font-size:3.8px;color:#c8c8c8;">Debug</i><i style="left:103.5px;top:1.8px;font-size:3.8px;color:#c8c8c8;">Window</i><i style="left:123px;top:1.8px;font-size:3.8px;color:#c8c8c8;">Tools</i><i style="left:140.5px;top:1.8px;font-size:3.8px;color:#c8c8c8;">Help</i><b style="left:564px;top:4px;width:4px;height:.6px;background:#aaa;"></b><div class="a" style="left:578px;top:2.2px;width:3.4px;height:3.2px;border:.6px solid #bbb"></div><i style="left:591.5px;top:1.3px;font-size:4.6px;color:#ddd;">✕</i><svg class="a" style="left:22.5px;top:10px" width="5" height="5" viewBox="0 0 5 5"><path d="M.5 2.5 L2.5 .6 L4.5 2.5 V4.5 H.5Z" fill="none" stroke="#666" stroke-width=".5"/></svg><svg class="a" style="left:33.5px;top:10.3px" width="5" height="4.5" viewBox="0 0 5 4.5"><path d="M2.5 .2 L4.8 4.3 H.2Z" fill="#d8a020"/></svg><i style="left:41px;top:10.8px;font-size:3.8px;color:#c0c0c0;">DefaultMap</i><b style="left:97px;top:8.5px;width:65px;height:8.5px;background:#1e1e1e;border-radius:1px 1px 0 0"></b><svg class="a" style="left:100px;top:9.5px" width="5" height="6" viewBox="0 0 5 6"><circle cx="2.5" cy="1.6" r="1.3" fill="#3a7ee0"/><path d="M.4 5.6 Q.4 3.2 2.5 3.2 Q4.6 3.2 4.6 5.6Z" fill="#3a7ee0"/></svg><i style="left:107px;top:10.8px;font-size:3.8px;color:#d0d0d0;">BP_Brute</i><i style="left:155.5px;top:10.3px;font-size:4.9px;">×</i><i style="left:552px;top:10.8px;font-size:3.6px;color:#8a8a8a;">Parent class: <u>Character</u></i><b style="left:5.5px;top:20px;width:5px;height:6px;background:#c8c8c8;border-radius:.5px"></b><b style="left:19.5px;top:20.5px;width:5px;height:5.5px;background:#a8a8a8;border-radius:.5px"></b><b style="left:35px;top:19.5px;width:6px;height:7px;background:#d8c020;border-radius:.5px"></b><b style="left:36.5px;top:21.5px;width:3px;height:3px;background:#58a030;"></b><i style="left:44px;top:22px;font-size:3.9px;">Compile</i><i style="left:62.5px;top:21.8px;font-size:4.2px;color:#888;">:</i><b style="left:71px;top:21.5px;width:3px;height:3.5px;background:#bbb;"></b><i style="left:76px;top:22px;font-size:3.9px;">Diff v</i><b style="left:100px;top:20.5px;width:4.5px;height:4.5px;border:.6px solid #ccc;border-radius:50%"></b><i style="left:106px;top:22px;font-size:3.9px;">Find</i><b style="left:121px;top:20.5px;width:5px;height:5px;background:#888;border-radius:1px"></b><i style="left:128.5px;top:22px;font-size:3.9px;">Hide Unrelated</i><i style="left:160px;top:21.8px;font-size:4.2px;color:#888;">:</i><b style="left:170.5px;top:20.5px;width:5px;height:5px;border:.7px solid #bbb;border-radius:50%"></b><i style="left:177.5px;top:22px;font-size:3.9px;">Class Settings</i><b style="left:211px;top:20.5px;width:5px;height:5px;background:#bbb;clip-path:polygon(0 100%,20% 100%,100% 20%,80% 0)"></b><i style="left:218.5px;top:22px;font-size:3.9px;">Class Defaults</i><b style="left:251.5px;top:20.5px;width:5px;height:5px;background:#aaa;clip-path:polygon(0 0,100% 60%,55% 65%,40% 100%)"></b><i style="left:259px;top:22px;font-size:3.9px;">Simulation</i><b style="left:288px;top:18.8px;width:35px;height:9.5px;background:#232323;border-radius:1px"></b><b style="left:292.3px;top:21px;width:.9px;height:5px;background:#ccc;"></b><b style="left:294.3px;top:21px;width:.9px;height:5px;background:#ccc;"></b><b style="left:300.5px;top:21px;width:2.6px;height:4.6px;background:#5a6a5a;clip-path:polygon(0 0,100% 50%,0 100%)"></b><b style="left:309.5px;top:21px;width:4.4px;height:4.6px;background:#e02828;"></b><b style="left:318.5px;top:21px;width:.6px;height:5px;background:#555;"></b><b style="left:329px;top:19.5px;width:54px;height:7px;background:#0c0c0c;border-radius:1px"></b><i style="left:331px;top:22px;font-size:3.7px;">No debug object selected v</i><b style="left:388px;top:21px;width:3.5px;height:4px;background:#777;"></b><div class="a sb"></div><b style="left:3px;top:320.5px;width:3px;height:3.5px;background:#999;"></b><i style="left:8px;top:320.7px;font-size:3.7px;color:#aaa;">Content Drawer</i><b style="left:44px;top:320.5px;width:3px;height:3.5px;background:#bbb;"></b><i style="left:50px;top:320.7px;font-size:3.7px;color:#aaa;">Output Log</i><b style="left:78px;top:320.7px;width:4px;height:3.2px;border:.5px solid #999"></b><i style="left:84px;top:320.7px;font-size:3.7px;color:#aaa;">Cmd v</i><b style="left:103px;top:319.5px;width:93px;height:5.5px;background:#0c0c0c;border-radius:1px"></b><i style="left:105.5px;top:320.6px;font-size:3.5px;color:#555;">Enter Console Command</i><b style="left:518px;top:320.5px;width:3px;height:3.6px;background:#aaa;"></b><i style="left:524px;top:320.7px;font-size:3.7px;color:#aaa;">All Saved</i><b style="left:553px;top:320.5px;width:2.5px;height:3.8px;background:#aaa;"></b><i style="left:558px;top:320.7px;font-size:3.7px;color:#aaa;">Revision Control v</i><div class="a task"></div><b style="left:3.3px;top:329.5px;width:1.9px;height:1.9px;background:#fff;"></b><b style="left:5.6px;top:329.5px;width:1.9px;height:1.9px;background:#fff;"></b><b style="left:3.3px;top:331.8px;width:1.9px;height:1.9px;background:#fff;"></b><b style="left:5.6px;top:331.8px;width:1.9px;height:1.9px;background:#fff;"></b><b style="left:15.5px;top:329.5px;width:4.5px;height:4px;background:#c040e0;border-radius:1px;transform:skewX(-10deg)"></b><b style="left:27px;top:329.8px;width:4.8px;height:3.6px;background:#e8c040;border-radius:.4px"></b><div class="a" style="left:38.6px;top:329.2px;width:4.4px;height:4.4px;border-radius:50%;background:conic-gradient(#e33 0 33%,#fc3 0 66%,#3a5 0)"></div><b style="left:48.5px;top:327.5px;width:8.5px;height:8.5px;background:#3a3d44;"></b><b style="left:50.5px;top:329.3px;width:4.5px;height:4.5px;border:.6px solid #aaa;border-radius:50%"></b><b style="left:61.5px;top:329.4px;width:4.2px;height:4.2px;border:.6px solid #888;border-radius:50%"></b><i style="left:535px;top:329.4px;font-size:4.1px;">^</i><b style="left:542.5px;top:329.2px;width:1.6px;height:4.2px;background:#ddd;border-radius:1px"></b><b style="left:549px;top:329.6px;width:3.8px;height:3px;border:.5px solid #ccc"></b><b style="left:555.5px;top:330px;width:2px;height:2.5px;background:#ccc;clip-path:polygon(0 30%,40% 30%,100% 0,100% 100%,40% 70%,0 70%)"></b><i style="left:561px;top:329.9px;font-size:3px;color:#ccc;">ENG</i><i style="left:575px;top:328px;font-size:3.5px;color:rgba(230,230,230,.55);">Udemy</i><b style="left:588.5px;top:329.4px;width:4.5px;height:3.6px;background:#e8e8e8;border-radius:.3px"></b><div class="a lp"></div><b style="left:1px;top:31px;width:50px;height:9px;background:#1a1a1a;border-radius:1px 1px 0 0"></b><b style="left:3px;top:33px;width:3px;height:3.5px;border:.5px solid #aaa"></b><i style="left:8.5px;top:33.6px;font-size:3.8px;color:#c0c0c0;">Components</i><i style="left:44.5px;top:32.9px;font-size:4.6px;color:#aaa;">×</i><b style="left:7px;top:41px;width:17px;height:6px;background:#2a2a2a;border-radius:1px"></b><b style="left:9px;top:42.5px;width:1px;height:3px;background:#50c050;"></b><b style="left:8px;top:43.5px;width:3px;height:1px;background:#50c050;"></b><i style="left:12.5px;top:42.4px;font-size:3.8px;color:#ccc;">Add</i><div class="srch" style="left:27px;top:41px;width:61px;height:6px"></div><svg class="a" style="left:29px;top:42px" width="4" height="4" viewBox="0 0 4 4"><circle cx="1.6" cy="1.6" r="1.15" fill="none" stroke="#aaa" stroke-width=".55"/><path d="M2.4 2.4L3.6 3.6" stroke="#aaa" stroke-width=".6"/></svg><i style="left:35px;top:42.6px;font-size:3.5px;color:#444;">Search</i><b style="left:5.9px;top:53.6px;width:2.6px;height:3.6px;background:#999;border-radius:.6px"></b><i style="left:10.4px;top:53.2px;font-size:3.8px;color:#b8b8b8;letter-spacing:-.05px">BP_Brute (Self)</i><b style="left:14.1px;top:61.1px;width:2.6px;height:3.6px;background:#999;border-radius:.6px"></b><i style="left:18.6px;top:60.7px;font-size:3.8px;color:#b8b8b8;letter-spacing:-.05px">Capsule Component (CollisionCylinder)</i><b style="left:17.3px;top:68.7px;width:2.6px;height:3.6px;background:#999;border-radius:.6px"></b><i style="left:21.8px;top:68.3px;font-size:3.8px;color:#b8b8b8;letter-spacing:-.05px">Arrow Component (Arrow) <u>Edit in C++</u></i><b style="left:17.3px;top:76.2px;width:2.6px;height:3.6px;background:#999;border-radius:.6px"></b><i style="left:21.8px;top:75.8px;font-size:3.8px;color:#b8b8b8;letter-spacing:-.05px">CameraBoom</i><b style="left:20.3px;top:83.8px;width:2.6px;height:3.6px;background:#999;border-radius:.6px"></b><i style="left:24.8px;top:83.4px;font-size:3.8px;color:#b8b8b8;letter-spacing:-.05px">FollowCamera</i><b style="left:17.3px;top:91.3px;width:2.6px;height:3.6px;background:#999;border-radius:.6px"></b><i style="left:21.8px;top:90.9px;font-size:3.8px;color:#b8b8b8;letter-spacing:-.05px">Mesh (CharacterMesh0)  <u>Edit in C++</u></i><b style="left:14.1px;top:102.2px;width:2.6px;height:3.6px;background:#999;border-radius:.6px"></b><i style="left:18.6px;top:101.8px;font-size:3.8px;color:#b8b8b8;letter-spacing:-.05px">Character Movement (CharMoveComp)</i><b style="left:8px;top:97.3px;width:82px;height:.5px;background:#333;"></b><b style="left:1px;top:118px;width:50px;height:8.5px;background:#1a1a1a;border-radius:1px 1px 0 0"></b><b style="left:3px;top:120px;width:3px;height:3.5px;background:#888;"></b><i style="left:9px;top:120.4px;font-size:3.8px;color:#c0c0c0;">My Blueprint</i><i style="left:44.5px;top:119.6px;font-size:4.6px;color:#aaa;">×</i><b style="left:1px;top:126.5px;width:90px;height:.5px;background:#0e0e0e;"></b><b style="left:6px;top:128px;width:18px;height:5.5px;background:#262626;border-radius:1px"></b><b style="left:9px;top:129.3px;width:1px;height:3px;background:#50c050;"></b><b style="left:8px;top:130.3px;width:3px;height:1px;background:#50c050;"></b><i style="left:12.5px;top:129.4px;font-size:3.8px;color:#ccc;">Add</i><div class="srch" style="left:26px;top:128px;width:54px;height:5.5px"></div><svg class="a" style="left:28px;top:128.8px" width="4" height="4" viewBox="0 0 4 4"><circle cx="1.6" cy="1.6" r="1.15" fill="none" stroke="#aaa" stroke-width=".55"/><path d="M2.4 2.4L3.6 3.6" stroke="#aaa" stroke-width=".6"/></svg><b style="left:83.6px;top:128.6px;width:3.6px;height:3.6px;border:.6px solid #aaa;border-radius:50%"></b><div class="hdr" style="top:137.29999999999998px"></div><i style="left:7px;top:139.2px;font-size:3.2px;color:#c8c8c8;font-weight:bold;">GRAPHS</i><i style="left:2.8px;top:139.2px;font-size:3.2px;color:#888;">v</i><b style="left:83.6px;top:138.7px;width:3.8px;height:3.8px;border:.6px solid #999;border-radius:50%"></b><b style="left:7px;top:147.8px;width:3px;height:2.6px;background:#aaa;"></b><i style="left:12.5px;top:147.9px;font-size:3.6px;">EventGraph</i><b style="left:10.5px;top:155.8px;width:2.8px;height:2.8px;border:.6px solid #ccc;border-radius:50%"></b><i style="left:15.5px;top:156px;font-size:3.6px;color:#b8b8b8;">Event BeginPlay</i><b style="left:10.5px;top:163.5px;width:2.8px;height:2.8px;border:.6px solid #ccc;border-radius:50%"></b><i style="left:15.5px;top:163.7px;font-size:3.6px;color:#b8b8b8;">EnhancedInputAction IA_Move</i><b style="left:10.5px;top:171.2px;width:2.8px;height:2.8px;border:.6px solid #ccc;border-radius:50%"></b><i style="left:15.5px;top:171.4px;font-size:3.6px;color:#b8b8b8;">EnhancedInputAction IA_Look</i><div class="hdr" style="top:178.69999999999996px"></div><i style="left:7px;top:180.6px;font-size:3.2px;color:#c8c8c8;font-weight:bold;">FUNCTIONS <span style='color:#666;font-weight:normal'>(14 OVERRIDABLE)</span></i><i style="left:2.8px;top:180.6px;font-size:3.2px;color:#888;">v</i><b style="left:57px;top:179.4px;width:22px;height:5.2px;background:#0e0e0e;border-radius:1px"></b><i style="left:59px;top:180.8px;font-size:3.2px;">Override v</i><b style="left:83.6px;top:180.1px;width:3.8px;height:3.8px;border:.6px solid #999;border-radius:50%"></b><i style="left:9px;top:189.7px;font-size:3.7px;color:#aaa;">ƒ</i><i style="left:13px;top:189.9px;font-size:3.6px;">Construction Script</i><div class="hdr" style="top:196.29999999999998px"></div><i style="left:7px;top:198.2px;font-size:3.2px;color:#c8c8c8;font-weight:bold;">MACROS</i><i style="left:2.8px;top:198.2px;font-size:3.2px;color:#888;">v</i><b style="left:83.6px;top:197.7px;width:3.8px;height:3.8px;border:.6px solid #999;border-radius:50%"></b><div class="hdr" style="top:205.6px"></div><i style="left:7px;top:207.5px;font-size:3.2px;color:#c8c8c8;font-weight:bold;">VARIABLES</i><i style="left:2.8px;top:207.5px;font-size:3.2px;color:#888;">v</i><b style="left:83.6px;top:207px;width:3.8px;height:3.8px;border:.6px solid #999;border-radius:50%"></b><i style="left:3px;top:215.1px;font-size:3.2px;color:#888;">v</i><i style="left:6px;top:215.2px;font-size:3.5px;color:#c8c8c8;font-weight:bold;">Components</i><i style="left:10px;top:221.2px;font-size:3.5px;color:#a8a8a8;">FollowCamera</i><b style="left:58px;top:221.9px;width:3.4px;height:1.8px;background:#30a0e0;border-radius:1px"></b><i style="left:10px;top:227.4px;font-size:3.5px;color:#a8a8a8;">CameraBoom</i><b style="left:58px;top:228.1px;width:3.4px;height:1.8px;background:#30a0e0;border-radius:1px"></b><div class="hdr" style="top:233.19999999999996px"></div><i style="left:7px;top:235.1px;font-size:3.2px;color:#c8c8c8;font-weight:bold;">EVENT DISPATCHERS</i><i style="left:2.8px;top:235.1px;font-size:3.2px;color:#888;">v</i><b style="left:83.6px;top:234.6px;width:3.8px;height:3.8px;border:.6px solid #999;border-radius:50%"></b><b style="left:93.5px;top:33.2px;width:3.5px;height:3px;background:#999;"></b><i style="left:99px;top:33.6px;font-size:3.8px;color:#a8a8a8;">Viewport</i><i style="left:145px;top:33.2px;font-size:3.9px;color:#aaa;">ƒ</i><i style="left:150.5px;top:33.6px;font-size:3.8px;color:#a8a8a8;">Construction Scr...</i><b style="left:191.5px;top:31px;width:49px;height:9px;background:#1e1e1e;border-radius:1px 1px 0 0"></b><b style="left:194px;top:33.2px;width:3.4px;height:3.4px;border:.5px dashed #bbb"></b><i style="left:199.5px;top:33.6px;font-size:3.8px;color:#d0d0d0;">EventGraph</i><i style="left:236px;top:32.9px;font-size:4.6px;color:#aaa;">×</i><b style="left:450px;top:31px;width:50px;height:9px;background:#1c1c1c;border-radius:1px 1px 0 0"></b><b style="left:452.5px;top:33px;width:3px;height:3.6px;background:#ccc;clip-path:polygon(0 100%,25% 100%,100% 25%,75% 0)"></b><i style="left:458.5px;top:33.6px;font-size:3.8px;color:#c8c8c8;">Details</i><i style="left:492.5px;top:32.9px;font-size:4.6px;color:#aaa;">×</i><div class="a graph"></div><div class="a" style="left:92px;top:40px;width:357px;height:278px;overflow:hidden"><div class="a" style="left:-92px;top:-40px;width:600px;height:337px"><b style="left:142px;top:40px;width:307px;height:32px;background:#2c2c2c;"></b><b style="left:361px;top:40px;width:71px;height:22px;background:#1b1d1c;border-radius:2px"></b><i style="left:377px;top:40.7px;font-size:9.5px;color:#b8b8b8;font-weight:bold;line-height:10px;transform:scaleX(.85);transform-origin:0 0">Player<br>Subsystem</i><b style="left:94.5px;top:42.8px;width:351.5px;height:270.5px;border:2px solid #dca42a;z-index:3"></b></div></div><div class="a gbar"></div><b style="left:95px;top:43px;width:2.6px;height:3.6px;border:.5px solid #777"></b><i style="left:99px;top:43.4px;font-size:3.2px;color:#888;">v</i><svg class="a" style="left:109.5px;top:43.5px" width="5" height="4" viewBox="0 0 5 4"><path d="M0 2L2.4 0V1.2H5V2.8H2.4V4Z" fill="#d8d8d8"/></svg><svg class="a" style="left:121.5px;top:43.5px" width="5" height="4" viewBox="0 0 5 4"><path d="M5 2L2.6 0V1.2H0V2.8H2.6V4Z" fill="#d8d8d8"/></svg><b style="left:136px;top:42.5px;width:2.6px;height:2.6px;background:#ccc;border-radius:50%"></b><b style="left:140px;top:43.2px;width:2px;height:1.8px;background:#ccc;"></b><b style="left:136px;top:46.5px;width:2px;height:1.8px;background:#ccc;"></b><b style="left:140px;top:46.5px;width:2px;height:1.8px;background:#ccc;"></b><i style="left:147px;top:42.5px;font-size:6.3px;color:#8e8e8e;">BP_Brute <span style='color:#ccc'>&gt;</span> EventGraph</i><i style="left:425px;top:42.9px;font-size:5.1px;color:#3e3e3e;">Zoom 1:1</i><div class="wm">BLUEPRINT</div><div class="a dp"></div><div class="srch" style="left:453px;top:42.5px;width:128px;height:5.5px"></div><svg class="a" style="left:455px;top:43.2px" width="4" height="4" viewBox="0 0 4 4"><circle cx="1.6" cy="1.6" r="1.15" fill="none" stroke="#aaa" stroke-width=".55"/><path d="M2.4 2.4L3.6 3.6" stroke="#aaa" stroke-width=".6"/></svg><i style="left:461px;top:43.6px;font-size:3.5px;color:#444;">Search</i><b style="left:585.5px;top:43px;width:3.4px;height:3.6px;background:#888;"></b><b style="left:592.5px;top:43px;width:3.8px;height:3.8px;border:.6px solid #888;border-radius:50%"></b><div class="a" style="left:0;top:0;width:600px;height:337px;z-index:4"><b style="left:100px;top:52px;width:401px;height:10px;background:#1c1c1c;"></b><i style="left:241.5px;top:54.6px;font-size:3.7px;color:#b8b8b8;">BruteRPG Preview [NetMode: Standalone 0]  (64-bit/PC D3D SM5)</i><b style="left:103px;top:55.5px;width:3.5px;height:3.5px;background:#888;border-radius:.5px"></b><b style="left:473.5px;top:57px;width:3px;height:.5px;background:#ccc;"></b><b style="left:486px;top:55.3px;width:2.8px;height:2.8px;border:.5px solid #ccc"></b><i style="left:494.5px;top:54.4px;font-size:3.9px;color:#ddd;">✕</i><div class="a" style="left:100px;top:62px;width:401px;height:226px;overflow:hidden"><svg class="a" width="400" height="226" viewBox="0 0 400 226" style="left:0;top:0;overflow:hidden"><defs><filter id="cbc6" x="-50%" y="-50%" width="200%" height="200%"><feGaussianBlur stdDeviation="7 2.5"/></filter>
<linearGradient id="skc6" x1="0" y1="0" x2="0" y2="1"><stop offset="0" stop-color="#3a68a6"/><stop offset=".6" stop-color="#3a68a6" stop-opacity=".0"/></linearGradient>
<linearGradient id="sbc6" x1="0" y1="0" x2="0" y2="1"><stop offset="0" stop-color="#5080b8"/><stop offset=".55" stop-color="#7aa0cc"/><stop offset="1" stop-color="#b8c8dc"/></linearGradient>
<linearGradient id="sec6" x1="0" y1="0" x2="0" y2="1"><stop offset="0" stop-color="#90acd0"/><stop offset=".35" stop-color="#2c5592"/><stop offset="1" stop-color="#2c5592"/></linearGradient>
<filter id="shc6"><feGaussianBlur stdDeviation=".8"/></filter></defs><rect width="400" height="122" fill="url(#sbc6)"/><rect width="400" height="122" fill="url(#skc6)"/><g filter="url(#cbc6)" fill="#eaf0f6"><ellipse cx="80" cy="21" rx="25" ry="6" opacity=".8"/><ellipse cx="162" cy="30" rx="30" ry="7" opacity=".8"/><ellipse cx="33" cy="48" rx="30" ry="9" opacity=".7"/><ellipse cx="98" cy="46" rx="28" ry="12" opacity=".8"/><ellipse cx="290" cy="48" rx="75" ry="16" opacity=".7"/><ellipse cx="310" cy="45" rx="40" ry="12" opacity=".8"/><ellipse cx="296" cy="75" rx="100" ry="10" opacity=".6"/><ellipse cx="67" cy="85" rx="70" ry="12" opacity=".6"/><ellipse cx="200" cy="95" rx="200" ry="10" opacity=".5"/><ellipse cx="240" cy="65" rx="40" ry="6" opacity=".5"/><ellipse cx="360" cy="25" rx="30" ry="8" opacity=".5"/></g><rect y="107" width="400" height="15.5" fill="url(#sec6)"/><filter id="fbc6" x="-10%" y="-10%" width="120%" height="120%"><feGaussianBlur stdDeviation="6 1"/></filter><g filter="url(#fbc6)"><clipPath id="fc1220197"><rect x="-60" y="122" width="520" height="164"/></clipPath><g clip-path="url(#fc1220197)"><rect x="-60" y="122" width="520" height="164" fill="#cbc8ca"/><path d="M197 122.0L-3000 259.0L-3000 261.4L197 122.0ZM197 122.0L-3000 263.8L-3000 266.4L197 122.0ZM197 122.0L-3000 269.0L-3000 271.7L197 122.0ZM197 122.0L-3000 274.6L-3000 277.5L197 122.0ZM197 122.0L-3000 280.6L-3000 283.7L197 122.0ZM197 122.0L-3000 287.1L-3000 290.5L197 122.0ZM197 122.0L-3000 294.1L-3000 297.9L197 122.0ZM197 122.0L-3000 301.8L-3000 305.9L197 122.0ZM197 122.0L-3000 310.2L-3000 314.7L197 122.0ZM197 122.0L-3000 319.4L-3000 324.4L197 122.0ZM197 122.0L-3000 329.6L-3000 335.1L197 122.0ZM197 122.0L-3000 340.9L-3000 347.0L197 122.0ZM197 122.0L-3000 353.4L-3000 360.3L197 122.0ZM197 122.0L-3000 367.5L-3000 375.3L197 122.0ZM197 122.0L-3000 383.5L-3000 392.3L197 122.0ZM197 122.0L-3000 401.6L-3000 411.7L197 122.0ZM197 122.0L-3000 422.5L-3000 434.1L197 122.0ZM197 122.0L-3000 446.7L-3000 460.4L197 122.0ZM197 122.0L-3000 475.2L-3000 491.4L197 122.0ZM197 122.0L-3000 509.1L-3000 528.7L197 122.0ZM197 122.0L-3000 550.3L-3000 574.4L197 122.0ZM197 122.0L-3000 601.3L-2965 626.0L197 122.0ZM197 122.0L-2765 626.0L-2565 626.0L197 122.0ZM197 122.0L-2365 626.0L-2165 626.0L197 122.0ZM197 122.0L-1965 626.0L-1765 626.0L197 122.0ZM197 122.0L-1565 626.0L-1365 626.0L197 122.0ZM197 122.0L-1165 626.0L-965 626.0L197 122.0ZM197 122.0L-765 626.0L-565 626.0L197 122.0ZM197 122.0L-365 626.0L-165 626.0L197 122.0ZM197 122.0L35 626.0L235 626.0L197 122.0ZM197 122.0L435 626.0L635 626.0L197 122.0ZM197 122.0L835 626.0L1035 626.0L197 122.0ZM197 122.0L1235 626.0L1435 626.0L197 122.0ZM197 122.0L1635 626.0L1835 626.0L197 122.0ZM197 122.0L2035 626.0L2235 626.0L197 122.0ZM197 122.0L2435 626.0L2635 626.0L197 122.0ZM197 122.0L2835 626.0L3000 619.8L197 122.0ZM197 122.0L3000 587.0L3000 558.3L197 122.0ZM197 122.0L3000 532.9L3000 510.3L197 122.0ZM197 122.0L3000 490.1L3000 471.9L197 122.0ZM197 122.0L3000 455.3L3000 440.3L197 122.0ZM197 122.0L3000 426.6L3000 414.0L197 122.0ZM197 122.0L3000 402.4L3000 391.7L197 122.0ZM197 122.0L3000 381.8L3000 372.6L197 122.0ZM197 122.0L3000 364.0L3000 356.0L197 122.0ZM197 122.0L3000 348.5L3000 341.4L197 122.0ZM197 122.0L3000 334.8L3000 328.6L197 122.0ZM197 122.0L3000 322.7L3000 317.2L197 122.0ZM197 122.0L3000 311.9L3000 307.0L197 122.0ZM197 122.0L3000 302.2L3000 297.8L197 122.0ZM197 122.0L3000 293.5L3000 289.4L197 122.0ZM197 122.0L3000 285.5L3000 281.8L197 122.0ZM197 122.0L3000 278.3L3000 274.9L197 122.0ZM197 122.0L3000 271.7L3000 268.6L197 122.0ZM197 122.0L3000 265.6L3000 262.7L197 122.0ZM197 122.0L3000 260.0L3000 257.3L197 122.0ZM197 122.0L3000 254.8L3000 252.3L197 122.0ZM197 122.0L3000 250.0L3000 247.7L197 122.0ZM197 122.0L3000 245.5L3000 243.4L197 122.0ZM197 122.0L3000 241.3L3000 239.4L197 122.0ZM-3000 208.7L3000 208.7L3000 186.0L-3000 186.0ZM-3000 172.7L3000 172.7L3000 164.0L-3000 164.0ZM-3000 157.8L3000 157.8L3000 153.3L-3000 153.3ZM-3000 149.7L3000 149.7L3000 146.9L-3000 146.9ZM-3000 144.6L3000 144.6L3000 142.7L-3000 142.7ZM-3000 141.1L3000 141.1L3000 139.7L-3000 139.7ZM-3000 138.5L3000 138.5L3000 137.5L-3000 137.5ZM-3000 136.5L3000 136.5L3000 135.7L-3000 135.7ZM-3000 135.0L3000 135.0L3000 134.3L-3000 134.3ZM-3000 133.7L3000 133.7L3000 133.2L-3000 133.2ZM-3000 132.7L3000 132.7L3000 132.3L-3000 132.3ZM-3000 131.8L3000 131.8L3000 131.5L-3000 131.5ZM-3000 131.1L3000 131.1L3000 130.8L-3000 130.8ZM-3000 130.5L3000 130.5L3000 130.2L-3000 130.2ZM-3000 129.9L3000 129.9L3000 129.7L-3000 129.7ZM-3000 129.4L3000 129.4L3000 129.2L-3000 129.2ZM-3000 129.0L3000 129.0L3000 128.8L-3000 128.8ZM-3000 128.6L3000 128.6L3000 128.5L-3000 128.5ZM-3000 128.3L3000 128.3L3000 128.1L-3000 128.1ZM-3000 128.0L3000 128.0L3000 127.8L-3000 127.8ZM-3000 127.7L3000 127.7L3000 127.6L-3000 127.6ZM-3000 127.5L3000 127.5L3000 127.3L-3000 127.3ZM-3000 127.2L3000 127.2L3000 127.1L-3000 127.1ZM-3000 127.0L3000 127.0L3000 126.9L-3000 126.9ZM-3000 126.8L3000 126.8L3000 126.7L-3000 126.7ZM-3000 126.6L3000 126.6L3000 126.5L-3000 126.5ZM-3000 126.5L3000 126.5L3000 126.4L-3000 126.4ZM-3000 126.3L3000 126.3L3000 126.2L-3000 126.2ZM-3000 126.2L3000 126.2L3000 126.1L-3000 126.1ZM-3000 126.0L3000 126.0L3000 126.0L-3000 126.0Z" fill="#bebbbe" fill-rule="evenodd"/><path d="M197 122.0L-3000 259.0M197 122.0L-3000 263.8M197 122.0L-3000 269.0M197 122.0L-3000 274.6M197 122.0L-3000 280.6M197 122.0L-3000 287.1M197 122.0L-3000 294.1M197 122.0L-3000 301.8M197 122.0L-3000 310.2M197 122.0L-3000 319.4M197 122.0L-3000 329.6M197 122.0L-3000 340.9M197 122.0L-3000 353.4M197 122.0L-3000 367.5M197 122.0L-3000 383.5M197 122.0L-3000 401.6M197 122.0L-3000 422.5M197 122.0L-3000 446.7M197 122.0L-3000 475.2M197 122.0L-3000 509.1M197 122.0L-3000 550.3M197 122.0L-3000 601.3M197 122.0L-2765 626.0M197 122.0L-2365 626.0M197 122.0L-1965 626.0M197 122.0L-1565 626.0M197 122.0L-1165 626.0M197 122.0L-765 626.0M197 122.0L-365 626.0M197 122.0L35 626.0M197 122.0L435 626.0M197 122.0L835 626.0M197 122.0L1235 626.0M197 122.0L1635 626.0M197 122.0L2035 626.0M197 122.0L2435 626.0M197 122.0L2835 626.0M197 122.0L3000 587.0M197 122.0L3000 532.9M197 122.0L3000 490.1M197 122.0L3000 455.3M197 122.0L3000 426.6M197 122.0L3000 402.4M197 122.0L3000 381.8M197 122.0L3000 364.0M197 122.0L3000 348.5M197 122.0L3000 334.8M197 122.0L3000 322.7M197 122.0L3000 311.9M197 122.0L3000 302.2M197 122.0L3000 293.5M197 122.0L3000 285.5M197 122.0L3000 278.3M197 122.0L3000 271.7M197 122.0L3000 265.6M197 122.0L3000 260.0M197 122.0L3000 254.8M197 122.0L3000 250.0M197 122.0L3000 245.5M197 122.0L3000 241.3M-3000 208.7L3000 208.7M-3000 172.7L3000 172.7M-3000 157.8L3000 157.8M-3000 149.7L3000 149.7M-3000 144.6L3000 144.6M-3000 141.1L3000 141.1M-3000 138.5L3000 138.5M-3000 136.5L3000 136.5M-3000 135.0L3000 135.0M-3000 133.7L3000 133.7M-3000 132.7L3000 132.7M-3000 131.8L3000 131.8M-3000 131.1L3000 131.1M-3000 130.5L3000 130.5M-3000 129.9L3000 129.9M-3000 129.4L3000 129.4M-3000 129.0L3000 129.0M-3000 128.6L3000 128.6M-3000 128.3L3000 128.3M-3000 128.0L3000 128.0M-3000 127.7L3000 127.7M-3000 127.5L3000 127.5M-3000 127.2L3000 127.2M-3000 127.0L3000 127.0M-3000 126.8L3000 126.8M-3000 126.6L3000 126.6M-3000 126.5L3000 126.5M-3000 126.3L3000 126.3M-3000 126.2L3000 126.2M-3000 126.0L3000 126.0" stroke="#9a98a8" stroke-width="0.45" fill="none" opacity="0.45"/><linearGradient id="hzfc1220197" x1="0" y1="0" x2="0" y2="1"><stop offset="0" stop-color="#cdcacd"/><stop offset=".3" stop-color="#cdcacd" stop-opacity=".85"/><stop offset=".65" stop-color="#cdcacd" stop-opacity=".45"/><stop offset="1" stop-color="#cdcacd" stop-opacity="0"/></linearGradient><rect x="-60" y="122" width="520" height="50" fill="url(#hzfc1220197)"/></g></g><path d="M146 198 Q200 184 245 196 L240 220 Q190 224 146 214Z" fill="#6c6c86" opacity=".85" filter="url(#shc6)"/><g transform="translate(149 54) scale(1.0)">
<path d="M-21 40 L-30 44 L-40 56 L-48 70 L-52 77 L-44 82 L-36 70 L-28 58 L-20 52Z" fill="#8c5e46"/>
<path d="M-47 54 L-30 52 L-26 72 L-49 76Z" fill="#6e6238" opacity=".95"/>
<path d="M-50 72 L-38 70 L-34 82 L-44 98 L-54 100 L-60 92 L-58 84Z" fill="#5a5030"/>
<path d="M-52 73 L-37 70 L-36 74 L-52 77Z" fill="#c0b898" opacity=".8"/>
<path d="M-63 91 L-55 90 L-52 101 L-60 103 L-64 99Z" fill="#3a2c22"/>
<path d="M20 44 L32 50 L40 62 L46 72 L40 76 L32 66 L22 58Z" fill="#8c5e46"/>
<path d="M34 70 L48 68 L60 80 L66 92 L60 96 L48 88 L38 82Z" fill="#5e5432"/>
<path d="M36 70 L48 68 L50 72 L38 74Z" fill="#c0b898" opacity=".8"/>
<path d="M61 90 L68 92 L68 101 L62 102 L59 96Z" fill="#3a2c22"/>
<path d="M-22 36 L11 36 L22 47 L23 70 L21 89 L-21 89 L-23 70 L-23 46Z" fill="#2e3550"/>
<path d="M-20 37 L10 37 L14 46 L4 52 L-8 52 L-20 47Z" fill="#9a6a50"/>
<path d="M-19 50 L-13 45 L20 84 L14 89Z" fill="#8a7a48"/>
<path d="M12 46 L17 50 L-15 86 L-20 82Z" fill="#7a6c40"/>
<circle cx="-2" cy="64" r="3.6" fill="#4a6a9a" stroke="#1a2030" stroke-width="1"/>
<path d="M9 40 L20 34 L28 31 L34 38 L46 45 L60 54 L44 55 L28 54 L16 56 L12 50Z" fill="#2e3448" stroke="#9aa0b0" stroke-width=".6" stroke-dasharray=".8 .6"/>
<path d="M-23 85 L22 85 L24 102 L-23 102Z" fill="#262c42"/>
<path d="M18 84 L25 82 L26 98 L20 100Z" fill="#3a4868"/>
<rect x="-10.5" y="89" width="19.5" height="8" fill="#c8c8c8"/>
<path d="M-22 101 L-1 101 L-2 153 L-22 153Z" fill="#8c7c44"/>
<path d="M1 101 L24 101 L23 153 L2 153Z" fill="#8a7a42"/>
<path d="M-21 110 L-4 138 M2 108 L22 144 M-19 140 L-3 118 M5 140 L22 116" stroke="#4a4020" stroke-width=".8"/>
<path d="M-25 152 L-1 152 L-2 176 L-24 176Z M1 152 L25 152 L25 176 L3 176Z" fill="#3c4462"/>
<path d="M-25 150 L-1 150 L-1 158 L-25 158Z M1 150 L25 150 L25 158 L1 158Z" fill="#b8b098" opacity=".85"/>
<path d="M-13 23 L11 23 L10.5 36 L-12 36Z" fill="#7e7050"/>
<path d="M-13 25 Q-14 11 -1 10 Q12 11 12 25Z" fill="#3e4252"/>
<path d="M-4 23 Q-4 13 -1 11 Q2 13 3 23Z" fill="#c8ccd6"/>
<path d="M-1 0 L2 12 L-4 12Z M-10.5 9 L-4 14 L-8 17Z M9 8 L5 16 L2 14Z M-16 20 L-9 17 L-9 22Z M14.5 20 L8 22 L8 17Z" fill="#3a4052"/>
</g></svg></div></div><div class="bd"></div></div><div class="cell" style="left:1215px;top:347px"><div class="a menu"></div><div class="a tabs"></div><div class="a tb"></div><div class="a ptab"></div><svg class="a" style="left:2px;top:2px" width="14" height="14" viewBox="0 0 14 14"><circle cx="7" cy="7" r="6" fill="#1a1a1a" stroke="#9a9a9a" stroke-width=".7"/><path d="M4.2 4.3 L5.6 4 L5.6 8.8 Q6.6 9.6 7.6 8.8 L7.6 4.6 L9.1 4.2 L9.1 9.6 Q6.6 11 4.2 9.6Z" fill="#c8c8c8"/></svg><i style="left:21.5px;top:1.8px;font-size:3.8px;color:#c8c8c8;">File</i><i style="left:35px;top:1.8px;font-size:3.8px;color:#c8c8c8;">Edit</i><i style="left:51px;top:1.8px;font-size:3.8px;color:#c8c8c8;">Asset</i><i style="left:70px;top:1.8px;font-size:3.8px;color:#c8c8c8;">Window</i><i style="left:90.5px;top:1.8px;font-size:3.8px;color:#c8c8c8;">Tools</i><i style="left:107px;top:1.8px;font-size:3.8px;color:#c8c8c8;">Help</i><b style="left:564px;top:4px;width:4px;height:.6px;background:#aaa;"></b><div class="a" style="left:578px;top:2.2px;width:3.4px;height:3.2px;border:.6px solid #bbb"></div><i style="left:591.5px;top:1.3px;font-size:4.6px;color:#ddd;">✕</i><svg class="a" style="left:22.5px;top:10px" width="5" height="5" viewBox="0 0 5 5"><path d="M.5 2.5 L2.5 .6 L4.5 2.5 V4.5 H.5Z" fill="none" stroke="#666" stroke-width=".5"/></svg><svg class="a" style="left:33.5px;top:10.3px" width="5" height="4.5" viewBox="0 0 5 4.5"><path d="M2.5 .2 L4.8 4.3 H.2Z" fill="#d8a020"/></svg><i style="left:41px;top:10.8px;font-size:3.8px;color:#c0c0c0;">DefaultMap</i><svg class="a" style="left:100px;top:9.5px" width="5" height="6" viewBox="0 0 5 6"><circle cx="2.5" cy="1.6" r="1.3" fill="#3a7ee0"/><path d="M.4 5.6 Q.4 3.2 2.5 3.2 Q4.6 3.2 4.6 5.6Z" fill="#3a7ee0"/></svg><i style="left:107px;top:10.8px;font-size:3.8px;color:#c0c0c0;">BP_Brute</i><b style="left:163px;top:8.5px;width:66px;height:8.5px;background:#1e1e1e;border-radius:1px 1px 0 0"></b><b style="left:166px;top:10px;width:4px;height:4.5px;background:#a8c040;"></b><i style="left:173px;top:10.8px;font-size:3.8px;color:#d0d0d0;">IMC_Brute*</i><i style="left:222px;top:10.3px;font-size:4.9px;">×</i><i style="left:533px;top:10.8px;font-size:3.6px;color:#8a8a8a;">Asset Type: <u>InputMappingContext</u></i><b style="left:5.5px;top:20px;width:5px;height:6px;background:#c8c8c8;border-radius:.5px"></b><b style="left:19.5px;top:20.5px;width:5px;height:5.5px;background:#a8a8a8;border-radius:.5px"></b><div class="a sb"></div><b style="left:3px;top:320.5px;width:3px;height:3.5px;background:#999;"></b><i style="left:8px;top:320.7px;font-size:3.7px;color:#aaa;">Content Drawer</i><b style="left:44px;top:320.5px;width:3px;height:3.5px;background:#bbb;"></b><i style="left:50px;top:320.7px;font-size:3.7px;color:#aaa;">Output Log</i><b style="left:78px;top:320.7px;width:4px;height:3.2px;border:.5px solid #999"></b><i style="left:84px;top:320.7px;font-size:3.7px;color:#aaa;">Cmd v</i><b style="left:103px;top:319.5px;width:93px;height:5.5px;background:#0c0c0c;border-radius:1px"></b><i style="left:105.5px;top:320.6px;font-size:3.5px;color:#555;">Enter Console Command</i><b style="left:518px;top:320.5px;width:3px;height:3.6px;background:#aaa;"></b><i style="left:524px;top:320.7px;font-size:3.7px;color:#aaa;">1 Unsaved</i><b style="left:553px;top:320.5px;width:2.5px;height:3.8px;background:#aaa;"></b><i style="left:558px;top:320.7px;font-size:3.7px;color:#aaa;">Revision Control v</i><div class="a task"></div><b style="left:3.3px;top:329.5px;width:1.9px;height:1.9px;background:#fff;"></b><b style="left:5.6px;top:329.5px;width:1.9px;height:1.9px;background:#fff;"></b><b style="left:3.3px;top:331.8px;width:1.9px;height:1.9px;background:#fff;"></b><b style="left:5.6px;top:331.8px;width:1.9px;height:1.9px;background:#fff;"></b><b style="left:15.5px;top:329.5px;width:4.5px;height:4px;background:#c040e0;border-radius:1px;transform:skewX(-10deg)"></b><b style="left:27px;top:329.8px;width:4.8px;height:3.6px;background:#e8c040;border-radius:.4px"></b><div class="a" style="left:38.6px;top:329.2px;width:4.4px;height:4.4px;border-radius:50%;background:conic-gradient(#e33 0 33%,#fc3 0 66%,#3a5 0)"></div><b style="left:48.5px;top:327.5px;width:8.5px;height:8.5px;background:#3a3d44;"></b><b style="left:50.5px;top:329.3px;width:4.5px;height:4.5px;border:.6px solid #aaa;border-radius:50%"></b><b style="left:61.5px;top:329.4px;width:4.2px;height:4.2px;border:.6px solid #888;border-radius:50%"></b><i style="left:535px;top:329.4px;font-size:4.1px;">^</i><b style="left:542.5px;top:329.2px;width:1.6px;height:4.2px;background:#ddd;border-radius:1px"></b><b style="left:549px;top:329.6px;width:3.8px;height:3px;border:.5px solid #ccc"></b><b style="left:555.5px;top:330px;width:2px;height:2.5px;background:#ccc;clip-path:polygon(0 30%,40% 30%,100% 0,100% 100%,40% 70%,0 70%)"></b><i style="left:561px;top:329.9px;font-size:3px;color:#ccc;">ENG</i><i style="left:575px;top:328px;font-size:3.5px;color:rgba(230,230,230,.55);">Udemy</i><b style="left:588.5px;top:329.4px;width:4.5px;height:3.6px;background:#e8e8e8;border-radius:.3px"></b><b style="left:1px;top:30px;width:598px;height:288px;background:#1b1b1b;"></b><b style="left:1px;top:30px;width:598px;height:10px;background:#0f0f0f;"></b><b style="left:1px;top:31px;width:50px;height:9px;background:#1c1c1c;"></b><b style="left:3px;top:30.2px;width:38px;height:.6px;background:#2a6ad0;"></b><b style="left:3px;top:33px;width:3px;height:3.6px;background:#ccc;clip-path:polygon(0 100%,25% 100%,100% 25%,75% 0)"></b><i style="left:9.5px;top:33.6px;font-size:3.8px;color:#d0d0d0;font-weight:bold;">Details</i><i style="left:44.5px;top:32.9px;font-size:4.6px;color:#aaa;">×</i><div class="srch" style="left:4px;top:42px;width:583px;height:5.8px"></div><svg class="a" style="left:6px;top:43px" width="4" height="4" viewBox="0 0 4 4"><circle cx="1.6" cy="1.6" r="1.15" fill="none" stroke="#aaa" stroke-width=".55"/><path d="M2.4 2.4L3.6 3.6" stroke="#aaa" stroke-width=".6"/></svg><i style="left:13px;top:43.6px;font-size:3.5px;color:#444;">Search</i><b style="left:588px;top:43px;width:3.4px;height:3.6px;background:#888;"></b><b style="left:594px;top:43px;width:3.8px;height:3.8px;border:.6px solid #888;border-radius:50%"></b><b style="left:2px;top:50.5px;width:590px;height:7.9px;background:#262626;"></b><i style="left:3.5px;top:52.4px;font-size:3px;color:#888;">v</i><i style="left:8px;top:52.4px;font-size:3.5px;color:#c8c8c8;font-weight:bold;">Mappings</i><b style="left:2px;top:59px;width:590px;height:7.9px;background:#1f1f1f;"></b><i style="left:3.5px;top:60.8px;font-size:3px;color:#888;">v</i><i style="left:8px;top:60.9px;font-size:3.5px;color:#a8a8a8;">Default Key Mappings</i><b style="left:2px;top:67.4px;width:590px;height:7.9px;background:#1f1f1f;"></b><b style="left:3.5px;top:67.4px;width:4px;height:7.9px;background:#191919;"></b><i style="left:8.5px;top:69.3px;font-size:3px;color:#888;">v</i><i style="left:13px;top:69.3px;font-size:3.5px;color:#a8a8a8;">Mappings</i><b style="left:36px;top:69.6px;width:3.4px;height:3.4px;border:.5px solid #aaa;border-radius:50%"></b><b style="left:42px;top:70px;width:2.6px;height:3px;border:.5px solid #aaa;border-top:none"></b><b style="left:41.6px;top:69.4px;width:3.4px;height:.5px;background:#aaa;"></b><b style="left:2px;top:75.9px;width:590px;height:7.9px;background:#1f1f1f;"></b><b style="left:3.5px;top:75.9px;width:4px;height:7.9px;background:#191919;"></b><b style="left:8.5px;top:75.9px;width:4px;height:7.9px;background:#191919;"></b><i style="left:13.5px;top:77.7px;font-size:3px;color:#888;">v</i><b style="left:18px;top:77.2px;width:42px;height:5.6px;background:#0e0e0e;border-radius:1px"></b><i style="left:20px;top:77.9px;font-size:3.2px;color:#ccc;">IA_Move</i><i style="left:55px;top:77.9px;font-size:3.2px;color:#aaa;">v</i><b style="left:66px;top:77.9px;width:3.4px;height:3.6px;background:#888;"></b><b style="left:74px;top:77.9px;width:3.4px;height:3.6px;background:#888;"></b><b style="left:84px;top:77.9px;width:3.4px;height:3.6px;border:.5px solid #aaa;border-radius:50%"></b><b style="left:91px;top:78.5px;width:2.6px;height:3px;border:.5px solid #aaa;border-top:none"></b><b style="left:90.6px;top:77.9px;width:3.4px;height:.5px;background:#aaa;"></b><b style="left:2px;top:84.3px;width:590px;height:7.9px;background:#1f1f1f;"></b><b style="left:3.5px;top:84.3px;width:4px;height:7.9px;background:#191919;"></b><b style="left:8.5px;top:84.3px;width:4px;height:7.9px;background:#191919;"></b><b style="left:13.5px;top:84.3px;width:4px;height:7.9px;background:#191919;"></b><i style="left:18.5px;top:86.2px;font-size:3px;color:#888;"></i><b style="left:28px;top:86.3px;width:5.5px;height:3.5px;background:#999;border-radius:.5px"></b><b style="left:36px;top:85.6px;width:13px;height:5.6px;background:#0e0e0e;border-radius:1px"></b><i style="left:38px;top:86.3px;font-size:3.2px;color:#ccc;">W v</i><b style="left:52px;top:86.9px;width:2.6px;height:3px;border:.5px solid #aaa;border-top:none"></b><b style="left:51.6px;top:86.3px;width:3.4px;height:.5px;background:#aaa;"></b><b style="left:2px;top:92.8px;width:590px;height:7.9px;background:#1f1f1f;"></b><b style="left:3.5px;top:92.8px;width:4px;height:7.9px;background:#191919;"></b><b style="left:8.5px;top:92.8px;width:4px;height:7.9px;background:#191919;"></b><b style="left:13.5px;top:92.8px;width:4px;height:7.9px;background:#191919;"></b><i style="left:18.5px;top:94.6px;font-size:3px;color:#888;"></i><b style="left:28px;top:94.8px;width:5.5px;height:3.5px;background:#999;border-radius:.5px"></b><b style="left:36px;top:94.1px;width:13px;height:5.6px;background:#0e0e0e;border-radius:1px"></b><i style="left:38px;top:94.8px;font-size:3.2px;color:#ccc;">S v</i><b style="left:52px;top:95.4px;width:2.6px;height:3px;border:.5px solid #aaa;border-top:none"></b><b style="left:51.6px;top:94.8px;width:3.4px;height:.5px;background:#aaa;"></b><b style="left:2px;top:101.2px;width:590px;height:7.9px;background:#1f1f1f;"></b><b style="left:3.5px;top:101.2px;width:4px;height:7.9px;background:#191919;"></b><b style="left:8.5px;top:101.2px;width:4px;height:7.9px;background:#191919;"></b><b style="left:13.5px;top:101.2px;width:4px;height:7.9px;background:#191919;"></b><i style="left:18.5px;top:103.1px;font-size:3px;color:#888;"></i><b style="left:28px;top:103.2px;width:5.5px;height:3.5px;background:#999;border-radius:.5px"></b><b style="left:36px;top:102.5px;width:13px;height:5.6px;background:#0e0e0e;border-radius:1px"></b><i style="left:38px;top:103.2px;font-size:3.2px;color:#ccc;">D v</i><b style="left:52px;top:103.8px;width:2.6px;height:3px;border:.5px solid #aaa;border-top:none"></b><b style="left:51.6px;top:103.2px;width:3.4px;height:.5px;background:#aaa;"></b><b style="left:2px;top:109.7px;width:590px;height:7.9px;background:#1f1f1f;"></b><b style="left:3.5px;top:109.7px;width:4px;height:7.9px;background:#191919;"></b><b style="left:8.5px;top:109.7px;width:4px;height:7.9px;background:#191919;"></b><b style="left:13.5px;top:109.7px;width:4px;height:7.9px;background:#191919;"></b><i style="left:18.5px;top:111.5px;font-size:3px;color:#888;"></i><b style="left:28px;top:111.7px;width:5.5px;height:3.5px;background:#999;border-radius:.5px"></b><b style="left:36px;top:111px;width:13px;height:5.6px;background:#0e0e0e;border-radius:1px"></b><i style="left:38px;top:111.7px;font-size:3.2px;color:#ccc;">A v</i><b style="left:52px;top:112.3px;width:2.6px;height:3px;border:.5px solid #aaa;border-top:none"></b><b style="left:51.6px;top:111.7px;width:3.4px;height:.5px;background:#aaa;"></b><b style="left:2px;top:118.1px;width:590px;height:7.9px;background:#1f1f1f;"></b><b style="left:3.5px;top:118.1px;width:4px;height:7.9px;background:#191919;"></b><b style="left:8.5px;top:118.1px;width:4px;height:7.9px;background:#191919;"></b><i style="left:13.5px;top:120px;font-size:3px;color:#888;">v</i><b style="left:18px;top:119.4px;width:42px;height:5.6px;background:#0e0e0e;border-radius:1px"></b><i style="left:20px;top:120.1px;font-size:3.2px;color:#ccc;">IA_Look</i><i style="left:55px;top:120.1px;font-size:3.2px;color:#aaa;">v</i><b style="left:66px;top:120.1px;width:3.4px;height:3.6px;background:#888;"></b><b style="left:74px;top:120.1px;width:3.4px;height:3.6px;background:#888;"></b><b style="left:84px;top:120.1px;width:3.4px;height:3.6px;border:.5px solid #aaa;border-radius:50%"></b><b style="left:91px;top:120.7px;width:2.6px;height:3px;border:.5px solid #aaa;border-top:none"></b><b style="left:90.6px;top:120.1px;width:3.4px;height:.5px;background:#aaa;"></b><b style="left:2px;top:126.6px;width:590px;height:7.9px;background:#1f1f1f;"></b><b style="left:3.5px;top:126.6px;width:4px;height:7.9px;background:#191919;"></b><b style="left:8.5px;top:126.6px;width:4px;height:7.9px;background:#191919;"></b><b style="left:13.5px;top:126.6px;width:4px;height:7.9px;background:#191919;"></b><i style="left:18.5px;top:128.4px;font-size:3px;color:#888;"></i><b style="left:28px;top:128.4px;width:4px;height:4.4px;background:#ddd;border-radius:2px"></b><b style="left:36px;top:127.9px;width:36px;height:5.6px;background:#0e0e0e;border-radius:1px"></b><i style="left:38px;top:128.6px;font-size:3.2px;color:#ccc;">Mouse XY 2D-Axis v</i><b style="left:76px;top:129.2px;width:2.6px;height:3px;border:.5px solid #aaa;border-top:none"></b><b style="left:75.6px;top:128.6px;width:3.4px;height:.5px;background:#aaa;"></b><b style="left:2px;top:135px;width:590px;height:7.9px;background:#1f1f1f;"></b><b style="left:3.5px;top:135px;width:4px;height:7.9px;background:#191919;"></b><b style="left:8.5px;top:135px;width:4px;height:7.9px;background:#191919;"></b><b style="left:13.5px;top:135px;width:4px;height:7.9px;background:#191919;"></b><b style="left:18.5px;top:135px;width:4px;height:7.9px;background:#191919;"></b><i style="left:23.5px;top:136.9px;font-size:3px;color:#888;">v</i><i style="left:28px;top:136.9px;font-size:3.5px;color:#a8a8a8;">Triggers</i><i style="left:244px;top:136.9px;font-size:3.4px;color:#999;">0 Array elements</i><b style="left:282px;top:137.2px;width:3.4px;height:3.4px;border:.5px solid #aaa;border-radius:50%"></b><b style="left:289px;top:137.6px;width:2.6px;height:3px;border:.5px solid #aaa;border-top:none"></b><b style="left:288.6px;top:137px;width:3.4px;height:.5px;background:#aaa;"></b><b style="left:240px;top:135px;width:.5px;height:7.9px;background:#161616;"></b><i style="left:594px;top:136.8px;font-size:3.5px;color:#888;">↶</i><b style="left:2px;top:143.5px;width:590px;height:7.9px;background:#1f1f1f;"></b><b style="left:3.5px;top:143.5px;width:4px;height:7.9px;background:#191919;"></b><b style="left:8.5px;top:143.5px;width:4px;height:7.9px;background:#191919;"></b><b style="left:13.5px;top:143.5px;width:4px;height:7.9px;background:#191919;"></b><b style="left:18.5px;top:143.5px;width:4px;height:7.9px;background:#191919;"></b><i style="left:23.5px;top:145.3px;font-size:3px;color:#888;">v</i><i style="left:28px;top:145.4px;font-size:3.5px;color:#a8a8a8;">Modifiers</i><i style="left:244px;top:145.4px;font-size:3.4px;color:#999;">1 Array elements</i><b style="left:282px;top:145.7px;width:3.4px;height:3.4px;border:.5px solid #aaa;border-radius:50%"></b><b style="left:289px;top:146.1px;width:2.6px;height:3px;border:.5px solid #aaa;border-top:none"></b><b style="left:288.6px;top:145.5px;width:3.4px;height:.5px;background:#aaa;"></b><b style="left:240px;top:143.5px;width:.5px;height:7.9px;background:#161616;"></b><i style="left:594px;top:145.3px;font-size:3.5px;color:#888;">↶</i><b style="left:2px;top:151.9px;width:590px;height:7.9px;background:#1f1f1f;"></b><b style="left:3.5px;top:151.9px;width:4px;height:7.9px;background:#191919;"></b><b style="left:8.5px;top:151.9px;width:4px;height:7.9px;background:#191919;"></b><b style="left:13.5px;top:151.9px;width:4px;height:7.9px;background:#191919;"></b><b style="left:18.5px;top:151.9px;width:4px;height:7.9px;background:#191919;"></b><b style="left:23.5px;top:151.9px;width:4px;height:7.9px;background:#191919;"></b><i style="left:28.5px;top:153.8px;font-size:3px;color:#888;">v</i><i style="left:33px;top:153.8px;font-size:3.5px;color:#a8a8a8;">Index [ 0 ]</i><b style="left:244px;top:153.2px;width:66px;height:5.8px;background:#0e0e0e;border-radius:1px"></b><b style="left:246px;top:154.1px;width:3.8px;height:3.8px;background:#aaa;border-radius:50%"></b><i style="left:251px;top:153.9px;font-size:3.2px;color:#ccc;">Negate</i><i style="left:302px;top:153.9px;font-size:3.2px;color:#aaa;">v</i><i style="left:315px;top:153.9px;font-size:3.2px;color:#aaa;">v</i><b style="left:240px;top:151.9px;width:.5px;height:7.9px;background:#161616;"></b><i style="left:594px;top:153.7px;font-size:3.5px;color:#888;">↶</i><b style="left:2px;top:160.3px;width:590px;height:7.9px;background:#262626;"></b><b style="left:3.5px;top:160.3px;width:4px;height:7.9px;background:#191919;"></b><b style="left:8.5px;top:160.3px;width:4px;height:7.9px;background:#191919;"></b><b style="left:13.5px;top:160.3px;width:4px;height:7.9px;background:#191919;"></b><b style="left:18.5px;top:160.3px;width:4px;height:7.9px;background:#191919;"></b><b style="left:23.5px;top:160.3px;width:4px;height:7.9px;background:#191919;"></b><b style="left:28.5px;top:160.3px;width:4px;height:7.9px;background:#191919;"></b><i style="left:33.5px;top:162.2px;font-size:3px;color:#888;"></i><i style="left:38px;top:162.3px;font-size:3.5px;color:#a8a8a8;">0</i><b style="left:245px;top:162.3px;width:4px;height:4px;background:#0d0d0d;"></b><b style="left:240px;top:160.3px;width:.5px;height:7.9px;background:#161616;"></b><i style="left:594px;top:162.2px;font-size:3.5px;color:#888;">↶</i><b style="left:2px;top:168.8px;width:590px;height:7.9px;background:#1f1f1f;"></b><b style="left:3.5px;top:168.8px;width:4px;height:7.9px;background:#191919;"></b><b style="left:8.5px;top:168.8px;width:4px;height:7.9px;background:#191919;"></b><b style="left:13.5px;top:168.8px;width:4px;height:7.9px;background:#191919;"></b><b style="left:18.5px;top:168.8px;width:4px;height:7.9px;background:#191919;"></b><b style="left:23.5px;top:168.8px;width:4px;height:7.9px;background:#191919;"></b><b style="left:28.5px;top:168.8px;width:4px;height:7.9px;background:#191919;"></b><i style="left:33.5px;top:170.7px;font-size:3px;color:#888;"></i><i style="left:38px;top:170.7px;font-size:3.5px;color:#a8a8a8;">1</i><b style="left:245px;top:170.8px;width:4px;height:4px;background:#0d0d0d;"></b><i style="left:245.3px;top:170.4px;font-size:4.2px;color:#4a9ae0;">✓</i><b style="left:240px;top:168.8px;width:.5px;height:7.9px;background:#161616;"></b><b style="left:2px;top:177.2px;width:590px;height:7.9px;background:#1f1f1f;"></b><b style="left:3.5px;top:177.2px;width:4px;height:7.9px;background:#191919;"></b><b style="left:8.5px;top:177.2px;width:4px;height:7.9px;background:#191919;"></b><b style="left:13.5px;top:177.2px;width:4px;height:7.9px;background:#191919;"></b><b style="left:18.5px;top:177.2px;width:4px;height:7.9px;background:#191919;"></b><b style="left:23.5px;top:177.2px;width:4px;height:7.9px;background:#191919;"></b><b style="left:28.5px;top:177.2px;width:4px;height:7.9px;background:#191919;"></b><i style="left:33.5px;top:179.1px;font-size:3px;color:#888;"></i><i style="left:38px;top:179.2px;font-size:3.5px;color:#a8a8a8;">2</i><b style="left:245px;top:179.2px;width:4px;height:4px;background:#0d0d0d;"></b><b style="left:240px;top:177.2px;width:.5px;height:7.9px;background:#161616;"></b><i style="left:594px;top:179.1px;font-size:3.5px;color:#888;">↶</i><b style="left:2px;top:185.7px;width:590px;height:7.9px;background:#1f1f1f;"></b><b style="left:3.5px;top:185.7px;width:4px;height:7.9px;background:#191919;"></b><b style="left:8.5px;top:185.7px;width:4px;height:7.9px;background:#191919;"></b><b style="left:13.5px;top:185.7px;width:4px;height:7.9px;background:#191919;"></b><b style="left:18.5px;top:185.7px;width:4px;height:7.9px;background:#191919;"></b><i style="left:23.5px;top:187.6px;font-size:3px;color:#888;">v</i><i style="left:28px;top:187.6px;font-size:3.5px;color:#a8a8a8;">Swizzle Behavior</i><b style="left:244px;top:187px;width:54px;height:5.8px;background:#0e0e0e;border-radius:1px"></b><i style="left:246px;top:187.7px;font-size:3.2px;">Player Settings from Action v</i><b style="left:240px;top:185.7px;width:.5px;height:7.9px;background:#161616;"></b><i style="left:594px;top:187.5px;font-size:3.5px;color:#888;">↶</i><b style="left:2px;top:194.1px;width:590px;height:7.9px;background:#1f1f1f;"></b><b style="left:3.5px;top:194.1px;width:4px;height:7.9px;background:#191919;"></b><b style="left:8.5px;top:194.1px;width:4px;height:7.9px;background:#191919;"></b><b style="left:13.5px;top:194.1px;width:4px;height:7.9px;background:#191919;"></b><b style="left:18.5px;top:194.1px;width:4px;height:7.9px;background:#191919;"></b><i style="left:23.5px;top:196px;font-size:3px;color:#888;">v</i><i style="left:28px;top:196.1px;font-size:3.5px;color:#a8a8a8;"><span style='color:#666'>Player Mappable Key Settings</span></i><b style="left:244px;top:195.4px;width:38px;height:5.8px;background:#2a2a2a;border-radius:1px"></b><i style="left:246px;top:196.2px;font-size:3.2px;color:#777;">None</i><b style="left:240px;top:194.1px;width:.5px;height:7.9px;background:#161616;"></b><b style="left:2px;top:202.6px;width:590px;height:7.9px;background:#1f1f1f;"></b><i style="left:3.5px;top:204.5px;font-size:3px;color:#888;">v</i><i style="left:8px;top:204.5px;font-size:3.5px;color:#a8a8a8;">Mapping Profile Overrides</i><i style="left:244px;top:204.5px;font-size:3.4px;color:#999;">0 Map elements</i><b style="left:282px;top:204.8px;width:3.4px;height:3.4px;border:.5px solid #aaa;border-radius:50%"></b><b style="left:289px;top:205.2px;width:2.6px;height:3px;border:.5px solid #aaa;border-top:none"></b><b style="left:288.6px;top:204.6px;width:3.4px;height:.5px;background:#aaa;"></b><b style="left:240px;top:202.6px;width:.5px;height:7.9px;background:#161616;"></b><i style="left:594px;top:204.4px;font-size:3.5px;color:#888;">↶</i><b style="left:2px;top:211px;width:590px;height:7.9px;background:#262626;"></b><i style="left:3.5px;top:212.9px;font-size:3px;color:#888;">v</i><i style="left:8px;top:213px;font-size:3.5px;color:#c8c8c8;font-weight:bold;">Input Modes</i><b style="left:2px;top:219.5px;width:590px;height:7.9px;background:#1f1f1f;"></b><i style="left:3.5px;top:221.4px;font-size:3px;color:#888;">v</i><i style="left:8px;top:221.4px;font-size:3.5px;color:#a8a8a8;">Input Mode Filter Options</i><b style="left:244px;top:220.8px;width:52px;height:5.8px;background:#0e0e0e;border-radius:1px"></b><i style="left:246px;top:221.5px;font-size:3.2px;">Use Project Default Query v</i><b style="left:240px;top:219.5px;width:.5px;height:7.9px;background:#161616;"></b><b style="left:2px;top:227.9px;width:590px;height:7.9px;background:#262626;"></b><i style="left:3.5px;top:229.8px;font-size:3px;color:#888;">v</i><i style="left:8px;top:229.9px;font-size:3.5px;color:#c8c8c8;font-weight:bold;">Registration</i><b style="left:2px;top:236.4px;width:590px;height:7.9px;background:#1f1f1f;"></b><i style="left:3.5px;top:238.3px;font-size:3px;color:#888;">v</i><i style="left:8px;top:238.3px;font-size:3.5px;color:#a8a8a8;">Registration Tracking Mode</i><b style="left:244px;top:237.7px;width:38px;height:5.8px;background:#0e0e0e;border-radius:1px"></b><i style="left:246px;top:238.4px;font-size:3.2px;">Untracked v</i><b style="left:240px;top:236.4px;width:.5px;height:7.9px;background:#161616;"></b><b style="left:2px;top:244.8px;width:590px;height:7.9px;background:#262626;"></b><i style="left:3.5px;top:246.7px;font-size:3px;color:#888;">v</i><i style="left:8px;top:246.8px;font-size:3.5px;color:#c8c8c8;font-weight:bold;">Description</i><b style="left:2px;top:253.3px;width:590px;height:7.9px;background:#1f1f1f;"></b><i style="left:3.5px;top:255.2px;font-size:3px;color:#888;">v</i><i style="left:8px;top:255.2px;font-size:3.5px;color:#a8a8a8;">Description</i><b style="left:244px;top:254.8px;width:30px;height:5px;background:#0e0e0e;"></b><b style="left:278px;top:255.3px;width:3px;height:3.5px;background:#aaa;"></b><b style="left:240px;top:253.3px;width:.5px;height:7.9px;background:#161616;"></b><b style="left:240px;top:88px;width:.5px;height:36px;background:#161616;"></b><div class="bd"></div></div><div class="cell" style="left:1820px;top:347px"><div class="a menu"></div><div class="a tabs"></div><div class="a tb"></div><div class="a ptab"></div><svg class="a" style="left:2px;top:2px" width="14" height="14" viewBox="0 0 14 14"><circle cx="7" cy="7" r="6" fill="#1a1a1a" stroke="#9a9a9a" stroke-width=".7"/><path d="M4.2 4.3 L5.6 4 L5.6 8.8 Q6.6 9.6 7.6 8.8 L7.6 4.6 L9.1 4.2 L9.1 9.6 Q6.6 11 4.2 9.6Z" fill="#c8c8c8"/></svg><i style="left:21.5px;top:1.8px;font-size:3.8px;color:#c8c8c8;">File</i><i style="left:35.5px;top:1.8px;font-size:3.8px;color:#c8c8c8;">Edit</i><i style="left:51px;top:1.8px;font-size:3.8px;color:#c8c8c8;">Asset</i><i style="left:68px;top:1.8px;font-size:3.8px;color:#c8c8c8;">View</i><i style="left:84.5px;top:1.8px;font-size:3.8px;color:#c8c8c8;">Debug</i><i style="left:103.5px;top:1.8px;font-size:3.8px;color:#c8c8c8;">Window</i><i style="left:123px;top:1.8px;font-size:3.8px;color:#c8c8c8;">Tools</i><i style="left:140.5px;top:1.8px;font-size:3.8px;color:#c8c8c8;">Help</i><b style="left:564px;top:4px;width:4px;height:.6px;background:#aaa;"></b><div class="a" style="left:578px;top:2.2px;width:3.4px;height:3.2px;border:.6px solid #bbb"></div><i style="left:591.5px;top:1.3px;font-size:4.6px;color:#ddd;">✕</i><svg class="a" style="left:22.5px;top:10px" width="5" height="5" viewBox="0 0 5 5"><path d="M.5 2.5 L2.5 .6 L4.5 2.5 V4.5 H.5Z" fill="none" stroke="#666" stroke-width=".5"/></svg><svg class="a" style="left:33.5px;top:10.3px" width="5" height="4.5" viewBox="0 0 5 4.5"><path d="M2.5 .2 L4.8 4.3 H.2Z" fill="#d8a020"/></svg><i style="left:41px;top:10.8px;font-size:3.8px;color:#c0c0c0;">DefaultMap</i><b style="left:97px;top:8.5px;width:65px;height:8.5px;background:#1e1e1e;border-radius:1px 1px 0 0"></b><svg class="a" style="left:100px;top:9.5px" width="5" height="6" viewBox="0 0 5 6"><circle cx="2.5" cy="1.6" r="1.3" fill="#3a7ee0"/><path d="M.4 5.6 Q.4 3.2 2.5 3.2 Q4.6 3.2 4.6 5.6Z" fill="#3a7ee0"/></svg><i style="left:107px;top:10.8px;font-size:3.8px;color:#d0d0d0;">BP_Brute</i><i style="left:155.5px;top:10.3px;font-size:4.9px;">×</i><i style="left:552px;top:10.8px;font-size:3.6px;color:#8a8a8a;">Parent class: <u>Character</u></i><b style="left:5.5px;top:20px;width:5px;height:6px;background:#c8c8c8;border-radius:.5px"></b><b style="left:19.5px;top:20.5px;width:5px;height:5.5px;background:#a8a8a8;border-radius:.5px"></b><b style="left:35px;top:19.5px;width:6px;height:7px;background:#d8c020;border-radius:.5px"></b><b style="left:36.5px;top:21.5px;width:3px;height:3px;background:#58a030;"></b><i style="left:44px;top:22px;font-size:3.9px;">Compile</i><i style="left:62.5px;top:21.8px;font-size:4.2px;color:#888;">:</i><b style="left:71px;top:21.5px;width:3px;height:3.5px;background:#bbb;"></b><i style="left:76px;top:22px;font-size:3.9px;">Diff v</i><b style="left:100px;top:20.5px;width:4.5px;height:4.5px;border:.6px solid #ccc;border-radius:50%"></b><i style="left:106px;top:22px;font-size:3.9px;">Find</i><b style="left:121px;top:20.5px;width:5px;height:5px;background:#888;border-radius:1px"></b><i style="left:128.5px;top:22px;font-size:3.9px;">Hide Unrelated</i><i style="left:160px;top:21.8px;font-size:4.2px;color:#888;">:</i><b style="left:170.5px;top:20.5px;width:5px;height:5px;border:.7px solid #bbb;border-radius:50%"></b><i style="left:177.5px;top:22px;font-size:3.9px;">Class Settings</i><b style="left:209px;top:19.5px;width:38px;height:7px;background:#1e6ad8;border-radius:1px"></b><i style="left:218.5px;top:22px;font-size:3.9px;color:#fff;">Class Defaults</i><b style="left:211px;top:20.5px;width:5px;height:5px;background:#e8e8ff;clip-path:polygon(0 100%,20% 100%,100% 20%,80% 0)"></b><b style="left:251.5px;top:20.5px;width:5px;height:5px;background:#aaa;clip-path:polygon(0 0,100% 60%,55% 65%,40% 100%)"></b><i style="left:259px;top:22px;font-size:3.9px;">Simulation</i><b style="left:288px;top:18.8px;width:35px;height:9.5px;background:#232323;border-radius:1px"></b><b style="left:292.3px;top:21px;width:.9px;height:5px;background:#ccc;"></b><b style="left:294.3px;top:21px;width:.9px;height:5px;background:#ccc;"></b><b style="left:300.5px;top:21px;width:2.6px;height:4.6px;background:#5a6a5a;clip-path:polygon(0 0,100% 50%,0 100%)"></b><b style="left:309.5px;top:21px;width:4.4px;height:4.6px;background:#e02828;"></b><b style="left:318.5px;top:21px;width:.6px;height:5px;background:#555;"></b><b style="left:329px;top:19.5px;width:54px;height:7px;background:#0c0c0c;border-radius:1px"></b><i style="left:331px;top:22px;font-size:3.7px;">No debug object selected v</i><b style="left:388px;top:21px;width:3.5px;height:4px;background:#777;"></b><div class="a sb"></div><b style="left:3px;top:320.5px;width:3px;height:3.5px;background:#999;"></b><i style="left:8px;top:320.7px;font-size:3.7px;color:#aaa;">Content Drawer</i><b style="left:44px;top:320.5px;width:3px;height:3.5px;background:#bbb;"></b><i style="left:50px;top:320.7px;font-size:3.7px;color:#aaa;">Output Log</i><b style="left:78px;top:320.7px;width:4px;height:3.2px;border:.5px solid #999"></b><i style="left:84px;top:320.7px;font-size:3.7px;color:#aaa;">Cmd v</i><b style="left:103px;top:319.5px;width:93px;height:5.5px;background:#0c0c0c;border-radius:1px"></b><i style="left:105.5px;top:320.6px;font-size:3.5px;color:#555;">Enter Console Command</i><b style="left:518px;top:320.5px;width:3px;height:3.6px;background:#aaa;"></b><i style="left:524px;top:320.7px;font-size:3.7px;color:#aaa;">All Saved</i><b style="left:553px;top:320.5px;width:2.5px;height:3.8px;background:#aaa;"></b><i style="left:558px;top:320.7px;font-size:3.7px;color:#aaa;">Revision Control v</i><div class="a task"></div><b style="left:3.3px;top:329.5px;width:1.9px;height:1.9px;background:#fff;"></b><b style="left:5.6px;top:329.5px;width:1.9px;height:1.9px;background:#fff;"></b><b style="left:3.3px;top:331.8px;width:1.9px;height:1.9px;background:#fff;"></b><b style="left:5.6px;top:331.8px;width:1.9px;height:1.9px;background:#fff;"></b><b style="left:15.5px;top:329.5px;width:4.5px;height:4px;background:#c040e0;border-radius:1px;transform:skewX(-10deg)"></b><b style="left:27px;top:329.8px;width:4.8px;height:3.6px;background:#e8c040;border-radius:.4px"></b><div class="a" style="left:38.6px;top:329.2px;width:4.4px;height:4.4px;border-radius:50%;background:conic-gradient(#e33 0 33%,#fc3 0 66%,#3a5 0)"></div><b style="left:48.5px;top:327.5px;width:8.5px;height:8.5px;background:#3a3d44;"></b><b style="left:50.5px;top:329.3px;width:4.5px;height:4.5px;border:.6px solid #aaa;border-radius:50%"></b><b style="left:61.5px;top:329.4px;width:4.2px;height:4.2px;border:.6px solid #888;border-radius:50%"></b><i style="left:535px;top:329.4px;font-size:4.1px;">^</i><b style="left:542.5px;top:329.2px;width:1.6px;height:4.2px;background:#ddd;border-radius:1px"></b><b style="left:549px;top:329.6px;width:3.8px;height:3px;border:.5px solid #ccc"></b><b style="left:555.5px;top:330px;width:2px;height:2.5px;background:#ccc;clip-path:polygon(0 30%,40% 30%,100% 0,100% 100%,40% 70%,0 70%)"></b><i style="left:561px;top:329.9px;font-size:3px;color:#ccc;">ENG</i><i style="left:575px;top:328px;font-size:3.5px;color:rgba(230,230,230,.55);">Udemy</i><b style="left:588.5px;top:329.4px;width:4.5px;height:3.6px;background:#e8e8e8;border-radius:.3px"></b><div class="a lp"></div><b style="left:1px;top:31px;width:50px;height:9px;background:#1a1a1a;border-radius:1px 1px 0 0"></b><b style="left:3px;top:33px;width:3px;height:3.5px;border:.5px solid #aaa"></b><i style="left:8.5px;top:33.6px;font-size:3.8px;color:#c0c0c0;">Components</i><i style="left:44.5px;top:32.9px;font-size:4.6px;color:#aaa;">×</i><b style="left:7px;top:41px;width:17px;height:6px;background:#2a2a2a;border-radius:1px"></b><b style="left:9px;top:42.5px;width:1px;height:3px;background:#50c050;"></b><b style="left:8px;top:43.5px;width:3px;height:1px;background:#50c050;"></b><i style="left:12.5px;top:42.4px;font-size:3.8px;color:#ccc;">Add</i><div class="srch" style="left:27px;top:41px;width:61px;height:6px"></div><svg class="a" style="left:29px;top:42px" width="4" height="4" viewBox="0 0 4 4"><circle cx="1.6" cy="1.6" r="1.15" fill="none" stroke="#aaa" stroke-width=".55"/><path d="M2.4 2.4L3.6 3.6" stroke="#aaa" stroke-width=".6"/></svg><i style="left:35px;top:42.6px;font-size:3.5px;color:#444;">Search</i><b style="left:3px;top:51.8px;width:87px;height:7px;background:#24508a;"></b><b style="left:5.9px;top:53.6px;width:2.6px;height:3.6px;background:#999;border-radius:.6px"></b><i style="left:10.4px;top:53.2px;font-size:3.8px;color:#e8eef8;letter-spacing:-.05px">BP_Brute (Self)</i><b style="left:14.1px;top:61.1px;width:2.6px;height:3.6px;background:#999;border-radius:.6px"></b><i style="left:18.6px;top:60.7px;font-size:3.8px;color:#b8b8b8;letter-spacing:-.05px">Capsule Component (CollisionCylinder)</i><b style="left:17.3px;top:68.7px;width:2.6px;height:3.6px;background:#999;border-radius:.6px"></b><i style="left:21.8px;top:68.3px;font-size:3.8px;color:#b8b8b8;letter-spacing:-.05px">Arrow Component (Arrow) <u>Edit in C++</u></i><b style="left:17.3px;top:76.2px;width:2.6px;height:3.6px;background:#999;border-radius:.6px"></b><i style="left:21.8px;top:75.8px;font-size:3.8px;color:#b8b8b8;letter-spacing:-.05px">CameraBoom</i><b style="left:20.3px;top:83.8px;width:2.6px;height:3.6px;background:#999;border-radius:.6px"></b><i style="left:24.8px;top:83.4px;font-size:3.8px;color:#b8b8b8;letter-spacing:-.05px">FollowCamera</i><b style="left:17.3px;top:91.3px;width:2.6px;height:3.6px;background:#999;border-radius:.6px"></b><i style="left:21.8px;top:90.9px;font-size:3.8px;color:#b8b8b8;letter-spacing:-.05px">Mesh (CharacterMesh0)  <u>Edit in C++</u></i><b style="left:14.1px;top:102.2px;width:2.6px;height:3.6px;background:#999;border-radius:.6px"></b><i style="left:18.6px;top:101.8px;font-size:3.8px;color:#b8b8b8;letter-spacing:-.05px">Character Movement (CharMoveComp)</i><b style="left:8px;top:97.3px;width:82px;height:.5px;background:#333;"></b><b style="left:1px;top:118px;width:50px;height:8.5px;background:#1a1a1a;border-radius:1px 1px 0 0"></b><b style="left:3px;top:120px;width:3px;height:3.5px;background:#888;"></b><i style="left:9px;top:120.4px;font-size:3.8px;color:#c0c0c0;">My Blueprint</i><i style="left:44.5px;top:119.6px;font-size:4.6px;color:#aaa;">×</i><b style="left:1px;top:126.5px;width:90px;height:.5px;background:#0e0e0e;"></b><b style="left:6px;top:128px;width:18px;height:5.5px;background:#262626;border-radius:1px"></b><b style="left:9px;top:129.3px;width:1px;height:3px;background:#50c050;"></b><b style="left:8px;top:130.3px;width:3px;height:1px;background:#50c050;"></b><i style="left:12.5px;top:129.4px;font-size:3.8px;color:#ccc;">Add</i><div class="srch" style="left:26px;top:128px;width:54px;height:5.5px"></div><svg class="a" style="left:28px;top:128.8px" width="4" height="4" viewBox="0 0 4 4"><circle cx="1.6" cy="1.6" r="1.15" fill="none" stroke="#aaa" stroke-width=".55"/><path d="M2.4 2.4L3.6 3.6" stroke="#aaa" stroke-width=".6"/></svg><b style="left:83.6px;top:128.6px;width:3.6px;height:3.6px;border:.6px solid #aaa;border-radius:50%"></b><div class="hdr" style="top:137.29999999999998px"></div><i style="left:7px;top:139.2px;font-size:3.2px;color:#c8c8c8;font-weight:bold;">GRAPHS</i><i style="left:2.8px;top:139.2px;font-size:3.2px;color:#888;">v</i><b style="left:83.6px;top:138.7px;width:3.8px;height:3.8px;border:.6px solid #999;border-radius:50%"></b><b style="left:7px;top:147.8px;width:3px;height:2.6px;background:#aaa;"></b><i style="left:12.5px;top:147.9px;font-size:3.6px;">EventGraph</i><b style="left:10.5px;top:155.8px;width:2.8px;height:2.8px;border:.6px solid #ccc;border-radius:50%"></b><i style="left:15.5px;top:156px;font-size:3.6px;color:#b8b8b8;">Event BeginPlay</i><b style="left:10.5px;top:163.5px;width:2.8px;height:2.8px;border:.6px solid #ccc;border-radius:50%"></b><i style="left:15.5px;top:163.7px;font-size:3.6px;color:#b8b8b8;">EnhancedInputAction IA_Move</i><b style="left:10.5px;top:171.2px;width:2.8px;height:2.8px;border:.6px solid #ccc;border-radius:50%"></b><i style="left:15.5px;top:171.4px;font-size:3.6px;color:#b8b8b8;">EnhancedInputAction IA_Look</i><div class="hdr" style="top:178.69999999999996px"></div><i style="left:7px;top:180.6px;font-size:3.2px;color:#c8c8c8;font-weight:bold;">FUNCTIONS <span style='color:#666;font-weight:normal'>(14 OVERRIDABLE)</span></i><i style="left:2.8px;top:180.6px;font-size:3.2px;color:#888;">v</i><b style="left:57px;top:179.4px;width:22px;height:5.2px;background:#0e0e0e;border-radius:1px"></b><i style="left:59px;top:180.8px;font-size:3.2px;">Override v</i><b style="left:83.6px;top:180.1px;width:3.8px;height:3.8px;border:.6px solid #999;border-radius:50%"></b><i style="left:9px;top:189.7px;font-size:3.7px;color:#aaa;">ƒ</i><i style="left:13px;top:189.9px;font-size:3.6px;">Construction Script</i><div class="hdr" style="top:196.29999999999998px"></div><i style="left:7px;top:198.2px;font-size:3.2px;color:#c8c8c8;font-weight:bold;">MACROS</i><i style="left:2.8px;top:198.2px;font-size:3.2px;color:#888;">v</i><b style="left:83.6px;top:197.7px;width:3.8px;height:3.8px;border:.6px solid #999;border-radius:50%"></b><div class="hdr" style="top:205.6px"></div><i style="left:7px;top:207.5px;font-size:3.2px;color:#c8c8c8;font-weight:bold;">VARIABLES</i><i style="left:2.8px;top:207.5px;font-size:3.2px;color:#888;">v</i><b style="left:83.6px;top:207px;width:3.8px;height:3.8px;border:.6px solid #999;border-radius:50%"></b><i style="left:3px;top:215.1px;font-size:3.2px;color:#888;">v</i><i style="left:6px;top:215.2px;font-size:3.5px;color:#c8c8c8;font-weight:bold;">Components</i><i style="left:10px;top:221.2px;font-size:3.5px;color:#a8a8a8;">FollowCamera</i><b style="left:58px;top:221.9px;width:3.4px;height:1.8px;background:#30a0e0;border-radius:1px"></b><i style="left:10px;top:227.4px;font-size:3.5px;color:#a8a8a8;">CameraBoom</i><b style="left:58px;top:228.1px;width:3.4px;height:1.8px;background:#30a0e0;border-radius:1px"></b><div class="hdr" style="top:233.19999999999996px"></div><i style="left:7px;top:235.1px;font-size:3.2px;color:#c8c8c8;font-weight:bold;">EVENT DISPATCHERS</i><i style="left:2.8px;top:235.1px;font-size:3.2px;color:#888;">v</i><b style="left:83.6px;top:234.6px;width:3.8px;height:3.8px;border:.6px solid #999;border-radius:50%"></b><b style="left:91px;top:31px;width:49px;height:9px;background:#1e1e1e;border-radius:1px 1px 0 0"></b><b style="left:93.5px;top:33.2px;width:3.5px;height:3px;background:#999;"></b><i style="left:99px;top:33.6px;font-size:3.8px;color:#d0d0d0;">Viewport</i><i style="left:135.5px;top:32.9px;font-size:4.6px;color:#aaa;">×</i><i style="left:145px;top:33.2px;font-size:3.9px;color:#aaa;">ƒ</i><i style="left:150.5px;top:33.6px;font-size:3.8px;color:#a8a8a8;">Construction Scr...</i><b style="left:194px;top:33.2px;width:3.4px;height:3.4px;border:.5px dashed #bbb"></b><i style="left:199.5px;top:33.6px;font-size:3.8px;color:#a8a8a8;">EventGraph</i><b style="left:450px;top:31px;width:50px;height:9px;background:#1c1c1c;border-radius:1px 1px 0 0"></b><b style="left:452.5px;top:33px;width:3px;height:3.6px;background:#ccc;clip-path:polygon(0 100%,25% 100%,100% 25%,75% 0)"></b><i style="left:458.5px;top:33.6px;font-size:3.8px;color:#c8c8c8;">Details</i><i style="left:492.5px;top:32.9px;font-size:4.6px;color:#aaa;">×</i><b style="left:92px;top:40px;width:357px;height:11px;background:#151515;"></b><b style="left:95px;top:42px;width:9px;height:7px;background:#2a2a2a;border-radius:1px"></b><b style="left:96.5px;top:43px;width:4px;height:4.5px;background:#bbb;border-radius:50%"></b><b style="left:106px;top:42.2px;width:3px;height:5px;background:#3aa0e0;clip-path:polygon(0 0,100% 65%,50% 65%,40% 100%)"></b><b style="left:112px;top:44.5px;width:5px;height:1px;background:#ccc;"></b><b style="left:114px;top:42.5px;width:1px;height:5px;background:#ccc;"></b><b style="left:119.5px;top:42.6px;width:4.5px;height:4.5px;border:.6px solid #bbb;border-radius:50%"></b><b style="left:127px;top:42.6px;width:4.5px;height:4.5px;border:.6px solid #bbb"></b><b style="left:141px;top:42.6px;width:4px;height:4.5px;background:#777;clip-path:polygon(50% 0,100% 100%,0 100%)"></b><b style="left:158px;top:42px;width:10px;height:7px;background:#262626;border-radius:1px"></b><b style="left:160px;top:42.8px;width:4.6px;height:4.6px;border:.7px solid #ccc;border-radius:50%"></b><b style="left:174px;top:42.5px;width:5px;height:5px;background:#bbb;clip-path:polygon(0 80%,80% 0,100% 20%,20% 100%)"></b><i style="left:180px;top:42.5px;font-size:3.5px;color:#aaa;">9</i><b style="left:189px;top:42.5px;width:5px;height:5px;background:#2a8ab8;"></b><i style="left:196px;top:42.5px;font-size:3.5px;color:#aaa;">10</i><b style="left:206px;top:42.5px;width:5px;height:5px;border:.7px solid #2a9ad0;border-radius:50%"></b><i style="left:213px;top:42.5px;font-size:3.5px;color:#aaa;">10°</i><b style="left:228px;top:42.5px;width:4px;height:5.5px;border-left:.8px solid #2a9ad0;border-bottom:.8px solid #2a9ad0"></b><i style="left:237px;top:42.5px;font-size:3.5px;color:#aaa;">0.25</i><b style="left:343px;top:42px;width:32px;height:7px;background:#1e1e1e;"></b><b style="left:345px;top:43.5px;width:4px;height:3.5px;background:#ccc;"></b><i style="left:350px;top:42.7px;font-size:3.5px;">Perspective v</i><b style="left:380px;top:43px;width:4px;height:4px;background:#999;"></b><i style="left:386px;top:42.7px;font-size:3.5px;color:#aaa;">1 v</i><b style="left:400px;top:42px;width:16px;height:7px;background:#1e1e1e;"></b><b style="left:401.5px;top:43px;width:4.5px;height:4.5px;background:#aaa;border-radius:50%"></b><i style="left:407px;top:42.7px;font-size:3.5px;color:#aaa;">Lit v</i><i style="left:423px;top:42.7px;font-size:3.5px;color:#aaa;">⊞ v</i><i style="left:437px;top:42.7px;font-size:3.5px;color:#aaa;">✓ v</i><b style="left:92px;top:51px;width:357px;height:267px;background:#2d2d2d;"></b><svg class="a" style="left:92px;top:280px" width="357" height="38"><path d="M190 38 L207 8 M260 8 L357 30 M0 30 L60 18" stroke="#3a3a3a" stroke-width=".5"/><path d="M8 37 L8 24" stroke="#3a6ad0" stroke-width=".6"/><path d="M8 37 L16 33" stroke="#40a040" stroke-width=".6"/><path d="M8 37 L20 37" stroke="#c04040" stroke-width=".5" opacity=".6"/></svg><div class="a dp"></div><div class="srch" style="left:453px;top:42.5px;width:128px;height:5.5px"></div><i style="left:455px;top:43px;font-size:3.7px;color:#ccc;">✕</i><i style="left:461px;top:43.5px;font-size:3.6px;">rotation</i><b style="left:585.5px;top:43px;width:3.4px;height:3.6px;background:#888;"></b><b style="left:592.5px;top:43px;width:3.8px;height:3.8px;border:.6px solid #888;border-radius:50%"></b><b style="left:450px;top:51px;width:149px;height:.6px;background:#2a4a6a;"></b><b style="left:450px;top:51.5px;width:149px;height:7.6px;background:#2a2a2a;"></b><b style="left:450px;top:59.5px;width:149px;height:7.6px;background:#1f1f1f;"></b><b style="left:450px;top:67.5px;width:149px;height:8.6px;background:#1f1f1f;"></b><b style="left:514px;top:70px;width:16.5px;height:4.2px;background:#0d0d0d;"></b><i style="left:515.5px;top:70.4px;font-size:3px;">0.0°</i><b style="left:532px;top:70px;width:16.5px;height:4.2px;background:#0d0d0d;"></b><i style="left:533.5px;top:70.4px;font-size:3px;">0.0°</i><b style="left:551px;top:70px;width:16.5px;height:4.2px;background:#0d0d0d;"></b><i style="left:552.5px;top:70.4px;font-size:3px;">0.0°</i><b style="left:450px;top:76.5px;width:149px;height:7.6px;background:#2a2a2a;"></b><b style="left:450px;top:84.5px;width:149px;height:8.6px;background:#1f1f1f;"></b><b style="left:514px;top:87px;width:37px;height:4.2px;background:#0d0d0d;"></b><i style="left:515.5px;top:87.4px;font-size:3px;">0.0</i><b style="left:450px;top:93.5px;width:149px;height:7.6px;background:#2a2a2a;"></b><b style="left:450px;top:101.5px;width:149px;height:7.6px;background:#1f1f1f;"></b><b style="left:450px;top:109.5px;width:149px;height:7.6px;background:#1f1f1f;"></b><b style="left:450px;top:117.5px;width:149px;height:8.6px;background:#1f1f1f;"></b><b style="left:514px;top:120px;width:37px;height:4.2px;background:#0d0d0d;"></b><i style="left:515.5px;top:120.4px;font-size:3px;">Style: Component v</i><b style="left:450px;top:126.5px;width:149px;height:7.1px;background:#2a2a2a;"></b><b style="left:450px;top:134px;width:149px;height:8.6px;background:#1f1f1f;"></b><b style="left:514px;top:136.8px;width:3.4px;height:3.4px;background:#0d0d0d;"></b><b style="left:450px;top:143px;width:149px;height:8.1px;background:#2a2a2a;"></b><b style="left:450px;top:151.5px;width:149px;height:7.6px;background:#1f1f1f;"></b><b style="left:450px;top:159.5px;width:149px;height:8.1px;background:#1f1f1f;"></b><b style="left:514px;top:161.8px;width:37px;height:4.2px;background:#0d0d0d;"></b><i style="left:515.5px;top:162.1px;font-size:3px;">0.0</i><b style="left:450px;top:168px;width:149px;height:8.1px;background:#1f1f1f;"></b><b style="left:514px;top:170.2px;width:37px;height:4.2px;background:#0d0d0d;"></b><i style="left:515.5px;top:170.6px;font-size:3px;">0.0</i><b style="left:450px;top:176.5px;width:149px;height:7.6px;background:#2a2a2a;"></b><b style="left:450px;top:184.5px;width:149px;height:8.6px;background:#1f1f1f;"></b><b style="left:514px;top:187px;width:16.5px;height:4.2px;background:#0d0d0d;"></b><i style="left:515.5px;top:187.4px;font-size:3px;">0.0°</i><b style="left:532px;top:187px;width:16.5px;height:4.2px;background:#0d0d0d;"></b><i style="left:533.5px;top:187.4px;font-size:3px;">0.0°</i><b style="left:551px;top:187px;width:16.5px;height:4.2px;background:#0d0d0d;"></b><i style="left:552.5px;top:187.4px;font-size:3px;">0.0°</i><b style="left:450px;top:193.5px;width:149px;height:8.1px;background:#1f1f1f;"></b><b style="left:514px;top:196.1px;width:3.4px;height:3.4px;background:#0d0d0d;"></b><b style="left:450px;top:202px;width:149px;height:8.1px;background:#1f1f1f;"></b><b style="left:514px;top:204.6px;width:3.4px;height:3.4px;background:#0d0d0d;"></b><b style="left:450px;top:210.5px;width:149px;height:7.6px;background:#2a2a2a;"></b><b style="left:450px;top:218.5px;width:149px;height:8.6px;background:#1f1f1f;"></b><b style="left:514px;top:221.3px;width:3.4px;height:3.4px;background:#0d0d0d;"></b><b style="left:450px;top:227.5px;width:149px;height:7.6px;background:#2a2a2a;"></b><b style="left:450px;top:235.5px;width:149px;height:8.6px;background:#1f1f1f;"></b><b style="left:514px;top:238.3px;width:3.4px;height:3.4px;background:#0d0d0d;"></b><b style="left:450px;top:244.5px;width:149px;height:8.1px;background:#1f1f1f;"></b><b style="left:514px;top:247.1px;width:3.4px;height:3.4px;background:#0d0d0d;"></b><b style="left:450px;top:253px;width:149px;height:8.1px;background:#1f1f1f;"></b><b style="left:514px;top:255.6px;width:3.4px;height:3.4px;background:#0d0d0d;"></b><b style="left:450px;top:261.5px;width:149px;height:.6px;background:#2a4a6a;"></b><div class="a" style="left:0;top:0;width:600px;height:337px;z-index:4"><b style="left:100px;top:52px;width:401px;height:10px;background:#1c1c1c;"></b><i style="left:241.5px;top:54.6px;font-size:3.7px;color:#b8b8b8;">BruteRPG Preview [NetMode: Standalone 0]  (64-bit/PC D3D SM5)</i><b style="left:103px;top:55.5px;width:3.5px;height:3.5px;background:#888;border-radius:.5px"></b><b style="left:473.5px;top:57px;width:3px;height:.5px;background:#ccc;"></b><b style="left:486px;top:55.3px;width:2.8px;height:2.8px;border:.5px solid #ccc"></b><i style="left:494.5px;top:54.4px;font-size:3.9px;color:#ddd;">✕</i><div class="a" style="left:100px;top:62px;width:401px;height:226px;overflow:hidden"><svg class="a" width="400" height="226" viewBox="0 0 400 226" style="left:0;top:0;overflow:hidden"><defs><filter id="cbc8" x="-50%" y="-50%" width="200%" height="200%"><feGaussianBlur stdDeviation="1.8"/></filter>
<linearGradient id="skc8" x1="0" y1="0" x2="0" y2="1"><stop offset="0" stop-color="#5a82b0"/><stop offset=".6" stop-color="#5a82b0" stop-opacity=".0"/></linearGradient>
<linearGradient id="sbc8" x1="0" y1="0" x2="0" y2="1"><stop offset="0" stop-color="#7a98c0"/><stop offset=".55" stop-color="#8ea6c6"/><stop offset="1" stop-color="#8aa0c0"/></linearGradient>
<linearGradient id="sec8" x1="0" y1="0" x2="0" y2="1"><stop offset="0" stop-color="#90acd0"/><stop offset=".35" stop-color="#34507e"/><stop offset="1" stop-color="#34507e"/></linearGradient>
<filter id="shc8"><feGaussianBlur stdDeviation=".8"/></filter></defs><rect width="400" height="69" fill="url(#sbc8)"/><rect width="400" height="69" fill="url(#skc8)"/><g filter="url(#cbc8)" fill="#eaf0f6"><ellipse cx="40" cy="7" rx="34" ry="5" opacity=".7"/><ellipse cx="22" cy="11" rx="8" ry="5" opacity=".7"/><ellipse cx="24" cy="11" rx="9" ry="6" opacity=".7"/><ellipse cx="37" cy="7" rx="9" ry="6" opacity=".7"/><ellipse cx="23" cy="3" rx="9" ry="6" opacity=".8"/><ellipse cx="32" cy="4" rx="9" ry="7" opacity=".7"/><ellipse cx="48" cy="6" rx="14" ry="8" opacity=".8"/><ellipse cx="110" cy="11" rx="42" ry="7" opacity=".7"/><ellipse cx="110" cy="13" rx="21" ry="14" opacity=".7"/><ellipse cx="75" cy="16" rx="15" ry="8" opacity=".9"/><ellipse cx="116" cy="14" rx="20" ry="11" opacity=".8"/><ellipse cx="140" cy="7" rx="19" ry="9" opacity=".8"/><ellipse cx="126" cy="16" rx="20" ry="12" opacity=".7"/><ellipse cx="82" cy="11" rx="15" ry="7" opacity=".9"/><ellipse cx="111" cy="13" rx="11" ry="6" opacity=".7"/><ellipse cx="98" cy="8" rx="14" ry="8" opacity=".9"/><ellipse cx="215" cy="9" rx="38" ry="7" opacity=".7"/><ellipse cx="243" cy="6" rx="12" ry="6" opacity=".8"/><ellipse cx="249" cy="6" rx="17" ry="9" opacity=".6"/><ellipse cx="234" cy="7" rx="9" ry="6" opacity=".7"/><ellipse cx="208" cy="8" rx="12" ry="8" opacity=".7"/><ellipse cx="186" cy="4" rx="8" ry="5" opacity=".7"/><ellipse cx="237" cy="9" rx="16" ry="13" opacity=".7"/><ellipse cx="180" cy="5" rx="12" ry="8" opacity=".8"/><ellipse cx="204" cy="14" rx="7" ry="5" opacity=".7"/><ellipse cx="290" cy="12" rx="34" ry="6" opacity=".7"/><ellipse cx="314" cy="8" rx="17" ry="12" opacity=".8"/><ellipse cx="295" cy="9" rx="17" ry="10" opacity=".7"/><ellipse cx="297" cy="12" rx="12" ry="6" opacity=".7"/><ellipse cx="295" cy="12" rx="8" ry="5" opacity=".8"/><ellipse cx="304" cy="12" rx="11" ry="6" opacity=".7"/><ellipse cx="271" cy="12" rx="8" ry="5" opacity=".8"/><ellipse cx="297" cy="7" rx="10" ry="6" opacity=".7"/><ellipse cx="360" cy="11" rx="34" ry="8" opacity=".7"/><ellipse cx="390" cy="14" rx="12" ry="8" opacity=".7"/><ellipse cx="343" cy="11" rx="15" ry="10" opacity=".6"/><ellipse cx="367" cy="16" rx="15" ry="11" opacity=".8"/><ellipse cx="342" cy="8" rx="12" ry="10" opacity=".7"/><ellipse cx="388" cy="16" rx="12" ry="8" opacity=".8"/><ellipse cx="378" cy="8" rx="16" ry="8" opacity=".7"/><ellipse cx="389" cy="16" rx="10" ry="6" opacity=".8"/><ellipse cx="382" cy="13" rx="17" ry="12" opacity=".8"/><ellipse cx="45" cy="28" rx="38" ry="6" opacity=".6"/><ellipse cx="53" cy="27" rx="13" ry="8" opacity=".7"/><ellipse cx="69" cy="26" rx="8" ry="6" opacity=".6"/><ellipse cx="39" cy="24" rx="18" ry="10" opacity=".6"/><ellipse cx="67" cy="28" rx="11" ry="8" opacity=".6"/><ellipse cx="35" cy="32" rx="17" ry="12" opacity=".6"/><ellipse cx="68" cy="29" rx="18" ry="10" opacity=".7"/><ellipse cx="66" cy="27" rx="15" ry="11" opacity=".8"/><ellipse cx="75" cy="31" rx="9" ry="6" opacity=".7"/><ellipse cx="160" cy="26" rx="50" ry="6" opacity=".6"/><ellipse cx="120" cy="26" rx="24" ry="19" opacity=".8"/><ellipse cx="121" cy="27" rx="24" ry="16" opacity=".7"/><ellipse cx="116" cy="30" rx="24" ry="16" opacity=".7"/><ellipse cx="192" cy="29" rx="22" ry="14" opacity=".7"/><ellipse cx="140" cy="25" rx="15" ry="10" opacity=".6"/><ellipse cx="181" cy="24" rx="12" ry="7" opacity=".7"/><ellipse cx="153" cy="29" rx="11" ry="6" opacity=".7"/><ellipse cx="129" cy="28" rx="11" ry="5" opacity=".7"/><ellipse cx="275" cy="27" rx="38" ry="5" opacity=".6"/><ellipse cx="292" cy="30" rx="14" ry="8" opacity=".7"/><ellipse cx="292" cy="27" rx="14" ry="11" opacity=".8"/><ellipse cx="306" cy="24" rx="11" ry="7" opacity=".6"/><ellipse cx="294" cy="23" rx="18" ry="12" opacity=".7"/><ellipse cx="269" cy="31" rx="14" ry="11" opacity=".7"/><ellipse cx="289" cy="31" rx="13" ry="8" opacity=".7"/><ellipse cx="277" cy="25" rx="16" ry="10" opacity=".6"/><ellipse cx="365" cy="30" rx="29" ry="6" opacity=".6"/><ellipse cx="384" cy="30" rx="15" ry="10" opacity=".8"/><ellipse cx="353" cy="27" rx="11" ry="8" opacity=".8"/><ellipse cx="373" cy="26" rx="10" ry="4" opacity=".7"/><ellipse cx="390" cy="28" rx="12" ry="8" opacity=".6"/><ellipse cx="376" cy="26" rx="7" ry="5" opacity=".6"/><ellipse cx="391" cy="29" rx="12" ry="9" opacity=".6"/><ellipse cx="90" cy="42" rx="59" ry="4" opacity=".5"/><ellipse cx="146" cy="38" rx="23" ry="16" opacity=".6"/><ellipse cx="74" cy="44" rx="24" ry="15" opacity=".5"/><ellipse cx="60" cy="41" rx="18" ry="10" opacity=".6"/><ellipse cx="76" cy="42" rx="12" ry="6" opacity=".6"/><ellipse cx="134" cy="40" rx="12" ry="6" opacity=".5"/><ellipse cx="75" cy="42" rx="17" ry="12" opacity=".6"/><ellipse cx="122" cy="43" rx="23" ry="12" opacity=".6"/><ellipse cx="66" cy="44" rx="20" ry="13" opacity=".5"/><ellipse cx="240" cy="42" rx="50" ry="4" opacity=".5"/><ellipse cx="255" cy="40" rx="19" ry="14" opacity=".6"/><ellipse cx="250" cy="41" rx="18" ry="10" opacity=".6"/><ellipse cx="260" cy="39" rx="12" ry="9" opacity=".5"/><ellipse cx="268" cy="43" rx="13" ry="9" opacity=".5"/><ellipse cx="277" cy="40" rx="12" ry="5" opacity=".6"/><ellipse cx="212" cy="40" rx="26" ry="18" opacity=".6"/><ellipse cx="247" cy="42" rx="10" ry="7" opacity=".5"/><ellipse cx="355" cy="42" rx="38" ry="4" opacity=".5"/><ellipse cx="380" cy="41" rx="19" ry="8" opacity=".6"/><ellipse cx="326" cy="42" rx="13" ry="11" opacity=".6"/><ellipse cx="390" cy="44" rx="13" ry="6" opacity=".5"/><ellipse cx="370" cy="44" rx="16" ry="9" opacity=".5"/><ellipse cx="366" cy="40" rx="16" ry="8" opacity=".5"/></g><rect y="48" width="400" height="21.5" fill="url(#sec8)"/><clipPath id="fc690200"><rect x="-60" y="69" width="520" height="217"/></clipPath><g clip-path="url(#fc690200)"><rect x="-60" y="69" width="520" height="217" fill="#cac4c2"/><path d="M170 69.0L-3000 167.6L-3000 169.3L170 69.0ZM170 69.0L-3000 171.0L-3000 172.8L170 69.0ZM170 69.0L-3000 174.7L-3000 176.6L170 69.0ZM170 69.0L-3000 178.6L-3000 180.7L170 69.0ZM170 69.0L-3000 182.8L-3000 185.1L170 69.0ZM170 69.0L-3000 187.4L-3000 189.9L170 69.0ZM170 69.0L-3000 192.4L-3000 195.0L170 69.0ZM170 69.0L-3000 197.8L-3000 200.7L170 69.0ZM170 69.0L-3000 203.7L-3000 206.8L170 69.0ZM170 69.0L-3000 210.1L-3000 213.6L170 69.0ZM170 69.0L-3000 217.3L-3000 221.1L170 69.0ZM170 69.0L-3000 225.1L-3000 229.4L170 69.0ZM170 69.0L-3000 233.9L-3000 238.6L170 69.0ZM170 69.0L-3000 243.6L-3000 249.0L170 69.0ZM170 69.0L-3000 254.7L-3000 260.7L170 69.0ZM170 69.0L-3000 267.2L-3000 274.1L170 69.0ZM170 69.0L-3000 281.5L-3000 289.4L170 69.0ZM170 69.0L-3000 298.0L-3000 307.3L170 69.0ZM170 69.0L-3000 317.3L-3000 328.3L170 69.0ZM170 69.0L-3000 340.2L-3000 353.3L170 69.0ZM170 69.0L-3000 367.8L-3000 383.7L170 69.0ZM170 69.0L-3000 401.5L-3000 421.4L170 69.0ZM170 69.0L-3000 443.9L-3000 469.4L170 69.0ZM170 69.0L-3000 498.6L-3000 532.4L170 69.0ZM170 69.0L-3000 572.0L-3000 619.1L170 69.0ZM170 69.0L-2740 626.0L-2440 626.0L170 69.0ZM170 69.0L-2140 626.0L-1840 626.0L170 69.0ZM170 69.0L-1540 626.0L-1240 626.0L170 69.0ZM170 69.0L-940 626.0L-640 626.0L170 69.0ZM170 69.0L-340 626.0L-40 626.0L170 69.0ZM170 69.0L260 626.0L560 626.0L170 69.0ZM170 69.0L860 626.0L1160 626.0L170 69.0ZM170 69.0L1460 626.0L1760 626.0L170 69.0ZM170 69.0L2060 626.0L2360 626.0L170 69.0ZM170 69.0L2660 626.0L2960 626.0L170 69.0ZM170 69.0L3000 579.1L3000 534.0L170 69.0ZM170 69.0L3000 496.2L3000 464.1L170 69.0ZM170 69.0L3000 436.4L3000 412.4L170 69.0ZM170 69.0L3000 391.4L3000 372.7L170 69.0ZM170 69.0L3000 356.1L3000 341.2L170 69.0ZM170 69.0L3000 327.8L3000 315.7L170 69.0ZM170 69.0L3000 304.6L3000 294.5L170 69.0ZM170 69.0L3000 285.2L3000 276.7L170 69.0ZM170 69.0L3000 268.8L3000 261.5L170 69.0ZM170 69.0L3000 254.7L3000 248.3L170 69.0ZM170 69.0L3000 242.4L3000 236.9L170 69.0ZM170 69.0L3000 231.7L3000 226.8L170 69.0ZM170 69.0L3000 222.2L3000 217.8L170 69.0ZM170 69.0L3000 213.7L3000 209.9L170 69.0ZM170 69.0L3000 206.2L3000 202.7L170 69.0ZM170 69.0L3000 199.4L3000 196.2L170 69.0ZM170 69.0L3000 193.2L3000 190.3L170 69.0ZM170 69.0L3000 187.6L3000 185.0L170 69.0ZM170 69.0L3000 182.5L3000 180.1L170 69.0ZM170 69.0L3000 177.8L3000 175.6L170 69.0ZM170 69.0L3000 173.5L3000 171.4L170 69.0ZM170 69.0L3000 169.5L3000 167.6L170 69.0ZM170 69.0L3000 165.8L3000 164.0L170 69.0ZM170 69.0L3000 162.3L3000 160.7L170 69.0ZM170 69.0L3000 159.1L3000 157.6L170 69.0ZM835 69.0L1801 626.0L421 626.0L835 69.0ZM835 69.0L-960 626.0L-2340 626.0L835 69.0ZM835 69.0L-3000 537.9L-3000 428.9L835 69.0ZM835 69.0L-3000 361.0L-3000 314.6L835 69.0ZM835 69.0L-3000 281.0L-3000 255.4L835 69.0ZM835 69.0L-3000 235.4L-3000 219.2L835 69.0ZM835 69.0L-3000 205.9L-3000 194.8L835 69.0ZM835 69.0L-3000 185.3L-3000 177.2L835 69.0ZM835 69.0L-3000 170.1L-3000 163.9L835 69.0ZM835 69.0L-3000 158.4L-3000 153.6L835 69.0ZM835 69.0L-3000 149.2L-3000 145.2L835 69.0ZM835 69.0L-3000 141.6L-3000 138.4L835 69.0ZM835 69.0L-3000 135.4L-3000 132.7L835 69.0ZM835 69.0L-3000 130.2L-3000 127.8L835 69.0ZM835 69.0L-3000 125.7L-3000 123.7L835 69.0ZM835 69.0L-3000 121.8L-3000 120.1L835 69.0ZM835 69.0L-3000 118.4L-3000 116.9L835 69.0ZM835 69.0L-3000 115.5L-3000 114.1L835 69.0ZM835 69.0L-3000 112.8L-3000 111.6L835 69.0ZM835 69.0L-3000 110.5L-3000 109.4L835 69.0ZM835 69.0L-3000 108.4L-3000 107.4L835 69.0ZM835 69.0L-3000 106.5L-3000 105.6L835 69.0ZM835 69.0L-3000 104.7L-3000 103.9L835 69.0ZM835 69.0L-3000 103.2L-3000 102.4L835 69.0ZM835 69.0L-3000 101.7L-3000 101.0L835 69.0ZM835 69.0L-3000 100.4L-3000 99.8L835 69.0ZM835 69.0L-3000 99.2L-3000 98.6L835 69.0ZM835 69.0L-3000 98.0L-3000 97.5L835 69.0ZM835 69.0L-3000 97.0L-3000 96.5L835 69.0ZM835 69.0L-3000 96.0L-3000 95.5L835 69.0ZM835 69.0L-3000 95.1L-3000 94.7L835 69.0Z" fill="#aca7a7" fill-rule="evenodd"/><path d="M170 69.0L-3000 167.6M170 69.0L-3000 169.3M170 69.0L-3000 171.0M170 69.0L-3000 172.8M170 69.0L-3000 174.7M170 69.0L-3000 176.6M170 69.0L-3000 178.6M170 69.0L-3000 180.7M170 69.0L-3000 182.8M170 69.0L-3000 185.1M170 69.0L-3000 187.4M170 69.0L-3000 189.9M170 69.0L-3000 192.4M170 69.0L-3000 195.0M170 69.0L-3000 197.8M170 69.0L-3000 200.7M170 69.0L-3000 203.7M170 69.0L-3000 206.8M170 69.0L-3000 210.1M170 69.0L-3000 213.6M170 69.0L-3000 217.3M170 69.0L-3000 221.1M170 69.0L-3000 225.1M170 69.0L-3000 229.4M170 69.0L-3000 233.9M170 69.0L-3000 238.6M170 69.0L-3000 243.6M170 69.0L-3000 249.0M170 69.0L-3000 254.7M170 69.0L-3000 260.7M170 69.0L-3000 267.2M170 69.0L-3000 274.1M170 69.0L-3000 281.5M170 69.0L-3000 289.4M170 69.0L-3000 298.0M170 69.0L-3000 307.3M170 69.0L-3000 317.3M170 69.0L-3000 328.3M170 69.0L-3000 340.2M170 69.0L-3000 353.3M170 69.0L-3000 367.8M170 69.0L-3000 383.7M170 69.0L-3000 401.5M170 69.0L-3000 421.4M170 69.0L-3000 443.9M170 69.0L-3000 469.4M170 69.0L-3000 498.6M170 69.0L-3000 532.4M170 69.0L-3000 572.0M170 69.0L-3000 619.1M170 69.0L-2740 626.0M170 69.0L-2440 626.0M170 69.0L-2140 626.0M170 69.0L-1840 626.0M170 69.0L-1540 626.0M170 69.0L-1240 626.0M170 69.0L-940 626.0M170 69.0L-640 626.0M170 69.0L-340 626.0M170 69.0L-40 626.0M170 69.0L260 626.0M170 69.0L560 626.0M170 69.0L860 626.0M170 69.0L1160 626.0M170 69.0L1460 626.0M170 69.0L1760 626.0M170 69.0L2060 626.0M170 69.0L2360 626.0M170 69.0L2660 626.0M170 69.0L2960 626.0M170 69.0L3000 579.1M170 69.0L3000 534.0M170 69.0L3000 496.2M170 69.0L3000 464.1M170 69.0L3000 436.4M170 69.0L3000 412.4M170 69.0L3000 391.4M170 69.0L3000 372.7M170 69.0L3000 356.1M170 69.0L3000 341.2M170 69.0L3000 327.8M170 69.0L3000 315.7M170 69.0L3000 304.6M170 69.0L3000 294.5M170 69.0L3000 285.2M170 69.0L3000 276.7M170 69.0L3000 268.8M170 69.0L3000 261.5M170 69.0L3000 254.7M170 69.0L3000 248.3M170 69.0L3000 242.4M170 69.0L3000 236.9M170 69.0L3000 231.7M170 69.0L3000 226.8M170 69.0L3000 222.2M170 69.0L3000 217.8M170 69.0L3000 213.7M170 69.0L3000 209.9M170 69.0L3000 206.2M170 69.0L3000 202.7M170 69.0L3000 199.4M170 69.0L3000 196.2M170 69.0L3000 193.2M170 69.0L3000 190.3M170 69.0L3000 187.6M170 69.0L3000 185.0M170 69.0L3000 182.5M170 69.0L3000 180.1M170 69.0L3000 177.8M170 69.0L3000 175.6M170 69.0L3000 173.5M170 69.0L3000 171.4M170 69.0L3000 169.5M170 69.0L3000 167.6M170 69.0L3000 165.8M170 69.0L3000 164.0M170 69.0L3000 162.3M170 69.0L3000 160.7M170 69.0L3000 159.1M170 69.0L3000 157.6M835 69.0L-960 626.0M835 69.0L-2340 626.0M835 69.0L-3000 537.9M835 69.0L-3000 428.9M835 69.0L-3000 361.0M835 69.0L-3000 314.6M835 69.0L-3000 281.0M835 69.0L-3000 255.4M835 69.0L-3000 235.4M835 69.0L-3000 219.2M835 69.0L-3000 205.9M835 69.0L-3000 194.8M835 69.0L-3000 185.3M835 69.0L-3000 177.2M835 69.0L-3000 170.1M835 69.0L-3000 163.9M835 69.0L-3000 158.4M835 69.0L-3000 153.6M835 69.0L-3000 149.2M835 69.0L-3000 145.2M835 69.0L-3000 141.6M835 69.0L-3000 138.4M835 69.0L-3000 135.4M835 69.0L-3000 132.7M835 69.0L-3000 130.2M835 69.0L-3000 127.8M835 69.0L-3000 125.7M835 69.0L-3000 123.7M835 69.0L-3000 121.8M835 69.0L-3000 120.1M835 69.0L-3000 118.4M835 69.0L-3000 116.9M835 69.0L-3000 115.5M835 69.0L-3000 114.1M835 69.0L-3000 112.8M835 69.0L-3000 111.6M835 69.0L-3000 110.5M835 69.0L-3000 109.4M835 69.0L-3000 108.4M835 69.0L-3000 107.4M835 69.0L-3000 106.5M835 69.0L-3000 105.6M835 69.0L-3000 104.7M835 69.0L-3000 103.9M835 69.0L-3000 103.2M835 69.0L-3000 102.4M835 69.0L-3000 101.7M835 69.0L-3000 101.0M835 69.0L-3000 100.4M835 69.0L-3000 99.8M835 69.0L-3000 99.2M835 69.0L-3000 98.6M835 69.0L-3000 98.0M835 69.0L-3000 97.5M835 69.0L-3000 97.0M835 69.0L-3000 96.5M835 69.0L-3000 96.0M835 69.0L-3000 95.5M835 69.0L-3000 95.1M835 69.0L-3000 94.7" stroke="#ececec" stroke-width="0.8" fill="none" opacity="0.9"/><linearGradient id="hzfc690200" x1="0" y1="0" x2="0" y2="1"><stop offset="0" stop-color="#cfcdd2"/><stop offset=".3" stop-color="#cfcdd2" stop-opacity=".85"/><stop offset=".65" stop-color="#cfcdd2" stop-opacity=".45"/><stop offset="1" stop-color="#cfcdd2" stop-opacity="0"/></linearGradient><rect x="-60" y="69" width="520" height="30" fill="url(#hzfc690200)"/></g><g transform="translate(142 50)">
<path d="M-20 48 L-36 62 L-52 95 L-66 118 L-70 124 L-62 124 L-50 104 L-36 84 L-20 72Z" fill="#211c20"/>
<path d="M30 48 L44 70 L62 100 L76 111 L72 117 L58 106 L40 84 L28 72Z" fill="#211c20"/>
<path d="M-18 44 L30 44 L31 80 L27 107 L-18 107 L-22 80Z" fill="#1c1d25"/>
<path d="M-6 46 L4 50 L26 92 L20 96 L-2 56Z" fill="#2e2a1c"/>
<circle cx="3" cy="57" r="2.6" fill="none" stroke="#8a8c9a" stroke-width=".6"/>
<path d="M-60 61 L-34 39 L-10 37 L-8 50 L-30 62 L-58 64Z" fill="#1a1c24" stroke="#5a5e6c" stroke-width=".5"/>
<path d="M-20 97 L28 97 L29 111 L-21 111Z" fill="#1e2230"/>
<path d="M-18 110 L2 110 L3 180 L-14 180Z M7 110 L29 110 L27 180 L10 180Z" fill="#1c1d25"/>
<path d="M-10 12 Q-11 42 2 50 Q16 42 17 12 Q14 6 3 6 Q-8 6 -10 12Z" fill="#262a36"/>
<path d="M-6 24 L12 24 L11 34 L-5 34Z" fill="#10121a"/>
<path d="M1 0 L4 14 L-2 14Z M-9 10 L-2 16 L-6 19Z M13 10 L7 19 L5 16Z M-15 24 L-8 22 L-8 27Z M20 24 L13 27 L13 22Z" fill="#3e4458"/>
</g></svg></div></div><div class="bd"></div></div><div class="cell" style="left:5px;top:689px"><div class="a menu"></div><div class="a tabs"></div><div class="a tb"></div><div class="a ptab"></div><svg class="a" style="left:2px;top:2px" width="14" height="14" viewBox="0 0 14 14"><circle cx="7" cy="7" r="6" fill="#1a1a1a" stroke="#9a9a9a" stroke-width=".7"/><path d="M4.2 4.3 L5.6 4 L5.6 8.8 Q6.6 9.6 7.6 8.8 L7.6 4.6 L9.1 4.2 L9.1 9.6 Q6.6 11 4.2 9.6Z" fill="#c8c8c8"/></svg><i style="left:21.5px;top:1.8px;font-size:3.8px;color:#c8c8c8;">File</i><i style="left:35.5px;top:1.8px;font-size:3.8px;color:#c8c8c8;">Edit</i><i style="left:51px;top:1.8px;font-size:3.8px;color:#c8c8c8;">Asset</i><i style="left:68px;top:1.8px;font-size:3.8px;color:#c8c8c8;">View</i><i style="left:84.5px;top:1.8px;font-size:3.8px;color:#c8c8c8;">Debug</i><i style="left:103.5px;top:1.8px;font-size:3.8px;color:#c8c8c8;">Window</i><i style="left:123px;top:1.8px;font-size:3.8px;color:#c8c8c8;">Tools</i><i style="left:140.5px;top:1.8px;font-size:3.8px;color:#c8c8c8;">Help</i><b style="left:564px;top:4px;width:4px;height:.6px;background:#aaa;"></b><div class="a" style="left:578px;top:2.2px;width:3.4px;height:3.2px;border:.6px solid #bbb"></div><i style="left:591.5px;top:1.3px;font-size:4.6px;color:#ddd;">✕</i><svg class="a" style="left:22.5px;top:10px" width="5" height="5" viewBox="0 0 5 5"><path d="M.5 2.5 L2.5 .6 L4.5 2.5 V4.5 H.5Z" fill="none" stroke="#666" stroke-width=".5"/></svg><svg class="a" style="left:33.5px;top:10.3px" width="5" height="4.5" viewBox="0 0 5 4.5"><path d="M2.5 .2 L4.8 4.3 H.2Z" fill="#d8a020"/></svg><i style="left:41px;top:10.8px;font-size:3.8px;color:#c0c0c0;">DefaultMap</i><b style="left:97px;top:8.5px;width:65px;height:8.5px;background:#1e1e1e;border-radius:1px 1px 0 0"></b><svg class="a" style="left:100px;top:9.5px" width="5" height="6" viewBox="0 0 5 6"><circle cx="2.5" cy="1.6" r="1.3" fill="#3a7ee0"/><path d="M.4 5.6 Q.4 3.2 2.5 3.2 Q4.6 3.2 4.6 5.6Z" fill="#3a7ee0"/></svg><i style="left:107px;top:10.8px;font-size:3.8px;color:#d0d0d0;">BP_Brute</i><i style="left:155.5px;top:10.3px;font-size:4.9px;">×</i><i style="left:552px;top:10.8px;font-size:3.6px;color:#8a8a8a;">Parent class: <u>Character</u></i><b style="left:5.5px;top:20px;width:5px;height:6px;background:#c8c8c8;border-radius:.5px"></b><b style="left:19.5px;top:20.5px;width:5px;height:5.5px;background:#a8a8a8;border-radius:.5px"></b><b style="left:35px;top:19.5px;width:6px;height:7px;background:#d8c020;border-radius:.5px"></b><b style="left:36.5px;top:21.5px;width:3px;height:3px;background:#58a030;"></b><i style="left:44px;top:22px;font-size:3.9px;">Compile</i><i style="left:62.5px;top:21.8px;font-size:4.2px;color:#888;">:</i><b style="left:71px;top:21.5px;width:3px;height:3.5px;background:#bbb;"></b><i style="left:76px;top:22px;font-size:3.9px;">Diff v</i><b style="left:100px;top:20.5px;width:4.5px;height:4.5px;border:.6px solid #ccc;border-radius:50%"></b><i style="left:106px;top:22px;font-size:3.9px;">Find</i><b style="left:121px;top:20.5px;width:5px;height:5px;background:#888;border-radius:1px"></b><i style="left:128.5px;top:22px;font-size:3.9px;">Hide Unrelated</i><i style="left:160px;top:21.8px;font-size:4.2px;color:#888;">:</i><b style="left:170.5px;top:20.5px;width:5px;height:5px;border:.7px solid #bbb;border-radius:50%"></b><i style="left:177.5px;top:22px;font-size:3.9px;">Class Settings</i><b style="left:211px;top:20.5px;width:5px;height:5px;background:#bbb;clip-path:polygon(0 100%,20% 100%,100% 20%,80% 0)"></b><i style="left:218.5px;top:22px;font-size:3.9px;">Class Defaults</i><b style="left:251.5px;top:20.5px;width:5px;height:5px;background:#aaa;clip-path:polygon(0 0,100% 60%,55% 65%,40% 100%)"></b><i style="left:259px;top:22px;font-size:3.9px;">Simulation</i><b style="left:288px;top:18.8px;width:35px;height:9.5px;background:#232323;border-radius:1px"></b><b style="left:292.3px;top:21px;width:.9px;height:5px;background:#ccc;"></b><b style="left:294.3px;top:21px;width:.9px;height:5px;background:#ccc;"></b><b style="left:300.5px;top:21px;width:2.6px;height:4.6px;background:#5a6a5a;clip-path:polygon(0 0,100% 50%,0 100%)"></b><b style="left:309.5px;top:21px;width:4.4px;height:4.6px;background:#e02828;"></b><b style="left:318.5px;top:21px;width:.6px;height:5px;background:#555;"></b><b style="left:329px;top:19.5px;width:54px;height:7px;background:#0c0c0c;border-radius:1px"></b><i style="left:331px;top:22px;font-size:3.7px;">No debug object selected v</i><b style="left:388px;top:21px;width:3.5px;height:4px;background:#777;"></b><div class="a sb"></div><b style="left:3px;top:320.5px;width:3px;height:3.5px;background:#999;"></b><i style="left:8px;top:320.7px;font-size:3.7px;color:#aaa;">Content Drawer</i><b style="left:44px;top:320.5px;width:3px;height:3.5px;background:#bbb;"></b><i style="left:50px;top:320.7px;font-size:3.7px;color:#aaa;">Output Log</i><b style="left:78px;top:320.7px;width:4px;height:3.2px;border:.5px solid #999"></b><i style="left:84px;top:320.7px;font-size:3.7px;color:#aaa;">Cmd v</i><b style="left:103px;top:319.5px;width:93px;height:5.5px;background:#0c0c0c;border-radius:1px"></b><i style="left:105.5px;top:320.6px;font-size:3.5px;color:#555;">Enter Console Command</i><b style="left:518px;top:320.5px;width:3px;height:3.6px;background:#aaa;"></b><i style="left:524px;top:320.7px;font-size:3.7px;color:#aaa;">All Saved</i><b style="left:553px;top:320.5px;width:2.5px;height:3.8px;background:#aaa;"></b><i style="left:558px;top:320.7px;font-size:3.7px;color:#aaa;">Revision Control v</i><div class="a task"></div><b style="left:3.3px;top:329.5px;width:1.9px;height:1.9px;background:#fff;"></b><b style="left:5.6px;top:329.5px;width:1.9px;height:1.9px;background:#fff;"></b><b style="left:3.3px;top:331.8px;width:1.9px;height:1.9px;background:#fff;"></b><b style="left:5.6px;top:331.8px;width:1.9px;height:1.9px;background:#fff;"></b><b style="left:15.5px;top:329.5px;width:4.5px;height:4px;background:#c040e0;border-radius:1px;transform:skewX(-10deg)"></b><b style="left:27px;top:329.8px;width:4.8px;height:3.6px;background:#e8c040;border-radius:.4px"></b><div class="a" style="left:38.6px;top:329.2px;width:4.4px;height:4.4px;border-radius:50%;background:conic-gradient(#e33 0 33%,#fc3 0 66%,#3a5 0)"></div><b style="left:48.5px;top:327.5px;width:8.5px;height:8.5px;background:#3a3d44;"></b><b style="left:50.5px;top:329.3px;width:4.5px;height:4.5px;border:.6px solid #aaa;border-radius:50%"></b><b style="left:61.5px;top:329.4px;width:4.2px;height:4.2px;border:.6px solid #888;border-radius:50%"></b><i style="left:535px;top:329.4px;font-size:4.1px;">^</i><b style="left:542.5px;top:329.2px;width:1.6px;height:4.2px;background:#ddd;border-radius:1px"></b><b style="left:549px;top:329.6px;width:3.8px;height:3px;border:.5px solid #ccc"></b><b style="left:555.5px;top:330px;width:2px;height:2.5px;background:#ccc;clip-path:polygon(0 30%,40% 30%,100% 0,100% 100%,40% 70%,0 70%)"></b><i style="left:561px;top:329.9px;font-size:3px;color:#ccc;">ENG</i><i style="left:575px;top:328px;font-size:3.5px;color:rgba(230,230,230,.55);">Udemy</i><b style="left:588.5px;top:329.4px;width:4.5px;height:3.6px;background:#e8e8e8;border-radius:.3px"></b><div class="a lp"></div><b style="left:1px;top:31px;width:50px;height:9px;background:#1a1a1a;border-radius:1px 1px 0 0"></b><b style="left:3px;top:33px;width:3px;height:3.5px;border:.5px solid #aaa"></b><i style="left:8.5px;top:33.6px;font-size:3.8px;color:#c0c0c0;">Components</i><i style="left:44.5px;top:32.9px;font-size:4.6px;color:#aaa;">×</i><b style="left:7px;top:41px;width:17px;height:6px;background:#2a2a2a;border-radius:1px"></b><b style="left:9px;top:42.5px;width:1px;height:3px;background:#50c050;"></b><b style="left:8px;top:43.5px;width:3px;height:1px;background:#50c050;"></b><i style="left:12.5px;top:42.4px;font-size:3.8px;color:#ccc;">Add</i><div class="srch" style="left:27px;top:41px;width:61px;height:6px"></div><svg class="a" style="left:29px;top:42px" width="4" height="4" viewBox="0 0 4 4"><circle cx="1.6" cy="1.6" r="1.15" fill="none" stroke="#aaa" stroke-width=".55"/><path d="M2.4 2.4L3.6 3.6" stroke="#aaa" stroke-width=".6"/></svg><i style="left:35px;top:42.6px;font-size:3.5px;color:#444;">Search</i><b style="left:5.9px;top:53.6px;width:2.6px;height:3.6px;background:#999;border-radius:.6px"></b><i style="left:10.4px;top:53.2px;font-size:3.8px;color:#b8b8b8;letter-spacing:-.05px">BP_Brute (Self)</i><b style="left:14.1px;top:61.1px;width:2.6px;height:3.6px;background:#999;border-radius:.6px"></b><i style="left:18.6px;top:60.7px;font-size:3.8px;color:#b8b8b8;letter-spacing:-.05px">Capsule Component (CollisionCylinder)</i><b style="left:17.3px;top:68.7px;width:2.6px;height:3.6px;background:#999;border-radius:.6px"></b><i style="left:21.8px;top:68.3px;font-size:3.8px;color:#b8b8b8;letter-spacing:-.05px">Arrow Component (Arrow) <u>Edit in C++</u></i><b style="left:17.3px;top:76.2px;width:2.6px;height:3.6px;background:#999;border-radius:.6px"></b><i style="left:21.8px;top:75.8px;font-size:3.8px;color:#b8b8b8;letter-spacing:-.05px">CameraBoom</i><b style="left:20.3px;top:83.8px;width:2.6px;height:3.6px;background:#999;border-radius:.6px"></b><i style="left:24.8px;top:83.4px;font-size:3.8px;color:#b8b8b8;letter-spacing:-.05px">FollowCamera</i><b style="left:17.3px;top:91.3px;width:2.6px;height:3.6px;background:#999;border-radius:.6px"></b><i style="left:21.8px;top:90.9px;font-size:3.8px;color:#b8b8b8;letter-spacing:-.05px">Mesh (CharacterMesh0)  <u>Edit in C++</u></i><b style="left:3px;top:100.4px;width:87px;height:7px;background:#24508a;"></b><b style="left:14.1px;top:102.2px;width:2.6px;height:3.6px;background:#999;border-radius:.6px"></b><i style="left:18.6px;top:101.8px;font-size:3.8px;color:#e8eef8;letter-spacing:-.05px">Character Movement (CharMoveComp)</i><b style="left:8px;top:97.3px;width:82px;height:.5px;background:#333;"></b><b style="left:1px;top:118px;width:50px;height:8.5px;background:#1a1a1a;border-radius:1px 1px 0 0"></b><b style="left:3px;top:120px;width:3px;height:3.5px;background:#888;"></b><i style="left:9px;top:120.4px;font-size:3.8px;color:#c0c0c0;">My Blueprint</i><i style="left:44.5px;top:119.6px;font-size:4.6px;color:#aaa;">×</i><b style="left:1px;top:126.5px;width:90px;height:.5px;background:#0e0e0e;"></b><b style="left:6px;top:128px;width:18px;height:5.5px;background:#262626;border-radius:1px"></b><b style="left:9px;top:129.3px;width:1px;height:3px;background:#50c050;"></b><b style="left:8px;top:130.3px;width:3px;height:1px;background:#50c050;"></b><i style="left:12.5px;top:129.4px;font-size:3.8px;color:#ccc;">Add</i><div class="srch" style="left:26px;top:128px;width:54px;height:5.5px"></div><svg class="a" style="left:28px;top:128.8px" width="4" height="4" viewBox="0 0 4 4"><circle cx="1.6" cy="1.6" r="1.15" fill="none" stroke="#aaa" stroke-width=".55"/><path d="M2.4 2.4L3.6 3.6" stroke="#aaa" stroke-width=".6"/></svg><b style="left:83.6px;top:128.6px;width:3.6px;height:3.6px;border:.6px solid #aaa;border-radius:50%"></b><div class="hdr" style="top:137.29999999999998px"></div><i style="left:7px;top:139.2px;font-size:3.2px;color:#c8c8c8;font-weight:bold;">GRAPHS</i><i style="left:2.8px;top:139.2px;font-size:3.2px;color:#888;">v</i><b style="left:83.6px;top:138.7px;width:3.8px;height:3.8px;border:.6px solid #999;border-radius:50%"></b><b style="left:7px;top:147.8px;width:3px;height:2.6px;background:#aaa;"></b><i style="left:12.5px;top:147.9px;font-size:3.6px;">EventGraph</i><b style="left:10.5px;top:155.8px;width:2.8px;height:2.8px;border:.6px solid #ccc;border-radius:50%"></b><i style="left:15.5px;top:156px;font-size:3.6px;color:#b8b8b8;">Event BeginPlay</i><b style="left:10.5px;top:163.5px;width:2.8px;height:2.8px;border:.6px solid #ccc;border-radius:50%"></b><i style="left:15.5px;top:163.7px;font-size:3.6px;color:#b8b8b8;">EnhancedInputAction IA_Move</i><b style="left:10.5px;top:171.2px;width:2.8px;height:2.8px;border:.6px solid #ccc;border-radius:50%"></b><i style="left:15.5px;top:171.4px;font-size:3.6px;color:#b8b8b8;">EnhancedInputAction IA_Look</i><div class="hdr" style="top:178.69999999999996px"></div><i style="left:7px;top:180.6px;font-size:3.2px;color:#c8c8c8;font-weight:bold;">FUNCTIONS <span style='color:#666;font-weight:normal'>(14 OVERRIDABLE)</span></i><i style="left:2.8px;top:180.6px;font-size:3.2px;color:#888;">v</i><b style="left:57px;top:179.4px;width:22px;height:5.2px;background:#0e0e0e;border-radius:1px"></b><i style="left:59px;top:180.8px;font-size:3.2px;">Override v</i><b style="left:83.6px;top:180.1px;width:3.8px;height:3.8px;border:.6px solid #999;border-radius:50%"></b><i style="left:9px;top:189.7px;font-size:3.7px;color:#aaa;">ƒ</i><i style="left:13px;top:189.9px;font-size:3.6px;">Construction Script</i><div class="hdr" style="top:196.29999999999998px"></div><i style="left:7px;top:198.2px;font-size:3.2px;color:#c8c8c8;font-weight:bold;">MACROS</i><i style="left:2.8px;top:198.2px;font-size:3.2px;color:#888;">v</i><b style="left:83.6px;top:197.7px;width:3.8px;height:3.8px;border:.6px solid #999;border-radius:50%"></b><div class="hdr" style="top:205.6px"></div><i style="left:7px;top:207.5px;font-size:3.2px;color:#c8c8c8;font-weight:bold;">VARIABLES</i><i style="left:2.8px;top:207.5px;font-size:3.2px;color:#888;">v</i><b style="left:83.6px;top:207px;width:3.8px;height:3.8px;border:.6px solid #999;border-radius:50%"></b><i style="left:3px;top:215.1px;font-size:3.2px;color:#888;">v</i><i style="left:6px;top:215.2px;font-size:3.5px;color:#c8c8c8;font-weight:bold;">Components</i><i style="left:10px;top:221.2px;font-size:3.5px;color:#a8a8a8;">FollowCamera</i><b style="left:58px;top:221.9px;width:3.4px;height:1.8px;background:#30a0e0;border-radius:1px"></b><i style="left:10px;top:227.4px;font-size:3.5px;color:#a8a8a8;">CameraBoom</i><b style="left:58px;top:228.1px;width:3.4px;height:1.8px;background:#30a0e0;border-radius:1px"></b><div class="hdr" style="top:233.19999999999996px"></div><i style="left:7px;top:235.1px;font-size:3.2px;color:#c8c8c8;font-weight:bold;">EVENT DISPATCHERS</i><i style="left:2.8px;top:235.1px;font-size:3.2px;color:#888;">v</i><b style="left:83.6px;top:234.6px;width:3.8px;height:3.8px;border:.6px solid #999;border-radius:50%"></b><b style="left:91px;top:31px;width:49px;height:9px;background:#1e1e1e;border-radius:1px 1px 0 0"></b><b style="left:93.5px;top:33.2px;width:3.5px;height:3px;background:#999;"></b><i style="left:99px;top:33.6px;font-size:3.8px;color:#d0d0d0;">Viewport</i><i style="left:135.5px;top:32.9px;font-size:4.6px;color:#aaa;">×</i><i style="left:145px;top:33.2px;font-size:3.9px;color:#aaa;">ƒ</i><i style="left:150.5px;top:33.6px;font-size:3.8px;color:#a8a8a8;">Construction Scr...</i><b style="left:194px;top:33.2px;width:3.4px;height:3.4px;border:.5px dashed #bbb"></b><i style="left:199.5px;top:33.6px;font-size:3.8px;color:#a8a8a8;">EventGraph</i><b style="left:450px;top:31px;width:50px;height:9px;background:#1c1c1c;border-radius:1px 1px 0 0"></b><b style="left:452.5px;top:33px;width:3px;height:3.6px;background:#ccc;clip-path:polygon(0 100%,25% 100%,100% 25%,75% 0)"></b><i style="left:458.5px;top:33.6px;font-size:3.8px;color:#c8c8c8;">Details</i><i style="left:492.5px;top:32.9px;font-size:4.6px;color:#aaa;">×</i><b style="left:92px;top:40px;width:357px;height:11px;background:#151515;"></b><b style="left:95px;top:42px;width:9px;height:7px;background:#2a2a2a;border-radius:1px"></b><b style="left:96.5px;top:43px;width:4px;height:4.5px;background:#bbb;border-radius:50%"></b><b style="left:106px;top:42.2px;width:3px;height:5px;background:#3aa0e0;clip-path:polygon(0 0,100% 65%,50% 65%,40% 100%)"></b><b style="left:112px;top:44.5px;width:5px;height:1px;background:#ccc;"></b><b style="left:114px;top:42.5px;width:1px;height:5px;background:#ccc;"></b><b style="left:119.5px;top:42.6px;width:4.5px;height:4.5px;border:.6px solid #bbb;border-radius:50%"></b><b style="left:127px;top:42.6px;width:4.5px;height:4.5px;border:.6px solid #bbb"></b><b style="left:141px;top:42.6px;width:4px;height:4.5px;background:#777;clip-path:polygon(50% 0,100% 100%,0 100%)"></b><b style="left:158px;top:42px;width:10px;height:7px;background:#262626;border-radius:1px"></b><b style="left:160px;top:42.8px;width:4.6px;height:4.6px;border:.7px solid #ccc;border-radius:50%"></b><b style="left:174px;top:42.5px;width:5px;height:5px;background:#bbb;clip-path:polygon(0 80%,80% 0,100% 20%,20% 100%)"></b><i style="left:180px;top:42.5px;font-size:3.5px;color:#aaa;">9</i><b style="left:189px;top:42.5px;width:5px;height:5px;background:#2a8ab8;"></b><i style="left:196px;top:42.5px;font-size:3.5px;color:#aaa;">10</i><b style="left:206px;top:42.5px;width:5px;height:5px;border:.7px solid #2a9ad0;border-radius:50%"></b><i style="left:213px;top:42.5px;font-size:3.5px;color:#aaa;">10°</i><b style="left:228px;top:42.5px;width:4px;height:5.5px;border-left:.8px solid #2a9ad0;border-bottom:.8px solid #2a9ad0"></b><i style="left:237px;top:42.5px;font-size:3.5px;color:#aaa;">0.25</i><b style="left:343px;top:42px;width:32px;height:7px;background:#1e1e1e;"></b><b style="left:345px;top:43.5px;width:4px;height:3.5px;background:#ccc;"></b><i style="left:350px;top:42.7px;font-size:3.5px;">Perspective v</i><b style="left:380px;top:43px;width:4px;height:4px;background:#999;"></b><i style="left:386px;top:42.7px;font-size:3.5px;color:#aaa;">1 v</i><b style="left:400px;top:42px;width:16px;height:7px;background:#1e1e1e;"></b><b style="left:401.5px;top:43px;width:4.5px;height:4.5px;background:#aaa;border-radius:50%"></b><i style="left:407px;top:42.7px;font-size:3.5px;color:#aaa;">Lit v</i><i style="left:423px;top:42.7px;font-size:3.5px;color:#aaa;">⊞ v</i><i style="left:437px;top:42.7px;font-size:3.5px;color:#aaa;">✓ v</i><b style="left:92px;top:51px;width:357px;height:267px;background:#2d2d2d;"></b><svg class="a" style="left:92px;top:280px" width="357" height="38"><path d="M190 38 L207 8 M260 8 L357 30 M0 30 L60 18" stroke="#3a3a3a" stroke-width=".5"/><path d="M8 37 L8 24" stroke="#3a6ad0" stroke-width=".6"/><path d="M8 37 L16 33" stroke="#40a040" stroke-width=".6"/><path d="M8 37 L20 37" stroke="#c04040" stroke-width=".5" opacity=".6"/></svg><div class="a dp"></div><div class="srch" style="left:453px;top:42.5px;width:128px;height:5.5px"></div><i style="left:455px;top:43px;font-size:3.7px;color:#ccc;">✕</i><i style="left:461px;top:43.5px;font-size:3.6px;">rotation</i><b style="left:585.5px;top:43px;width:3.4px;height:3.6px;background:#888;"></b><b style="left:592.5px;top:43px;width:3.8px;height:3.8px;border:.6px solid #888;border-radius:50%"></b><b style="left:450px;top:51px;width:149px;height:.6px;background:#2a4a6a;"></b><b style="left:450px;top:51.5px;width:149px;height:5.6px;background:#2a2a2a;"></b><b style="left:450px;top:57.5px;width:149px;height:8.6px;background:#1f1f1f;"></b><b style="left:514px;top:60.3px;width:3.4px;height:3.4px;background:#0d0d0d;"></b><b style="left:450px;top:66.5px;width:149px;height:8.1px;background:#2a2a2a;"></b><b style="left:450px;top:75px;width:149px;height:7.6px;background:#1f1f1f;"></b><b style="left:450px;top:83px;width:149px;height:8.1px;background:#1f1f1f;"></b><b style="left:514px;top:85.2px;width:37px;height:4.2px;background:#0d0d0d;"></b><i style="left:515.5px;top:85.6px;font-size:3px;">0.0</i><b style="left:450px;top:91.5px;width:149px;height:8.1px;background:#1f1f1f;"></b><b style="left:514px;top:93.8px;width:37px;height:4.2px;background:#0d0d0d;"></b><i style="left:515.5px;top:94.1px;font-size:3px;">0.0</i><b style="left:450px;top:100px;width:149px;height:7.6px;background:#2a2a2a;"></b><b style="left:450px;top:108px;width:149px;height:8.6px;background:#1f1f1f;"></b><b style="left:514px;top:110.5px;width:16.5px;height:4.2px;background:#0d0d0d;"></b><i style="left:515.5px;top:110.9px;font-size:3px;">0.0°</i><b style="left:532px;top:110.5px;width:16.5px;height:4.2px;background:#0d0d0d;"></b><i style="left:533.5px;top:110.9px;font-size:3px;">0.0°</i><b style="left:551px;top:110.5px;width:16.5px;height:4.2px;background:#0d0d0d;"></b><i style="left:552.5px;top:110.9px;font-size:3px;">0.0°</i><b style="left:450px;top:117px;width:149px;height:8.1px;background:#1f1f1f;"></b><b style="left:514px;top:119.5px;width:3.4px;height:3.4px;background:#0d0d0d;"></b><b style="left:450px;top:125.5px;width:149px;height:8.1px;background:#1f1f1f;"></b><b style="left:514px;top:128.1px;width:3.4px;height:3.4px;background:#0d0d0d;"></b><i style="left:514.3px;top:128px;font-size:3.5px;color:#4a9ae0;">✓</i><b style="left:450px;top:134px;width:149px;height:7.6px;background:#2a2a2a;"></b><b style="left:450px;top:142px;width:149px;height:8.6px;background:#1f1f1f;"></b><b style="left:514px;top:144.8px;width:3.4px;height:3.4px;background:#0d0d0d;"></b><b style="left:450px;top:151px;width:149px;height:.6px;background:#2a4a6a;"></b><div class="a" style="left:0;top:0;width:600px;height:337px;z-index:4"><b style="left:100px;top:52px;width:401px;height:10px;background:#1c1c1c;"></b><i style="left:241.5px;top:54.6px;font-size:3.7px;color:#b8b8b8;">BruteRPG Preview [NetMode: Standalone 0]  (64-bit/PC D3D SM5)</i><b style="left:103px;top:55.5px;width:3.5px;height:3.5px;background:#888;border-radius:.5px"></b><b style="left:473.5px;top:57px;width:3px;height:.5px;background:#ccc;"></b><b style="left:486px;top:55.3px;width:2.8px;height:2.8px;border:.5px solid #ccc"></b><i style="left:494.5px;top:54.4px;font-size:3.9px;color:#ddd;">✕</i><div class="a" style="left:100px;top:62px;width:401px;height:226px;overflow:hidden"><svg class="a" width="400" height="226" viewBox="0 0 400 226" style="left:0;top:0;overflow:hidden"><defs><filter id="cbc9" x="-50%" y="-50%" width="200%" height="200%"><feGaussianBlur stdDeviation="1.6"/></filter>
<linearGradient id="skc9" x1="0" y1="0" x2="0" y2="1"><stop offset="0" stop-color="#5a82b6"/><stop offset=".6" stop-color="#5a82b6" stop-opacity=".0"/></linearGradient>
<linearGradient id="sbc9" x1="0" y1="0" x2="0" y2="1"><stop offset="0" stop-color="#7a9ccc"/><stop offset=".55" stop-color="#90acd4"/><stop offset="1" stop-color="#a8bcd6"/></linearGradient>
<linearGradient id="sec9" x1="0" y1="0" x2="0" y2="1"><stop offset="0" stop-color="#90acd0"/><stop offset=".35" stop-color="#2e5c9c"/><stop offset="1" stop-color="#2e5c9c"/></linearGradient>
<filter id="shc9"><feGaussianBlur stdDeviation=".8"/></filter></defs><rect width="400" height="61" fill="url(#sbc9)"/><rect width="400" height="61" fill="url(#skc9)"/><g filter="url(#cbc9)" fill="#eaf0f6"><ellipse cx="35" cy="6" rx="29" ry="5" opacity=".6"/><ellipse cx="33" cy="5" rx="7" ry="5" opacity=".6"/><ellipse cx="35" cy="9" rx="6" ry="4" opacity=".7"/><ellipse cx="9" cy="5" rx="12" ry="8" opacity=".7"/><ellipse cx="16" cy="4" rx="7" ry="4" opacity=".7"/><ellipse cx="120" cy="9" rx="25" ry="5" opacity=".6"/><ellipse cx="124" cy="11" rx="8" ry="6" opacity=".6"/><ellipse cx="110" cy="10" rx="11" ry="6" opacity=".6"/><ellipse cx="109" cy="7" rx="7" ry="5" opacity=".6"/><ellipse cx="138" cy="12" rx="5" ry="3" opacity=".7"/><ellipse cx="220" cy="7" rx="34" ry="5" opacity=".7"/><ellipse cx="190" cy="6" rx="17" ry="8" opacity=".8"/><ellipse cx="196" cy="8" rx="16" ry="9" opacity=".6"/><ellipse cx="193" cy="7" rx="7" ry="3" opacity=".7"/><ellipse cx="247" cy="6" rx="11" ry="7" opacity=".7"/><ellipse cx="225" cy="4" rx="13" ry="10" opacity=".7"/><ellipse cx="345" cy="10" rx="46" ry="6" opacity=".7"/><ellipse cx="350" cy="11" rx="11" ry="6" opacity=".8"/><ellipse cx="389" cy="6" rx="20" ry="15" opacity=".7"/><ellipse cx="355" cy="6" rx="14" ry="10" opacity=".8"/><ellipse cx="369" cy="6" rx="14" ry="11" opacity=".8"/><ellipse cx="341" cy="9" rx="24" ry="16" opacity=".6"/><ellipse cx="371" cy="8" rx="16" ry="8" opacity=".7"/><ellipse cx="330" cy="6" rx="18" ry="9" opacity=".8"/><ellipse cx="303" cy="13" rx="21" ry="13" opacity=".8"/><ellipse cx="70" cy="24" rx="42" ry="5" opacity=".5"/><ellipse cx="50" cy="26" rx="14" ry="7" opacity=".6"/><ellipse cx="62" cy="23" rx="20" ry="12" opacity=".6"/><ellipse cx="44" cy="26" rx="12" ry="5" opacity=".6"/><ellipse cx="44" cy="27" rx="22" ry="14" opacity=".5"/><ellipse cx="35" cy="22" rx="13" ry="9" opacity=".6"/><ellipse cx="58" cy="21" rx="16" ry="8" opacity=".5"/><ellipse cx="195" cy="22" rx="38" ry="5" opacity=".6"/><ellipse cx="199" cy="23" rx="8" ry="5" opacity=".7"/><ellipse cx="214" cy="21" rx="18" ry="9" opacity=".7"/><ellipse cx="215" cy="25" rx="13" ry="6" opacity=".5"/><ellipse cx="197" cy="20" rx="15" ry="7" opacity=".7"/><ellipse cx="175" cy="18" rx="9" ry="6" opacity=".6"/><ellipse cx="310" cy="26" rx="42" ry="5" opacity=".5"/><ellipse cx="301" cy="24" rx="15" ry="12" opacity=".6"/><ellipse cx="345" cy="23" rx="22" ry="17" opacity=".6"/><ellipse cx="312" cy="26" rx="21" ry="10" opacity=".6"/><ellipse cx="313" cy="25" rx="18" ry="13" opacity=".5"/><ellipse cx="326" cy="26" rx="15" ry="10" opacity=".5"/><ellipse cx="318" cy="25" rx="20" ry="11" opacity=".6"/><ellipse cx="40" cy="36" rx="34" ry="5" opacity=".6"/><ellipse cx="55" cy="37" rx="16" ry="8" opacity=".6"/><ellipse cx="47" cy="37" rx="11" ry="5" opacity=".6"/><ellipse cx="47" cy="34" rx="7" ry="4" opacity=".6"/><ellipse cx="42" cy="33" rx="15" ry="9" opacity=".7"/><ellipse cx="150" cy="37" rx="42" ry="4" opacity=".6"/><ellipse cx="111" cy="40" rx="16" ry="13" opacity=".8"/><ellipse cx="177" cy="35" rx="13" ry="7" opacity=".7"/><ellipse cx="125" cy="35" rx="10" ry="5" opacity=".7"/><ellipse cx="188" cy="36" rx="18" ry="11" opacity=".7"/><ellipse cx="140" cy="38" rx="11" ry="6" opacity=".7"/><ellipse cx="275" cy="36" rx="46" ry="5" opacity=".6"/><ellipse cx="248" cy="36" rx="23" ry="11" opacity=".5"/><ellipse cx="301" cy="33" rx="13" ry="10" opacity=".6"/><ellipse cx="250" cy="33" rx="13" ry="7" opacity=".7"/><ellipse cx="317" cy="38" rx="23" ry="18" opacity=".7"/><ellipse cx="312" cy="39" rx="10" ry="6" opacity=".6"/><ellipse cx="284" cy="36" rx="14" ry="10" opacity=".6"/><ellipse cx="370" cy="36" rx="25" ry="5" opacity=".6"/><ellipse cx="356" cy="34" rx="9" ry="6" opacity=".6"/><ellipse cx="367" cy="34" rx="8" ry="5" opacity=".6"/><ellipse cx="372" cy="34" rx="11" ry="7" opacity=".6"/></g><rect y="43" width="400" height="18.5" fill="url(#sec9)"/><clipPath id="fc610204"><rect x="-60" y="61" width="520" height="225"/></clipPath><g clip-path="url(#fc610204)"><rect x="-60" y="61" width="520" height="225" fill="#d0ccd0"/><path d="M204 61.0L-3000 168.7L-3000 170.6L204 61.0ZM204 61.0L-3000 172.5L-3000 174.4L204 61.0ZM204 61.0L-3000 176.5L-3000 178.6L204 61.0ZM204 61.0L-3000 180.8L-3000 183.1L204 61.0ZM204 61.0L-3000 185.5L-3000 187.9L204 61.0ZM204 61.0L-3000 190.5L-3000 193.2L204 61.0ZM204 61.0L-3000 195.9L-3000 198.8L204 61.0ZM204 61.0L-3000 201.9L-3000 205.0L204 61.0ZM204 61.0L-3000 208.3L-3000 211.8L204 61.0ZM204 61.0L-3000 215.4L-3000 219.3L204 61.0ZM204 61.0L-3000 223.3L-3000 227.5L204 61.0ZM204 61.0L-3000 231.9L-3000 236.6L204 61.0ZM204 61.0L-3000 241.6L-3000 246.8L204 61.0ZM204 61.0L-3000 252.3L-3000 258.2L204 61.0ZM204 61.0L-3000 264.5L-3000 271.2L204 61.0ZM204 61.0L-3000 278.3L-3000 285.9L204 61.0ZM204 61.0L-3000 294.1L-3000 302.9L204 61.0ZM204 61.0L-3000 312.4L-3000 322.7L204 61.0ZM204 61.0L-3000 333.8L-3000 345.9L204 61.0ZM204 61.0L-3000 359.2L-3000 373.7L204 61.0ZM204 61.0L-3000 389.8L-3000 407.6L204 61.0ZM204 61.0L-3000 427.4L-3000 449.6L204 61.0ZM204 61.0L-3000 474.7L-3000 503.2L204 61.0ZM204 61.0L-3000 536.0L-3000 574.1L204 61.0ZM204 61.0L-3000 618.7L-2759 626.0L204 61.0ZM204 61.0L-2477 626.0L-2194 626.0L204 61.0ZM204 61.0L-1912 626.0L-1629 626.0L204 61.0ZM204 61.0L-1347 626.0L-1064 626.0L204 61.0ZM204 61.0L-782 626.0L-499 626.0L204 61.0ZM204 61.0L-217 626.0L66 626.0L204 61.0ZM204 61.0L348 626.0L631 626.0L204 61.0ZM204 61.0L913 626.0L1196 626.0L204 61.0ZM204 61.0L1478 626.0L1761 626.0L204 61.0ZM204 61.0L2043 626.0L2326 626.0L204 61.0ZM204 61.0L2608 626.0L2891 626.0L204 61.0ZM204 61.0L3000 593.1L3000 546.8L204 61.0ZM204 61.0L3000 508.0L3000 474.9L204 61.0ZM204 61.0L3000 446.4L3000 421.5L204 61.0ZM204 61.0L3000 399.7L3000 380.4L204 61.0ZM204 61.0L3000 363.1L3000 347.6L204 61.0ZM204 61.0L3000 333.6L3000 321.0L204 61.0ZM204 61.0L3000 309.4L3000 298.9L204 61.0ZM204 61.0L3000 289.2L3000 280.2L204 61.0ZM204 61.0L3000 271.9L3000 264.3L204 61.0ZM204 61.0L3000 257.1L3000 250.5L204 61.0ZM204 61.0L3000 244.3L3000 238.5L204 61.0ZM204 61.0L3000 233.0L3000 227.9L204 61.0ZM204 61.0L3000 223.0L3000 218.5L204 61.0ZM204 61.0L3000 214.2L3000 210.1L204 61.0ZM204 61.0L3000 206.2L3000 202.5L204 61.0ZM204 61.0L3000 199.0L3000 195.7L204 61.0ZM204 61.0L3000 192.5L3000 189.5L204 61.0ZM204 61.0L3000 186.6L3000 183.9L204 61.0ZM204 61.0L3000 181.2L3000 178.7L204 61.0ZM204 61.0L3000 176.3L3000 173.9L204 61.0ZM204 61.0L3000 171.7L3000 169.6L204 61.0ZM204 61.0L3000 167.5L3000 165.5L204 61.0ZM204 61.0L3000 163.6L3000 161.7L204 61.0ZM204 61.0L3000 160.0L3000 158.2L204 61.0ZM204 61.0L3000 156.6L3000 155.0L204 61.0ZM-3000 198.2L3000 198.2L3000 158.1L-3000 158.1ZM-3000 136.1L3000 136.1L3000 122.3L-3000 122.3ZM-3000 112.7L3000 112.7L3000 105.7L-3000 105.7ZM-3000 100.4L3000 100.4L3000 96.2L-3000 96.2ZM-3000 92.9L3000 92.9L3000 90.1L-3000 90.1ZM-3000 87.7L3000 87.7L3000 85.7L-3000 85.7ZM-3000 84.0L3000 84.0L3000 82.5L-3000 82.5ZM-3000 81.2L3000 81.2L3000 80.1L-3000 80.1ZM-3000 79.0L3000 79.0L3000 78.1L-3000 78.1ZM-3000 77.3L3000 77.3L3000 76.5L-3000 76.5ZM-3000 75.8L3000 75.8L3000 75.2L-3000 75.2ZM-3000 74.6L3000 74.6L3000 74.1L-3000 74.1ZM-3000 73.6L3000 73.6L3000 73.1L-3000 73.1ZM-3000 72.7L3000 72.7L3000 72.3L-3000 72.3ZM-3000 71.9L3000 71.9L3000 71.6L-3000 71.6ZM-3000 71.2L3000 71.2L3000 70.9L-3000 70.9ZM-3000 70.6L3000 70.6L3000 70.4L-3000 70.4ZM-3000 70.1L3000 70.1L3000 69.9L-3000 69.9ZM-3000 69.6L3000 69.6L3000 69.4L-3000 69.4ZM-3000 69.2L3000 69.2L3000 69.0L-3000 69.0ZM-3000 68.8L3000 68.8L3000 68.6L-3000 68.6ZM-3000 68.5L3000 68.5L3000 68.3L-3000 68.3ZM-3000 68.2L3000 68.2L3000 68.0L-3000 68.0ZM-3000 67.9L3000 67.9L3000 67.7L-3000 67.7ZM-3000 67.6L3000 67.6L3000 67.5L-3000 67.5ZM-3000 67.3L3000 67.3L3000 67.2L-3000 67.2ZM-3000 67.1L3000 67.1L3000 67.0L-3000 67.0ZM-3000 66.9L3000 66.9L3000 66.8L-3000 66.8ZM-3000 66.7L3000 66.7L3000 66.6L-3000 66.6Z" fill="#b7b3b7" fill-rule="evenodd"/><path d="M204 61.0L-3000 168.7M204 61.0L-3000 172.5M204 61.0L-3000 176.5M204 61.0L-3000 180.8M204 61.0L-3000 185.5M204 61.0L-3000 190.5M204 61.0L-3000 195.9M204 61.0L-3000 201.9M204 61.0L-3000 208.3M204 61.0L-3000 215.4M204 61.0L-3000 223.3M204 61.0L-3000 231.9M204 61.0L-3000 241.6M204 61.0L-3000 252.3M204 61.0L-3000 264.5M204 61.0L-3000 278.3M204 61.0L-3000 294.1M204 61.0L-3000 312.4M204 61.0L-3000 333.8M204 61.0L-3000 359.2M204 61.0L-3000 389.8M204 61.0L-3000 427.4M204 61.0L-3000 474.7M204 61.0L-3000 536.0M204 61.0L-3000 618.7M204 61.0L-2477 626.0M204 61.0L-1912 626.0M204 61.0L-1347 626.0M204 61.0L-782 626.0M204 61.0L-217 626.0M204 61.0L348 626.0M204 61.0L913 626.0M204 61.0L1478 626.0M204 61.0L2043 626.0M204 61.0L2608 626.0M204 61.0L3000 593.1M204 61.0L3000 508.0M204 61.0L3000 446.4M204 61.0L3000 399.7M204 61.0L3000 363.1M204 61.0L3000 333.6M204 61.0L3000 309.4M204 61.0L3000 289.2M204 61.0L3000 271.9M204 61.0L3000 257.1M204 61.0L3000 244.3M204 61.0L3000 233.0M204 61.0L3000 223.0M204 61.0L3000 214.2M204 61.0L3000 206.2M204 61.0L3000 199.0M204 61.0L3000 192.5M204 61.0L3000 186.6M204 61.0L3000 181.2M204 61.0L3000 176.3M204 61.0L3000 171.7M204 61.0L3000 167.5M204 61.0L3000 163.6M204 61.0L3000 160.0M204 61.0L3000 156.6M-3000 198.2L3000 198.2M-3000 136.1L3000 136.1M-3000 112.7L3000 112.7M-3000 100.4L3000 100.4M-3000 92.9L3000 92.9M-3000 87.7L3000 87.7M-3000 84.0L3000 84.0M-3000 81.2L3000 81.2M-3000 79.0L3000 79.0M-3000 77.3L3000 77.3M-3000 75.8L3000 75.8M-3000 74.6L3000 74.6M-3000 73.6L3000 73.6M-3000 72.7L3000 72.7M-3000 71.9L3000 71.9M-3000 71.2L3000 71.2M-3000 70.6L3000 70.6M-3000 70.1L3000 70.1M-3000 69.6L3000 69.6M-3000 69.2L3000 69.2M-3000 68.8L3000 68.8M-3000 68.5L3000 68.5M-3000 68.2L3000 68.2M-3000 67.9L3000 67.9M-3000 67.6L3000 67.6M-3000 67.3L3000 67.3M-3000 67.1L3000 67.1M-3000 66.9L3000 66.9M-3000 66.7L3000 66.7" stroke="#505058" stroke-width="0.45" fill="none" opacity="0.85"/><linearGradient id="hzfc610204" x1="0" y1="0" x2="0" y2="1"><stop offset="0" stop-color="#cfcdd2"/><stop offset=".3" stop-color="#cfcdd2" stop-opacity=".85"/><stop offset=".65" stop-color="#cfcdd2" stop-opacity=".45"/><stop offset="1" stop-color="#cfcdd2" stop-opacity="0"/></linearGradient><rect x="-60" y="61" width="520" height="20" fill="url(#hzfc610204)"/></g><path d="M100 181 Q140 174 170 176 L185 184 Q150 190 100 186Z" fill="#6c6c86" opacity=".85" filter="url(#shc9)"/><g transform="translate(139 48.6) scale(1.15)">
<path d="M-21 40 L-30 44 L-40 56 L-48 70 L-52 77 L-44 82 L-36 70 L-28 58 L-20 52Z" fill="#8c5e46"/>
<path d="M-47 54 L-30 52 L-26 72 L-49 76Z" fill="#6e6238" opacity=".95"/>
<path d="M-50 72 L-38 70 L-34 82 L-44 98 L-54 100 L-60 92 L-58 84Z" fill="#5a5030"/>
<path d="M-52 73 L-37 70 L-36 74 L-52 77Z" fill="#c0b898" opacity=".8"/>
<path d="M-63 91 L-55 90 L-52 101 L-60 103 L-64 99Z" fill="#3a2c22"/>
<path d="M20 44 L32 50 L40 62 L46 72 L40 76 L32 66 L22 58Z" fill="#8c5e46"/>
<path d="M34 70 L48 68 L60 80 L66 92 L60 96 L48 88 L38 82Z" fill="#5e5432"/>
<path d="M36 70 L48 68 L50 72 L38 74Z" fill="#c0b898" opacity=".8"/>
<path d="M61 90 L68 92 L68 101 L62 102 L59 96Z" fill="#3a2c22"/>
<path d="M-22 36 L11 36 L22 47 L23 70 L21 89 L-21 89 L-23 70 L-23 46Z" fill="#2e3550"/>
<path d="M-20 37 L10 37 L14 46 L4 52 L-8 52 L-20 47Z" fill="#9a6a50"/>
<path d="M-19 50 L-13 45 L20 84 L14 89Z" fill="#8a7a48"/>
<path d="M12 46 L17 50 L-15 86 L-20 82Z" fill="#7a6c40"/>
<circle cx="-2" cy="64" r="3.6" fill="#4a6a9a" stroke="#1a2030" stroke-width="1"/>
<path d="M9 40 L20 34 L28 31 L34 38 L46 45 L60 54 L44 55 L28 54 L16 56 L12 50Z" fill="#2e3448" stroke="#9aa0b0" stroke-width=".6" stroke-dasharray=".8 .6"/>
<path d="M-23 85 L22 85 L24 102 L-23 102Z" fill="#262c42"/>
<path d="M18 84 L25 82 L26 98 L20 100Z" fill="#3a4868"/>
<rect x="-10.5" y="89" width="19.5" height="8" fill="#c8c8c8"/>
<path d="M-22 101 L-1 101 L-2 153 L-22 153Z" fill="#8c7c44"/>
<path d="M1 101 L24 101 L23 153 L2 153Z" fill="#8a7a42"/>
<path d="M-21 110 L-4 138 M2 108 L22 144 M-19 140 L-3 118 M5 140 L22 116" stroke="#4a4020" stroke-width=".8"/>
<path d="M-25 152 L-1 152 L-2 176 L-24 176Z M1 152 L25 152 L25 176 L3 176Z" fill="#3c4462"/>
<path d="M-25 150 L-1 150 L-1 158 L-25 158Z M1 150 L25 150 L25 158 L1 158Z" fill="#b8b098" opacity=".85"/>
<path d="M-13 23 L11 23 L10.5 36 L-12 36Z" fill="#7e7050"/>
<path d="M-13 25 Q-14 11 -1 10 Q12 11 12 25Z" fill="#3e4252"/>
<path d="M-4 23 Q-4 13 -1 11 Q2 13 3 23Z" fill="#c8ccd6"/>
<path d="M-1 0 L2 12 L-4 12Z M-10.5 9 L-4 14 L-8 17Z M9 8 L5 16 L2 14Z M-16 20 L-9 17 L-9 22Z M14.5 20 L8 22 L8 17Z" fill="#3a4052"/>
</g></svg></div></div><div class="bd"></div></div><div class="cell" style="left:610px;top:689px"><b style="left:1px;top:1px;width:598px;height:13.2px;background:#ffffff;"></b><b style="left:2.5px;top:1.8px;width:3.5px;height:4px;background:#e08a20;clip-path:polygon(50% 0,100% 100%,0 100%)"></b><i style="left:7.5px;top:1.8px;font-size:3.6px;color:#222;">God of War Ragnarök - Locomotion and Movement.mp4 - VLC media player</i><b style="left:562px;top:4px;width:3.5px;height:.5px;background:#333;"></b><b style="left:576px;top:2.5px;width:3px;height:3px;border:.5px solid #333"></b><i style="left:590.5px;top:1.6px;font-size:4.1px;color:#333;">✕</i><i style="left:2.3px;top:8.8px;font-size:3.6px;color:#222;">Media</i><i style="left:17.5px;top:8.8px;font-size:3.6px;color:#222;">Playback</i><i style="left:37px;top:8.8px;font-size:3.6px;color:#222;">Audio</i><i style="left:52px;top:8.8px;font-size:3.6px;color:#222;">Video</i><i style="left:66.5px;top:8.8px;font-size:3.6px;color:#222;">Subtitle</i><i style="left:84.5px;top:8.8px;font-size:3.6px;color:#222;">Tools</i><i style="left:97.5px;top:8.8px;font-size:3.6px;color:#222;">View</i><i style="left:110px;top:8.8px;font-size:3.6px;color:#222;">Help</i><svg class="a" style="left:0;top:0" width="600" height="337" viewBox="0 0 600 337">
<defs>
<clipPath id="vclip"><rect x="35" y="14" width="530" height="297"/></clipPath>
<linearGradient id="vsky" x1="0" y1="0" x2="0" y2="1"><stop offset="0" stop-color="#76849c"/><stop offset=".5" stop-color="#94a2b8"/><stop offset="1" stop-color="#a4b0c4"/></linearGradient>
<linearGradient id="vsnow" x1="0" y1="0" x2="0" y2="1"><stop offset="0" stop-color="#a8b6cc"/><stop offset=".5" stop-color="#bcc8da"/><stop offset="1" stop-color="#b0bccf"/></linearGradient>
<filter id="vb1" x="-20%" y="-20%" width="140%" height="140%"><feGaussianBlur stdDeviation="2.5"/></filter>
<filter id="vb2"><feGaussianBlur stdDeviation=".7"/></filter>
<filter id="vb3" x="-50%" y="-50%" width="200%" height="200%"><feGaussianBlur stdDeviation="8"/></filter>
<linearGradient id="vban" x1="0" y1="0" x2="1" y2="0"><stop offset="0" stop-color="#0c1220" stop-opacity="0"/><stop offset=".12" stop-color="#0c1220" stop-opacity=".8"/><stop offset="1" stop-color="#0c1220" stop-opacity=".75"/></linearGradient>
<linearGradient id="vban2" x1="0" y1="0" x2="0" y2="1"><stop offset="0" stop-color="#000" stop-opacity="1"/><stop offset="1" stop-color="#000" stop-opacity="0"/></linearGradient>
</defs>
<rect x="1" y="14" width="598" height="297" fill="#000"/>
<g clip-path="url(#vclip)">
<rect x="35" y="14" width="530" height="297" fill="url(#vsky)"/>
<g filter="url(#vb3)"><ellipse cx="110" cy="110" rx="90" ry="80" fill="#646e84"/><ellipse cx="330" cy="70" rx="70" ry="60" fill="#b0bcd0"/><ellipse cx="260" cy="150" rx="60" ry="40" fill="#8a98b0"/></g>
<g filter="url(#vb2)" opacity=".9">
<path d="M40 14 L50 14 L52 200 L42 200Z" fill="#3c4454"/>
<path d="M93 14 L103 14 L113 192 L95 192Z" fill="#424a5a"/>
<path d="M120 14 L126 14 L128 160 L121 160Z" fill="#56606e"/>
<path d="M160 14 L176 14 L172 190 L156 190Z" fill="#3a4252"/>
<path d="M206 14 L213 14 L214 170 L207 170Z" fill="#5a6474"/>
<path d="M236 14 L244 14 L242 150 L234 150Z" fill="#6a7486"/>
<path d="M310 14 L330 14 L322 165 L306 165Z" fill="#5c6678" opacity=".8"/>
<path d="M290 14 L296 14 L294 30 L288 30Z" fill="#5c6678" opacity=".8"/>
<path d="M290 11 L270 90 M45 60 L95 80 M60 120 L110 105 M130 70 L160 50 M180 90 L230 110 M175 130 L215 120 M100 150 L140 160" stroke="#4a5262" stroke-width="1.4" opacity=".8"/>
<path d="M134 169 L150 169 L150 194 L134 194Z" fill="#4a505c"/>
<path d="M380 14 L385 14 L384 120 L380 120Z M440 14 L446 14 L445 160 L441 160Z M495 14 L500 14 L500 120 L495 120Z M540 14 L546 14 L546 60 L540 60Z" fill="#5a6474" opacity=".8"/>
</g>
<g filter="url(#vb1)">
<path d="M423 60 Q460 45 520 50 L565 45 L565 105 L470 103 L420 100Z" fill="#7a889e"/>
<path d="M430 58 Q470 45 520 55 L560 52 L560 70 Q500 68 430 72Z" fill="#a6b2c6"/>
<path d="M470 80 Q500 70 540 75 L565 78 L565 100 L480 98Z" fill="#96a4ba"/>
<path d="M332 140 Q345 122 400 118 L470 105 L565 100 L565 160 L470 162 L340 162Z" fill="#5a6478"/>
<path d="M467 130 Q510 122 565 128 L565 168 L470 168Z" fill="#7a9cc4" opacity=".85"/>
</g>
<path d="M35 180 Q110 170 190 185 Q280 165 360 162 Q470 158 565 165 L565 311 L35 311Z" fill="url(#vsnow)" filter="url(#vb2)"/>
<ellipse cx="90" cy="260" rx="70" ry="40" fill="#b8c4d8" filter="url(#vb1)"/>
<ellipse cx="420" cy="275" rx="150" ry="45" fill="#c2cddd" filter="url(#vb1)"/>
<ellipse cx="480" cy="300" rx="90" ry="20" fill="#a8b6ca" filter="url(#vb1)" opacity=".7"/>
<path d="M465 200 L475 245 M472 195 L482 246 M485 205 L487 245 M494 190 L497 243 M506 205 L501 248 M522 208 L532 252 M542 215 L544 252 M452 235 L490 248 M555 225 L558 260" stroke="#3a3e48" stroke-width=".8" opacity=".8"/>
<path d="M393 104.4 L565 104.4" stroke="#dfe3ea" stroke-width=".8"/>
<rect x="400" y="105" width="165" height="21" fill="url(#vban)"/>
<path d="M447 125.4 L526 125.4" stroke="#a0a6b0" stroke-width=".5"/>
<circle cx="486" cy="125.4" r="1.2" fill="none" stroke="#ccc" stroke-width=".5"/>
<path d="M400 104.4 L408 96.4 L416 104.4 L408 112.4Z" fill="#d6b444" stroke="#f2ecc8" stroke-width=".8"/>
<path d="M405 106 L409.5 101.5 L411 103 L406.5 107Z" fill="#2a2418"/>
<path d="M386 104.4 L393 104.4" stroke="#fff" stroke-width="1.2"/>
<!-- Kratos -->
<path d="M137 205 L150 160 L175 148 L215 150 L240 165 L247 200 L240 250 L238 311 L150 311 L140 260Z" fill="#4a3630"/>
<path d="M146 150 Q175 140 215 148 L238 165 L236 210 L205 215 L165 212 L148 200Z" fill="#8a8a96"/>
<path d="M150 165 L230 158 M152 180 L232 174 M155 195 L233 190" stroke="#b4b6c0" stroke-width=".9" opacity=".7"/>
<path d="M208 163 Q235 158 247 175 L247 200 L236 198 L220 180Z" fill="#6a4238"/>
<path d="M205 182 L236 178 L240 205 L210 210Z" fill="#d6cfcc"/>
<path d="M208 205 L240 200 L246 230 L214 236Z" fill="#8a4a3a"/>
<path d="M225 226 L250 222 L278 268 L270 284 L238 260Z" fill="#4e4a52"/>
<path d="M230 235 L262 260 M236 230 L268 255" stroke="#8a8a90" stroke-width=".7"/>
<ellipse cx="206" cy="133" rx="14" ry="18" fill="#c6bebc"/>
<path d="M198 115 L206 115 L205 150 L199 150Z" fill="#9a3a30" opacity=".9"/>
<path d="M193 125 Q190 138 195 148" stroke="#2a2228" stroke-width="1.6" fill="none"/>
<path d="M146 175 L160 145 L170 150 L168 178Z" fill="#9a9ca8"/>
<path d="M112 311 L180 175 L186 178 L120 311Z" fill="#6a3a30"/>
<rect x="169" y="227" width="53" height="22" fill="#4a3a30"/>
<path d="M175 240 L218 238" stroke="#d8d0c0" stroke-width="1.4" stroke-dasharray="1.8 4"/>
<path d="M152 249 L238 249 L238 311 L150 311Z" fill="#5a3028"/>
<ellipse cx="172" cy="285" rx="17" ry="23" fill="#5a4a38"/>
<path d="M160 270 L170 262 L172 275Z" fill="#b0a050" opacity=".6"/>
</g>
</svg><i style="left:420px;top:109.2px;font-size:6.7px;color:#f2f2f2;text-shadow:0 0 1px #000;letter-spacing:.12px">Press <span style='display:inline-block;width:5px;height:5.5px;border:.6px solid #ddd;border-radius:1px;vertical-align:middle'></span> to equip the Blades of Chaos.</i><b style="left:1px;top:311px;width:598px;height:16px;background:#f0f0f0;"></b><i style="left:2.5px;top:312.3px;font-size:3px;color:#333;">00:00</i><i style="left:588px;top:312.3px;font-size:3px;color:#333;">00:00</i><b style="left:17px;top:313.3px;width:564px;height:1.8px;background:#d8d8d8;border-radius:1px"></b><b style="left:17px;top:313.3px;width:256.5px;height:1.8px;background:#3a7ed0;border-radius:1px"></b><b style="left:3px;top:318px;width:7px;height:7.5px;background:#e4e4e4;border:.4px solid #c8c8c8"></b><b style="left:4.8px;top:320px;width:3.3px;height:3.6px;background:#444;clip-path:polygon(0 0,100% 50%,0 100%)"></b><b style="left:15.5px;top:319px;width:7px;height:6.5px;background:#e0e0e0;border:.4px solid #cfcfcf"></b><b style="left:17.5px;top:321px;width:3px;height:2.5px;background:#666;"></b><b style="left:24.5px;top:319px;width:7px;height:6.5px;background:#e0e0e0;border:.4px solid #cfcfcf"></b><b style="left:26.5px;top:321px;width:3px;height:2.5px;background:#666;"></b><b style="left:32.5px;top:319px;width:7px;height:6.5px;background:#e0e0e0;border:.4px solid #cfcfcf"></b><b style="left:34.5px;top:321px;width:3px;height:2.5px;background:#666;"></b><b style="left:43.5px;top:319px;width:7px;height:6.5px;background:#e0e0e0;border:.4px solid #cfcfcf"></b><b style="left:45.5px;top:321px;width:3px;height:2.5px;background:#666;"></b><b style="left:52px;top:319px;width:7px;height:6.5px;background:#e0e0e0;border:.4px solid #cfcfcf"></b><b style="left:54px;top:321px;width:3px;height:2.5px;background:#666;"></b><b style="left:63.5px;top:319px;width:7px;height:6.5px;background:#e0e0e0;border:.4px solid #cfcfcf"></b><b style="left:65.5px;top:321px;width:3px;height:2.5px;background:#666;"></b><b style="left:72px;top:319px;width:7px;height:6.5px;background:#e0e0e0;border:.4px solid #cfcfcf"></b><b style="left:74px;top:321px;width:3px;height:2.5px;background:#666;"></b><b style="left:80.5px;top:319px;width:7px;height:6.5px;background:#e0e0e0;border:.4px solid #cfcfcf"></b><b style="left:82.5px;top:321px;width:3px;height:2.5px;background:#666;"></b><b style="left:577px;top:319px;width:19px;height:6px;background:#3ab04a;clip-path:polygon(0 100%,100% 0,100% 100%)"></b><b style="left:572px;top:321px;width:2.5px;height:3px;background:#c8a010;"></b><div class="a task"></div><b style="left:3.3px;top:329.5px;width:1.9px;height:1.9px;background:#fff;"></b><b style="left:5.6px;top:329.5px;width:1.9px;height:1.9px;background:#fff;"></b><b style="left:3.3px;top:331.8px;width:1.9px;height:1.9px;background:#fff;"></b><b style="left:5.6px;top:331.8px;width:1.9px;height:1.9px;background:#fff;"></b><b style="left:15.5px;top:329.5px;width:4.5px;height:4px;background:#c040e0;border-radius:1px;transform:skewX(-10deg)"></b><b style="left:27px;top:329.8px;width:4.8px;height:3.6px;background:#e8c040;border-radius:.4px"></b><div class="a" style="left:38.6px;top:329.2px;width:4.4px;height:4.4px;border-radius:50%;background:conic-gradient(#e33 0 33%,#fc3 0 66%,#3a5 0)"></div><b style="left:50.5px;top:329.3px;width:4.5px;height:4.5px;border:.6px solid #aaa;border-radius:50%"></b><b style="left:61.5px;top:329.4px;width:4.2px;height:4.2px;border:.6px solid #888;border-radius:50%"></b><b style="left:72px;top:327.5px;width:8.5px;height:8.5px;background:#3a3d44;"></b><b style="left:73.8px;top:329px;width:4.6px;height:5px;background:#f08a10;clip-path:polygon(50% 0,100% 100%,0 100%)"></b><i style="left:535px;top:329.4px;font-size:4.1px;">^</i><b style="left:542.5px;top:329.2px;width:1.6px;height:4.2px;background:#ddd;border-radius:1px"></b><b style="left:549px;top:329.6px;width:3.8px;height:3px;border:.5px solid #ccc"></b><b style="left:555.5px;top:330px;width:2px;height:2.5px;background:#ccc;clip-path:polygon(0 30%,40% 30%,100% 0,100% 100%,40% 70%,0 70%)"></b><i style="left:561px;top:329.9px;font-size:3px;color:#ccc;">ENG</i><i style="left:575px;top:328px;font-size:3.5px;color:rgba(230,230,230,.55);">Udemy</i><b style="left:588.5px;top:329.4px;width:4.5px;height:3.6px;background:#e8e8e8;border-radius:.3px"></b><div class="bd"></div></div><div class="cell" style="left:1215px;top:689px"><div class="a menu"></div><div class="a tabs"></div><div class="a tb"></div><div class="a ptab"></div><svg class="a" style="left:2px;top:2px" width="14" height="14" viewBox="0 0 14 14"><circle cx="7" cy="7" r="6" fill="#1a1a1a" stroke="#9a9a9a" stroke-width=".7"/><path d="M4.2 4.3 L5.6 4 L5.6 8.8 Q6.6 9.6 7.6 8.8 L7.6 4.6 L9.1 4.2 L9.1 9.6 Q6.6 11 4.2 9.6Z" fill="#c8c8c8"/></svg><i style="left:21.5px;top:1.8px;font-size:3.8px;color:#c8c8c8;">File</i><i style="left:35.5px;top:1.8px;font-size:3.8px;color:#c8c8c8;">Edit</i><i style="left:51px;top:1.8px;font-size:3.8px;color:#c8c8c8;">Asset</i><i style="left:68px;top:1.8px;font-size:3.8px;color:#c8c8c8;">View</i><i style="left:84.5px;top:1.8px;font-size:3.8px;color:#c8c8c8;">Debug</i><i style="left:103.5px;top:1.8px;font-size:3.8px;color:#c8c8c8;">Window</i><i style="left:123px;top:1.8px;font-size:3.8px;color:#c8c8c8;">Tools</i><i style="left:140.5px;top:1.8px;font-size:3.8px;color:#c8c8c8;">Help</i><b style="left:564px;top:4px;width:4px;height:.6px;background:#aaa;"></b><div class="a" style="left:578px;top:2.2px;width:3.4px;height:3.2px;border:.6px solid #bbb"></div><i style="left:591.5px;top:1.3px;font-size:4.6px;color:#ddd;">✕</i><svg class="a" style="left:22.5px;top:10px" width="5" height="5" viewBox="0 0 5 5"><path d="M.5 2.5 L2.5 .6 L4.5 2.5 V4.5 H.5Z" fill="none" stroke="#666" stroke-width=".5"/></svg><svg class="a" style="left:33.5px;top:10.3px" width="5" height="4.5" viewBox="0 0 5 4.5"><path d="M2.5 .2 L4.8 4.3 H.2Z" fill="#d8a020"/></svg><i style="left:41px;top:10.8px;font-size:3.8px;color:#c0c0c0;">DefaultMap</i><b style="left:97px;top:8.5px;width:65px;height:8.5px;background:#1e1e1e;border-radius:1px 1px 0 0"></b><svg class="a" style="left:100px;top:9.5px" width="5" height="6" viewBox="0 0 5 6"><circle cx="2.5" cy="1.6" r="1.3" fill="#3a7ee0"/><path d="M.4 5.6 Q.4 3.2 2.5 3.2 Q4.6 3.2 4.6 5.6Z" fill="#3a7ee0"/></svg><i style="left:107px;top:10.8px;font-size:3.8px;color:#d0d0d0;">BP_Brute</i><i style="left:155.5px;top:10.3px;font-size:4.9px;">×</i><i style="left:552px;top:10.8px;font-size:3.6px;color:#8a8a8a;">Parent class: <u>Character</u></i><b style="left:5.5px;top:20px;width:5px;height:6px;background:#c8c8c8;border-radius:.5px"></b><b style="left:19.5px;top:20.5px;width:5px;height:5.5px;background:#a8a8a8;border-radius:.5px"></b><b style="left:35px;top:19.5px;width:6px;height:7px;background:#d8c020;border-radius:.5px"></b><b style="left:36.5px;top:21.5px;width:3px;height:3px;background:#58a030;"></b><i style="left:44px;top:22px;font-size:3.9px;">Compile</i><i style="left:62.5px;top:21.8px;font-size:4.2px;color:#888;">:</i><b style="left:71px;top:21.5px;width:3px;height:3.5px;background:#bbb;"></b><i style="left:76px;top:22px;font-size:3.9px;">Diff v</i><b style="left:100px;top:20.5px;width:4.5px;height:4.5px;border:.6px solid #ccc;border-radius:50%"></b><i style="left:106px;top:22px;font-size:3.9px;">Find</i><b style="left:121px;top:20.5px;width:5px;height:5px;background:#888;border-radius:1px"></b><i style="left:128.5px;top:22px;font-size:3.9px;">Hide Unrelated</i><i style="left:160px;top:21.8px;font-size:4.2px;color:#888;">:</i><b style="left:170.5px;top:20.5px;width:5px;height:5px;border:.7px solid #bbb;border-radius:50%"></b><i style="left:177.5px;top:22px;font-size:3.9px;">Class Settings</i><b style="left:211px;top:20.5px;width:5px;height:5px;background:#bbb;clip-path:polygon(0 100%,20% 100%,100% 20%,80% 0)"></b><i style="left:218.5px;top:22px;font-size:3.9px;">Class Defaults</i><b style="left:251.5px;top:20.5px;width:5px;height:5px;background:#aaa;clip-path:polygon(0 0,100% 60%,55% 65%,40% 100%)"></b><i style="left:259px;top:22px;font-size:3.9px;">Simulation</i><b style="left:288px;top:18.8px;width:35px;height:9.5px;background:#232323;border-radius:1px"></b><b style="left:292.3px;top:21px;width:.9px;height:5px;background:#ccc;"></b><b style="left:294.3px;top:21px;width:.9px;height:5px;background:#ccc;"></b><b style="left:300.5px;top:21px;width:2.6px;height:4.6px;background:#5a6a5a;clip-path:polygon(0 0,100% 50%,0 100%)"></b><b style="left:309.5px;top:21px;width:4.4px;height:4.6px;background:#e02828;"></b><b style="left:318.5px;top:21px;width:.6px;height:5px;background:#555;"></b><b style="left:329px;top:19.5px;width:54px;height:7px;background:#0c0c0c;border-radius:1px"></b><i style="left:331px;top:22px;font-size:3.7px;">No debug object selected v</i><b style="left:388px;top:21px;width:3.5px;height:4px;background:#777;"></b><div class="a sb"></div><b style="left:3px;top:320.5px;width:3px;height:3.5px;background:#999;"></b><i style="left:8px;top:320.7px;font-size:3.7px;color:#aaa;">Content Drawer</i><b style="left:44px;top:320.5px;width:3px;height:3.5px;background:#bbb;"></b><i style="left:50px;top:320.7px;font-size:3.7px;color:#aaa;">Output Log</i><b style="left:78px;top:320.7px;width:4px;height:3.2px;border:.5px solid #999"></b><i style="left:84px;top:320.7px;font-size:3.7px;color:#aaa;">Cmd v</i><b style="left:103px;top:319.5px;width:93px;height:5.5px;background:#0c0c0c;border-radius:1px"></b><i style="left:105.5px;top:320.6px;font-size:3.5px;color:#555;">Enter Console Command</i><b style="left:518px;top:320.5px;width:3px;height:3.6px;background:#aaa;"></b><i style="left:524px;top:320.7px;font-size:3.7px;color:#aaa;">All Saved</i><b style="left:553px;top:320.5px;width:2.5px;height:3.8px;background:#aaa;"></b><i style="left:558px;top:320.7px;font-size:3.7px;color:#aaa;">Revision Control v</i><div class="a task"></div><b style="left:3.3px;top:329.5px;width:1.9px;height:1.9px;background:#fff;"></b><b style="left:5.6px;top:329.5px;width:1.9px;height:1.9px;background:#fff;"></b><b style="left:3.3px;top:331.8px;width:1.9px;height:1.9px;background:#fff;"></b><b style="left:5.6px;top:331.8px;width:1.9px;height:1.9px;background:#fff;"></b><b style="left:15.5px;top:329.5px;width:4.5px;height:4px;background:#c040e0;border-radius:1px;transform:skewX(-10deg)"></b><b style="left:27px;top:329.8px;width:4.8px;height:3.6px;background:#e8c040;border-radius:.4px"></b><div class="a" style="left:38.6px;top:329.2px;width:4.4px;height:4.4px;border-radius:50%;background:conic-gradient(#e33 0 33%,#fc3 0 66%,#3a5 0)"></div><b style="left:48.5px;top:327.5px;width:8.5px;height:8.5px;background:#3a3d44;"></b><b style="left:50.5px;top:329.3px;width:4.5px;height:4.5px;border:.6px solid #aaa;border-radius:50%"></b><b style="left:61.5px;top:329.4px;width:4.2px;height:4.2px;border:.6px solid #888;border-radius:50%"></b><i style="left:535px;top:329.4px;font-size:4.1px;">^</i><b style="left:542.5px;top:329.2px;width:1.6px;height:4.2px;background:#ddd;border-radius:1px"></b><b style="left:549px;top:329.6px;width:3.8px;height:3px;border:.5px solid #ccc"></b><b style="left:555.5px;top:330px;width:2px;height:2.5px;background:#ccc;clip-path:polygon(0 30%,40% 30%,100% 0,100% 100%,40% 70%,0 70%)"></b><i style="left:561px;top:329.9px;font-size:3px;color:#ccc;">ENG</i><i style="left:575px;top:328px;font-size:3.5px;color:rgba(230,230,230,.55);">Udemy</i><b style="left:588.5px;top:329.4px;width:4.5px;height:3.6px;background:#e8e8e8;border-radius:.3px"></b><div class="a lp"></div><b style="left:1px;top:31px;width:50px;height:9px;background:#1a1a1a;border-radius:1px 1px 0 0"></b><b style="left:3px;top:33px;width:3px;height:3.5px;border:.5px solid #aaa"></b><i style="left:8.5px;top:33.6px;font-size:3.8px;color:#c0c0c0;">Components</i><i style="left:44.5px;top:32.9px;font-size:4.6px;color:#aaa;">×</i><b style="left:7px;top:41px;width:17px;height:6px;background:#2a2a2a;border-radius:1px"></b><b style="left:9px;top:42.5px;width:1px;height:3px;background:#50c050;"></b><b style="left:8px;top:43.5px;width:3px;height:1px;background:#50c050;"></b><i style="left:12.5px;top:42.4px;font-size:3.8px;color:#ccc;">Add</i><div class="srch" style="left:27px;top:41px;width:61px;height:6px"></div><svg class="a" style="left:29px;top:42px" width="4" height="4" viewBox="0 0 4 4"><circle cx="1.6" cy="1.6" r="1.15" fill="none" stroke="#aaa" stroke-width=".55"/><path d="M2.4 2.4L3.6 3.6" stroke="#aaa" stroke-width=".6"/></svg><i style="left:35px;top:42.6px;font-size:3.5px;color:#444;">Search</i><b style="left:5.9px;top:53.6px;width:2.6px;height:3.6px;background:#999;border-radius:.6px"></b><i style="left:10.4px;top:53.2px;font-size:3.8px;color:#b8b8b8;letter-spacing:-.05px">BP_Brute (Self)</i><b style="left:14.1px;top:61.1px;width:2.6px;height:3.6px;background:#999;border-radius:.6px"></b><i style="left:18.6px;top:60.7px;font-size:3.8px;color:#b8b8b8;letter-spacing:-.05px">Capsule Component (CollisionCylinder)</i><b style="left:17.3px;top:68.7px;width:2.6px;height:3.6px;background:#999;border-radius:.6px"></b><i style="left:21.8px;top:68.3px;font-size:3.8px;color:#b8b8b8;letter-spacing:-.05px">Arrow Component (Arrow) <u>Edit in C++</u></i><b style="left:17.3px;top:76.2px;width:2.6px;height:3.6px;background:#999;border-radius:.6px"></b><i style="left:21.8px;top:75.8px;font-size:3.8px;color:#b8b8b8;letter-spacing:-.05px">CameraBoom</i><b style="left:20.3px;top:83.8px;width:2.6px;height:3.6px;background:#999;border-radius:.6px"></b><i style="left:24.8px;top:83.4px;font-size:3.8px;color:#b8b8b8;letter-spacing:-.05px">FollowCamera</i><b style="left:17.3px;top:91.3px;width:2.6px;height:3.6px;background:#999;border-radius:.6px"></b><i style="left:21.8px;top:90.9px;font-size:3.8px;color:#b8b8b8;letter-spacing:-.05px">Mesh (CharacterMesh0)  <u>Edit in C++</u></i><b style="left:3px;top:100.4px;width:87px;height:7px;background:#24508a;"></b><b style="left:14.1px;top:102.2px;width:2.6px;height:3.6px;background:#999;border-radius:.6px"></b><i style="left:18.6px;top:101.8px;font-size:3.8px;color:#e8eef8;letter-spacing:-.05px">Character Movement (CharMoveComp)</i><b style="left:8px;top:97.3px;width:82px;height:.5px;background:#333;"></b><b style="left:1px;top:118px;width:50px;height:8.5px;background:#1a1a1a;border-radius:1px 1px 0 0"></b><b style="left:3px;top:120px;width:3px;height:3.5px;background:#888;"></b><i style="left:9px;top:120.4px;font-size:3.8px;color:#c0c0c0;">My Blueprint</i><i style="left:44.5px;top:119.6px;font-size:4.6px;color:#aaa;">×</i><b style="left:1px;top:126.5px;width:90px;height:.5px;background:#0e0e0e;"></b><b style="left:6px;top:128px;width:18px;height:5.5px;background:#262626;border-radius:1px"></b><b style="left:9px;top:129.3px;width:1px;height:3px;background:#50c050;"></b><b style="left:8px;top:130.3px;width:3px;height:1px;background:#50c050;"></b><i style="left:12.5px;top:129.4px;font-size:3.8px;color:#ccc;">Add</i><div class="srch" style="left:26px;top:128px;width:54px;height:5.5px"></div><svg class="a" style="left:28px;top:128.8px" width="4" height="4" viewBox="0 0 4 4"><circle cx="1.6" cy="1.6" r="1.15" fill="none" stroke="#aaa" stroke-width=".55"/><path d="M2.4 2.4L3.6 3.6" stroke="#aaa" stroke-width=".6"/></svg><b style="left:83.6px;top:128.6px;width:3.6px;height:3.6px;border:.6px solid #aaa;border-radius:50%"></b><div class="hdr" style="top:137.29999999999998px"></div><i style="left:7px;top:139.2px;font-size:3.2px;color:#c8c8c8;font-weight:bold;">GRAPHS</i><i style="left:2.8px;top:139.2px;font-size:3.2px;color:#888;">v</i><b style="left:83.6px;top:138.7px;width:3.8px;height:3.8px;border:.6px solid #999;border-radius:50%"></b><b style="left:7px;top:147.8px;width:3px;height:2.6px;background:#aaa;"></b><i style="left:12.5px;top:147.9px;font-size:3.6px;">EventGraph</i><b style="left:10.5px;top:155.8px;width:2.8px;height:2.8px;border:.6px solid #ccc;border-radius:50%"></b><i style="left:15.5px;top:156px;font-size:3.6px;color:#b8b8b8;">Event BeginPlay</i><b style="left:10.5px;top:163.5px;width:2.8px;height:2.8px;border:.6px solid #ccc;border-radius:50%"></b><i style="left:15.5px;top:163.7px;font-size:3.6px;color:#b8b8b8;">EnhancedInputAction IA_Move</i><b style="left:10.5px;top:171.2px;width:2.8px;height:2.8px;border:.6px solid #ccc;border-radius:50%"></b><i style="left:15.5px;top:171.4px;font-size:3.6px;color:#b8b8b8;">EnhancedInputAction IA_Look</i><div class="hdr" style="top:178.69999999999996px"></div><i style="left:7px;top:180.6px;font-size:3.2px;color:#c8c8c8;font-weight:bold;">FUNCTIONS <span style='color:#666;font-weight:normal'>(14 OVERRIDABLE)</span></i><i style="left:2.8px;top:180.6px;font-size:3.2px;color:#888;">v</i><b style="left:57px;top:179.4px;width:22px;height:5.2px;background:#0e0e0e;border-radius:1px"></b><i style="left:59px;top:180.8px;font-size:3.2px;">Override v</i><b style="left:83.6px;top:180.1px;width:3.8px;height:3.8px;border:.6px solid #999;border-radius:50%"></b><i style="left:9px;top:189.7px;font-size:3.7px;color:#aaa;">ƒ</i><i style="left:13px;top:189.9px;font-size:3.6px;">Construction Script</i><div class="hdr" style="top:196.29999999999998px"></div><i style="left:7px;top:198.2px;font-size:3.2px;color:#c8c8c8;font-weight:bold;">MACROS</i><i style="left:2.8px;top:198.2px;font-size:3.2px;color:#888;">v</i><b style="left:83.6px;top:197.7px;width:3.8px;height:3.8px;border:.6px solid #999;border-radius:50%"></b><div class="hdr" style="top:205.6px"></div><i style="left:7px;top:207.5px;font-size:3.2px;color:#c8c8c8;font-weight:bold;">VARIABLES</i><i style="left:2.8px;top:207.5px;font-size:3.2px;color:#888;">v</i><b style="left:83.6px;top:207px;width:3.8px;height:3.8px;border:.6px solid #999;border-radius:50%"></b><i style="left:3px;top:215.1px;font-size:3.2px;color:#888;">v</i><i style="left:6px;top:215.2px;font-size:3.5px;color:#c8c8c8;font-weight:bold;">Components</i><i style="left:10px;top:221.2px;font-size:3.5px;color:#a8a8a8;">FollowCamera</i><b style="left:58px;top:221.9px;width:3.4px;height:1.8px;background:#30a0e0;border-radius:1px"></b><i style="left:10px;top:227.4px;font-size:3.5px;color:#a8a8a8;">CameraBoom</i><b style="left:58px;top:228.1px;width:3.4px;height:1.8px;background:#30a0e0;border-radius:1px"></b><div class="hdr" style="top:233.19999999999996px"></div><i style="left:7px;top:235.1px;font-size:3.2px;color:#c8c8c8;font-weight:bold;">EVENT DISPATCHERS</i><i style="left:2.8px;top:235.1px;font-size:3.2px;color:#888;">v</i><b style="left:83.6px;top:234.6px;width:3.8px;height:3.8px;border:.6px solid #999;border-radius:50%"></b><b style="left:91px;top:31px;width:49px;height:9px;background:#1e1e1e;border-radius:1px 1px 0 0"></b><b style="left:93.5px;top:33.2px;width:3.5px;height:3px;background:#999;"></b><i style="left:99px;top:33.6px;font-size:3.8px;color:#d0d0d0;">Viewport</i><i style="left:135.5px;top:32.9px;font-size:4.6px;color:#aaa;">×</i><i style="left:145px;top:33.2px;font-size:3.9px;color:#aaa;">ƒ</i><i style="left:150.5px;top:33.6px;font-size:3.8px;color:#a8a8a8;">Construction Scr...</i><b style="left:194px;top:33.2px;width:3.4px;height:3.4px;border:.5px dashed #bbb"></b><i style="left:199.5px;top:33.6px;font-size:3.8px;color:#a8a8a8;">EventGraph</i><b style="left:450px;top:31px;width:50px;height:9px;background:#1c1c1c;border-radius:1px 1px 0 0"></b><b style="left:452.5px;top:33px;width:3px;height:3.6px;background:#ccc;clip-path:polygon(0 100%,25% 100%,100% 25%,75% 0)"></b><i style="left:458.5px;top:33.6px;font-size:3.8px;color:#c8c8c8;">Details</i><i style="left:492.5px;top:32.9px;font-size:4.6px;color:#aaa;">×</i><b style="left:92px;top:40px;width:357px;height:11px;background:#151515;"></b><b style="left:95px;top:42px;width:9px;height:7px;background:#2a2a2a;border-radius:1px"></b><b style="left:96.5px;top:43px;width:4px;height:4.5px;background:#bbb;border-radius:50%"></b><b style="left:106px;top:42.2px;width:3px;height:5px;background:#3aa0e0;clip-path:polygon(0 0,100% 65%,50% 65%,40% 100%)"></b><b style="left:112px;top:44.5px;width:5px;height:1px;background:#ccc;"></b><b style="left:114px;top:42.5px;width:1px;height:5px;background:#ccc;"></b><b style="left:119.5px;top:42.6px;width:4.5px;height:4.5px;border:.6px solid #bbb;border-radius:50%"></b><b style="left:127px;top:42.6px;width:4.5px;height:4.5px;border:.6px solid #bbb"></b><b style="left:141px;top:42.6px;width:4px;height:4.5px;background:#777;clip-path:polygon(50% 0,100% 100%,0 100%)"></b><b style="left:158px;top:42px;width:10px;height:7px;background:#262626;border-radius:1px"></b><b style="left:160px;top:42.8px;width:4.6px;height:4.6px;border:.7px solid #ccc;border-radius:50%"></b><b style="left:174px;top:42.5px;width:5px;height:5px;background:#bbb;clip-path:polygon(0 80%,80% 0,100% 20%,20% 100%)"></b><i style="left:180px;top:42.5px;font-size:3.5px;color:#aaa;">9</i><b style="left:189px;top:42.5px;width:5px;height:5px;background:#2a8ab8;"></b><i style="left:196px;top:42.5px;font-size:3.5px;color:#aaa;">10</i><b style="left:206px;top:42.5px;width:5px;height:5px;border:.7px solid #2a9ad0;border-radius:50%"></b><i style="left:213px;top:42.5px;font-size:3.5px;color:#aaa;">10°</i><b style="left:228px;top:42.5px;width:4px;height:5.5px;border-left:.8px solid #2a9ad0;border-bottom:.8px solid #2a9ad0"></b><i style="left:237px;top:42.5px;font-size:3.5px;color:#aaa;">0.25</i><b style="left:343px;top:42px;width:32px;height:7px;background:#1e1e1e;"></b><b style="left:345px;top:43.5px;width:4px;height:3.5px;background:#ccc;"></b><i style="left:350px;top:42.7px;font-size:3.5px;">Perspective v</i><b style="left:380px;top:43px;width:4px;height:4px;background:#999;"></b><i style="left:386px;top:42.7px;font-size:3.5px;color:#aaa;">1 v</i><b style="left:400px;top:42px;width:16px;height:7px;background:#1e1e1e;"></b><b style="left:401.5px;top:43px;width:4.5px;height:4.5px;background:#aaa;border-radius:50%"></b><i style="left:407px;top:42.7px;font-size:3.5px;color:#aaa;">Lit v</i><i style="left:423px;top:42.7px;font-size:3.5px;color:#aaa;">⊞ v</i><i style="left:437px;top:42.7px;font-size:3.5px;color:#aaa;">✓ v</i><b style="left:92px;top:51px;width:357px;height:267px;background:#2d2d2d;"></b><svg class="a" style="left:92px;top:280px" width="357" height="38"><path d="M190 38 L207 8 M260 8 L357 30 M0 30 L60 18" stroke="#3a3a3a" stroke-width=".5"/><path d="M8 37 L8 24" stroke="#3a6ad0" stroke-width=".6"/><path d="M8 37 L16 33" stroke="#40a040" stroke-width=".6"/><path d="M8 37 L20 37" stroke="#c04040" stroke-width=".5" opacity=".6"/></svg><div class="a dp"></div><div class="srch" style="left:453px;top:42.5px;width:128px;height:5.5px"></div><i style="left:455px;top:43px;font-size:3.7px;color:#ccc;">✕</i><i style="left:461px;top:43.5px;font-size:3.6px;">rotation</i><b style="left:585.5px;top:43px;width:3.4px;height:3.6px;background:#888;"></b><b style="left:592.5px;top:43px;width:3.8px;height:3.8px;border:.6px solid #888;border-radius:50%"></b><b style="left:450px;top:51px;width:149px;height:.6px;background:#2a4a6a;"></b><b style="left:450px;top:51.5px;width:149px;height:5.6px;background:#2a2a2a;"></b><b style="left:450px;top:57.5px;width:149px;height:8.6px;background:#1f1f1f;"></b><b style="left:514px;top:60.3px;width:3.4px;height:3.4px;background:#0d0d0d;"></b><b style="left:450px;top:66.5px;width:149px;height:8.1px;background:#2a2a2a;"></b><b style="left:450px;top:75px;width:149px;height:7.6px;background:#1f1f1f;"></b><b style="left:450px;top:83px;width:149px;height:8.1px;background:#1f1f1f;"></b><b style="left:514px;top:85.2px;width:37px;height:4.2px;background:#0d0d0d;"></b><i style="left:515.5px;top:85.6px;font-size:3px;">0.0</i><b style="left:450px;top:91.5px;width:149px;height:8.1px;background:#1f1f1f;"></b><b style="left:514px;top:93.8px;width:37px;height:4.2px;background:#0d0d0d;"></b><i style="left:515.5px;top:94.1px;font-size:3px;">0.0</i><b style="left:450px;top:100px;width:149px;height:7.6px;background:#2a2a2a;"></b><b style="left:450px;top:108px;width:149px;height:8.6px;background:#1f1f1f;"></b><b style="left:514px;top:110.5px;width:16.5px;height:4.2px;background:#0d0d0d;"></b><i style="left:515.5px;top:110.9px;font-size:3px;">0.0°</i><b style="left:532px;top:110.5px;width:16.5px;height:4.2px;background:#0d0d0d;"></b><i style="left:533.5px;top:110.9px;font-size:3px;">0.0°</i><b style="left:551px;top:110.5px;width:16.5px;height:4.2px;background:#0d0d0d;"></b><i style="left:552.5px;top:110.9px;font-size:3px;">0.0°</i><b style="left:450px;top:117px;width:149px;height:8.1px;background:#1f1f1f;"></b><b style="left:514px;top:119.5px;width:3.4px;height:3.4px;background:#0d0d0d;"></b><b style="left:450px;top:125.5px;width:149px;height:8.1px;background:#1f1f1f;"></b><b style="left:514px;top:128.1px;width:3.4px;height:3.4px;background:#0d0d0d;"></b><i style="left:514.3px;top:128px;font-size:3.5px;color:#4a9ae0;">✓</i><b style="left:450px;top:134px;width:149px;height:7.6px;background:#2a2a2a;"></b><b style="left:450px;top:142px;width:149px;height:8.6px;background:#1f1f1f;"></b><b style="left:514px;top:144.8px;width:3.4px;height:3.4px;background:#0d0d0d;"></b><b style="left:450px;top:151px;width:149px;height:.6px;background:#2a4a6a;"></b><div class="a" style="left:0;top:0;width:600px;height:337px;z-index:4"><b style="left:100px;top:52px;width:401px;height:10px;background:#1c1c1c;"></b><i style="left:241.5px;top:54.6px;font-size:3.7px;color:#b8b8b8;">BruteRPG Preview [NetMode: Standalone 0]  (64-bit/PC D3D SM5)</i><b style="left:103px;top:55.5px;width:3.5px;height:3.5px;background:#888;border-radius:.5px"></b><b style="left:473.5px;top:57px;width:3px;height:.5px;background:#ccc;"></b><b style="left:486px;top:55.3px;width:2.8px;height:2.8px;border:.5px solid #ccc"></b><i style="left:494.5px;top:54.4px;font-size:3.9px;color:#ddd;">✕</i><div class="a" style="left:100px;top:62px;width:401px;height:226px;overflow:hidden"><svg class="a" width="400" height="226" viewBox="0 0 400 226" style="left:0;top:0;overflow:hidden"><defs><filter id="cbc11" x="-50%" y="-50%" width="200%" height="200%"><feGaussianBlur stdDeviation="2.2"/></filter>
<linearGradient id="skc11" x1="0" y1="0" x2="0" y2="1"><stop offset="0" stop-color="#3a64a2"/><stop offset=".6" stop-color="#3a64a2" stop-opacity=".0"/></linearGradient>
<linearGradient id="sbc11" x1="0" y1="0" x2="0" y2="1"><stop offset="0" stop-color="#3c68a6"/><stop offset=".55" stop-color="#4472b0"/><stop offset="1" stop-color="#4a7ab6"/></linearGradient>
<linearGradient id="sec11" x1="0" y1="0" x2="0" y2="1"><stop offset="0" stop-color="#90acd0"/><stop offset=".35" stop-color="#4a76b2"/><stop offset="1" stop-color="#4a76b2"/></linearGradient>
<filter id="shc11"><feGaussianBlur stdDeviation=".8"/></filter></defs><rect width="400" height="20" fill="url(#sbc11)"/><rect width="400" height="20" fill="url(#skc11)"/><rect y="18" width="400" height="2.5" fill="url(#sec11)"/><clipPath id="fc200190"><rect x="-60" y="20" width="520" height="266"/></clipPath><g clip-path="url(#fc200190)"><rect x="-60" y="20" width="520" height="266" fill="#d2cecc"/><path d="M235 20.0L-3000 168.4L-3000 170.9L235 20.0ZM235 20.0L-3000 173.6L-3000 176.3L235 20.0ZM235 20.0L-3000 179.1L-3000 182.0L235 20.0ZM235 20.0L-3000 185.0L-3000 188.1L235 20.0ZM235 20.0L-3000 191.4L-3000 194.8L235 20.0ZM235 20.0L-3000 198.3L-3000 201.9L235 20.0ZM235 20.0L-3000 205.8L-3000 209.7L235 20.0ZM235 20.0L-3000 213.9L-3000 218.2L235 20.0ZM235 20.0L-3000 222.8L-3000 227.5L235 20.0ZM235 20.0L-3000 232.5L-3000 237.7L235 20.0ZM235 20.0L-3000 243.2L-3000 249.0L235 20.0ZM235 20.0L-3000 255.0L-3000 261.4L235 20.0ZM235 20.0L-3000 268.2L-3000 275.3L235 20.0ZM235 20.0L-3000 282.9L-3000 291.0L235 20.0ZM235 20.0L-3000 299.5L-3000 308.6L235 20.0ZM235 20.0L-3000 318.3L-3000 328.7L235 20.0ZM235 20.0L-3000 339.9L-3000 351.9L235 20.0ZM235 20.0L-3000 364.8L-3000 378.7L235 20.0ZM235 20.0L-3000 393.9L-3000 410.3L235 20.0ZM235 20.0L-3000 428.3L-3000 448.0L235 20.0ZM235 20.0L-3000 469.8L-3000 493.8L235 20.0ZM235 20.0L-3000 520.6L-3000 550.6L235 20.0ZM235 20.0L-3000 584.4L-3000 622.8L235 20.0ZM235 20.0L-2796 626.0L-2575 626.0L235 20.0ZM235 20.0L-2354 626.0L-2132 626.0L235 20.0ZM235 20.0L-1911 626.0L-1690 626.0L235 20.0ZM235 20.0L-1469 626.0L-1248 626.0L235 20.0ZM235 20.0L-1026 626.0L-805 626.0L235 20.0ZM235 20.0L-584 626.0L-363 626.0L235 20.0ZM235 20.0L-141 626.0L80 626.0L235 20.0ZM235 20.0L301 626.0L522 626.0L235 20.0ZM235 20.0L743 626.0L965 626.0L235 20.0ZM235 20.0L1186 626.0L1407 626.0L235 20.0ZM235 20.0L1628 626.0L1850 626.0L235 20.0ZM235 20.0L2071 626.0L2292 626.0L235 20.0ZM235 20.0L2513 626.0L2735 626.0L235 20.0ZM235 20.0L2956 626.0L3000 589.5L235 20.0ZM235 20.0L3000 549.7L3000 515.1L235 20.0ZM235 20.0L3000 484.7L3000 457.9L235 20.0ZM235 20.0L3000 433.9L3000 412.5L235 20.0ZM235 20.0L3000 393.2L3000 375.6L235 20.0ZM235 20.0L3000 359.7L3000 345.1L235 20.0ZM235 20.0L3000 331.7L3000 319.4L235 20.0ZM235 20.0L3000 308.0L3000 297.5L235 20.0ZM235 20.0L3000 287.7L3000 278.5L235 20.0ZM235 20.0L3000 270.0L3000 262.0L235 20.0ZM235 20.0L3000 254.5L3000 247.5L235 20.0ZM235 20.0L3000 240.8L3000 234.6L235 20.0ZM235 20.0L3000 228.7L3000 223.1L235 20.0ZM235 20.0L3000 217.8L3000 212.7L235 20.0ZM235 20.0L3000 208.0L3000 203.4L235 20.0ZM235 20.0L3000 199.1L3000 194.9L235 20.0ZM235 20.0L3000 191.0L3000 187.2L235 20.0ZM235 20.0L3000 183.6L3000 180.1L235 20.0ZM235 20.0L3000 176.8L3000 173.7L235 20.0ZM235 20.0L3000 170.6L3000 167.7L235 20.0ZM235 20.0L3000 164.8L3000 162.1L235 20.0ZM235 20.0L3000 159.5L3000 157.0L235 20.0ZM235 20.0L3000 154.5L3000 152.2L235 20.0ZM235 20.0L3000 149.9L3000 147.7L235 20.0ZM-34 20.0L-3000 382.8L-3000 423.1L-34 20.0ZM-34 20.0L-3000 473.5L-3000 538.3L-34 20.0ZM-34 20.0L-3000 624.7L-2511 626.0L-34 20.0ZM-34 20.0L-2015 626.0L-1520 626.0L-34 20.0ZM-34 20.0L-1025 626.0L-529 626.0L-34 20.0ZM-34 20.0L-34 626.0L461 626.0L-34 20.0ZM-34 20.0L957 626.0L1452 626.0L-34 20.0ZM-34 20.0L1948 626.0L2443 626.0L-34 20.0ZM-34 20.0L2938 626.0L3000 550.2L-34 20.0ZM-34 20.0L3000 483.9L3000 432.4L-34 20.0ZM-34 20.0L3000 391.1L3000 357.4L-34 20.0ZM-34 20.0L3000 329.3L3000 305.5L-34 20.0ZM-34 20.0L3000 285.1L3000 267.4L-34 20.0ZM-34 20.0L3000 252.0L3000 238.3L-34 20.0ZM-34 20.0L3000 226.2L3000 215.3L-34 20.0ZM-34 20.0L3000 205.6L3000 196.7L-34 20.0ZM-34 20.0L3000 188.7L3000 181.4L-34 20.0ZM-34 20.0L3000 174.6L3000 168.5L-34 20.0ZM-34 20.0L3000 162.7L3000 157.5L-34 20.0ZM-34 20.0L3000 152.5L3000 148.0L-34 20.0ZM-34 20.0L3000 143.7L3000 139.7L-34 20.0ZM-34 20.0L3000 136.0L3000 132.5L-34 20.0ZM-34 20.0L3000 129.2L3000 126.0L-34 20.0ZM-34 20.0L3000 123.1L3000 120.3L-34 20.0ZM-34 20.0L3000 117.7L3000 115.2L-34 20.0ZM-34 20.0L3000 112.8L3000 110.5L-34 20.0ZM-34 20.0L3000 108.4L3000 106.3L-34 20.0ZM-34 20.0L3000 104.3L3000 102.5L-34 20.0ZM-34 20.0L3000 100.7L3000 99.0L-34 20.0ZM-34 20.0L3000 97.3L3000 95.7L-34 20.0ZM-34 20.0L3000 94.2L3000 92.8L-34 20.0ZM-34 20.0L3000 91.4L3000 90.0L-34 20.0ZM-34 20.0L3000 88.7L3000 87.5L-34 20.0ZM-34 20.0L3000 86.3L3000 85.1L-34 20.0ZM-34 20.0L3000 84.0L3000 82.9L-34 20.0ZM-34 20.0L3000 81.9L3000 80.8L-34 20.0Z" fill="#bdb9b8" fill-rule="evenodd"/><path d="M235 20.0L-3000 168.4M235 20.0L-3000 173.6M235 20.0L-3000 179.1M235 20.0L-3000 185.0M235 20.0L-3000 191.4M235 20.0L-3000 198.3M235 20.0L-3000 205.8M235 20.0L-3000 213.9M235 20.0L-3000 222.8M235 20.0L-3000 232.5M235 20.0L-3000 243.2M235 20.0L-3000 255.0M235 20.0L-3000 268.2M235 20.0L-3000 282.9M235 20.0L-3000 299.5M235 20.0L-3000 318.3M235 20.0L-3000 339.9M235 20.0L-3000 364.8M235 20.0L-3000 393.9M235 20.0L-3000 428.3M235 20.0L-3000 469.8M235 20.0L-3000 520.6M235 20.0L-3000 584.4M235 20.0L-2796 626.0M235 20.0L-2354 626.0M235 20.0L-1911 626.0M235 20.0L-1469 626.0M235 20.0L-1026 626.0M235 20.0L-584 626.0M235 20.0L-141 626.0M235 20.0L301 626.0M235 20.0L743 626.0M235 20.0L1186 626.0M235 20.0L1628 626.0M235 20.0L2071 626.0M235 20.0L2513 626.0M235 20.0L2956 626.0M235 20.0L3000 549.7M235 20.0L3000 484.7M235 20.0L3000 433.9M235 20.0L3000 393.2M235 20.0L3000 359.7M235 20.0L3000 331.7M235 20.0L3000 308.0M235 20.0L3000 287.7M235 20.0L3000 270.0M235 20.0L3000 254.5M235 20.0L3000 240.8M235 20.0L3000 228.7M235 20.0L3000 217.8M235 20.0L3000 208.0M235 20.0L3000 199.1M235 20.0L3000 191.0M235 20.0L3000 183.6M235 20.0L3000 176.8M235 20.0L3000 170.6M235 20.0L3000 164.8M235 20.0L3000 159.5M235 20.0L3000 154.5M235 20.0L3000 149.9M-34 20.0L-3000 382.8M-34 20.0L-3000 473.5M-34 20.0L-3000 624.7M-34 20.0L-2015 626.0M-34 20.0L-1025 626.0M-34 20.0L-34 626.0M-34 20.0L957 626.0M-34 20.0L1948 626.0M-34 20.0L2938 626.0M-34 20.0L3000 483.9M-34 20.0L3000 391.1M-34 20.0L3000 329.3M-34 20.0L3000 285.1M-34 20.0L3000 252.0M-34 20.0L3000 226.2M-34 20.0L3000 205.6M-34 20.0L3000 188.7M-34 20.0L3000 174.6M-34 20.0L3000 162.7M-34 20.0L3000 152.5M-34 20.0L3000 143.7M-34 20.0L3000 136.0M-34 20.0L3000 129.2M-34 20.0L3000 123.1M-34 20.0L3000 117.7M-34 20.0L3000 112.8M-34 20.0L3000 108.4M-34 20.0L3000 104.3M-34 20.0L3000 100.7M-34 20.0L3000 97.3M-34 20.0L3000 94.2M-34 20.0L3000 91.4M-34 20.0L3000 88.7M-34 20.0L3000 86.3M-34 20.0L3000 84.0M-34 20.0L3000 81.9" stroke="#4a484e" stroke-width="0.45" fill="none" opacity="0.75"/><linearGradient id="hzfc200190" x1="0" y1="0" x2="0" y2="1"><stop offset="0" stop-color="#cfcdd2"/><stop offset=".3" stop-color="#cfcdd2" stop-opacity=".85"/><stop offset=".65" stop-color="#cfcdd2" stop-opacity=".45"/><stop offset="1" stop-color="#cfcdd2" stop-opacity="0"/></linearGradient><rect x="-60" y="20" width="520" height="22" fill="url(#hzfc200190)"/></g><path d="M176 181 L226 167.5 L251 167.5 L276 184 L234.5 189 L184 209 L167 230 L160 230 Z" fill="#6c6c86" opacity=".85" filter="url(#shc11)"/><g transform="translate(134 57) scale(1.08 1.0)">
<path d="M-21 40 L-30 44 L-40 56 L-48 70 L-52 77 L-44 82 L-36 70 L-28 58 L-20 52Z" fill="#8c5e46"/>
<path d="M-47 54 L-30 52 L-26 72 L-49 76Z" fill="#6e6238" opacity=".95"/>
<path d="M-50 72 L-38 70 L-34 82 L-44 98 L-54 100 L-60 92 L-58 84Z" fill="#5a5030"/>
<path d="M-52 73 L-37 70 L-36 74 L-52 77Z" fill="#c0b898" opacity=".8"/>
<path d="M-63 91 L-55 90 L-52 101 L-60 103 L-64 99Z" fill="#3a2c22"/>
<path d="M20 44 L32 50 L40 62 L46 72 L40 76 L32 66 L22 58Z" fill="#8c5e46"/>
<path d="M34 70 L48 68 L60 80 L66 92 L60 96 L48 88 L38 82Z" fill="#5e5432"/>
<path d="M36 70 L48 68 L50 72 L38 74Z" fill="#c0b898" opacity=".8"/>
<path d="M61 90 L68 92 L68 101 L62 102 L59 96Z" fill="#3a2c22"/>
<path d="M-22 36 L11 36 L22 47 L23 70 L21 89 L-21 89 L-23 70 L-23 46Z" fill="#2e3550"/>
<path d="M-20 37 L10 37 L14 46 L4 52 L-8 52 L-20 47Z" fill="#9a6a50"/>
<path d="M-19 50 L-13 45 L20 84 L14 89Z" fill="#8a7a48"/>
<path d="M12 46 L17 50 L-15 86 L-20 82Z" fill="#7a6c40"/>
<circle cx="-2" cy="64" r="3.6" fill="#4a6a9a" stroke="#1a2030" stroke-width="1"/>
<path d="M9 40 L20 34 L28 31 L34 38 L46 45 L60 54 L44 55 L28 54 L16 56 L12 50Z" fill="#2e3448" stroke="#9aa0b0" stroke-width=".6" stroke-dasharray=".8 .6"/>
<path d="M-23 85 L22 85 L24 102 L-23 102Z" fill="#262c42"/>
<path d="M18 84 L25 82 L26 98 L20 100Z" fill="#3a4868"/>
<rect x="-10.5" y="89" width="19.5" height="8" fill="#c8c8c8"/>
<path d="M-22 101 L-1 101 L-2 153 L-22 153Z" fill="#8c7c44"/>
<path d="M1 101 L24 101 L23 153 L2 153Z" fill="#8a7a42"/>
<path d="M-21 110 L-4 138 M2 108 L22 144 M-19 140 L-3 118 M5 140 L22 116" stroke="#4a4020" stroke-width=".8"/>
<path d="M-25 152 L-1 152 L-2 176 L-24 176Z M1 152 L25 152 L25 176 L3 176Z" fill="#3c4462"/>
<path d="M-25 150 L-1 150 L-1 158 L-25 158Z M1 150 L25 150 L25 158 L1 158Z" fill="#b8b098" opacity=".85"/>
<path d="M-13 23 L11 23 L10.5 36 L-12 36Z" fill="#7e7050"/>
<path d="M-13 25 Q-14 11 -1 10 Q12 11 12 25Z" fill="#3e4252"/>
<path d="M-4 23 Q-4 13 -1 11 Q2 13 3 23Z" fill="#c8ccd6"/>
<path d="M-1 0 L2 12 L-4 12Z M-10.5 9 L-4 14 L-8 17Z M9 8 L5 16 L2 14Z M-16 20 L-9 17 L-9 22Z M14.5 20 L8 22 L8 17Z" fill="#3a4052"/>
</g></svg></div></div><div class="bd"></div></div><div class="cell" style="left:1820px;top:689px"><div class="a menu"></div><div class="a tabs"></div><div class="a tb"></div><div class="a ptab"></div><svg class="a" style="left:2px;top:2px" width="14" height="14" viewBox="0 0 14 14"><circle cx="7" cy="7" r="6" fill="#1a1a1a" stroke="#9a9a9a" stroke-width=".7"/><path d="M4.2 4.3 L5.6 4 L5.6 8.8 Q6.6 9.6 7.6 8.8 L7.6 4.6 L9.1 4.2 L9.1 9.6 Q6.6 11 4.2 9.6Z" fill="#c8c8c8"/></svg><i style="left:21.5px;top:1.8px;font-size:3.8px;color:#c8c8c8;">File</i><i style="left:35.5px;top:1.8px;font-size:3.8px;color:#c8c8c8;">Edit</i><i style="left:51px;top:1.8px;font-size:3.8px;color:#c8c8c8;">Asset</i><i style="left:68px;top:1.8px;font-size:3.8px;color:#c8c8c8;">View</i><i style="left:84.5px;top:1.8px;font-size:3.8px;color:#c8c8c8;">Debug</i><i style="left:103.5px;top:1.8px;font-size:3.8px;color:#c8c8c8;">Window</i><i style="left:123px;top:1.8px;font-size:3.8px;color:#c8c8c8;">Tools</i><i style="left:140.5px;top:1.8px;font-size:3.8px;color:#c8c8c8;">Help</i><b style="left:564px;top:4px;width:4px;height:.6px;background:#aaa;"></b><div class="a" style="left:578px;top:2.2px;width:3.4px;height:3.2px;border:.6px solid #bbb"></div><i style="left:591.5px;top:1.3px;font-size:4.6px;color:#ddd;">✕</i><svg class="a" style="left:22.5px;top:10px" width="5" height="5" viewBox="0 0 5 5"><path d="M.5 2.5 L2.5 .6 L4.5 2.5 V4.5 H.5Z" fill="none" stroke="#666" stroke-width=".5"/></svg><svg class="a" style="left:33.5px;top:10.3px" width="5" height="4.5" viewBox="0 0 5 4.5"><path d="M2.5 .2 L4.8 4.3 H.2Z" fill="#d8a020"/></svg><i style="left:41px;top:10.8px;font-size:3.8px;color:#c0c0c0;">DefaultMap</i><b style="left:97px;top:8.5px;width:65px;height:8.5px;background:#1e1e1e;border-radius:1px 1px 0 0"></b><svg class="a" style="left:100px;top:9.5px" width="5" height="6" viewBox="0 0 5 6"><circle cx="2.5" cy="1.6" r="1.3" fill="#3a7ee0"/><path d="M.4 5.6 Q.4 3.2 2.5 3.2 Q4.6 3.2 4.6 5.6Z" fill="#3a7ee0"/></svg><i style="left:107px;top:10.8px;font-size:3.8px;color:#d0d0d0;">BP_Brute</i><i style="left:155.5px;top:10.3px;font-size:4.9px;">×</i><i style="left:552px;top:10.8px;font-size:3.6px;color:#8a8a8a;">Parent class: <u>Character</u></i><b style="left:5.5px;top:20px;width:5px;height:6px;background:#c8c8c8;border-radius:.5px"></b><b style="left:19.5px;top:20.5px;width:5px;height:5.5px;background:#a8a8a8;border-radius:.5px"></b><b style="left:35px;top:19.5px;width:6px;height:7px;background:#d8c020;border-radius:.5px"></b><b style="left:36.5px;top:21.5px;width:3px;height:3px;background:#58a030;"></b><i style="left:44px;top:22px;font-size:3.9px;">Compile</i><i style="left:62.5px;top:21.8px;font-size:4.2px;color:#888;">:</i><b style="left:71px;top:21.5px;width:3px;height:3.5px;background:#bbb;"></b><i style="left:76px;top:22px;font-size:3.9px;">Diff v</i><b style="left:100px;top:20.5px;width:4.5px;height:4.5px;border:.6px solid #ccc;border-radius:50%"></b><i style="left:106px;top:22px;font-size:3.9px;">Find</i><b style="left:121px;top:20.5px;width:5px;height:5px;background:#888;border-radius:1px"></b><i style="left:128.5px;top:22px;font-size:3.9px;">Hide Unrelated</i><i style="left:160px;top:21.8px;font-size:4.2px;color:#888;">:</i><b style="left:170.5px;top:20.5px;width:5px;height:5px;border:.7px solid #bbb;border-radius:50%"></b><i style="left:177.5px;top:22px;font-size:3.9px;">Class Settings</i><b style="left:211px;top:20.5px;width:5px;height:5px;background:#bbb;clip-path:polygon(0 100%,20% 100%,100% 20%,80% 0)"></b><i style="left:218.5px;top:22px;font-size:3.9px;">Class Defaults</i><b style="left:251.5px;top:20.5px;width:5px;height:5px;background:#aaa;clip-path:polygon(0 0,100% 60%,55% 65%,40% 100%)"></b><i style="left:259px;top:22px;font-size:3.9px;">Simulation</i><b style="left:288px;top:18.8px;width:44px;height:9.5px;background:#232323;border-radius:1px"></b><b style="left:291.7px;top:20.8px;width:4px;height:5px;background:#40c040;clip-path:polygon(0 0,100% 50%,0 100%)"></b><b style="left:300.5px;top:21px;width:2.6px;height:4.6px;background:#4a5a4a;clip-path:polygon(0 0,100% 50%,0 100%)"></b><b style="left:309px;top:21.2px;width:4px;height:4.2px;background:#555;"></b><b style="left:317.5px;top:21px;width:3.8px;height:4.8px;background:#bbb;clip-path:polygon(0 0,100% 50%,0 100%)"></b><b style="left:328px;top:21px;width:.6px;height:5px;background:#555;"></b><b style="left:338px;top:19.5px;width:55px;height:7px;background:#0c0c0c;border-radius:1px"></b><i style="left:340px;top:22px;font-size:3.7px;">No debug object selected v</i><b style="left:397px;top:21px;width:3.5px;height:4px;background:#777;"></b><div class="a sb"></div><b style="left:3px;top:320.5px;width:3px;height:3.5px;background:#999;"></b><i style="left:8px;top:320.7px;font-size:3.7px;color:#aaa;">Content Drawer</i><b style="left:44px;top:320.5px;width:3px;height:3.5px;background:#bbb;"></b><i style="left:50px;top:320.7px;font-size:3.7px;color:#aaa;">Output Log</i><b style="left:78px;top:320.7px;width:4px;height:3.2px;border:.5px solid #999"></b><i style="left:84px;top:320.7px;font-size:3.7px;color:#aaa;">Cmd v</i><b style="left:103px;top:319.5px;width:93px;height:5.5px;background:#0c0c0c;border-radius:1px"></b><i style="left:105.5px;top:320.6px;font-size:3.5px;color:#555;">Enter Console Command</i><b style="left:518px;top:320.5px;width:3px;height:3.6px;background:#aaa;"></b><i style="left:524px;top:320.7px;font-size:3.7px;color:#aaa;">1 Unsaved</i><b style="left:553px;top:320.5px;width:2.5px;height:3.8px;background:#aaa;"></b><i style="left:558px;top:320.7px;font-size:3.7px;color:#aaa;">Revision Control v</i><div class="a task"></div><b style="left:3.3px;top:329.5px;width:1.9px;height:1.9px;background:#fff;"></b><b style="left:5.6px;top:329.5px;width:1.9px;height:1.9px;background:#fff;"></b><b style="left:3.3px;top:331.8px;width:1.9px;height:1.9px;background:#fff;"></b><b style="left:5.6px;top:331.8px;width:1.9px;height:1.9px;background:#fff;"></b><b style="left:15.5px;top:329.5px;width:4.5px;height:4px;background:#c040e0;border-radius:1px;transform:skewX(-10deg)"></b><b style="left:27px;top:329.8px;width:4.8px;height:3.6px;background:#e8c040;border-radius:.4px"></b><div class="a" style="left:38.6px;top:329.2px;width:4.4px;height:4.4px;border-radius:50%;background:conic-gradient(#e33 0 33%,#fc3 0 66%,#3a5 0)"></div><b style="left:48.5px;top:327.5px;width:8.5px;height:8.5px;background:#3a3d44;"></b><b style="left:50.5px;top:329.3px;width:4.5px;height:4.5px;border:.6px solid #aaa;border-radius:50%"></b><b style="left:61.5px;top:329.4px;width:4.2px;height:4.2px;border:.6px solid #888;border-radius:50%"></b><i style="left:535px;top:329.4px;font-size:4.1px;">^</i><b style="left:542.5px;top:329.2px;width:1.6px;height:4.2px;background:#ddd;border-radius:1px"></b><b style="left:549px;top:329.6px;width:3.8px;height:3px;border:.5px solid #ccc"></b><b style="left:555.5px;top:330px;width:2px;height:2.5px;background:#ccc;clip-path:polygon(0 30%,40% 30%,100% 0,100% 100%,40% 70%,0 70%)"></b><i style="left:561px;top:329.9px;font-size:3px;color:#ccc;">ENG</i><i style="left:575px;top:328px;font-size:3.5px;color:rgba(230,230,230,.55);">Udemy</i><b style="left:588.5px;top:329.4px;width:4.5px;height:3.6px;background:#e8e8e8;border-radius:.3px"></b><div class="a lp"></div><b style="left:1px;top:31px;width:50px;height:9px;background:#1a1a1a;border-radius:1px 1px 0 0"></b><b style="left:3px;top:33px;width:3px;height:3.5px;border:.5px solid #aaa"></b><i style="left:8.5px;top:33.6px;font-size:3.8px;color:#c0c0c0;">Components</i><i style="left:44.5px;top:32.9px;font-size:4.6px;color:#aaa;">×</i><b style="left:7px;top:41px;width:17px;height:6px;background:#2a2a2a;border-radius:1px"></b><b style="left:9px;top:42.5px;width:1px;height:3px;background:#50c050;"></b><b style="left:8px;top:43.5px;width:3px;height:1px;background:#50c050;"></b><i style="left:12.5px;top:42.4px;font-size:3.8px;color:#ccc;">Add</i><div class="srch" style="left:27px;top:41px;width:61px;height:6px"></div><svg class="a" style="left:29px;top:42px" width="4" height="4" viewBox="0 0 4 4"><circle cx="1.6" cy="1.6" r="1.15" fill="none" stroke="#aaa" stroke-width=".55"/><path d="M2.4 2.4L3.6 3.6" stroke="#aaa" stroke-width=".6"/></svg><i style="left:35px;top:42.6px;font-size:3.5px;color:#444;">Search</i><b style="left:5.9px;top:53.6px;width:2.6px;height:3.6px;background:#999;border-radius:.6px"></b><i style="left:10.4px;top:53.2px;font-size:3.8px;color:#b8b8b8;letter-spacing:-.05px">BP_Brute (Self)</i><b style="left:14.1px;top:61.1px;width:2.6px;height:3.6px;background:#999;border-radius:.6px"></b><i style="left:18.6px;top:60.7px;font-size:3.8px;color:#b8b8b8;letter-spacing:-.05px">Capsule Component (CollisionCylinder)</i><b style="left:17.3px;top:68.7px;width:2.6px;height:3.6px;background:#999;border-radius:.6px"></b><i style="left:21.8px;top:68.3px;font-size:3.8px;color:#b8b8b8;letter-spacing:-.05px">Arrow Component (Arrow) <u>Edit in C++</u></i><b style="left:17.3px;top:76.2px;width:2.6px;height:3.6px;background:#999;border-radius:.6px"></b><i style="left:21.8px;top:75.8px;font-size:3.8px;color:#b8b8b8;letter-spacing:-.05px">CameraBoom</i><b style="left:20.3px;top:83.8px;width:2.6px;height:3.6px;background:#999;border-radius:.6px"></b><i style="left:24.8px;top:83.4px;font-size:3.8px;color:#b8b8b8;letter-spacing:-.05px">FollowCamera</i><b style="left:17.3px;top:91.3px;width:2.6px;height:3.6px;background:#999;border-radius:.6px"></b><i style="left:21.8px;top:90.9px;font-size:3.8px;color:#b8b8b8;letter-spacing:-.05px">Mesh (CharacterMesh0)  <u>Edit in C++</u></i><b style="left:14.1px;top:102.2px;width:2.6px;height:3.6px;background:#999;border-radius:.6px"></b><i style="left:18.6px;top:101.8px;font-size:3.8px;color:#b8b8b8;letter-spacing:-.05px">Character Movement (CharMoveComp)</i><b style="left:8px;top:97.3px;width:82px;height:.5px;background:#333;"></b><b style="left:1px;top:118px;width:50px;height:8.5px;background:#1a1a1a;border-radius:1px 1px 0 0"></b><b style="left:3px;top:120px;width:3px;height:3.5px;background:#888;"></b><i style="left:9px;top:120.4px;font-size:3.8px;color:#c0c0c0;">My Blueprint</i><i style="left:44.5px;top:119.6px;font-size:4.6px;color:#aaa;">×</i><b style="left:1px;top:126.5px;width:90px;height:.5px;background:#0e0e0e;"></b><b style="left:6px;top:128px;width:18px;height:5.5px;background:#262626;border-radius:1px"></b><b style="left:9px;top:129.3px;width:1px;height:3px;background:#50c050;"></b><b style="left:8px;top:130.3px;width:3px;height:1px;background:#50c050;"></b><i style="left:12.5px;top:129.4px;font-size:3.8px;color:#ccc;">Add</i><div class="srch" style="left:26px;top:128px;width:54px;height:5.5px"></div><svg class="a" style="left:28px;top:128.8px" width="4" height="4" viewBox="0 0 4 4"><circle cx="1.6" cy="1.6" r="1.15" fill="none" stroke="#aaa" stroke-width=".55"/><path d="M2.4 2.4L3.6 3.6" stroke="#aaa" stroke-width=".6"/></svg><b style="left:83.6px;top:128.6px;width:3.6px;height:3.6px;border:.6px solid #aaa;border-radius:50%"></b><div class="hdr" style="top:137.29999999999998px"></div><i style="left:7px;top:139.2px;font-size:3.2px;color:#c8c8c8;font-weight:bold;">GRAPHS</i><i style="left:2.8px;top:139.2px;font-size:3.2px;color:#888;">v</i><b style="left:83.6px;top:138.7px;width:3.8px;height:3.8px;border:.6px solid #999;border-radius:50%"></b><b style="left:7px;top:147.8px;width:3px;height:2.6px;background:#aaa;"></b><i style="left:12.5px;top:147.9px;font-size:3.6px;">EventGraph</i><b style="left:10.5px;top:155.8px;width:2.8px;height:2.8px;border:.6px solid #ccc;border-radius:50%"></b><i style="left:15.5px;top:156px;font-size:3.6px;color:#b8b8b8;">Event BeginPlay</i><b style="left:10.5px;top:163.5px;width:2.8px;height:2.8px;border:.6px solid #ccc;border-radius:50%"></b><i style="left:15.5px;top:163.7px;font-size:3.6px;color:#b8b8b8;">EnhancedInputAction IA_Move</i><b style="left:10.5px;top:171.2px;width:2.8px;height:2.8px;border:.6px solid #ccc;border-radius:50%"></b><i style="left:15.5px;top:171.4px;font-size:3.6px;color:#b8b8b8;">EnhancedInputAction IA_Look</i><div class="hdr" style="top:178.69999999999996px"></div><i style="left:7px;top:180.6px;font-size:3.2px;color:#c8c8c8;font-weight:bold;">FUNCTIONS <span style='color:#666;font-weight:normal'>(14 OVERRIDABLE)</span></i><i style="left:2.8px;top:180.6px;font-size:3.2px;color:#888;">v</i><b style="left:57px;top:179.4px;width:22px;height:5.2px;background:#0e0e0e;border-radius:1px"></b><i style="left:59px;top:180.8px;font-size:3.2px;">Override v</i><b style="left:83.6px;top:180.1px;width:3.8px;height:3.8px;border:.6px solid #999;border-radius:50%"></b><i style="left:9px;top:189.7px;font-size:3.7px;color:#aaa;">ƒ</i><i style="left:13px;top:189.9px;font-size:3.6px;">Construction Script</i><b style="left:2px;top:195.5px;width:89px;height:7.4px;background:#2a5a9a;"></b><i style="left:9px;top:197.5px;font-size:3.7px;color:#aaa;">ƒ</i><i style="left:13px;top:197.7px;font-size:3.6px;color:#eef;">Move</i><div class="hdr" style="top:204.1px"></div><i style="left:7px;top:206px;font-size:3.2px;color:#c8c8c8;font-weight:bold;">MACROS</i><i style="left:2.8px;top:206px;font-size:3.2px;color:#888;">v</i><b style="left:83.6px;top:205.5px;width:3.8px;height:3.8px;border:.6px solid #999;border-radius:50%"></b><div class="hdr" style="top:213.4px"></div><i style="left:7px;top:215.3px;font-size:3.2px;color:#c8c8c8;font-weight:bold;">VARIABLES</i><i style="left:2.8px;top:215.3px;font-size:3.2px;color:#888;">v</i><b style="left:83.6px;top:214.8px;width:3.8px;height:3.8px;border:.6px solid #999;border-radius:50%"></b><i style="left:3px;top:222.9px;font-size:3.2px;color:#888;">v</i><i style="left:6px;top:223px;font-size:3.5px;color:#c8c8c8;font-weight:bold;">Components</i><i style="left:10px;top:229px;font-size:3.5px;color:#a8a8a8;">FollowCamera</i><b style="left:58px;top:229.7px;width:3.4px;height:1.8px;background:#30a0e0;border-radius:1px"></b><i style="left:10px;top:235.2px;font-size:3.5px;color:#a8a8a8;">CameraBoom</i><b style="left:58px;top:235.9px;width:3.4px;height:1.8px;background:#30a0e0;border-radius:1px"></b><div class="hdr" style="top:240.99999999999997px"></div><i style="left:7px;top:242.9px;font-size:3.2px;color:#c8c8c8;font-weight:bold;">EVENT DISPATCHERS</i><i style="left:2.8px;top:242.9px;font-size:3.2px;color:#888;">v</i><b style="left:83.6px;top:242.4px;width:3.8px;height:3.8px;border:.6px solid #999;border-radius:50%"></b><b style="left:93.5px;top:33.2px;width:3.5px;height:3px;background:#999;"></b><i style="left:99px;top:33.6px;font-size:3.8px;color:#a8a8a8;">Viewport</i><i style="left:145px;top:33.2px;font-size:3.9px;color:#aaa;">ƒ</i><i style="left:150.5px;top:33.6px;font-size:3.8px;color:#a8a8a8;">Construction Scr...</i><b style="left:191.5px;top:31px;width:49px;height:9px;background:#1e1e1e;border-radius:1px 1px 0 0"></b><b style="left:194px;top:33.2px;width:3.4px;height:3.4px;border:.5px dashed #bbb"></b><i style="left:199.5px;top:33.6px;font-size:3.8px;color:#d0d0d0;">EventGraph</i><i style="left:236px;top:32.9px;font-size:4.6px;color:#aaa;">×</i><i style="left:248px;top:33.2px;font-size:3.9px;color:#aaa;">ƒ</i><i style="left:253.5px;top:33.6px;font-size:3.8px;color:#a8a8a8;">Move</i><b style="left:450px;top:31px;width:50px;height:9px;background:#1c1c1c;border-radius:1px 1px 0 0"></b><b style="left:452.5px;top:33px;width:3px;height:3.6px;background:#ccc;clip-path:polygon(0 100%,25% 100%,100% 25%,75% 0)"></b><i style="left:458.5px;top:33.6px;font-size:3.8px;color:#c8c8c8;">Details</i><i style="left:492.5px;top:32.9px;font-size:4.6px;color:#aaa;">×</i><div class="a graph"></div><div class="a" style="left:92px;top:40px;width:357px;height:278px;overflow:hidden"><div class="a" style="left:-92px;top:-40px;width:600px;height:337px"><svg class="a" style="left:0;top:0" width="600" height="337" viewBox="0 0 600 337"><path d="M173 90.8 H422" fill="none" stroke="#eeeeee" stroke-width="0.9"/><path d="M297.6 115 H324" fill="none" stroke="#8a86b0" stroke-width="0.8"/><path d="M386.7 115 C400.7 115 410.3 110.6 424.3 110.6" fill="none" stroke="#d8a820" stroke-width="0.8"/><path d="M173 140.3 C260 140.3 330 125 424.3 120.5" fill="none" stroke="#3fc23f" stroke-width="0.9"/><path d="M173 149.4 C230 150 300 170 340 178 C370 184 390 192 419.8 195.5" fill="none" stroke="#3fc23f" stroke-width="0.9"/><path d="M386 194.7 H419.8" fill="none" stroke="#8a86b0" stroke-width="0.8"/></svg><div class="node" style="left:99.7px;top:78px;width:73.5px;height:111.3px;"><div class="nh" style="height:6.1px;background:linear-gradient(90deg,#a01414,#6a1010 55%,#3a1414)"></div></div><i style="left:104.2px;top:79.3px;font-size:3.7px;color:#f4f4f4;">EnhancedInputAction IA_Move</i><div class="a" style="left:165.79999999999998px;top:89.1px;width:3px;height:3.4px;background:#f0f0f0;clip-path:polygon(0 0,60% 0,100% 50%,60% 100%,0 100%)"></div><i style="left:164.8px;top:89.1px;font-size:3.5px;color:#d8d8d8;transform:translateX(-100%)">Triggered</i><svg class="a" style="left:165.6px;top:98.8px" width="3.4" height="3.8" viewBox="0 0 3.4 3.8"><path d="M.3 .3H2L3.1 1.9L2 3.5H.3Z" fill="none" stroke="#d8d8d8" stroke-width=".5"/></svg><i style="left:164.8px;top:99px;font-size:3.5px;color:#d8d8d8;transform:translateX(-100%)">Started</i><svg class="a" style="left:165.6px;top:108.69999999999999px" width="3.4" height="3.8" viewBox="0 0 3.4 3.8"><path d="M.3 .3H2L3.1 1.9L2 3.5H.3Z" fill="none" stroke="#d8d8d8" stroke-width=".5"/></svg><i style="left:164.8px;top:108.9px;font-size:3.5px;color:#d8d8d8;transform:translateX(-100%)">Ongoing</i><svg class="a" style="left:165.6px;top:118.6px" width="3.4" height="3.8" viewBox="0 0 3.4 3.8"><path d="M.3 .3H2L3.1 1.9L2 3.5H.3Z" fill="none" stroke="#d8d8d8" stroke-width=".5"/></svg><i style="left:164.8px;top:118.8px;font-size:3.5px;color:#d8d8d8;transform:translateX(-100%)">Canceled</i><svg class="a" style="left:165.6px;top:128.5px" width="3.4" height="3.8" viewBox="0 0 3.4 3.8"><path d="M.3 .3H2L3.1 1.9L2 3.5H.3Z" fill="none" stroke="#d8d8d8" stroke-width=".5"/></svg><i style="left:164.8px;top:128.7px;font-size:3.5px;color:#d8d8d8;transform:translateX(-100%)">Completed</i><div class="a" style="left:165.89999999999998px;top:139.0px;width:2.6px;height:2.6px;border-radius:50%;background:#3fd23f"></div><i style="left:164.8px;top:138.6px;font-size:3.5px;color:#d8d8d8;transform:translateX(-100%)">Action Value X</i><div class="a" style="left:165.89999999999998px;top:148.1px;width:2.6px;height:2.6px;border-radius:50%;background:#3fd23f"></div><i style="left:164.8px;top:147.7px;font-size:3.5px;color:#d8d8d8;transform:translateX(-100%)">Action Value Y</i><div class="a" style="left:165.79999999999998px;top:157.4px;width:2.8px;height:2.8px;border-radius:50%;border:.55px solid #3fd23f"></div><i style="left:164.8px;top:157.1px;font-size:3.5px;color:#d8d8d8;transform:translateX(-100%)">Elapsed Seconds</i><div class="a" style="left:165.79999999999998px;top:166.79999999999998px;width:2.8px;height:2.8px;border-radius:50%;border:.55px solid #3fd23f"></div><i style="left:164.8px;top:166.5px;font-size:3.5px;color:#d8d8d8;transform:translateX(-100%)">Triggered Seconds</i><div class="a" style="left:165.79999999999998px;top:176.2px;width:2.8px;height:2.8px;border-radius:50%;border:.55px solid #40b8c8"></div><i style="left:164.8px;top:175.9px;font-size:3.5px;color:#d8d8d8;transform:translateX(-100%)">Input Action</i><b style="left:137px;top:146px;width:33.7px;height:7px;background:rgba(60,200,60,.75);border-radius:1px"></b><i style="left:157.2px;top:183.3px;font-size:3.9px;">^</i><b style="left:102.5px;top:72.8px;width:4.5px;height:2.8px;background:#c8c8c8;border-radius:.5px"></b><div class="node" style="left:224px;top:97.7px;width:73.6px;height:23.5px;"><div class="nh" style="height:11.2px;background:linear-gradient(90deg,#4a8a3a,#3a6a30 60%,#2a3a28)"></div></div><i style="left:228.5px;top:99.9px;font-size:3.5px;color:#f4f4f4;">ƒ Get Control Rotation</i><i style="left:232px;top:103.7px;font-size:2.8px;color:rgba(200,230,255,.55);">Target is Pawn</i><div class="a" style="left:228.6px;top:114.1px;width:2.8px;height:2.8px;border-radius:50%;border:.55px solid #58b8f0"></div><i style="left:233px;top:113.9px;font-size:3.3px;color:#d8d8d8;">Target</i><div class="a" style="left:289.9px;top:113.7px;width:2.6px;height:2.6px;border-radius:50%;background:#a8a0f0"></div><i style="left:288.8px;top:113.4px;font-size:3.3px;color:#d8d8d8;transform:translateX(-100%)">Return Value</i><b style="left:246px;top:113px;width:9px;height:4.8px;border:.5px solid #888"></b><div class="node" style="left:324px;top:102.7px;width:62.7px;height:17.3px;"><div class="nh" style="height:6.2px;background:linear-gradient(90deg,#4a8a3a,#3a6a30 60%,#2a3a28)"></div></div><i style="left:328.5px;top:104.2px;font-size:3.5px;color:#f4f4f4;">ƒ Get Forward Vector</i><div class="a" style="left:328.5px;top:113.7px;width:2.6px;height:2.6px;border-radius:50%;background:#a8a0f0"></div><i style="left:332.8px;top:113.4px;font-size:3.3px;color:#d8d8d8;">In Rot</i><div class="a" style="left:379.0px;top:113.7px;width:2.6px;height:2.6px;border-radius:50%;background:#f0c020"></div><i style="left:377.9px;top:113.4px;font-size:3.3px;color:#d8d8d8;transform:translateX(-100%)">Return Value</i><div class="node" style="left:419.3px;top:73px;width:40px;height:63px;"><div class="nh" style="height:11px;background:linear-gradient(90deg,#3a7aa0,#2c5a78 60%,#25384a)"></div></div><i style="left:423.8px;top:75.2px;font-size:3.5px;color:#f4f4f4;">ƒ Add Movement Input</i><i style="left:427.3px;top:79px;font-size:2.8px;color:rgba(200,230,255,.55);">Target is Pawn</i><div class="a" style="left:423.40000000000003px;top:88.6px;width:3px;height:3.4px;background:#f0f0f0;clip-path:polygon(0 0,60% 0,100% 50%,60% 100%,0 100%)"></div><div class="a" style="left:423.40000000000003px;top:99.3px;width:2.8px;height:2.8px;border-radius:50%;border:.55px solid #58b8f0"></div><i style="left:427.8px;top:99.1px;font-size:3.3px;color:#d8d8d8;">Target</i><div class="a" style="left:423.5px;top:109.3px;width:2.6px;height:2.6px;border-radius:50%;background:#f0c020"></div><i style="left:427.8px;top:109px;font-size:3.3px;color:#d8d8d8;">World Direction</i><div class="a" style="left:423.5px;top:119.2px;width:2.6px;height:2.6px;border-radius:50%;background:#3fd23f"></div><i style="left:427.8px;top:118.9px;font-size:3.3px;color:#d8d8d8;">Scale Value</i><div class="a" style="left:423.40000000000003px;top:129.0px;width:2.8px;height:2.8px;border-radius:50%;border:.55px solid #c02020"></div><i style="left:427.8px;top:128.8px;font-size:3.3px;color:#d8d8d8;">Force</i><div class="node" style="left:319px;top:178px;width:73px;height:23.6px;"><div class="nh" style="height:11.3px;background:linear-gradient(90deg,#4a8a3a,#3a6a30 60%,#2a3a28)"></div></div><i style="left:323.5px;top:180.3px;font-size:3.5px;color:#f4f4f4;">ƒ Get Control Rotation</i><i style="left:327px;top:184.1px;font-size:2.8px;color:rgba(200,230,255,.55);">Target is Pawn</i><div class="a" style="left:322.6px;top:194.1px;width:2.8px;height:2.8px;border-radius:50%;border:.55px solid #58b8f0"></div><i style="left:327px;top:193.9px;font-size:3.3px;color:#d8d8d8;">Target</i><div class="a" style="left:384.7px;top:193.39999999999998px;width:2.6px;height:2.6px;border-radius:50%;background:#a8a0f0"></div><i style="left:383.6px;top:193.1px;font-size:3.3px;color:#d8d8d8;transform:translateX(-100%)">Return Value</i><b style="left:341px;top:193px;width:9px;height:4.8px;border:.5px solid #888"></b><div class="node" style="left:414.4px;top:183px;width:40px;height:17.4px;"><div class="nh" style="height:6.3px;background:linear-gradient(90deg,#4a8a3a,#3a6a30 60%,#2a3a28)"></div></div><i style="left:418.9px;top:184.6px;font-size:3.5px;color:#f4f4f4;">ƒ Get Right Vector</i><div class="a" style="left:418.5px;top:193.7px;width:2.6px;height:2.6px;border-radius:50%;background:#a8a0f0"></div><i style="left:422.8px;top:193.4px;font-size:3.3px;color:#d8d8d8;">In Rot</i><b style="left:219px;top:313px;width:64px;height:5px;background:#2a5a78;border-radius:2px 2px 0 0"></b><i style="left:226px;top:313.5px;font-size:3.2px;color:#cde;">ƒ Add Controller Yaw Input</i><svg class="a" style="left:170px;top:150px;z-index:9" width="5" height="7" viewBox="0 0 5 7"><path d="M.3 .3L.3 5.6L1.6 4.4L2.6 6.6L3.5 6.2L2.5 4.1L4.3 4.1Z" fill="#fff" stroke="#000" stroke-width=".35"/></svg></div></div><div class="a gbar"></div><b style="left:95px;top:43px;width:2.6px;height:3.6px;border:.5px solid #777"></b><i style="left:99px;top:43.4px;font-size:3.2px;color:#888;">v</i><svg class="a" style="left:109.5px;top:43.5px" width="5" height="4" viewBox="0 0 5 4"><path d="M0 2L2.4 0V1.2H5V2.8H2.4V4Z" fill="#d8d8d8"/></svg><svg class="a" style="left:121.5px;top:43.5px" width="5" height="4" viewBox="0 0 5 4"><path d="M5 2L2.6 0V1.2H0V2.8H2.6V4Z" fill="#d8d8d8"/></svg><b style="left:136px;top:42.5px;width:2.6px;height:2.6px;background:#ccc;border-radius:50%"></b><b style="left:140px;top:43.2px;width:2px;height:1.8px;background:#ccc;"></b><b style="left:136px;top:46.5px;width:2px;height:1.8px;background:#ccc;"></b><b style="left:140px;top:46.5px;width:2px;height:1.8px;background:#ccc;"></b><i style="left:147px;top:42.5px;font-size:6.3px;color:#8e8e8e;">BP_Brute <span style='color:#ccc'>&gt;</span> EventGraph</i><i style="left:425px;top:42.9px;font-size:5.1px;color:#3e3e3e;">Zoom 1:1</i><div class="wm">BLUEPRINT</div><div class="a dp"></div><div class="srch" style="left:453px;top:42.5px;width:128px;height:5.5px"></div><i style="left:455.5px;top:43px;font-size:3.7px;color:#ccc;">✕</i><i style="left:461px;top:43.5px;font-size:3.6px;">rotation</i><b style="left:585.5px;top:43px;width:3.4px;height:3.6px;background:#888;"></b><b style="left:592.5px;top:43px;width:3.8px;height:3.8px;border:.6px solid #888;border-radius:50%"></b><div class="t" style="left:450px;width:149px;top:59px;text-align:center;font-size:3.1px;line-height:5px;color:#b0b0b0">All results have been filtered.<br>Try changing your active filters above.</div><b style="left:450px;top:51px;width:149px;height:.6px;background:#2a4a6a;"></b><b style="left:450px;top:51px;width:.6px;height:19px;background:#2a4a6a;"></b><b style="left:450px;top:70px;width:149px;height:.6px;background:#2a4a6a;"></b><div class="bd"></div></div><div class="cell" style="left:5px;top:1031px"><div class="a menu"></div><div class="a tabs"></div><div class="a tb"></div><div class="a ptab"></div><svg class="a" style="left:2px;top:2px" width="14" height="14" viewBox="0 0 14 14"><circle cx="7" cy="7" r="6" fill="#1a1a1a" stroke="#9a9a9a" stroke-width=".7"/><path d="M4.2 4.3 L5.6 4 L5.6 8.8 Q6.6 9.6 7.6 8.8 L7.6 4.6 L9.1 4.2 L9.1 9.6 Q6.6 11 4.2 9.6Z" fill="#c8c8c8"/></svg><i style="left:21.5px;top:1.8px;font-size:3.8px;color:#c8c8c8;">File</i><i style="left:35.5px;top:1.8px;font-size:3.8px;color:#c8c8c8;">Edit</i><i style="left:51px;top:1.8px;font-size:3.8px;color:#c8c8c8;">Asset</i><i style="left:68px;top:1.8px;font-size:3.8px;color:#c8c8c8;">View</i><i style="left:84.5px;top:1.8px;font-size:3.8px;color:#c8c8c8;">Debug</i><i style="left:103.5px;top:1.8px;font-size:3.8px;color:#c8c8c8;">Window</i><i style="left:123px;top:1.8px;font-size:3.8px;color:#c8c8c8;">Tools</i><i style="left:140.5px;top:1.8px;font-size:3.8px;color:#c8c8c8;">Help</i><b style="left:564px;top:4px;width:4px;height:.6px;background:#aaa;"></b><div class="a" style="left:578px;top:2.2px;width:3.4px;height:3.2px;border:.6px solid #bbb"></div><i style="left:591.5px;top:1.3px;font-size:4.6px;color:#ddd;">✕</i><svg class="a" style="left:22.5px;top:10px" width="5" height="5" viewBox="0 0 5 5"><path d="M.5 2.5 L2.5 .6 L4.5 2.5 V4.5 H.5Z" fill="none" stroke="#666" stroke-width=".5"/></svg><svg class="a" style="left:33.5px;top:10.3px" width="5" height="4.5" viewBox="0 0 5 4.5"><path d="M2.5 .2 L4.8 4.3 H.2Z" fill="#d8a020"/></svg><i style="left:41px;top:10.8px;font-size:3.8px;color:#c0c0c0;">DefaultMap</i><b style="left:97px;top:8.5px;width:65px;height:8.5px;background:#1e1e1e;border-radius:1px 1px 0 0"></b><svg class="a" style="left:100px;top:9.5px" width="5" height="6" viewBox="0 0 5 6"><circle cx="2.5" cy="1.6" r="1.3" fill="#3a7ee0"/><path d="M.4 5.6 Q.4 3.2 2.5 3.2 Q4.6 3.2 4.6 5.6Z" fill="#3a7ee0"/></svg><i style="left:107px;top:10.8px;font-size:3.8px;color:#d0d0d0;">BP_Brute</i><i style="left:155.5px;top:10.3px;font-size:4.9px;">×</i><i style="left:552px;top:10.8px;font-size:3.6px;color:#8a8a8a;">Parent class: <u>Character</u></i><b style="left:5.5px;top:20px;width:5px;height:6px;background:#c8c8c8;border-radius:.5px"></b><b style="left:19.5px;top:20.5px;width:5px;height:5.5px;background:#a8a8a8;border-radius:.5px"></b><b style="left:35px;top:19.5px;width:6px;height:7px;background:#d8c020;border-radius:.5px"></b><b style="left:36.5px;top:21.5px;width:3px;height:3px;background:#58a030;"></b><i style="left:44px;top:22px;font-size:3.9px;">Compile</i><i style="left:62.5px;top:21.8px;font-size:4.2px;color:#888;">:</i><b style="left:71px;top:21.5px;width:3px;height:3.5px;background:#bbb;"></b><i style="left:76px;top:22px;font-size:3.9px;">Diff v</i><b style="left:100px;top:20.5px;width:4.5px;height:4.5px;border:.6px solid #ccc;border-radius:50%"></b><i style="left:106px;top:22px;font-size:3.9px;">Find</i><b style="left:121px;top:20.5px;width:5px;height:5px;background:#888;border-radius:1px"></b><i style="left:128.5px;top:22px;font-size:3.9px;">Hide Unrelated</i><i style="left:160px;top:21.8px;font-size:4.2px;color:#888;">:</i><b style="left:170.5px;top:20.5px;width:5px;height:5px;border:.7px solid #bbb;border-radius:50%"></b><i style="left:177.5px;top:22px;font-size:3.9px;">Class Settings</i><b style="left:211px;top:20.5px;width:5px;height:5px;background:#bbb;clip-path:polygon(0 100%,20% 100%,100% 20%,80% 0)"></b><i style="left:218.5px;top:22px;font-size:3.9px;">Class Defaults</i><b style="left:251.5px;top:20.5px;width:5px;height:5px;background:#aaa;clip-path:polygon(0 0,100% 60%,55% 65%,40% 100%)"></b><i style="left:259px;top:22px;font-size:3.9px;">Simulation</i><b style="left:288px;top:18.8px;width:44px;height:9.5px;background:#232323;border-radius:1px"></b><b style="left:291.7px;top:20.8px;width:4px;height:5px;background:#40c040;clip-path:polygon(0 0,100% 50%,0 100%)"></b><b style="left:300.5px;top:21px;width:2.6px;height:4.6px;background:#4a5a4a;clip-path:polygon(0 0,100% 50%,0 100%)"></b><b style="left:309px;top:21.2px;width:4px;height:4.2px;background:#555;"></b><b style="left:317.5px;top:21px;width:3.8px;height:4.8px;background:#bbb;clip-path:polygon(0 0,100% 50%,0 100%)"></b><b style="left:328px;top:21px;width:.6px;height:5px;background:#555;"></b><b style="left:338px;top:19.5px;width:55px;height:7px;background:#0c0c0c;border-radius:1px"></b><i style="left:340px;top:22px;font-size:3.7px;">No debug object selected v</i><b style="left:397px;top:21px;width:3.5px;height:4px;background:#777;"></b><div class="a sb"></div><b style="left:3px;top:320.5px;width:3px;height:3.5px;background:#999;"></b><i style="left:8px;top:320.7px;font-size:3.7px;color:#aaa;">Content Drawer</i><b style="left:44px;top:320.5px;width:3px;height:3.5px;background:#bbb;"></b><i style="left:50px;top:320.7px;font-size:3.7px;color:#aaa;">Output Log</i><b style="left:78px;top:320.7px;width:4px;height:3.2px;border:.5px solid #999"></b><i style="left:84px;top:320.7px;font-size:3.7px;color:#aaa;">Cmd v</i><b style="left:103px;top:319.5px;width:93px;height:5.5px;background:#0c0c0c;border-radius:1px"></b><i style="left:105.5px;top:320.6px;font-size:3.5px;color:#555;">Enter Console Command</i><b style="left:518px;top:320.5px;width:3px;height:3.6px;background:#aaa;"></b><i style="left:524px;top:320.7px;font-size:3.7px;color:#aaa;">1 Unsaved</i><b style="left:553px;top:320.5px;width:2.5px;height:3.8px;background:#aaa;"></b><i style="left:558px;top:320.7px;font-size:3.7px;color:#aaa;">Revision Control v</i><div class="a task"></div><b style="left:3.3px;top:329.5px;width:1.9px;height:1.9px;background:#fff;"></b><b style="left:5.6px;top:329.5px;width:1.9px;height:1.9px;background:#fff;"></b><b style="left:3.3px;top:331.8px;width:1.9px;height:1.9px;background:#fff;"></b><b style="left:5.6px;top:331.8px;width:1.9px;height:1.9px;background:#fff;"></b><b style="left:15.5px;top:329.5px;width:4.5px;height:4px;background:#c040e0;border-radius:1px;transform:skewX(-10deg)"></b><b style="left:27px;top:329.8px;width:4.8px;height:3.6px;background:#e8c040;border-radius:.4px"></b><div class="a" style="left:38.6px;top:329.2px;width:4.4px;height:4.4px;border-radius:50%;background:conic-gradient(#e33 0 33%,#fc3 0 66%,#3a5 0)"></div><b style="left:48.5px;top:327.5px;width:8.5px;height:8.5px;background:#3a3d44;"></b><b style="left:50.5px;top:329.3px;width:4.5px;height:4.5px;border:.6px solid #aaa;border-radius:50%"></b><b style="left:61.5px;top:329.4px;width:4.2px;height:4.2px;border:.6px solid #888;border-radius:50%"></b><i style="left:535px;top:329.4px;font-size:4.1px;">^</i><b style="left:542.5px;top:329.2px;width:1.6px;height:4.2px;background:#ddd;border-radius:1px"></b><b style="left:549px;top:329.6px;width:3.8px;height:3px;border:.5px solid #ccc"></b><b style="left:555.5px;top:330px;width:2px;height:2.5px;background:#ccc;clip-path:polygon(0 30%,40% 30%,100% 0,100% 100%,40% 70%,0 70%)"></b><i style="left:561px;top:329.9px;font-size:3px;color:#ccc;">ENG</i><i style="left:575px;top:328px;font-size:3.5px;color:rgba(230,230,230,.55);">Udemy</i><b style="left:588.5px;top:329.4px;width:4.5px;height:3.6px;background:#e8e8e8;border-radius:.3px"></b><div class="a lp"></div><b style="left:1px;top:31px;width:50px;height:9px;background:#1a1a1a;border-radius:1px 1px 0 0"></b><b style="left:3px;top:33px;width:3px;height:3.5px;border:.5px solid #aaa"></b><i style="left:8.5px;top:33.6px;font-size:3.8px;color:#c0c0c0;">Components</i><i style="left:44.5px;top:32.9px;font-size:4.6px;color:#aaa;">×</i><b style="left:7px;top:41px;width:17px;height:6px;background:#2a2a2a;border-radius:1px"></b><b style="left:9px;top:42.5px;width:1px;height:3px;background:#50c050;"></b><b style="left:8px;top:43.5px;width:3px;height:1px;background:#50c050;"></b><i style="left:12.5px;top:42.4px;font-size:3.8px;color:#ccc;">Add</i><div class="srch" style="left:27px;top:41px;width:61px;height:6px"></div><svg class="a" style="left:29px;top:42px" width="4" height="4" viewBox="0 0 4 4"><circle cx="1.6" cy="1.6" r="1.15" fill="none" stroke="#aaa" stroke-width=".55"/><path d="M2.4 2.4L3.6 3.6" stroke="#aaa" stroke-width=".6"/></svg><i style="left:35px;top:42.6px;font-size:3.5px;color:#444;">Search</i><b style="left:5.9px;top:53.6px;width:2.6px;height:3.6px;background:#999;border-radius:.6px"></b><i style="left:10.4px;top:53.2px;font-size:3.8px;color:#b8b8b8;letter-spacing:-.05px">BP_Brute (Self)</i><b style="left:14.1px;top:61.1px;width:2.6px;height:3.6px;background:#999;border-radius:.6px"></b><i style="left:18.6px;top:60.7px;font-size:3.8px;color:#b8b8b8;letter-spacing:-.05px">Capsule Component (CollisionCylinder)</i><b style="left:17.3px;top:68.7px;width:2.6px;height:3.6px;background:#999;border-radius:.6px"></b><i style="left:21.8px;top:68.3px;font-size:3.8px;color:#b8b8b8;letter-spacing:-.05px">Arrow Component (Arrow) <u>Edit in C++</u></i><b style="left:17.3px;top:76.2px;width:2.6px;height:3.6px;background:#999;border-radius:.6px"></b><i style="left:21.8px;top:75.8px;font-size:3.8px;color:#b8b8b8;letter-spacing:-.05px">CameraBoom</i><b style="left:20.3px;top:83.8px;width:2.6px;height:3.6px;background:#999;border-radius:.6px"></b><i style="left:24.8px;top:83.4px;font-size:3.8px;color:#b8b8b8;letter-spacing:-.05px">FollowCamera</i><b style="left:17.3px;top:91.3px;width:2.6px;height:3.6px;background:#999;border-radius:.6px"></b><i style="left:21.8px;top:90.9px;font-size:3.8px;color:#b8b8b8;letter-spacing:-.05px">Mesh (CharacterMesh0)  <u>Edit in C++</u></i><b style="left:14.1px;top:102.2px;width:2.6px;height:3.6px;background:#999;border-radius:.6px"></b><i style="left:18.6px;top:101.8px;font-size:3.8px;color:#b8b8b8;letter-spacing:-.05px">Character Movement (CharMoveComp)</i><b style="left:8px;top:97.3px;width:82px;height:.5px;background:#333;"></b><b style="left:1px;top:118px;width:50px;height:8.5px;background:#1a1a1a;border-radius:1px 1px 0 0"></b><b style="left:3px;top:120px;width:3px;height:3.5px;background:#888;"></b><i style="left:9px;top:120.4px;font-size:3.8px;color:#c0c0c0;">My Blueprint</i><i style="left:44.5px;top:119.6px;font-size:4.6px;color:#aaa;">×</i><b style="left:1px;top:126.5px;width:90px;height:.5px;background:#0e0e0e;"></b><b style="left:6px;top:128px;width:18px;height:5.5px;background:#262626;border-radius:1px"></b><b style="left:9px;top:129.3px;width:1px;height:3px;background:#50c050;"></b><b style="left:8px;top:130.3px;width:3px;height:1px;background:#50c050;"></b><i style="left:12.5px;top:129.4px;font-size:3.8px;color:#ccc;">Add</i><div class="srch" style="left:26px;top:128px;width:54px;height:5.5px"></div><svg class="a" style="left:28px;top:128.8px" width="4" height="4" viewBox="0 0 4 4"><circle cx="1.6" cy="1.6" r="1.15" fill="none" stroke="#aaa" stroke-width=".55"/><path d="M2.4 2.4L3.6 3.6" stroke="#aaa" stroke-width=".6"/></svg><b style="left:83.6px;top:128.6px;width:3.6px;height:3.6px;border:.6px solid #aaa;border-radius:50%"></b><div class="hdr" style="top:137.29999999999998px"></div><i style="left:7px;top:139.2px;font-size:3.2px;color:#c8c8c8;font-weight:bold;">GRAPHS</i><i style="left:2.8px;top:139.2px;font-size:3.2px;color:#888;">v</i><b style="left:83.6px;top:138.7px;width:3.8px;height:3.8px;border:.6px solid #999;border-radius:50%"></b><b style="left:7px;top:147.8px;width:3px;height:2.6px;background:#aaa;"></b><i style="left:12.5px;top:147.9px;font-size:3.6px;">EventGraph</i><b style="left:10.5px;top:155.8px;width:2.8px;height:2.8px;border:.6px solid #ccc;border-radius:50%"></b><i style="left:15.5px;top:156px;font-size:3.6px;color:#b8b8b8;">Event BeginPlay</i><b style="left:10.5px;top:163.5px;width:2.8px;height:2.8px;border:.6px solid #ccc;border-radius:50%"></b><i style="left:15.5px;top:163.7px;font-size:3.6px;color:#b8b8b8;">EnhancedInputAction IA_Move</i><b style="left:10.5px;top:171.2px;width:2.8px;height:2.8px;border:.6px solid #ccc;border-radius:50%"></b><i style="left:15.5px;top:171.4px;font-size:3.6px;color:#b8b8b8;">EnhancedInputAction IA_Look</i><div class="hdr" style="top:178.69999999999996px"></div><i style="left:7px;top:180.6px;font-size:3.2px;color:#c8c8c8;font-weight:bold;">FUNCTIONS <span style='color:#666;font-weight:normal'>(14 OVERRIDABLE)</span></i><i style="left:2.8px;top:180.6px;font-size:3.2px;color:#888;">v</i><b style="left:57px;top:179.4px;width:22px;height:5.2px;background:#0e0e0e;border-radius:1px"></b><i style="left:59px;top:180.8px;font-size:3.2px;">Override v</i><b style="left:83.6px;top:180.1px;width:3.8px;height:3.8px;border:.6px solid #999;border-radius:50%"></b><i style="left:9px;top:189.7px;font-size:3.7px;color:#aaa;">ƒ</i><i style="left:13px;top:189.9px;font-size:3.6px;">Construction Script</i><i style="left:9px;top:197.5px;font-size:3.7px;color:#aaa;">ƒ</i><i style="left:13px;top:197.7px;font-size:3.6px;">Move</i><div class="hdr" style="top:204.1px"></div><i style="left:7px;top:206px;font-size:3.2px;color:#c8c8c8;font-weight:bold;">MACROS</i><i style="left:2.8px;top:206px;font-size:3.2px;color:#888;">v</i><b style="left:83.6px;top:205.5px;width:3.8px;height:3.8px;border:.6px solid #999;border-radius:50%"></b><div class="hdr" style="top:213.4px"></div><i style="left:7px;top:215.3px;font-size:3.2px;color:#c8c8c8;font-weight:bold;">VARIABLES</i><i style="left:2.8px;top:215.3px;font-size:3.2px;color:#888;">v</i><b style="left:83.6px;top:214.8px;width:3.8px;height:3.8px;border:.6px solid #999;border-radius:50%"></b><i style="left:3px;top:222.9px;font-size:3.2px;color:#888;">v</i><i style="left:6px;top:223px;font-size:3.5px;color:#c8c8c8;font-weight:bold;">Components</i><i style="left:10px;top:229px;font-size:3.5px;color:#a8a8a8;">FollowCamera</i><b style="left:58px;top:229.7px;width:3.4px;height:1.8px;background:#30a0e0;border-radius:1px"></b><i style="left:10px;top:235.2px;font-size:3.5px;color:#a8a8a8;">CameraBoom</i><b style="left:58px;top:235.9px;width:3.4px;height:1.8px;background:#30a0e0;border-radius:1px"></b><div class="hdr" style="top:240.99999999999997px"></div><i style="left:7px;top:242.9px;font-size:3.2px;color:#c8c8c8;font-weight:bold;">EVENT DISPATCHERS</i><i style="left:2.8px;top:242.9px;font-size:3.2px;color:#888;">v</i><b style="left:83.6px;top:242.4px;width:3.8px;height:3.8px;border:.6px solid #999;border-radius:50%"></b><b style="left:93.5px;top:33.2px;width:3.5px;height:3px;background:#999;"></b><i style="left:99px;top:33.6px;font-size:3.8px;color:#a8a8a8;">Viewport</i><i style="left:145px;top:33.2px;font-size:3.9px;color:#aaa;">ƒ</i><i style="left:150.5px;top:33.6px;font-size:3.8px;color:#a8a8a8;">Construction Scr...</i><b style="left:191.5px;top:31px;width:49px;height:9px;background:#1e1e1e;border-radius:1px 1px 0 0"></b><b style="left:194px;top:33.2px;width:3.4px;height:3.4px;border:.5px dashed #bbb"></b><i style="left:199.5px;top:33.6px;font-size:3.8px;color:#d0d0d0;">EventGraph</i><i style="left:236px;top:32.9px;font-size:4.6px;color:#aaa;">×</i><i style="left:248px;top:33.2px;font-size:3.9px;color:#aaa;">ƒ</i><i style="left:253.5px;top:33.6px;font-size:3.8px;color:#a8a8a8;">Move</i><i style="left:290px;top:32.9px;font-size:4.6px;color:#aaa;">×</i><b style="left:450px;top:31px;width:50px;height:9px;background:#1c1c1c;border-radius:1px 1px 0 0"></b><b style="left:452.5px;top:33px;width:3px;height:3.6px;background:#ccc;clip-path:polygon(0 100%,25% 100%,100% 25%,75% 0)"></b><i style="left:458.5px;top:33.6px;font-size:3.8px;color:#c8c8c8;">Details</i><i style="left:492.5px;top:32.9px;font-size:4.6px;color:#aaa;">×</i><div class="a graph"></div><div class="a" style="left:92px;top:40px;width:357px;height:278px;overflow:hidden"><div class="a" style="left:-92px;top:-40px;width:600px;height:337px"><svg class="a" style="left:0;top:0" width="600" height="337" viewBox="0 0 600 337"><path d="M173 90.8 H422" fill="none" stroke="#eeeeee" stroke-width="0.9"/><path d="M297.6 115 H324" fill="none" stroke="#8a86b0" stroke-width="0.8"/><path d="M386.7 115 C400.7 115 410.3 110.6 424.3 110.6" fill="none" stroke="#d8a820" stroke-width="0.8"/><path d="M173 140.3 C260 140.3 330 125 424.3 120.5" fill="none" stroke="#3fc23f" stroke-width="0.9"/><path d="M173 149.4 C230 150 300 170 340 178 C370 184 390 192 419.8 195.5" fill="none" stroke="#3fc23f" stroke-width="0.9"/><path d="M386 194.7 H419.8" fill="none" stroke="#8a86b0" stroke-width="0.8"/></svg><div class="node" style="left:99.7px;top:78px;width:73.5px;height:111.3px;"><div class="nh" style="height:6.1px;background:linear-gradient(90deg,#a01414,#6a1010 55%,#3a1414)"></div></div><i style="left:104.2px;top:79.3px;font-size:3.7px;color:#f4f4f4;">EnhancedInputAction IA_Move</i><div class="a" style="left:165.79999999999998px;top:89.1px;width:3px;height:3.4px;background:#f0f0f0;clip-path:polygon(0 0,60% 0,100% 50%,60% 100%,0 100%)"></div><i style="left:164.8px;top:89.1px;font-size:3.5px;color:#d8d8d8;transform:translateX(-100%)">Triggered</i><svg class="a" style="left:165.6px;top:98.8px" width="3.4" height="3.8" viewBox="0 0 3.4 3.8"><path d="M.3 .3H2L3.1 1.9L2 3.5H.3Z" fill="none" stroke="#d8d8d8" stroke-width=".5"/></svg><i style="left:164.8px;top:99px;font-size:3.5px;color:#d8d8d8;transform:translateX(-100%)">Started</i><svg class="a" style="left:165.6px;top:108.69999999999999px" width="3.4" height="3.8" viewBox="0 0 3.4 3.8"><path d="M.3 .3H2L3.1 1.9L2 3.5H.3Z" fill="none" stroke="#d8d8d8" stroke-width=".5"/></svg><i style="left:164.8px;top:108.9px;font-size:3.5px;color:#d8d8d8;transform:translateX(-100%)">Ongoing</i><svg class="a" style="left:165.6px;top:118.6px" width="3.4" height="3.8" viewBox="0 0 3.4 3.8"><path d="M.3 .3H2L3.1 1.9L2 3.5H.3Z" fill="none" stroke="#d8d8d8" stroke-width=".5"/></svg><i style="left:164.8px;top:118.8px;font-size:3.5px;color:#d8d8d8;transform:translateX(-100%)">Canceled</i><svg class="a" style="left:165.6px;top:128.5px" width="3.4" height="3.8" viewBox="0 0 3.4 3.8"><path d="M.3 .3H2L3.1 1.9L2 3.5H.3Z" fill="none" stroke="#d8d8d8" stroke-width=".5"/></svg><i style="left:164.8px;top:128.7px;font-size:3.5px;color:#d8d8d8;transform:translateX(-100%)">Completed</i><div class="a" style="left:165.89999999999998px;top:139.0px;width:2.6px;height:2.6px;border-radius:50%;background:#3fd23f"></div><i style="left:164.8px;top:138.6px;font-size:3.5px;color:#d8d8d8;transform:translateX(-100%)">Action Value X</i><div class="a" style="left:165.89999999999998px;top:148.1px;width:2.6px;height:2.6px;border-radius:50%;background:#3fd23f"></div><i style="left:164.8px;top:147.7px;font-size:3.5px;color:#d8d8d8;transform:translateX(-100%)">Action Value Y</i><div class="a" style="left:165.79999999999998px;top:157.4px;width:2.8px;height:2.8px;border-radius:50%;border:.55px solid #3fd23f"></div><i style="left:164.8px;top:157.1px;font-size:3.5px;color:#d8d8d8;transform:translateX(-100%)">Elapsed Seconds</i><div class="a" style="left:165.79999999999998px;top:166.79999999999998px;width:2.8px;height:2.8px;border-radius:50%;border:.55px solid #3fd23f"></div><i style="left:164.8px;top:166.5px;font-size:3.5px;color:#d8d8d8;transform:translateX(-100%)">Triggered Seconds</i><div class="a" style="left:165.79999999999998px;top:176.2px;width:2.8px;height:2.8px;border-radius:50%;border:.55px solid #40b8c8"></div><i style="left:164.8px;top:175.9px;font-size:3.5px;color:#d8d8d8;transform:translateX(-100%)">Input Action</i><i style="left:157.2px;top:183.3px;font-size:3.9px;">^</i><div class="node" style="left:224px;top:97.7px;width:73.6px;height:23.5px;"><div class="nh" style="height:11.2px;background:linear-gradient(90deg,#4a8a3a,#3a6a30 60%,#2a3a28)"></div></div><i style="left:228.5px;top:99.9px;font-size:3.5px;color:#f4f4f4;">ƒ Get Control Rotation</i><i style="left:232px;top:103.7px;font-size:2.8px;color:rgba(200,230,255,.55);">Target is Pawn</i><div class="a" style="left:228.6px;top:114.1px;width:2.8px;height:2.8px;border-radius:50%;border:.55px solid #58b8f0"></div><i style="left:233px;top:113.9px;font-size:3.3px;color:#d8d8d8;">Target</i><div class="a" style="left:289.9px;top:113.7px;width:2.6px;height:2.6px;border-radius:50%;background:#a8a0f0"></div><i style="left:288.8px;top:113.4px;font-size:3.3px;color:#d8d8d8;transform:translateX(-100%)">Return Value</i><b style="left:246px;top:113px;width:9px;height:4.8px;border:.5px solid #888"></b><div class="node" style="left:324px;top:102.7px;width:62.7px;height:17.3px;"><div class="nh" style="height:6.2px;background:linear-gradient(90deg,#4a8a3a,#3a6a30 60%,#2a3a28)"></div></div><i style="left:328.5px;top:104.2px;font-size:3.5px;color:#f4f4f4;">ƒ Get Forward Vector</i><div class="a" style="left:328.5px;top:113.7px;width:2.6px;height:2.6px;border-radius:50%;background:#a8a0f0"></div><i style="left:332.8px;top:113.4px;font-size:3.3px;color:#d8d8d8;">In Rot</i><div class="a" style="left:379.0px;top:113.7px;width:2.6px;height:2.6px;border-radius:50%;background:#f0c020"></div><i style="left:377.9px;top:113.4px;font-size:3.3px;color:#d8d8d8;transform:translateX(-100%)">Return Value</i><div class="node" style="left:419.3px;top:73px;width:40px;height:63px;"><div class="nh" style="height:11px;background:linear-gradient(90deg,#3a7aa0,#2c5a78 60%,#25384a)"></div></div><i style="left:423.8px;top:75.2px;font-size:3.5px;color:#f4f4f4;">ƒ Add Movement Input</i><i style="left:427.3px;top:79px;font-size:2.8px;color:rgba(200,230,255,.55);">Target is Pawn</i><div class="a" style="left:423.40000000000003px;top:88.6px;width:3px;height:3.4px;background:#f0f0f0;clip-path:polygon(0 0,60% 0,100% 50%,60% 100%,0 100%)"></div><div class="a" style="left:423.40000000000003px;top:99.3px;width:2.8px;height:2.8px;border-radius:50%;border:.55px solid #58b8f0"></div><i style="left:427.8px;top:99.1px;font-size:3.3px;color:#d8d8d8;">Target</i><div class="a" style="left:423.5px;top:109.3px;width:2.6px;height:2.6px;border-radius:50%;background:#f0c020"></div><i style="left:427.8px;top:109px;font-size:3.3px;color:#d8d8d8;">World Direction</i><div class="a" style="left:423.5px;top:119.2px;width:2.6px;height:2.6px;border-radius:50%;background:#3fd23f"></div><i style="left:427.8px;top:118.9px;font-size:3.3px;color:#d8d8d8;">Scale Value</i><div class="a" style="left:423.40000000000003px;top:129.0px;width:2.8px;height:2.8px;border-radius:50%;border:.55px solid #c02020"></div><i style="left:427.8px;top:128.8px;font-size:3.3px;color:#d8d8d8;">Force</i><div class="node" style="left:319px;top:178px;width:73px;height:23.6px;"><div class="nh" style="height:11.3px;background:linear-gradient(90deg,#4a8a3a,#3a6a30 60%,#2a3a28)"></div></div><i style="left:323.5px;top:180.3px;font-size:3.5px;color:#f4f4f4;">ƒ Get Control Rotation</i><i style="left:327px;top:184.1px;font-size:2.8px;color:rgba(200,230,255,.55);">Target is Pawn</i><div class="a" style="left:322.6px;top:194.1px;width:2.8px;height:2.8px;border-radius:50%;border:.55px solid #58b8f0"></div><i style="left:327px;top:193.9px;font-size:3.3px;color:#d8d8d8;">Target</i><div class="a" style="left:384.7px;top:193.39999999999998px;width:2.6px;height:2.6px;border-radius:50%;background:#a8a0f0"></div><i style="left:383.6px;top:193.1px;font-size:3.3px;color:#d8d8d8;transform:translateX(-100%)">Return Value</i><b style="left:341px;top:193px;width:9px;height:4.8px;border:.5px solid #888"></b><div class="node" style="left:414.4px;top:183px;width:40px;height:17.4px;"><div class="nh" style="height:6.3px;background:linear-gradient(90deg,#4a8a3a,#3a6a30 60%,#2a3a28)"></div></div><i style="left:418.9px;top:184.6px;font-size:3.5px;color:#f4f4f4;">ƒ Get Right Vector</i><div class="a" style="left:418.5px;top:193.7px;width:2.6px;height:2.6px;border-radius:50%;background:#a8a0f0"></div><i style="left:422.8px;top:193.4px;font-size:3.3px;color:#d8d8d8;">In Rot</i><b style="left:219px;top:313px;width:64px;height:5px;background:#2a5a78;border-radius:2px 2px 0 0"></b><i style="left:226px;top:313.5px;font-size:3.2px;color:#cde;">ƒ Add Controller Yaw Input</i><svg class="a" style="left:257px;top:40.5px;z-index:9" width="5" height="7" viewBox="0 0 5 7"><path d="M.3 .3L.3 5.6L1.6 4.4L2.6 6.6L3.5 6.2L2.5 4.1L4.3 4.1Z" fill="#fff" stroke="#000" stroke-width=".35"/></svg></div></div><div class="a gbar"></div><b style="left:95px;top:43px;width:2.6px;height:3.6px;border:.5px solid #777"></b><i style="left:99px;top:43.4px;font-size:3.2px;color:#888;">v</i><svg class="a" style="left:109.5px;top:43.5px" width="5" height="4" viewBox="0 0 5 4"><path d="M0 2L2.4 0V1.2H5V2.8H2.4V4Z" fill="#d8d8d8"/></svg><svg class="a" style="left:121.5px;top:43.5px" width="5" height="4" viewBox="0 0 5 4"><path d="M5 2L2.6 0V1.2H0V2.8H2.6V4Z" fill="#d8d8d8"/></svg><b style="left:136px;top:42.5px;width:2.6px;height:2.6px;background:#ccc;border-radius:50%"></b><b style="left:140px;top:43.2px;width:2px;height:1.8px;background:#ccc;"></b><b style="left:136px;top:46.5px;width:2px;height:1.8px;background:#ccc;"></b><b style="left:140px;top:46.5px;width:2px;height:1.8px;background:#ccc;"></b><i style="left:147px;top:42.5px;font-size:6.3px;color:#8e8e8e;">BP_Brute <span style='color:#ccc'>&gt;</span> EventGraph</i><i style="left:425px;top:42.9px;font-size:5.1px;color:#3e3e3e;">Zoom 1:1</i><div class="wm">BLUEPRINT</div><div class="a dp"></div><div class="srch" style="left:453px;top:42.5px;width:128px;height:5.5px"></div><svg class="a" style="left:455px;top:43.2px" width="4" height="4" viewBox="0 0 4 4"><circle cx="1.6" cy="1.6" r="1.15" fill="none" stroke="#aaa" stroke-width=".55"/><path d="M2.4 2.4L3.6 3.6" stroke="#aaa" stroke-width=".6"/></svg><i style="left:461px;top:43.6px;font-size:3.5px;color:#444;">Search</i><b style="left:585.5px;top:43px;width:3.4px;height:3.6px;background:#888;"></b><b style="left:592.5px;top:43px;width:3.8px;height:3.8px;border:.6px solid #888;border-radius:50%"></b><div class="bd"></div></div><div class="cell" style="left:610px;top:1031px"><div class="a menu"></div><div class="a tabs"></div><div class="a tb"></div><div class="a ptab"></div><svg class="a" style="left:2px;top:2px" width="14" height="14" viewBox="0 0 14 14"><circle cx="7" cy="7" r="6" fill="#1a1a1a" stroke="#9a9a9a" stroke-width=".7"/><path d="M4.2 4.3 L5.6 4 L5.6 8.8 Q6.6 9.6 7.6 8.8 L7.6 4.6 L9.1 4.2 L9.1 9.6 Q6.6 11 4.2 9.6Z" fill="#c8c8c8"/></svg><i style="left:21.5px;top:1.8px;font-size:3.8px;color:#c8c8c8;">File</i><i style="left:35.5px;top:1.8px;font-size:3.8px;color:#c8c8c8;">Edit</i><i style="left:51px;top:1.8px;font-size:3.8px;color:#c8c8c8;">Asset</i><i style="left:68px;top:1.8px;font-size:3.8px;color:#c8c8c8;">View</i><i style="left:84.5px;top:1.8px;font-size:3.8px;color:#c8c8c8;">Debug</i><i style="left:103.5px;top:1.8px;font-size:3.8px;color:#c8c8c8;">Window</i><i style="left:123px;top:1.8px;font-size:3.8px;color:#c8c8c8;">Tools</i><i style="left:140.5px;top:1.8px;font-size:3.8px;color:#c8c8c8;">Help</i><b style="left:564px;top:4px;width:4px;height:.6px;background:#aaa;"></b><div class="a" style="left:578px;top:2.2px;width:3.4px;height:3.2px;border:.6px solid #bbb"></div><i style="left:591.5px;top:1.3px;font-size:4.6px;color:#ddd;">✕</i><svg class="a" style="left:22.5px;top:10px" width="5" height="5" viewBox="0 0 5 5"><path d="M.5 2.5 L2.5 .6 L4.5 2.5 V4.5 H.5Z" fill="none" stroke="#666" stroke-width=".5"/></svg><svg class="a" style="left:33.5px;top:10.3px" width="5" height="4.5" viewBox="0 0 5 4.5"><path d="M2.5 .2 L4.8 4.3 H.2Z" fill="#d8a020"/></svg><i style="left:41px;top:10.8px;font-size:3.8px;color:#c0c0c0;">DefaultMap</i><b style="left:97px;top:8.5px;width:65px;height:8.5px;background:#1e1e1e;border-radius:1px 1px 0 0"></b><svg class="a" style="left:100px;top:9.5px" width="5" height="6" viewBox="0 0 5 6"><circle cx="2.5" cy="1.6" r="1.3" fill="#3a7ee0"/><path d="M.4 5.6 Q.4 3.2 2.5 3.2 Q4.6 3.2 4.6 5.6Z" fill="#3a7ee0"/></svg><i style="left:107px;top:10.8px;font-size:3.8px;color:#d0d0d0;">BP_Brute</i><i style="left:155.5px;top:10.3px;font-size:4.9px;">×</i><i style="left:552px;top:10.8px;font-size:3.6px;color:#8a8a8a;">Parent class: <u>Character</u></i><b style="left:5.5px;top:20px;width:5px;height:6px;background:#c8c8c8;border-radius:.5px"></b><b style="left:19.5px;top:20.5px;width:5px;height:5.5px;background:#a8a8a8;border-radius:.5px"></b><b style="left:35px;top:19.5px;width:6px;height:7px;background:#d8c020;border-radius:.5px"></b><b style="left:36.5px;top:21.5px;width:3px;height:3px;background:#58a030;"></b><i style="left:44px;top:22px;font-size:3.9px;">Compile</i><i style="left:62.5px;top:21.8px;font-size:4.2px;color:#888;">:</i><b style="left:71px;top:21.5px;width:3px;height:3.5px;background:#bbb;"></b><i style="left:76px;top:22px;font-size:3.9px;">Diff v</i><b style="left:100px;top:20.5px;width:4.5px;height:4.5px;border:.6px solid #ccc;border-radius:50%"></b><i style="left:106px;top:22px;font-size:3.9px;">Find</i><b style="left:121px;top:20.5px;width:5px;height:5px;background:#888;border-radius:1px"></b><i style="left:128.5px;top:22px;font-size:3.9px;">Hide Unrelated</i><i style="left:160px;top:21.8px;font-size:4.2px;color:#888;">:</i><b style="left:170.5px;top:20.5px;width:5px;height:5px;border:.7px solid #bbb;border-radius:50%"></b><i style="left:177.5px;top:22px;font-size:3.9px;">Class Settings</i><b style="left:211px;top:20.5px;width:5px;height:5px;background:#bbb;clip-path:polygon(0 100%,20% 100%,100% 20%,80% 0)"></b><i style="left:218.5px;top:22px;font-size:3.9px;">Class Defaults</i><b style="left:251.5px;top:20.5px;width:5px;height:5px;background:#aaa;clip-path:polygon(0 0,100% 60%,55% 65%,40% 100%)"></b><i style="left:259px;top:22px;font-size:3.9px;">Simulation</i><b style="left:288px;top:18.8px;width:44px;height:9.5px;background:#232323;border-radius:1px"></b><b style="left:291.7px;top:20.8px;width:4px;height:5px;background:#40c040;clip-path:polygon(0 0,100% 50%,0 100%)"></b><b style="left:300.5px;top:21px;width:2.6px;height:4.6px;background:#4a5a4a;clip-path:polygon(0 0,100% 50%,0 100%)"></b><b style="left:309px;top:21.2px;width:4px;height:4.2px;background:#555;"></b><b style="left:317.5px;top:21px;width:3.8px;height:4.8px;background:#bbb;clip-path:polygon(0 0,100% 50%,0 100%)"></b><b style="left:328px;top:21px;width:.6px;height:5px;background:#555;"></b><b style="left:338px;top:19.5px;width:55px;height:7px;background:#0c0c0c;border-radius:1px"></b><i style="left:340px;top:22px;font-size:3.7px;">No debug object selected v</i><b style="left:397px;top:21px;width:3.5px;height:4px;background:#777;"></b><div class="a sb"></div><b style="left:3px;top:320.5px;width:3px;height:3.5px;background:#999;"></b><i style="left:8px;top:320.7px;font-size:3.7px;color:#aaa;">Content Drawer</i><b style="left:44px;top:320.5px;width:3px;height:3.5px;background:#bbb;"></b><i style="left:50px;top:320.7px;font-size:3.7px;color:#aaa;">Output Log</i><b style="left:78px;top:320.7px;width:4px;height:3.2px;border:.5px solid #999"></b><i style="left:84px;top:320.7px;font-size:3.7px;color:#aaa;">Cmd v</i><b style="left:103px;top:319.5px;width:93px;height:5.5px;background:#0c0c0c;border-radius:1px"></b><i style="left:105.5px;top:320.6px;font-size:3.5px;color:#555;">Enter Console Command</i><b style="left:518px;top:320.5px;width:3px;height:3.6px;background:#aaa;"></b><i style="left:524px;top:320.7px;font-size:3.7px;color:#aaa;">1 Unsaved</i><b style="left:553px;top:320.5px;width:2.5px;height:3.8px;background:#aaa;"></b><i style="left:558px;top:320.7px;font-size:3.7px;color:#aaa;">Revision Control v</i><div class="a task"></div><b style="left:3.3px;top:329.5px;width:1.9px;height:1.9px;background:#fff;"></b><b style="left:5.6px;top:329.5px;width:1.9px;height:1.9px;background:#fff;"></b><b style="left:3.3px;top:331.8px;width:1.9px;height:1.9px;background:#fff;"></b><b style="left:5.6px;top:331.8px;width:1.9px;height:1.9px;background:#fff;"></b><b style="left:15.5px;top:329.5px;width:4.5px;height:4px;background:#c040e0;border-radius:1px;transform:skewX(-10deg)"></b><b style="left:27px;top:329.8px;width:4.8px;height:3.6px;background:#e8c040;border-radius:.4px"></b><div class="a" style="left:38.6px;top:329.2px;width:4.4px;height:4.4px;border-radius:50%;background:conic-gradient(#e33 0 33%,#fc3 0 66%,#3a5 0)"></div><b style="left:48.5px;top:327.5px;width:8.5px;height:8.5px;background:#3a3d44;"></b><b style="left:50.5px;top:329.3px;width:4.5px;height:4.5px;border:.6px solid #aaa;border-radius:50%"></b><b style="left:61.5px;top:329.4px;width:4.2px;height:4.2px;border:.6px solid #888;border-radius:50%"></b><i style="left:535px;top:329.4px;font-size:4.1px;">^</i><b style="left:542.5px;top:329.2px;width:1.6px;height:4.2px;background:#ddd;border-radius:1px"></b><b style="left:549px;top:329.6px;width:3.8px;height:3px;border:.5px solid #ccc"></b><b style="left:555.5px;top:330px;width:2px;height:2.5px;background:#ccc;clip-path:polygon(0 30%,40% 30%,100% 0,100% 100%,40% 70%,0 70%)"></b><i style="left:561px;top:329.9px;font-size:3px;color:#ccc;">ENG</i><i style="left:575px;top:328px;font-size:3.5px;color:rgba(230,230,230,.55);">Udemy</i><b style="left:588.5px;top:329.4px;width:4.5px;height:3.6px;background:#e8e8e8;border-radius:.3px"></b><div class="a lp"></div><b style="left:1px;top:31px;width:50px;height:9px;background:#1a1a1a;border-radius:1px 1px 0 0"></b><b style="left:3px;top:33px;width:3px;height:3.5px;border:.5px solid #aaa"></b><i style="left:8.5px;top:33.6px;font-size:3.8px;color:#c0c0c0;">Components</i><i style="left:44.5px;top:32.9px;font-size:4.6px;color:#aaa;">×</i><b style="left:7px;top:41px;width:17px;height:6px;background:#2a2a2a;border-radius:1px"></b><b style="left:9px;top:42.5px;width:1px;height:3px;background:#50c050;"></b><b style="left:8px;top:43.5px;width:3px;height:1px;background:#50c050;"></b><i style="left:12.5px;top:42.4px;font-size:3.8px;color:#ccc;">Add</i><div class="srch" style="left:27px;top:41px;width:61px;height:6px"></div><svg class="a" style="left:29px;top:42px" width="4" height="4" viewBox="0 0 4 4"><circle cx="1.6" cy="1.6" r="1.15" fill="none" stroke="#aaa" stroke-width=".55"/><path d="M2.4 2.4L3.6 3.6" stroke="#aaa" stroke-width=".6"/></svg><i style="left:35px;top:42.6px;font-size:3.5px;color:#444;">Search</i><b style="left:5.9px;top:53.6px;width:2.6px;height:3.6px;background:#999;border-radius:.6px"></b><i style="left:10.4px;top:53.2px;font-size:3.8px;color:#b8b8b8;letter-spacing:-.05px">BP_Brute (Self)</i><b style="left:14.1px;top:61.1px;width:2.6px;height:3.6px;background:#999;border-radius:.6px"></b><i style="left:18.6px;top:60.7px;font-size:3.8px;color:#b8b8b8;letter-spacing:-.05px">Capsule Component (CollisionCylinder)</i><b style="left:17.3px;top:68.7px;width:2.6px;height:3.6px;background:#999;border-radius:.6px"></b><i style="left:21.8px;top:68.3px;font-size:3.8px;color:#b8b8b8;letter-spacing:-.05px">Arrow Component (Arrow) <u>Edit in C++</u></i><b style="left:17.3px;top:76.2px;width:2.6px;height:3.6px;background:#999;border-radius:.6px"></b><i style="left:21.8px;top:75.8px;font-size:3.8px;color:#b8b8b8;letter-spacing:-.05px">CameraBoom</i><b style="left:20.3px;top:83.8px;width:2.6px;height:3.6px;background:#999;border-radius:.6px"></b><i style="left:24.8px;top:83.4px;font-size:3.8px;color:#b8b8b8;letter-spacing:-.05px">FollowCamera</i><b style="left:17.3px;top:91.3px;width:2.6px;height:3.6px;background:#999;border-radius:.6px"></b><i style="left:21.8px;top:90.9px;font-size:3.8px;color:#b8b8b8;letter-spacing:-.05px">Mesh (CharacterMesh0)  <u>Edit in C++</u></i><b style="left:14.1px;top:102.2px;width:2.6px;height:3.6px;background:#999;border-radius:.6px"></b><i style="left:18.6px;top:101.8px;font-size:3.8px;color:#b8b8b8;letter-spacing:-.05px">Character Movement (CharMoveComp)</i><b style="left:8px;top:97.3px;width:82px;height:.5px;background:#333;"></b><b style="left:1px;top:118px;width:50px;height:8.5px;background:#1a1a1a;border-radius:1px 1px 0 0"></b><b style="left:3px;top:120px;width:3px;height:3.5px;background:#888;"></b><i style="left:9px;top:120.4px;font-size:3.8px;color:#c0c0c0;">My Blueprint</i><i style="left:44.5px;top:119.6px;font-size:4.6px;color:#aaa;">×</i><b style="left:1px;top:126.5px;width:90px;height:.5px;background:#0e0e0e;"></b><b style="left:6px;top:128px;width:18px;height:5.5px;background:#262626;border-radius:1px"></b><b style="left:9px;top:129.3px;width:1px;height:3px;background:#50c050;"></b><b style="left:8px;top:130.3px;width:3px;height:1px;background:#50c050;"></b><i style="left:12.5px;top:129.4px;font-size:3.8px;color:#ccc;">Add</i><div class="srch" style="left:26px;top:128px;width:54px;height:5.5px"></div><svg class="a" style="left:28px;top:128.8px" width="4" height="4" viewBox="0 0 4 4"><circle cx="1.6" cy="1.6" r="1.15" fill="none" stroke="#aaa" stroke-width=".55"/><path d="M2.4 2.4L3.6 3.6" stroke="#aaa" stroke-width=".6"/></svg><b style="left:83.6px;top:128.6px;width:3.6px;height:3.6px;border:.6px solid #aaa;border-radius:50%"></b><div class="hdr" style="top:137.29999999999998px"></div><i style="left:7px;top:139.2px;font-size:3.2px;color:#c8c8c8;font-weight:bold;">GRAPHS</i><i style="left:2.8px;top:139.2px;font-size:3.2px;color:#888;">v</i><b style="left:83.6px;top:138.7px;width:3.8px;height:3.8px;border:.6px solid #999;border-radius:50%"></b><b style="left:7px;top:147.8px;width:3px;height:2.6px;background:#aaa;"></b><i style="left:12.5px;top:147.9px;font-size:3.6px;">EventGraph</i><b style="left:10.5px;top:155.8px;width:2.8px;height:2.8px;border:.6px solid #ccc;border-radius:50%"></b><i style="left:15.5px;top:156px;font-size:3.6px;color:#b8b8b8;">Event BeginPlay</i><b style="left:10.5px;top:163.5px;width:2.8px;height:2.8px;border:.6px solid #ccc;border-radius:50%"></b><i style="left:15.5px;top:163.7px;font-size:3.6px;color:#b8b8b8;">EnhancedInputAction IA_Move</i><b style="left:10.5px;top:171.2px;width:2.8px;height:2.8px;border:.6px solid #ccc;border-radius:50%"></b><i style="left:15.5px;top:171.4px;font-size:3.6px;color:#b8b8b8;">EnhancedInputAction IA_Look</i><div class="hdr" style="top:178.69999999999996px"></div><i style="left:7px;top:180.6px;font-size:3.2px;color:#c8c8c8;font-weight:bold;">FUNCTIONS <span style='color:#666;font-weight:normal'>(14 OVERRIDABLE)</span></i><i style="left:2.8px;top:180.6px;font-size:3.2px;color:#888;">v</i><b style="left:57px;top:179.4px;width:22px;height:5.2px;background:#0e0e0e;border-radius:1px"></b><i style="left:59px;top:180.8px;font-size:3.2px;">Override v</i><b style="left:83.6px;top:180.1px;width:3.8px;height:3.8px;border:.6px solid #999;border-radius:50%"></b><i style="left:9px;top:189.7px;font-size:3.7px;color:#aaa;">ƒ</i><i style="left:13px;top:189.9px;font-size:3.6px;">Construction Script</i><i style="left:9px;top:197.5px;font-size:3.7px;color:#aaa;">ƒ</i><i style="left:13px;top:197.7px;font-size:3.6px;">Move</i><i style="left:9px;top:205.3px;font-size:3.7px;color:#aaa;">ƒ</i><i style="left:13px;top:205.5px;font-size:3.6px;">Look</i><div class="hdr" style="top:211.9px"></div><i style="left:7px;top:213.8px;font-size:3.2px;color:#c8c8c8;font-weight:bold;">MACROS</i><i style="left:2.8px;top:213.8px;font-size:3.2px;color:#888;">v</i><b style="left:83.6px;top:213.3px;width:3.8px;height:3.8px;border:.6px solid #999;border-radius:50%"></b><div class="hdr" style="top:221.20000000000002px"></div><i style="left:7px;top:223.1px;font-size:3.2px;color:#c8c8c8;font-weight:bold;">VARIABLES</i><i style="left:2.8px;top:223.1px;font-size:3.2px;color:#888;">v</i><b style="left:83.6px;top:222.6px;width:3.8px;height:3.8px;border:.6px solid #999;border-radius:50%"></b><i style="left:3px;top:230.7px;font-size:3.2px;color:#888;">v</i><i style="left:6px;top:230.8px;font-size:3.5px;color:#c8c8c8;font-weight:bold;">Components</i><i style="left:10px;top:236.8px;font-size:3.5px;color:#a8a8a8;">FollowCamera</i><b style="left:58px;top:237.5px;width:3.4px;height:1.8px;background:#30a0e0;border-radius:1px"></b><i style="left:10px;top:243px;font-size:3.5px;color:#a8a8a8;">CameraBoom</i><b style="left:58px;top:243.7px;width:3.4px;height:1.8px;background:#30a0e0;border-radius:1px"></b><div class="hdr" style="top:248.79999999999998px"></div><i style="left:7px;top:250.7px;font-size:3.2px;color:#c8c8c8;font-weight:bold;">EVENT DISPATCHERS</i><i style="left:2.8px;top:250.7px;font-size:3.2px;color:#888;">v</i><b style="left:83.6px;top:250.2px;width:3.8px;height:3.8px;border:.6px solid #999;border-radius:50%"></b><div class="hdr" style="top:258.2px"></div><i style="left:7px;top:260.1px;font-size:3.2px;color:#c8c8c8;font-weight:bold;">LOCAL VARIABLES <span style='color:#666;font-weight:normal'>(LOOK)</span></i><i style="left:2.8px;top:260.1px;font-size:3.2px;color:#888;">v</i><b style="left:83.6px;top:259.6px;width:3.8px;height:3.8px;border:.6px solid #999;border-radius:50%"></b><b style="left:93.5px;top:33.2px;width:3.5px;height:3px;background:#999;"></b><i style="left:99px;top:33.6px;font-size:3.8px;color:#a8a8a8;">Viewport</i><i style="left:145px;top:33.2px;font-size:3.9px;color:#aaa;">ƒ</i><i style="left:150.5px;top:33.6px;font-size:3.8px;color:#a8a8a8;">Construction Scr...</i><b style="left:191.5px;top:31px;width:49px;height:9px;background:#1e1e1e;border-radius:1px 1px 0 0"></b><b style="left:194px;top:33.2px;width:3.4px;height:3.4px;border:.5px dashed #bbb"></b><i style="left:199.5px;top:33.6px;font-size:3.8px;color:#d0d0d0;">EventGraph</i><i style="left:236px;top:32.9px;font-size:4.6px;color:#aaa;">×</i><i style="left:248px;top:33.2px;font-size:3.9px;color:#aaa;">ƒ</i><i style="left:253.5px;top:33.6px;font-size:3.8px;color:#a8a8a8;">Move</i><i style="left:298px;top:33.2px;font-size:3.9px;color:#aaa;">ƒ</i><i style="left:303.5px;top:33.6px;font-size:3.8px;color:#a8a8a8;">Look</i><i style="left:340px;top:32.9px;font-size:4.6px;color:#aaa;">×</i><b style="left:450px;top:31px;width:50px;height:9px;background:#1c1c1c;border-radius:1px 1px 0 0"></b><b style="left:452.5px;top:33px;width:3px;height:3.6px;background:#ccc;clip-path:polygon(0 100%,25% 100%,100% 25%,75% 0)"></b><i style="left:458.5px;top:33.6px;font-size:3.8px;color:#c8c8c8;">Details</i><i style="left:492.5px;top:32.9px;font-size:4.6px;color:#aaa;">×</i><div class="a graph"></div><div class="a" style="left:92px;top:40px;width:357px;height:278px;overflow:hidden"><div class="a" style="left:-92px;top:-40px;width:600px;height:337px"><div class="node" style="left:247.4px;top:167.7px;width:30.2px;height:38.9px;box-shadow:0 0 0 1px #e8901a,0 0 2px #000;"><div class="nh" style="height:8.5px;background:linear-gradient(90deg,#7a2aa8,#5a1a80 60%,#3a1a4a)"></div></div><i style="left:251.9px;top:170.2px;font-size:3.7px;color:#f4f4f4;">▦ Look</i><svg class="a" style="left:268.79999999999995px;top:179.4px" width="3.4" height="3.8" viewBox="0 0 3.4 3.8"><path d="M.3 .3H2L3.1 1.9L2 3.5H.3Z" fill="none" stroke="#d8d8d8" stroke-width=".5"/></svg><div class="a" style="left:269.0px;top:189.6px;width:2.8px;height:2.8px;border-radius:50%;border:.55px solid #3fd23f"></div><i style="left:268px;top:189.3px;font-size:3.5px;color:#d8d8d8;transform:translateX(-100%)">Yaw</i><div class="a" style="left:269.0px;top:199.0px;width:2.8px;height:2.8px;border-radius:50%;border:.55px solid #3fd23f"></div><i style="left:268px;top:198.7px;font-size:3.5px;color:#d8d8d8;transform:translateX(-100%)">Pitch</i></div></div><div class="a gbar"></div><b style="left:95px;top:43px;width:2.6px;height:3.6px;border:.5px solid #777"></b><i style="left:99px;top:43.4px;font-size:3.2px;color:#888;">v</i><svg class="a" style="left:109.5px;top:43.5px" width="5" height="4" viewBox="0 0 5 4"><path d="M0 2L2.4 0V1.2H5V2.8H2.4V4Z" fill="#d8d8d8"/></svg><svg class="a" style="left:121.5px;top:43.5px" width="5" height="4" viewBox="0 0 5 4"><path d="M5 2L2.6 0V1.2H0V2.8H2.6V4Z" fill="#d8d8d8"/></svg><i style="left:137px;top:42.3px;font-size:5.3px;color:#aaa;">ƒ</i><i style="left:147px;top:42.5px;font-size:6.3px;color:#8e8e8e;">BP_Brute <span style='color:#ccc'>&gt;</span> Look</i><i style="left:425px;top:42.9px;font-size:5.1px;color:#3e3e3e;">Zoom 1:1</i><div class="wm">BLUEPRINT</div><div class="a dp"></div><div class="srch" style="left:453px;top:42.5px;width:128px;height:5.5px"></div><svg class="a" style="left:455px;top:43.2px" width="4" height="4" viewBox="0 0 4 4"><circle cx="1.6" cy="1.6" r="1.15" fill="none" stroke="#aaa" stroke-width=".55"/><path d="M2.4 2.4L3.6 3.6" stroke="#aaa" stroke-width=".6"/></svg><i style="left:461px;top:43.6px;font-size:3.5px;color:#444;">Search</i><b style="left:585.5px;top:43px;width:3.4px;height:3.6px;background:#888;"></b><b style="left:592.5px;top:43px;width:3.8px;height:3.8px;border:.6px solid #888;border-radius:50%"></b><b style="left:450px;top:51.5px;width:149px;height:7.9px;background:#262626;"></b><i style="left:453px;top:53.5px;font-size:3px;color:#888;">v</i><i style="left:457px;top:53.5px;font-size:3.4px;color:#d0d0d0;font-weight:bold;">Graph Node</i><b style="left:450px;top:60px;width:149px;height:7.9px;background:#1e1e1e;"></b><i style="left:457px;top:62px;font-size:3.4px;color:#a8a8a8;">Name</i><b style="left:514px;top:61.5px;width:38px;height:5px;background:#0d0d0d;"></b><i style="left:516px;top:62px;font-size:3.2px;">Look</i><b style="left:450px;top:68.4px;width:149px;height:7.9px;background:#262626;"></b><i style="left:453px;top:70.4px;font-size:3px;color:#888;">v</i><i style="left:457px;top:70.4px;font-size:3.4px;color:#d0d0d0;font-weight:bold;">Graph</i><b style="left:450px;top:76.9px;width:149px;height:7.9px;background:#1e1e1e;"></b><i style="left:457px;top:78.9px;font-size:3.4px;color:#a8a8a8;">Description</i><b style="left:514px;top:78.4px;width:38px;height:5px;background:#0d0d0d;"></b><b style="left:450px;top:85.3px;width:149px;height:7.9px;background:#1e1e1e;"></b><i style="left:457px;top:87.3px;font-size:3.4px;color:#a8a8a8;">Category</i><b style="left:514px;top:86.8px;width:38px;height:5px;background:#0d0d0d;"></b><i style="left:516px;top:87.3px;font-size:3.2px;">Default v</i><b style="left:450px;top:93.8px;width:149px;height:7.9px;background:#1e1e1e;"></b><i style="left:457px;top:95.8px;font-size:3.4px;color:#a8a8a8;">Keywords</i><b style="left:514px;top:95.3px;width:38px;height:5px;background:#0d0d0d;"></b><b style="left:450px;top:102.2px;width:149px;height:7.9px;background:#1e1e1e;"></b><i style="left:457px;top:104.2px;font-size:3.4px;color:#a8a8a8;">Compact Node Title</i><b style="left:514px;top:103.7px;width:38px;height:5px;background:#0d0d0d;"></b><b style="left:450px;top:110.7px;width:149px;height:7.9px;background:#1e1e1e;"></b><i style="left:457px;top:112.7px;font-size:3.4px;color:#a8a8a8;">Pure</i><b style="left:514px;top:112.7px;width:3.6px;height:3.6px;background:#0d0d0d;"></b><b style="left:450px;top:119.1px;width:149px;height:7.9px;background:#1e1e1e;"></b><i style="left:457px;top:121.1px;font-size:3.4px;color:#a8a8a8;">Call In Editor</i><b style="left:514px;top:121.1px;width:3.6px;height:3.6px;background:#0d0d0d;"></b><b style="left:450px;top:127.6px;width:149px;height:7.9px;background:#1e1e1e;"></b><i style="left:457px;top:129.6px;font-size:3.4px;color:#a8a8a8;">Access Specifier</i><b style="left:514px;top:129.1px;width:38px;height:5px;background:#0d0d0d;"></b><i style="left:516px;top:129.6px;font-size:3.2px;">Public v</i><b style="left:450px;top:136px;width:149px;height:7.9px;background:#262626;"></b><i style="left:453px;top:138px;font-size:3px;color:#888;">v</i><i style="left:457px;top:138px;font-size:3.4px;color:#d0d0d0;font-weight:bold;">Advanced</i><b style="left:450px;top:144.5px;width:149px;height:7.9px;background:#262626;"></b><i style="left:453px;top:146.4px;font-size:3px;color:#888;">v</i><i style="left:457px;top:146.5px;font-size:3.4px;color:#d0d0d0;font-weight:bold;">Inputs</i><b style="left:592.5px;top:146.8px;width:3.4px;height:3.4px;border:.5px solid #aaa;border-radius:50%"></b><b style="left:450px;top:152.9px;width:149px;height:7.9px;background:#1e1e1e;"></b><i style="left:452.5px;top:154.8px;font-size:3.5px;color:#888;">›</i><b style="left:458px;top:154.4px;width:38px;height:5px;background:#0d0d0d;"></b><i style="left:460px;top:154.9px;font-size:3.2px;">Yaw</i><b style="left:512px;top:154.4px;width:38px;height:5px;background:#0d0d0d;"></b><b style="left:514px;top:155.9px;width:3.4px;height:1.8px;background:#3fc23f;"></b><i style="left:519px;top:154.9px;font-size:3.2px;">Float</i><i style="left:542px;top:154.9px;font-size:3.2px;color:#aaa;">v</i><b style="left:553px;top:155.9px;width:3.4px;height:1.8px;background:#3fc23f;"></b><i style="left:557.5px;top:155px;font-size:3px;color:#aaa;">v</i><i style="left:566px;top:154.4px;font-size:3.7px;color:#ccc;">✕</i><b style="left:450px;top:161.3px;width:149px;height:7.9px;background:#1e1e1e;"></b><i style="left:452.5px;top:163.3px;font-size:3.5px;color:#888;">›</i><b style="left:458px;top:162.8px;width:38px;height:5px;background:#0d0d0d;"></b><i style="left:460px;top:163.4px;font-size:3.2px;">Pitch</i><b style="left:512px;top:162.8px;width:38px;height:5px;background:#0d0d0d;"></b><b style="left:514px;top:164.3px;width:3.4px;height:1.8px;background:#3fc23f;"></b><i style="left:519px;top:163.4px;font-size:3.2px;">Float</i><i style="left:542px;top:163.4px;font-size:3.2px;color:#aaa;">v</i><b style="left:553px;top:164.3px;width:3.4px;height:1.8px;background:#3fc23f;"></b><i style="left:557.5px;top:163.4px;font-size:3px;color:#aaa;">v</i><i style="left:566px;top:162.8px;font-size:3.7px;color:#ccc;">✕</i><b style="left:450px;top:169.8px;width:149px;height:7.9px;background:#262626;"></b><i style="left:453px;top:171.8px;font-size:3px;color:#888;">v</i><i style="left:457px;top:171.8px;font-size:3.4px;color:#d0d0d0;font-weight:bold;">Outputs</i><b style="left:592.5px;top:172.1px;width:3.4px;height:3.4px;border:.5px solid #aaa;border-radius:50%"></b><b style="left:450px;top:178.2px;width:149px;height:7.9px;background:#1e1e1e;"></b><i style="left:457px;top:180.3px;font-size:3.1px;color:#a8a8a8;">Please press the + icon above to add parameters</i><svg class="a" style="left:201.5px;top:33.5px;z-index:9" width="5" height="7" viewBox="0 0 5 7"><path d="M.3 .3L.3 5.6L1.6 4.4L2.6 6.6L3.5 6.2L2.5 4.1L4.3 4.1Z" fill="#fff" stroke="#000" stroke-width=".35"/></svg><div class="bd"></div></div><div class="cell" style="left:1215px;top:1031px"><div class="a menu"></div><div class="a tabs"></div><div class="a tb"></div><div class="a ptab"></div><svg class="a" style="left:2px;top:2px" width="14" height="14" viewBox="0 0 14 14"><circle cx="7" cy="7" r="6" fill="#1a1a1a" stroke="#9a9a9a" stroke-width=".7"/><path d="M4.2 4.3 L5.6 4 L5.6 8.8 Q6.6 9.6 7.6 8.8 L7.6 4.6 L9.1 4.2 L9.1 9.6 Q6.6 11 4.2 9.6Z" fill="#c8c8c8"/></svg><i style="left:21.5px;top:1.8px;font-size:3.8px;color:#c8c8c8;">File</i><i style="left:35.5px;top:1.8px;font-size:3.8px;color:#c8c8c8;">Edit</i><i style="left:51px;top:1.8px;font-size:3.8px;color:#c8c8c8;">Asset</i><i style="left:68px;top:1.8px;font-size:3.8px;color:#c8c8c8;">View</i><i style="left:84.5px;top:1.8px;font-size:3.8px;color:#c8c8c8;">Debug</i><i style="left:103.5px;top:1.8px;font-size:3.8px;color:#c8c8c8;">Window</i><i style="left:123px;top:1.8px;font-size:3.8px;color:#c8c8c8;">Tools</i><i style="left:140.5px;top:1.8px;font-size:3.8px;color:#c8c8c8;">Help</i><b style="left:564px;top:4px;width:4px;height:.6px;background:#aaa;"></b><div class="a" style="left:578px;top:2.2px;width:3.4px;height:3.2px;border:.6px solid #bbb"></div><i style="left:591.5px;top:1.3px;font-size:4.6px;color:#ddd;">✕</i><svg class="a" style="left:22.5px;top:10px" width="5" height="5" viewBox="0 0 5 5"><path d="M.5 2.5 L2.5 .6 L4.5 2.5 V4.5 H.5Z" fill="none" stroke="#666" stroke-width=".5"/></svg><svg class="a" style="left:33.5px;top:10.3px" width="5" height="4.5" viewBox="0 0 5 4.5"><path d="M2.5 .2 L4.8 4.3 H.2Z" fill="#d8a020"/></svg><i style="left:41px;top:10.8px;font-size:3.8px;color:#c0c0c0;">DefaultMap</i><b style="left:97px;top:8.5px;width:65px;height:8.5px;background:#1e1e1e;border-radius:1px 1px 0 0"></b><svg class="a" style="left:100px;top:9.5px" width="5" height="6" viewBox="0 0 5 6"><circle cx="2.5" cy="1.6" r="1.3" fill="#3a7ee0"/><path d="M.4 5.6 Q.4 3.2 2.5 3.2 Q4.6 3.2 4.6 5.6Z" fill="#3a7ee0"/></svg><i style="left:107px;top:10.8px;font-size:3.8px;color:#d0d0d0;">BP_Brute</i><i style="left:155.5px;top:10.3px;font-size:4.9px;">×</i><i style="left:552px;top:10.8px;font-size:3.6px;color:#8a8a8a;">Parent class: <u>Character</u></i><b style="left:5.5px;top:20px;width:5px;height:6px;background:#c8c8c8;border-radius:.5px"></b><b style="left:19.5px;top:20.5px;width:5px;height:5.5px;background:#a8a8a8;border-radius:.5px"></b><b style="left:35px;top:19.5px;width:6px;height:7px;background:#d8c020;border-radius:.5px"></b><b style="left:36.5px;top:21.5px;width:3px;height:3px;background:#58a030;"></b><i style="left:44px;top:22px;font-size:3.9px;">Compile</i><i style="left:62.5px;top:21.8px;font-size:4.2px;color:#888;">:</i><b style="left:71px;top:21.5px;width:3px;height:3.5px;background:#bbb;"></b><i style="left:76px;top:22px;font-size:3.9px;">Diff v</i><b style="left:100px;top:20.5px;width:4.5px;height:4.5px;border:.6px solid #ccc;border-radius:50%"></b><i style="left:106px;top:22px;font-size:3.9px;">Find</i><b style="left:121px;top:20.5px;width:5px;height:5px;background:#888;border-radius:1px"></b><i style="left:128.5px;top:22px;font-size:3.9px;">Hide Unrelated</i><i style="left:160px;top:21.8px;font-size:4.2px;color:#888;">:</i><b style="left:170.5px;top:20.5px;width:5px;height:5px;border:.7px solid #bbb;border-radius:50%"></b><i style="left:177.5px;top:22px;font-size:3.9px;">Class Settings</i><b style="left:211px;top:20.5px;width:5px;height:5px;background:#bbb;clip-path:polygon(0 100%,20% 100%,100% 20%,80% 0)"></b><i style="left:218.5px;top:22px;font-size:3.9px;">Class Defaults</i><b style="left:251.5px;top:20.5px;width:5px;height:5px;background:#aaa;clip-path:polygon(0 0,100% 60%,55% 65%,40% 100%)"></b><i style="left:259px;top:22px;font-size:3.9px;">Simulation</i><b style="left:288px;top:18.8px;width:44px;height:9.5px;background:#232323;border-radius:1px"></b><b style="left:291.7px;top:20.8px;width:4px;height:5px;background:#40c040;clip-path:polygon(0 0,100% 50%,0 100%)"></b><b style="left:300.5px;top:21px;width:2.6px;height:4.6px;background:#4a5a4a;clip-path:polygon(0 0,100% 50%,0 100%)"></b><b style="left:309px;top:21.2px;width:4px;height:4.2px;background:#555;"></b><b style="left:317.5px;top:21px;width:3.8px;height:4.8px;background:#bbb;clip-path:polygon(0 0,100% 50%,0 100%)"></b><b style="left:328px;top:21px;width:.6px;height:5px;background:#555;"></b><b style="left:338px;top:19.5px;width:55px;height:7px;background:#0c0c0c;border-radius:1px"></b><i style="left:340px;top:22px;font-size:3.7px;">No debug object selected v</i><b style="left:397px;top:21px;width:3.5px;height:4px;background:#777;"></b><div class="a sb"></div><b style="left:3px;top:320.5px;width:3px;height:3.5px;background:#999;"></b><i style="left:8px;top:320.7px;font-size:3.7px;color:#aaa;">Content Drawer</i><b style="left:44px;top:320.5px;width:3px;height:3.5px;background:#bbb;"></b><i style="left:50px;top:320.7px;font-size:3.7px;color:#aaa;">Output Log</i><b style="left:78px;top:320.7px;width:4px;height:3.2px;border:.5px solid #999"></b><i style="left:84px;top:320.7px;font-size:3.7px;color:#aaa;">Cmd v</i><b style="left:103px;top:319.5px;width:93px;height:5.5px;background:#0c0c0c;border-radius:1px"></b><i style="left:105.5px;top:320.6px;font-size:3.5px;color:#555;">Enter Console Command</i><b style="left:518px;top:320.5px;width:3px;height:3.6px;background:#aaa;"></b><i style="left:524px;top:320.7px;font-size:3.7px;color:#aaa;">1 Unsaved</i><b style="left:553px;top:320.5px;width:2.5px;height:3.8px;background:#aaa;"></b><i style="left:558px;top:320.7px;font-size:3.7px;color:#aaa;">Revision Control v</i><div class="a task"></div><b style="left:3.3px;top:329.5px;width:1.9px;height:1.9px;background:#fff;"></b><b style="left:5.6px;top:329.5px;width:1.9px;height:1.9px;background:#fff;"></b><b style="left:3.3px;top:331.8px;width:1.9px;height:1.9px;background:#fff;"></b><b style="left:5.6px;top:331.8px;width:1.9px;height:1.9px;background:#fff;"></b><b style="left:15.5px;top:329.5px;width:4.5px;height:4px;background:#c040e0;border-radius:1px;transform:skewX(-10deg)"></b><b style="left:27px;top:329.8px;width:4.8px;height:3.6px;background:#e8c040;border-radius:.4px"></b><div class="a" style="left:38.6px;top:329.2px;width:4.4px;height:4.4px;border-radius:50%;background:conic-gradient(#e33 0 33%,#fc3 0 66%,#3a5 0)"></div><b style="left:48.5px;top:327.5px;width:8.5px;height:8.5px;background:#3a3d44;"></b><b style="left:50.5px;top:329.3px;width:4.5px;height:4.5px;border:.6px solid #aaa;border-radius:50%"></b><b style="left:61.5px;top:329.4px;width:4.2px;height:4.2px;border:.6px solid #888;border-radius:50%"></b><i style="left:535px;top:329.4px;font-size:4.1px;">^</i><b style="left:542.5px;top:329.2px;width:1.6px;height:4.2px;background:#ddd;border-radius:1px"></b><b style="left:549px;top:329.6px;width:3.8px;height:3px;border:.5px solid #ccc"></b><b style="left:555.5px;top:330px;width:2px;height:2.5px;background:#ccc;clip-path:polygon(0 30%,40% 30%,100% 0,100% 100%,40% 70%,0 70%)"></b><i style="left:561px;top:329.9px;font-size:3px;color:#ccc;">ENG</i><i style="left:575px;top:328px;font-size:3.5px;color:rgba(230,230,230,.55);">Udemy</i><b style="left:588.5px;top:329.4px;width:4.5px;height:3.6px;background:#e8e8e8;border-radius:.3px"></b><div class="a lp"></div><b style="left:1px;top:31px;width:50px;height:9px;background:#1a1a1a;border-radius:1px 1px 0 0"></b><b style="left:3px;top:33px;width:3px;height:3.5px;border:.5px solid #aaa"></b><i style="left:8.5px;top:33.6px;font-size:3.8px;color:#c0c0c0;">Components</i><i style="left:44.5px;top:32.9px;font-size:4.6px;color:#aaa;">×</i><b style="left:7px;top:41px;width:17px;height:6px;background:#2a2a2a;border-radius:1px"></b><b style="left:9px;top:42.5px;width:1px;height:3px;background:#50c050;"></b><b style="left:8px;top:43.5px;width:3px;height:1px;background:#50c050;"></b><i style="left:12.5px;top:42.4px;font-size:3.8px;color:#ccc;">Add</i><div class="srch" style="left:27px;top:41px;width:61px;height:6px"></div><svg class="a" style="left:29px;top:42px" width="4" height="4" viewBox="0 0 4 4"><circle cx="1.6" cy="1.6" r="1.15" fill="none" stroke="#aaa" stroke-width=".55"/><path d="M2.4 2.4L3.6 3.6" stroke="#aaa" stroke-width=".6"/></svg><i style="left:35px;top:42.6px;font-size:3.5px;color:#444;">Search</i><b style="left:5.9px;top:53.6px;width:2.6px;height:3.6px;background:#999;border-radius:.6px"></b><i style="left:10.4px;top:53.2px;font-size:3.8px;color:#b8b8b8;letter-spacing:-.05px">BP_Brute (Self)</i><b style="left:14.1px;top:61.1px;width:2.6px;height:3.6px;background:#999;border-radius:.6px"></b><i style="left:18.6px;top:60.7px;font-size:3.8px;color:#b8b8b8;letter-spacing:-.05px">Capsule Component (CollisionCylinder)</i><b style="left:17.3px;top:68.7px;width:2.6px;height:3.6px;background:#999;border-radius:.6px"></b><i style="left:21.8px;top:68.3px;font-size:3.8px;color:#b8b8b8;letter-spacing:-.05px">Arrow Component (Arrow) <u>Edit in C++</u></i><b style="left:17.3px;top:76.2px;width:2.6px;height:3.6px;background:#999;border-radius:.6px"></b><i style="left:21.8px;top:75.8px;font-size:3.8px;color:#b8b8b8;letter-spacing:-.05px">CameraBoom</i><b style="left:20.3px;top:83.8px;width:2.6px;height:3.6px;background:#999;border-radius:.6px"></b><i style="left:24.8px;top:83.4px;font-size:3.8px;color:#b8b8b8;letter-spacing:-.05px">FollowCamera</i><b style="left:17.3px;top:91.3px;width:2.6px;height:3.6px;background:#999;border-radius:.6px"></b><i style="left:21.8px;top:90.9px;font-size:3.8px;color:#b8b8b8;letter-spacing:-.05px">Mesh (CharacterMesh0)  <u>Edit in C++</u></i><b style="left:14.1px;top:102.2px;width:2.6px;height:3.6px;background:#999;border-radius:.6px"></b><i style="left:18.6px;top:101.8px;font-size:3.8px;color:#b8b8b8;letter-spacing:-.05px">Character Movement (CharMoveComp)</i><b style="left:8px;top:97.3px;width:82px;height:.5px;background:#333;"></b><b style="left:1px;top:118px;width:50px;height:8.5px;background:#1a1a1a;border-radius:1px 1px 0 0"></b><b style="left:3px;top:120px;width:3px;height:3.5px;background:#888;"></b><i style="left:9px;top:120.4px;font-size:3.8px;color:#c0c0c0;">My Blueprint</i><i style="left:44.5px;top:119.6px;font-size:4.6px;color:#aaa;">×</i><b style="left:1px;top:126.5px;width:90px;height:.5px;background:#0e0e0e;"></b><b style="left:6px;top:128px;width:18px;height:5.5px;background:#262626;border-radius:1px"></b><b style="left:9px;top:129.3px;width:1px;height:3px;background:#50c050;"></b><b style="left:8px;top:130.3px;width:3px;height:1px;background:#50c050;"></b><i style="left:12.5px;top:129.4px;font-size:3.8px;color:#ccc;">Add</i><div class="srch" style="left:26px;top:128px;width:54px;height:5.5px"></div><svg class="a" style="left:28px;top:128.8px" width="4" height="4" viewBox="0 0 4 4"><circle cx="1.6" cy="1.6" r="1.15" fill="none" stroke="#aaa" stroke-width=".55"/><path d="M2.4 2.4L3.6 3.6" stroke="#aaa" stroke-width=".6"/></svg><b style="left:83.6px;top:128.6px;width:3.6px;height:3.6px;border:.6px solid #aaa;border-radius:50%"></b><div class="hdr" style="top:137.29999999999998px"></div><i style="left:7px;top:139.2px;font-size:3.2px;color:#c8c8c8;font-weight:bold;">GRAPHS</i><i style="left:2.8px;top:139.2px;font-size:3.2px;color:#888;">v</i><b style="left:83.6px;top:138.7px;width:3.8px;height:3.8px;border:.6px solid #999;border-radius:50%"></b><b style="left:7px;top:147.8px;width:3px;height:2.6px;background:#aaa;"></b><i style="left:12.5px;top:147.9px;font-size:3.6px;">EventGraph</i><b style="left:10.5px;top:155.8px;width:2.8px;height:2.8px;border:.6px solid #ccc;border-radius:50%"></b><i style="left:15.5px;top:156px;font-size:3.6px;color:#b8b8b8;">Event BeginPlay</i><b style="left:10.5px;top:163.5px;width:2.8px;height:2.8px;border:.6px solid #ccc;border-radius:50%"></b><i style="left:15.5px;top:163.7px;font-size:3.6px;color:#b8b8b8;">EnhancedInputAction IA_Move</i><b style="left:10.5px;top:171.2px;width:2.8px;height:2.8px;border:.6px solid #ccc;border-radius:50%"></b><i style="left:15.5px;top:171.4px;font-size:3.6px;color:#b8b8b8;">EnhancedInputAction IA_Look</i><div class="hdr" style="top:178.69999999999996px"></div><i style="left:7px;top:180.6px;font-size:3.2px;color:#c8c8c8;font-weight:bold;">FUNCTIONS <span style='color:#666;font-weight:normal'>(14 OVERRIDABLE)</span></i><i style="left:2.8px;top:180.6px;font-size:3.2px;color:#888;">v</i><b style="left:57px;top:179.4px;width:22px;height:5.2px;background:#0e0e0e;border-radius:1px"></b><i style="left:59px;top:180.8px;font-size:3.2px;">Override v</i><b style="left:83.6px;top:180.1px;width:3.8px;height:3.8px;border:.6px solid #999;border-radius:50%"></b><i style="left:9px;top:189.7px;font-size:3.7px;color:#aaa;">ƒ</i><i style="left:13px;top:189.9px;font-size:3.6px;">Construction Script</i><i style="left:9px;top:197.5px;font-size:3.7px;color:#aaa;">ƒ</i><i style="left:13px;top:197.7px;font-size:3.6px;">Move</i><i style="left:9px;top:205.3px;font-size:3.7px;color:#aaa;">ƒ</i><i style="left:13px;top:205.5px;font-size:3.6px;">Look</i><div class="hdr" style="top:211.9px"></div><i style="left:7px;top:213.8px;font-size:3.2px;color:#c8c8c8;font-weight:bold;">MACROS</i><i style="left:2.8px;top:213.8px;font-size:3.2px;color:#888;">v</i><b style="left:83.6px;top:213.3px;width:3.8px;height:3.8px;border:.6px solid #999;border-radius:50%"></b><div class="hdr" style="top:221.20000000000002px"></div><i style="left:7px;top:223.1px;font-size:3.2px;color:#c8c8c8;font-weight:bold;">VARIABLES</i><i style="left:2.8px;top:223.1px;font-size:3.2px;color:#888;">v</i><b style="left:83.6px;top:222.6px;width:3.8px;height:3.8px;border:.6px solid #999;border-radius:50%"></b><i style="left:3px;top:230.7px;font-size:3.2px;color:#888;">v</i><i style="left:6px;top:230.8px;font-size:3.5px;color:#c8c8c8;font-weight:bold;">Components</i><i style="left:10px;top:236.8px;font-size:3.5px;color:#a8a8a8;">FollowCamera</i><b style="left:58px;top:237.5px;width:3.4px;height:1.8px;background:#30a0e0;border-radius:1px"></b><i style="left:10px;top:243px;font-size:3.5px;color:#a8a8a8;">CameraBoom</i><b style="left:58px;top:243.7px;width:3.4px;height:1.8px;background:#30a0e0;border-radius:1px"></b><div class="hdr" style="top:248.79999999999998px"></div><i style="left:7px;top:250.7px;font-size:3.2px;color:#c8c8c8;font-weight:bold;">EVENT DISPATCHERS</i><i style="left:2.8px;top:250.7px;font-size:3.2px;color:#888;">v</i><b style="left:83.6px;top:250.2px;width:3.8px;height:3.8px;border:.6px solid #999;border-radius:50%"></b><div class="hdr" style="top:258.2px"></div><i style="left:7px;top:260.1px;font-size:3.2px;color:#c8c8c8;font-weight:bold;">LOCAL VARIABLES <span style='color:#666;font-weight:normal'>(MOVE)</span></i><i style="left:2.8px;top:260.1px;font-size:3.2px;color:#888;">v</i><b style="left:83.6px;top:259.6px;width:3.8px;height:3.8px;border:.6px solid #999;border-radius:50%"></b><b style="left:93.5px;top:33.2px;width:3.5px;height:3px;background:#999;"></b><i style="left:99px;top:33.6px;font-size:3.8px;color:#a8a8a8;">Viewport</i><i style="left:145px;top:33.2px;font-size:3.9px;color:#aaa;">ƒ</i><i style="left:150.5px;top:33.6px;font-size:3.8px;color:#a8a8a8;">Construction Scr...</i><b style="left:194px;top:33.2px;width:3.4px;height:3.4px;border:.5px dashed #bbb"></b><i style="left:199.5px;top:33.6px;font-size:3.8px;color:#a8a8a8;">EventGraph</i><b style="left:245.5px;top:31px;width:48px;height:9px;background:#1e1e1e;border-radius:1px 1px 0 0"></b><i style="left:248px;top:33.2px;font-size:3.9px;color:#aaa;">ƒ</i><i style="left:253.5px;top:33.6px;font-size:3.8px;color:#d0d0d0;">Move</i><i style="left:290px;top:32.9px;font-size:4.6px;color:#aaa;">×</i><i style="left:298px;top:33.2px;font-size:3.9px;color:#aaa;">ƒ</i><i style="left:303.5px;top:33.6px;font-size:3.8px;color:#a8a8a8;">Look</i><b style="left:450px;top:31px;width:50px;height:9px;background:#1c1c1c;border-radius:1px 1px 0 0"></b><b style="left:452.5px;top:33px;width:3px;height:3.6px;background:#ccc;clip-path:polygon(0 100%,25% 100%,100% 25%,75% 0)"></b><i style="left:458.5px;top:33.6px;font-size:3.8px;color:#c8c8c8;">Details</i><i style="left:492.5px;top:32.9px;font-size:4.6px;color:#aaa;">×</i><div class="a graph"></div><div class="a" style="left:92px;top:40px;width:357px;height:278px;overflow:hidden"><div class="a" style="left:-92px;top:-40px;width:600px;height:337px"><svg class="a" style="left:0;top:0" width="600" height="337" viewBox="0 0 600 337"><path d="M152.6 121.2 H403" fill="none" stroke="#eeeeee" stroke-width="0.9"/><path d="M152.6 131 C180 131 190 133 203 133" fill="none" stroke="#3fc23f" stroke-width="0.8"/><path d="M152.6 140.3 C180 141 195 145 210 146" fill="none" stroke="#3fc23f" stroke-width="0.8"/><path d="M230 152 C300 185 360 215 393 221.4 C410 226 430 232 449 234" fill="none" stroke="#3fc23f" stroke-width="0.8"/><path d="M276.6 141 C290 141 295 145 308.8 149.7" fill="none" stroke="#3fc23f" stroke-width="0.8"/><path d="M371 225 H398.8" fill="none" stroke="#8a86b0" stroke-width="0.8"/><path d="M391 146 C395 146 396 141.5 403.8 141.5" fill="none" stroke="#d8a820" stroke-width="0.8"/></svg><div class="node" style="left:123px;top:108px;width:29.6px;height:38px;"><div class="nh" style="height:7px;background:linear-gradient(90deg,#7a2aa8,#5a1a80 60%,#3a1a4a)"></div></div><i style="left:127.5px;top:109.9px;font-size:3.5px;color:#f4f4f4;">▦ Move</i><div class="a" style="left:145.1px;top:119.5px;width:3px;height:3.4px;background:#f0f0f0;clip-path:polygon(0 0,60% 0,100% 50%,60% 100%,0 100%)"></div><div class="a" style="left:144.7px;top:129.7px;width:2.6px;height:2.6px;border-radius:50%;background:#3fd23f"></div><i style="left:143.6px;top:129.4px;font-size:3.3px;color:#d8d8d8;transform:translateX(-100%)">X</i><div class="a" style="left:144.7px;top:139.0px;width:2.6px;height:2.6px;border-radius:50%;background:#3fd23f"></div><i style="left:143.6px;top:138.7px;font-size:3.3px;color:#d8d8d8;transform:translateX(-100%)">Y</i><b style="left:206.5px;top:123.2px;width:4.4px;height:2.8px;background:#c8c8c8;border-radius:.5px"></b><div class="node" style="left:203px;top:128.6px;width:73.6px;height:24px;"><div class="nh" style="height:11.2px;background:linear-gradient(90deg,#4a8a3a,#3a6a30 60%,#2a3a28)"></div></div><i style="left:207.5px;top:130.8px;font-size:3.5px;color:#f4f4f4;">ƒ Get Control Rotation</i><i style="left:211px;top:134.6px;font-size:2.8px;color:rgba(200,230,255,.55);">Target is Pawn</i><div class="a" style="left:207.6px;top:145.1px;width:2.8px;height:2.8px;border-radius:50%;border:.55px solid #58b8f0"></div><i style="left:212px;top:144.9px;font-size:3.3px;color:#d8d8d8;">Target</i><b style="left:225px;top:144px;width:9px;height:4.8px;border:.5px solid #888"></b><b style="left:243.7px;top:143.5px;width:26px;height:5px;background:rgba(80,80,200,.6);border-radius:1px"></b><i style="left:245px;top:144px;font-size:3.4px;color:#fff;">Return Value</i><div class="a" style="left:270.2px;top:144.7px;width:2.6px;height:2.6px;border-radius:50%;background:#a8a0f0"></div><b style="left:270.5px;top:142px;width:.6px;height:8px;background:#fff;"></b><b style="left:267px;top:145.7px;width:8px;height:.6px;background:#fff;"></b><div class="node" style="left:303px;top:133.6px;width:94px;height:24.7px;"><div class="nh" style="height:6.2px;background:linear-gradient(90deg,#4a8a3a,#3a6a30 60%,#2a3a28)"></div></div><i style="left:307.5px;top:135.1px;font-size:3.5px;color:#f4f4f4;">ƒ Get Forward Vector</i><div class="a" style="left:307.40000000000003px;top:148.29999999999998px;width:2.8px;height:2.8px;border-radius:50%;border:.55px solid #a8a0f0"></div><div class="a" style="left:389.7px;top:144.7px;width:2.6px;height:2.6px;border-radius:50%;background:#f0c020"></div><i style="left:388.6px;top:144.4px;font-size:3.3px;color:#d8d8d8;transform:translateX(-100%)">Return Value</i><i style="left:313px;top:145.2px;font-size:3.2px;color:#ddd;">In Rot</i><b style="left:320px;top:149.5px;width:9px;height:4.6px;border:.5px solid #999"></b><i style="left:321.5px;top:150.1px;font-size:2.8px;color:#ccc;">0.0</i><b style="left:334px;top:149.5px;width:9px;height:4.6px;border:.5px solid #999"></b><i style="left:335.5px;top:150.1px;font-size:2.8px;color:#ccc;">0.0</i><b style="left:348px;top:149.5px;width:9px;height:4.6px;border:.5px solid #999"></b><i style="left:349.5px;top:150.1px;font-size:2.8px;color:#ccc;">0.0</i><div class="node" style="left:398.3px;top:103.4px;width:49.5px;height:63.6px;"><div class="nh" style="height:11.6px;background:linear-gradient(90deg,#3a7aa0,#2c5a78 60%,#25384a)"></div></div><i style="left:402.8px;top:105.7px;font-size:3.5px;color:#f4f4f4;">ƒ Add Movement Input</i><i style="left:406.3px;top:109.5px;font-size:2.8px;color:rgba(200,230,255,.55);">Target is Pawn</i><div class="a" style="left:402.40000000000003px;top:119.5px;width:3px;height:3.4px;background:#f0f0f0;clip-path:polygon(0 0,60% 0,100% 50%,60% 100%,0 100%)"></div><div class="a" style="left:402.40000000000003px;top:130.2px;width:2.8px;height:2.8px;border-radius:50%;border:.55px solid #58b8f0"></div><i style="left:406.8px;top:130px;font-size:3.3px;color:#d8d8d8;">Target</i><div class="a" style="left:402.5px;top:140.2px;width:2.6px;height:2.6px;border-radius:50%;background:#f0c020"></div><i style="left:406.8px;top:139.9px;font-size:3.3px;color:#d8d8d8;">World Direction</i><div class="a" style="left:402.40000000000003px;top:149.6px;width:2.8px;height:2.8px;border-radius:50%;border:.55px solid #3fd23f"></div><i style="left:406.8px;top:149.4px;font-size:3.3px;color:#d8d8d8;">Scale Value</i><div class="a" style="left:402.40000000000003px;top:159.4px;width:2.8px;height:2.8px;border-radius:50%;border:.55px solid #c02020"></div><i style="left:406.8px;top:159.2px;font-size:3.3px;color:#d8d8d8;">Force</i><b style="left:420px;top:129px;width:9px;height:4.8px;border:.5px solid #888"></b><div class="node" style="left:298px;top:207.8px;width:73px;height:24.8px;"><div class="nh" style="height:11.2px;background:linear-gradient(90deg,#4a8a3a,#3a6a30 60%,#2a3a28)"></div></div><i style="left:302.5px;top:210px;font-size:3.5px;color:#f4f4f4;">ƒ Get Control Rotation</i><i style="left:306px;top:213.8px;font-size:2.8px;color:rgba(200,230,255,.55);">Target is Pawn</i><div class="a" style="left:302.40000000000003px;top:224.2px;width:2.8px;height:2.8px;border-radius:50%;border:.55px solid #58b8f0"></div><i style="left:306.8px;top:224px;font-size:3.3px;color:#d8d8d8;">Target</i><div class="a" style="left:363.7px;top:223.7px;width:2.6px;height:2.6px;border-radius:50%;background:#a8a0f0"></div><i style="left:362.6px;top:223.4px;font-size:3.3px;color:#d8d8d8;transform:translateX(-100%)">Return Value</i><b style="left:320px;top:223px;width:9px;height:4.8px;border:.5px solid #888"></b><div class="node" style="left:393.4px;top:212.8px;width:60px;height:19.8px;"><div class="nh" style="height:6.2px;background:linear-gradient(90deg,#4a8a3a,#3a6a30 60%,#2a3a28)"></div></div><i style="left:397.9px;top:214.3px;font-size:3.5px;color:#f4f4f4;">ƒ Get Right Vector</i><div class="a" style="left:397.5px;top:224.29999999999998px;width:2.6px;height:2.6px;border-radius:50%;background:#a8a0f0"></div><i style="left:401.8px;top:224px;font-size:3.3px;color:#d8d8d8;">In Rot</i><i style="left:423px;top:224.2px;font-size:3.2px;color:#ddd;">Return Value</i></div></div><div class="a gbar"></div><b style="left:95px;top:43px;width:2.6px;height:3.6px;border:.5px solid #777"></b><i style="left:99px;top:43.4px;font-size:3.2px;color:#888;">v</i><svg class="a" style="left:109.5px;top:43.5px" width="5" height="4" viewBox="0 0 5 4"><path d="M0 2L2.4 0V1.2H5V2.8H2.4V4Z" fill="#d8d8d8"/></svg><svg class="a" style="left:121.5px;top:43.5px" width="5" height="4" viewBox="0 0 5 4"><path d="M5 2L2.6 0V1.2H0V2.8H2.6V4Z" fill="#d8d8d8"/></svg><i style="left:137px;top:42.3px;font-size:5.3px;color:#aaa;">ƒ</i><i style="left:147px;top:42.5px;font-size:6.3px;color:#8e8e8e;">BP_Brute <span style='color:#ccc'>&gt;</span> Move</i><i style="left:425px;top:42.9px;font-size:5.1px;color:#3e3e3e;">Zoom 1:1</i><div class="wm">BLUEPRINT</div><div class="a dp"></div><div class="srch" style="left:453px;top:42.5px;width:128px;height:5.5px"></div><svg class="a" style="left:455px;top:43.2px" width="4" height="4" viewBox="0 0 4 4"><circle cx="1.6" cy="1.6" r="1.15" fill="none" stroke="#aaa" stroke-width=".55"/><path d="M2.4 2.4L3.6 3.6" stroke="#aaa" stroke-width=".6"/></svg><i style="left:461px;top:43.6px;font-size:3.5px;color:#444;">Search</i><b style="left:585.5px;top:43px;width:3.4px;height:3.6px;background:#888;"></b><b style="left:592.5px;top:43px;width:3.8px;height:3.8px;border:.6px solid #888;border-radius:50%"></b><div class="bd"></div></div><div class="cell" style="left:1820px;top:1031px"><div class="a menu"></div><div class="a tabs"></div><div class="a tb"></div><div class="a ptab"></div><svg class="a" style="left:2px;top:2px" width="14" height="14" viewBox="0 0 14 14"><circle cx="7" cy="7" r="6" fill="#1a1a1a" stroke="#9a9a9a" stroke-width=".7"/><path d="M4.2 4.3 L5.6 4 L5.6 8.8 Q6.6 9.6 7.6 8.8 L7.6 4.6 L9.1 4.2 L9.1 9.6 Q6.6 11 4.2 9.6Z" fill="#c8c8c8"/></svg><i style="left:21.5px;top:1.8px;font-size:3.8px;color:#c8c8c8;">File</i><i style="left:35.5px;top:1.8px;font-size:3.8px;color:#c8c8c8;">Edit</i><i style="left:51px;top:1.8px;font-size:3.8px;color:#c8c8c8;">Asset</i><i style="left:68px;top:1.8px;font-size:3.8px;color:#c8c8c8;">View</i><i style="left:84.5px;top:1.8px;font-size:3.8px;color:#c8c8c8;">Debug</i><i style="left:103.5px;top:1.8px;font-size:3.8px;color:#c8c8c8;">Window</i><i style="left:123px;top:1.8px;font-size:3.8px;color:#c8c8c8;">Tools</i><i style="left:140.5px;top:1.8px;font-size:3.8px;color:#c8c8c8;">Help</i><b style="left:564px;top:4px;width:4px;height:.6px;background:#aaa;"></b><div class="a" style="left:578px;top:2.2px;width:3.4px;height:3.2px;border:.6px solid #bbb"></div><i style="left:591.5px;top:1.3px;font-size:4.6px;color:#ddd;">✕</i><svg class="a" style="left:22.5px;top:10px" width="5" height="5" viewBox="0 0 5 5"><path d="M.5 2.5 L2.5 .6 L4.5 2.5 V4.5 H.5Z" fill="none" stroke="#666" stroke-width=".5"/></svg><svg class="a" style="left:33.5px;top:10.3px" width="5" height="4.5" viewBox="0 0 5 4.5"><path d="M2.5 .2 L4.8 4.3 H.2Z" fill="#d8a020"/></svg><i style="left:41px;top:10.8px;font-size:3.8px;color:#c0c0c0;">DefaultMap</i><b style="left:97px;top:8.5px;width:65px;height:8.5px;background:#1e1e1e;border-radius:1px 1px 0 0"></b><svg class="a" style="left:100px;top:9.5px" width="5" height="6" viewBox="0 0 5 6"><circle cx="2.5" cy="1.6" r="1.3" fill="#3a7ee0"/><path d="M.4 5.6 Q.4 3.2 2.5 3.2 Q4.6 3.2 4.6 5.6Z" fill="#3a7ee0"/></svg><i style="left:107px;top:10.8px;font-size:3.8px;color:#d0d0d0;">BP_Brute</i><i style="left:155.5px;top:10.3px;font-size:4.9px;">×</i><i style="left:552px;top:10.8px;font-size:3.6px;color:#8a8a8a;">Parent class: <u>Character</u></i><b style="left:5.5px;top:20px;width:5px;height:6px;background:#c8c8c8;border-radius:.5px"></b><b style="left:19.5px;top:20.5px;width:5px;height:5.5px;background:#a8a8a8;border-radius:.5px"></b><b style="left:35px;top:19.5px;width:6px;height:7px;background:#d8c020;border-radius:.5px"></b><b style="left:36.5px;top:21.5px;width:3px;height:3px;background:#58a030;"></b><i style="left:44px;top:22px;font-size:3.9px;">Compile</i><i style="left:62.5px;top:21.8px;font-size:4.2px;color:#888;">:</i><b style="left:71px;top:21.5px;width:3px;height:3.5px;background:#bbb;"></b><i style="left:76px;top:22px;font-size:3.9px;">Diff v</i><b style="left:100px;top:20.5px;width:4.5px;height:4.5px;border:.6px solid #ccc;border-radius:50%"></b><i style="left:106px;top:22px;font-size:3.9px;">Find</i><b style="left:121px;top:20.5px;width:5px;height:5px;background:#888;border-radius:1px"></b><i style="left:128.5px;top:22px;font-size:3.9px;">Hide Unrelated</i><i style="left:160px;top:21.8px;font-size:4.2px;color:#888;">:</i><b style="left:170.5px;top:20.5px;width:5px;height:5px;border:.7px solid #bbb;border-radius:50%"></b><i style="left:177.5px;top:22px;font-size:3.9px;">Class Settings</i><b style="left:211px;top:20.5px;width:5px;height:5px;background:#bbb;clip-path:polygon(0 100%,20% 100%,100% 20%,80% 0)"></b><i style="left:218.5px;top:22px;font-size:3.9px;">Class Defaults</i><b style="left:251.5px;top:20.5px;width:5px;height:5px;background:#aaa;clip-path:polygon(0 0,100% 60%,55% 65%,40% 100%)"></b><i style="left:259px;top:22px;font-size:3.9px;">Simulation</i><b style="left:288px;top:18.8px;width:44px;height:9.5px;background:#232323;border-radius:1px"></b><b style="left:291.7px;top:20.8px;width:4px;height:5px;background:#40c040;clip-path:polygon(0 0,100% 50%,0 100%)"></b><b style="left:300.5px;top:21px;width:2.6px;height:4.6px;background:#4a5a4a;clip-path:polygon(0 0,100% 50%,0 100%)"></b><b style="left:309px;top:21.2px;width:4px;height:4.2px;background:#555;"></b><b style="left:317.5px;top:21px;width:3.8px;height:4.8px;background:#bbb;clip-path:polygon(0 0,100% 50%,0 100%)"></b><b style="left:328px;top:21px;width:.6px;height:5px;background:#555;"></b><b style="left:338px;top:19.5px;width:55px;height:7px;background:#0c0c0c;border-radius:1px"></b><i style="left:340px;top:22px;font-size:3.7px;">No debug object selected v</i><b style="left:397px;top:21px;width:3.5px;height:4px;background:#777;"></b><div class="a sb"></div><b style="left:3px;top:320.5px;width:3px;height:3.5px;background:#999;"></b><i style="left:8px;top:320.7px;font-size:3.7px;color:#aaa;">Content Drawer</i><b style="left:44px;top:320.5px;width:3px;height:3.5px;background:#bbb;"></b><i style="left:50px;top:320.7px;font-size:3.7px;color:#aaa;">Output Log</i><b style="left:78px;top:320.7px;width:4px;height:3.2px;border:.5px solid #999"></b><i style="left:84px;top:320.7px;font-size:3.7px;color:#aaa;">Cmd v</i><b style="left:103px;top:319.5px;width:93px;height:5.5px;background:#0c0c0c;border-radius:1px"></b><i style="left:105.5px;top:320.6px;font-size:3.5px;color:#555;">Enter Console Command</i><b style="left:518px;top:320.5px;width:3px;height:3.6px;background:#aaa;"></b><i style="left:524px;top:320.7px;font-size:3.7px;color:#aaa;">1 Unsaved</i><b style="left:553px;top:320.5px;width:2.5px;height:3.8px;background:#aaa;"></b><i style="left:558px;top:320.7px;font-size:3.7px;color:#aaa;">Revision Control v</i><div class="a task"></div><b style="left:3.3px;top:329.5px;width:1.9px;height:1.9px;background:#fff;"></b><b style="left:5.6px;top:329.5px;width:1.9px;height:1.9px;background:#fff;"></b><b style="left:3.3px;top:331.8px;width:1.9px;height:1.9px;background:#fff;"></b><b style="left:5.6px;top:331.8px;width:1.9px;height:1.9px;background:#fff;"></b><b style="left:15.5px;top:329.5px;width:4.5px;height:4px;background:#c040e0;border-radius:1px;transform:skewX(-10deg)"></b><b style="left:27px;top:329.8px;width:4.8px;height:3.6px;background:#e8c040;border-radius:.4px"></b><div class="a" style="left:38.6px;top:329.2px;width:4.4px;height:4.4px;border-radius:50%;background:conic-gradient(#e33 0 33%,#fc3 0 66%,#3a5 0)"></div><b style="left:48.5px;top:327.5px;width:8.5px;height:8.5px;background:#3a3d44;"></b><b style="left:50.5px;top:329.3px;width:4.5px;height:4.5px;border:.6px solid #aaa;border-radius:50%"></b><b style="left:61.5px;top:329.4px;width:4.2px;height:4.2px;border:.6px solid #888;border-radius:50%"></b><i style="left:535px;top:329.4px;font-size:4.1px;">^</i><b style="left:542.5px;top:329.2px;width:1.6px;height:4.2px;background:#ddd;border-radius:1px"></b><b style="left:549px;top:329.6px;width:3.8px;height:3px;border:.5px solid #ccc"></b><b style="left:555.5px;top:330px;width:2px;height:2.5px;background:#ccc;clip-path:polygon(0 30%,40% 30%,100% 0,100% 100%,40% 70%,0 70%)"></b><i style="left:561px;top:329.9px;font-size:3px;color:#ccc;">ENG</i><i style="left:575px;top:328px;font-size:3.5px;color:rgba(230,230,230,.55);">Udemy</i><b style="left:588.5px;top:329.4px;width:4.5px;height:3.6px;background:#e8e8e8;border-radius:.3px"></b><div class="a lp"></div><b style="left:1px;top:31px;width:50px;height:9px;background:#1a1a1a;border-radius:1px 1px 0 0"></b><b style="left:3px;top:33px;width:3px;height:3.5px;border:.5px solid #aaa"></b><i style="left:8.5px;top:33.6px;font-size:3.8px;color:#c0c0c0;">Components</i><i style="left:44.5px;top:32.9px;font-size:4.6px;color:#aaa;">×</i><b style="left:7px;top:41px;width:17px;height:6px;background:#2a2a2a;border-radius:1px"></b><b style="left:9px;top:42.5px;width:1px;height:3px;background:#50c050;"></b><b style="left:8px;top:43.5px;width:3px;height:1px;background:#50c050;"></b><i style="left:12.5px;top:42.4px;font-size:3.8px;color:#ccc;">Add</i><div class="srch" style="left:27px;top:41px;width:61px;height:6px"></div><svg class="a" style="left:29px;top:42px" width="4" height="4" viewBox="0 0 4 4"><circle cx="1.6" cy="1.6" r="1.15" fill="none" stroke="#aaa" stroke-width=".55"/><path d="M2.4 2.4L3.6 3.6" stroke="#aaa" stroke-width=".6"/></svg><i style="left:35px;top:42.6px;font-size:3.5px;color:#444;">Search</i><b style="left:5.9px;top:53.6px;width:2.6px;height:3.6px;background:#999;border-radius:.6px"></b><i style="left:10.4px;top:53.2px;font-size:3.8px;color:#b8b8b8;letter-spacing:-.05px">BP_Brute (Self)</i><b style="left:14.1px;top:61.1px;width:2.6px;height:3.6px;background:#999;border-radius:.6px"></b><i style="left:18.6px;top:60.7px;font-size:3.8px;color:#b8b8b8;letter-spacing:-.05px">Capsule Component (CollisionCylinder)</i><b style="left:17.3px;top:68.7px;width:2.6px;height:3.6px;background:#999;border-radius:.6px"></b><i style="left:21.8px;top:68.3px;font-size:3.8px;color:#b8b8b8;letter-spacing:-.05px">Arrow Component (Arrow) <u>Edit in C++</u></i><b style="left:17.3px;top:76.2px;width:2.6px;height:3.6px;background:#999;border-radius:.6px"></b><i style="left:21.8px;top:75.8px;font-size:3.8px;color:#b8b8b8;letter-spacing:-.05px">CameraBoom</i><b style="left:20.3px;top:83.8px;width:2.6px;height:3.6px;background:#999;border-radius:.6px"></b><i style="left:24.8px;top:83.4px;font-size:3.8px;color:#b8b8b8;letter-spacing:-.05px">FollowCamera</i><b style="left:17.3px;top:91.3px;width:2.6px;height:3.6px;background:#999;border-radius:.6px"></b><i style="left:21.8px;top:90.9px;font-size:3.8px;color:#b8b8b8;letter-spacing:-.05px">Mesh (CharacterMesh0)  <u>Edit in C++</u></i><b style="left:14.1px;top:102.2px;width:2.6px;height:3.6px;background:#999;border-radius:.6px"></b><i style="left:18.6px;top:101.8px;font-size:3.8px;color:#b8b8b8;letter-spacing:-.05px">Character Movement (CharMoveComp)</i><b style="left:8px;top:97.3px;width:82px;height:.5px;background:#333;"></b><b style="left:1px;top:118px;width:50px;height:8.5px;background:#1a1a1a;border-radius:1px 1px 0 0"></b><b style="left:3px;top:120px;width:3px;height:3.5px;background:#888;"></b><i style="left:9px;top:120.4px;font-size:3.8px;color:#c0c0c0;">My Blueprint</i><i style="left:44.5px;top:119.6px;font-size:4.6px;color:#aaa;">×</i><b style="left:1px;top:126.5px;width:90px;height:.5px;background:#0e0e0e;"></b><b style="left:6px;top:128px;width:18px;height:5.5px;background:#262626;border-radius:1px"></b><b style="left:9px;top:129.3px;width:1px;height:3px;background:#50c050;"></b><b style="left:8px;top:130.3px;width:3px;height:1px;background:#50c050;"></b><i style="left:12.5px;top:129.4px;font-size:3.8px;color:#ccc;">Add</i><div class="srch" style="left:26px;top:128px;width:54px;height:5.5px"></div><svg class="a" style="left:28px;top:128.8px" width="4" height="4" viewBox="0 0 4 4"><circle cx="1.6" cy="1.6" r="1.15" fill="none" stroke="#aaa" stroke-width=".55"/><path d="M2.4 2.4L3.6 3.6" stroke="#aaa" stroke-width=".6"/></svg><b style="left:83.6px;top:128.6px;width:3.6px;height:3.6px;border:.6px solid #aaa;border-radius:50%"></b><div class="hdr" style="top:137.29999999999998px"></div><i style="left:7px;top:139.2px;font-size:3.2px;color:#c8c8c8;font-weight:bold;">GRAPHS</i><i style="left:2.8px;top:139.2px;font-size:3.2px;color:#888;">v</i><b style="left:83.6px;top:138.7px;width:3.8px;height:3.8px;border:.6px solid #999;border-radius:50%"></b><b style="left:7px;top:147.8px;width:3px;height:2.6px;background:#aaa;"></b><i style="left:12.5px;top:147.9px;font-size:3.6px;">EventGraph</i><b style="left:10.5px;top:155.8px;width:2.8px;height:2.8px;border:.6px solid #ccc;border-radius:50%"></b><i style="left:15.5px;top:156px;font-size:3.6px;color:#b8b8b8;">Event BeginPlay</i><b style="left:10.5px;top:163.5px;width:2.8px;height:2.8px;border:.6px solid #ccc;border-radius:50%"></b><i style="left:15.5px;top:163.7px;font-size:3.6px;color:#b8b8b8;">EnhancedInputAction IA_Move</i><b style="left:10.5px;top:171.2px;width:2.8px;height:2.8px;border:.6px solid #ccc;border-radius:50%"></b><i style="left:15.5px;top:171.4px;font-size:3.6px;color:#b8b8b8;">EnhancedInputAction IA_Look</i><div class="hdr" style="top:178.69999999999996px"></div><i style="left:7px;top:180.6px;font-size:3.2px;color:#c8c8c8;font-weight:bold;">FUNCTIONS <span style='color:#666;font-weight:normal'>(14 OVERRIDABLE)</span></i><i style="left:2.8px;top:180.6px;font-size:3.2px;color:#888;">v</i><b style="left:57px;top:179.4px;width:22px;height:5.2px;background:#0e0e0e;border-radius:1px"></b><i style="left:59px;top:180.8px;font-size:3.2px;">Override v</i><b style="left:83.6px;top:180.1px;width:3.8px;height:3.8px;border:.6px solid #999;border-radius:50%"></b><i style="left:9px;top:189.7px;font-size:3.7px;color:#aaa;">ƒ</i><i style="left:13px;top:189.9px;font-size:3.6px;">Construction Script</i><i style="left:9px;top:197.5px;font-size:3.7px;color:#aaa;">ƒ</i><i style="left:13px;top:197.7px;font-size:3.6px;">Move</i><i style="left:9px;top:205.3px;font-size:3.7px;color:#aaa;">ƒ</i><i style="left:13px;top:205.5px;font-size:3.6px;">Look</i><div class="hdr" style="top:211.9px"></div><i style="left:7px;top:213.8px;font-size:3.2px;color:#c8c8c8;font-weight:bold;">MACROS</i><i style="left:2.8px;top:213.8px;font-size:3.2px;color:#888;">v</i><b style="left:83.6px;top:213.3px;width:3.8px;height:3.8px;border:.6px solid #999;border-radius:50%"></b><div class="hdr" style="top:221.20000000000002px"></div><i style="left:7px;top:223.1px;font-size:3.2px;color:#c8c8c8;font-weight:bold;">VARIABLES</i><i style="left:2.8px;top:223.1px;font-size:3.2px;color:#888;">v</i><b style="left:83.6px;top:222.6px;width:3.8px;height:3.8px;border:.6px solid #999;border-radius:50%"></b><i style="left:3px;top:230.7px;font-size:3.2px;color:#888;">v</i><i style="left:6px;top:230.8px;font-size:3.5px;color:#c8c8c8;font-weight:bold;">Components</i><i style="left:10px;top:236.8px;font-size:3.5px;color:#a8a8a8;">FollowCamera</i><b style="left:58px;top:237.5px;width:3.4px;height:1.8px;background:#30a0e0;border-radius:1px"></b><i style="left:10px;top:243px;font-size:3.5px;color:#a8a8a8;">CameraBoom</i><b style="left:58px;top:243.7px;width:3.4px;height:1.8px;background:#30a0e0;border-radius:1px"></b><div class="hdr" style="top:248.79999999999998px"></div><i style="left:7px;top:250.7px;font-size:3.2px;color:#c8c8c8;font-weight:bold;">EVENT DISPATCHERS</i><i style="left:2.8px;top:250.7px;font-size:3.2px;color:#888;">v</i><b style="left:83.6px;top:250.2px;width:3.8px;height:3.8px;border:.6px solid #999;border-radius:50%"></b><div class="hdr" style="top:258.2px"></div><i style="left:7px;top:260.1px;font-size:3.2px;color:#c8c8c8;font-weight:bold;">LOCAL VARIABLES <span style='color:#666;font-weight:normal'>(MOVE)</span></i><i style="left:2.8px;top:260.1px;font-size:3.2px;color:#888;">v</i><b style="left:83.6px;top:259.6px;width:3.8px;height:3.8px;border:.6px solid #999;border-radius:50%"></b><b style="left:93.5px;top:33.2px;width:3.5px;height:3px;background:#999;"></b><i style="left:99px;top:33.6px;font-size:3.8px;color:#a8a8a8;">Viewport</i><i style="left:145px;top:33.2px;font-size:3.9px;color:#aaa;">ƒ</i><i style="left:150.5px;top:33.6px;font-size:3.8px;color:#a8a8a8;">Construction Scr...</i><b style="left:194px;top:33.2px;width:3.4px;height:3.4px;border:.5px dashed #bbb"></b><i style="left:199.5px;top:33.6px;font-size:3.8px;color:#a8a8a8;">EventGraph</i><b style="left:245.5px;top:31px;width:48px;height:9px;background:#1e1e1e;border-radius:1px 1px 0 0"></b><i style="left:248px;top:33.2px;font-size:3.9px;color:#aaa;">ƒ</i><i style="left:253.5px;top:33.6px;font-size:3.8px;color:#d0d0d0;">Move</i><i style="left:290px;top:32.9px;font-size:4.6px;color:#aaa;">×</i><i style="left:298px;top:33.2px;font-size:3.9px;color:#aaa;">ƒ</i><i style="left:303.5px;top:33.6px;font-size:3.8px;color:#a8a8a8;">Look</i><b style="left:450px;top:31px;width:50px;height:9px;background:#1c1c1c;border-radius:1px 1px 0 0"></b><b style="left:452.5px;top:33px;width:3px;height:3.6px;background:#ccc;clip-path:polygon(0 100%,25% 100%,100% 25%,75% 0)"></b><i style="left:458.5px;top:33.6px;font-size:3.8px;color:#c8c8c8;">Details</i><i style="left:492.5px;top:32.9px;font-size:4.6px;color:#aaa;">×</i><div class="a graph"></div><div class="a" style="left:92px;top:40px;width:357px;height:278px;overflow:hidden"><div class="a" style="left:-92px;top:-40px;width:600px;height:337px"><svg class="a" style="left:0;top:0" width="600" height="337" viewBox="0 0 600 337"><path d="M151.4 101 L368.6 97.2" fill="none" stroke="#eeeeee" stroke-width="0.9"/><path d="M405 97.2 C430 97.2 440 110 449 128.7" fill="none" stroke="#eeeeee" stroke-width="0.9"/><path d="M151.4 108.1 C165 108 170 120 178 135 C185 148 190 150 196.7 149.7 C215 148 235 143 248.6 142.3 C290 140 320 130 366 120.5" fill="none" stroke="#3fc23f" stroke-width="0.9"/><path d="M151.4 115.3 C165 116 170 130 170.7 160 L170.7 205 C171 220 180 227.6 193 227.6 L449 227.6" fill="none" stroke="#3fc23f" stroke-width="0.9"/><path d="M270.4 129.9 H287" fill="none" stroke="#3fc23f" stroke-width="0.8"/><path d="M352 113 H366" fill="none" stroke="#d8a820" stroke-width="0.8"/><path d="M379 193.7 H399.6" fill="none" stroke="#3fc23f" stroke-width="0.8"/></svg><b style="left:195px;top:148.2px;width:3px;height:3px;background:#3fc23f;border-radius:50%"></b><b style="left:247.1px;top:140.8px;width:3px;height:3px;background:#3fc23f;border-radius:50%"></b><b style="left:191.5px;top:226.1px;width:3px;height:3px;background:#3fc23f;border-radius:50%"></b><div class="node" style="left:130px;top:91px;width:21.4px;height:29px;"><div class="nh" style="height:5.5px;background:linear-gradient(90deg,#7a2aa8,#5a1a80 60%,#3a1a4a)"></div></div><i style="left:134.5px;top:92.4px;font-size:3px;color:#f4f4f4;">▦ Move</i><div class="a" style="left:145.79999999999998px;top:99.3px;width:3px;height:3.4px;background:#f0f0f0;clip-path:polygon(0 0,60% 0,100% 50%,60% 100%,0 100%)"></div><div class="a" style="left:145.39999999999998px;top:106.8px;width:2.6px;height:2.6px;border-radius:50%;background:#3fd23f"></div><div class="a" style="left:145.39999999999998px;top:114.0px;width:2.6px;height:2.6px;border-radius:50%;background:#3fd23f"></div><div class="node" style="left:204px;top:102px;width:66.4px;height:31.6px;"><div class="nh" style="height:8px;background:linear-gradient(90deg,#4a8a3a,#3a6a30 60%,#2a3a28)"></div></div><i style="left:208.5px;top:103.7px;font-size:2.9px;color:#f4f4f4;">ƒ Get Control Rotation</i><i style="left:212px;top:106.9px;font-size:2.3px;color:rgba(200,230,255,.55);">Target is Pawn</i><div class="a" style="left:207.2px;top:114.1px;width:2.8px;height:2.8px;border-radius:50%;border:.55px solid #58b8f0"></div><i style="left:211.6px;top:114.3px;font-size:2.8px;color:#d8d8d8;">Target</i><div class="a" style="left:264.1px;top:114.1px;width:2.8px;height:2.8px;border-radius:50%;border:.55px solid #3fd23f"></div><i style="left:263.1px;top:114.3px;font-size:2.8px;color:#d8d8d8;transform:translateX(-100%)">Return Value X (Roll)</i><div class="a" style="left:264.1px;top:121.3px;width:2.8px;height:2.8px;border-radius:50%;border:.55px solid #3fd23f"></div><i style="left:263.1px;top:121.5px;font-size:2.8px;color:#d8d8d8;transform:translateX(-100%)">Return Value Y (Pitch)</i><div class="a" style="left:264.2px;top:128.6px;width:2.6px;height:2.6px;border-radius:50%;background:#3fd23f"></div><i style="left:263.1px;top:128.7px;font-size:2.8px;color:#d8d8d8;transform:translateX(-100%)">Return Value Z (Yaw)</i><div class="node" style="left:286.5px;top:103.4px;width:65.5px;height:30.2px;"><div class="nh" style="height:5.5px;background:linear-gradient(90deg,#4a8a3a,#3a6a30 60%,#2a3a28)"></div></div><i style="left:291px;top:104.9px;font-size:2.9px;color:#f4f4f4;">ƒ Get Forward Vector</i><div class="a" style="left:289.6px;top:111.89999999999999px;width:2.8px;height:2.8px;border-radius:50%;border:.55px solid #3fd23f"></div><i style="left:294px;top:112.1px;font-size:2.8px;color:#d8d8d8;">In Rot X (Roll)</i><div class="a" style="left:289.6px;top:120.3px;width:2.8px;height:2.8px;border-radius:50%;border:.55px solid #3fd23f"></div><i style="left:294px;top:120.5px;font-size:2.8px;color:#d8d8d8;">In Rot Y (Pitch)</i><div class="a" style="left:289.7px;top:128.6px;width:2.6px;height:2.6px;border-radius:50%;background:#3fd23f"></div><i style="left:294px;top:128.7px;font-size:2.8px;color:#d8d8d8;">In Rot Z (Yaw)</i><div class="a" style="left:345.7px;top:111.7px;width:2.6px;height:2.6px;border-radius:50%;background:#f0c020"></div><i style="left:344.6px;top:111.8px;font-size:2.8px;color:#d8d8d8;transform:translateX(-100%)">Return Value</i><div class="node" style="left:365.7px;top:84.1px;width:43.8px;height:48.3px;"><div class="nh" style="height:8.7px;background:linear-gradient(90deg,#3a7aa0,#2c5a78 60%,#25384a)"></div></div><i style="left:370.2px;top:85.9px;font-size:2.9px;color:#f4f4f4;">ƒ Add Movement Input</i><i style="left:373.7px;top:89.1px;font-size:2.3px;color:rgba(200,230,255,.55);">Target is Pawn</i><div class="a" style="left:368.5px;top:95.5px;width:3px;height:3.4px;background:#f0f0f0;clip-path:polygon(0 0,60% 0,100% 50%,60% 100%,0 100%)"></div><div class="a" style="left:403.6px;top:95.5px;width:3px;height:3.4px;background:#f0f0f0;clip-path:polygon(0 0,60% 0,100% 50%,60% 100%,0 100%)"></div><div class="a" style="left:368.5px;top:104.0px;width:2.8px;height:2.8px;border-radius:50%;border:.55px solid #58b8f0"></div><i style="left:372.9px;top:104.2px;font-size:2.8px;color:#d8d8d8;">Target</i><div class="a" style="left:368.59999999999997px;top:111.5px;width:2.6px;height:2.6px;border-radius:50%;background:#f0c020"></div><i style="left:372.9px;top:111.6px;font-size:2.8px;color:#d8d8d8;">World Direction</i><div class="a" style="left:368.59999999999997px;top:118.9px;width:2.6px;height:2.6px;border-radius:50%;background:#3fd23f"></div><i style="left:372.9px;top:119px;font-size:2.8px;color:#d8d8d8;">Scale Value</i><div class="a" style="left:368.5px;top:126.3px;width:2.8px;height:2.8px;border-radius:50%;border:.55px solid #c02020"></div><i style="left:372.9px;top:126.5px;font-size:2.8px;color:#d8d8d8;">Force</i><div class="node" style="left:313px;top:165.8px;width:66px;height:32.2px;"><div class="nh" style="height:8.6px;background:linear-gradient(90deg,#4a8a3a,#3a6a30 60%,#2a3a28)"></div></div><i style="left:317.5px;top:167.6px;font-size:2.9px;color:#f4f4f4;">ƒ Get Control Rotation</i><i style="left:321px;top:170.8px;font-size:2.3px;color:rgba(200,230,255,.55);">Target is Pawn</i><div class="a" style="left:316.0px;top:178.5px;width:2.8px;height:2.8px;border-radius:50%;border:.55px solid #58b8f0"></div><i style="left:320.4px;top:178.7px;font-size:2.8px;color:#d8d8d8;">Target</i><div class="a" style="left:372.20000000000005px;top:178.0px;width:2.8px;height:2.8px;border-radius:50%;border:.55px solid #3fd23f"></div><i style="left:371.2px;top:178.2px;font-size:2.8px;color:#d8d8d8;transform:translateX(-100%)">Return Value X (Roll)</i><div class="a" style="left:372.20000000000005px;top:185.1px;width:2.8px;height:2.8px;border-radius:50%;border:.55px solid #3fd23f"></div><i style="left:371.2px;top:185.3px;font-size:2.8px;color:#d8d8d8;transform:translateX(-100%)">Return Value Y (Pitch)</i><div class="a" style="left:372.3px;top:192.39999999999998px;width:2.6px;height:2.6px;border-radius:50%;background:#3fd23f"></div><i style="left:371.2px;top:192.5px;font-size:2.8px;color:#d8d8d8;transform:translateX(-100%)">Return Value Z (Yaw)</i><div class="node" style="left:398.8px;top:167px;width:55px;height:31px;"><div class="nh" style="height:6.2px;background:linear-gradient(90deg,#4a8a3a,#3a6a30 60%,#2a3a28)"></div></div><i style="left:403.3px;top:168.9px;font-size:2.9px;color:#f4f4f4;">ƒ Get Right Vector</i><div class="a" style="left:401.6px;top:176.0px;width:2.8px;height:2.8px;border-radius:50%;border:.55px solid #3fd23f"></div><i style="left:406px;top:176.2px;font-size:2.8px;color:#d8d8d8;">In Rot X (Roll)</i><div class="a" style="left:401.6px;top:184.4px;width:2.8px;height:2.8px;border-radius:50%;border:.55px solid #3fd23f"></div><i style="left:406px;top:184.6px;font-size:2.8px;color:#d8d8d8;">In Rot Y (Pitch)</i><div class="a" style="left:401.7px;top:192.7px;width:2.6px;height:2.6px;border-radius:50%;background:#3fd23f"></div><i style="left:406px;top:192.8px;font-size:2.8px;color:#d8d8d8;">In Rot Z (Yaw)</i><svg class="a" style="left:250px;top:140px;z-index:9" width="5" height="7" viewBox="0 0 5 7"><path d="M.3 .3L.3 5.6L1.6 4.4L2.6 6.6L3.5 6.2L2.5 4.1L4.3 4.1Z" fill="#fff" stroke="#000" stroke-width=".35"/></svg></div></div><div class="a gbar"></div><b style="left:95px;top:43px;width:2.6px;height:3.6px;border:.5px solid #777"></b><i style="left:99px;top:43.4px;font-size:3.2px;color:#888;">v</i><svg class="a" style="left:109.5px;top:43.5px" width="5" height="4" viewBox="0 0 5 4"><path d="M0 2L2.4 0V1.2H5V2.8H2.4V4Z" fill="#d8d8d8"/></svg><svg class="a" style="left:121.5px;top:43.5px" width="5" height="4" viewBox="0 0 5 4"><path d="M5 2L2.6 0V1.2H0V2.8H2.6V4Z" fill="#d8d8d8"/></svg><i style="left:137px;top:42.3px;font-size:5.3px;color:#aaa;">ƒ</i><i style="left:147px;top:42.5px;font-size:6.3px;color:#8e8e8e;">BP_Brute <span style='color:#ccc'>&gt;</span> Move</i><i style="left:425px;top:42.9px;font-size:5.1px;color:#3e3e3e;">Zoom -2</i><div class="wm">BLUEPRINT</div><div class="a dp"></div><div class="srch" style="left:453px;top:42.5px;width:128px;height:5.5px"></div><svg class="a" style="left:455px;top:43.2px" width="4" height="4" viewBox="0 0 4 4"><circle cx="1.6" cy="1.6" r="1.15" fill="none" stroke="#aaa" stroke-width=".55"/><path d="M2.4 2.4L3.6 3.6" stroke="#aaa" stroke-width=".6"/></svg><i style="left:461px;top:43.6px;font-size:3.5px;color:#444;">Search</i><b style="left:585.5px;top:43px;width:3.4px;height:3.6px;background:#888;"></b><b style="left:592.5px;top:43px;width:3.8px;height:3.8px;border:.6px solid #888;border-radius:50%"></b><div class="bd"></div></div></body></html>
